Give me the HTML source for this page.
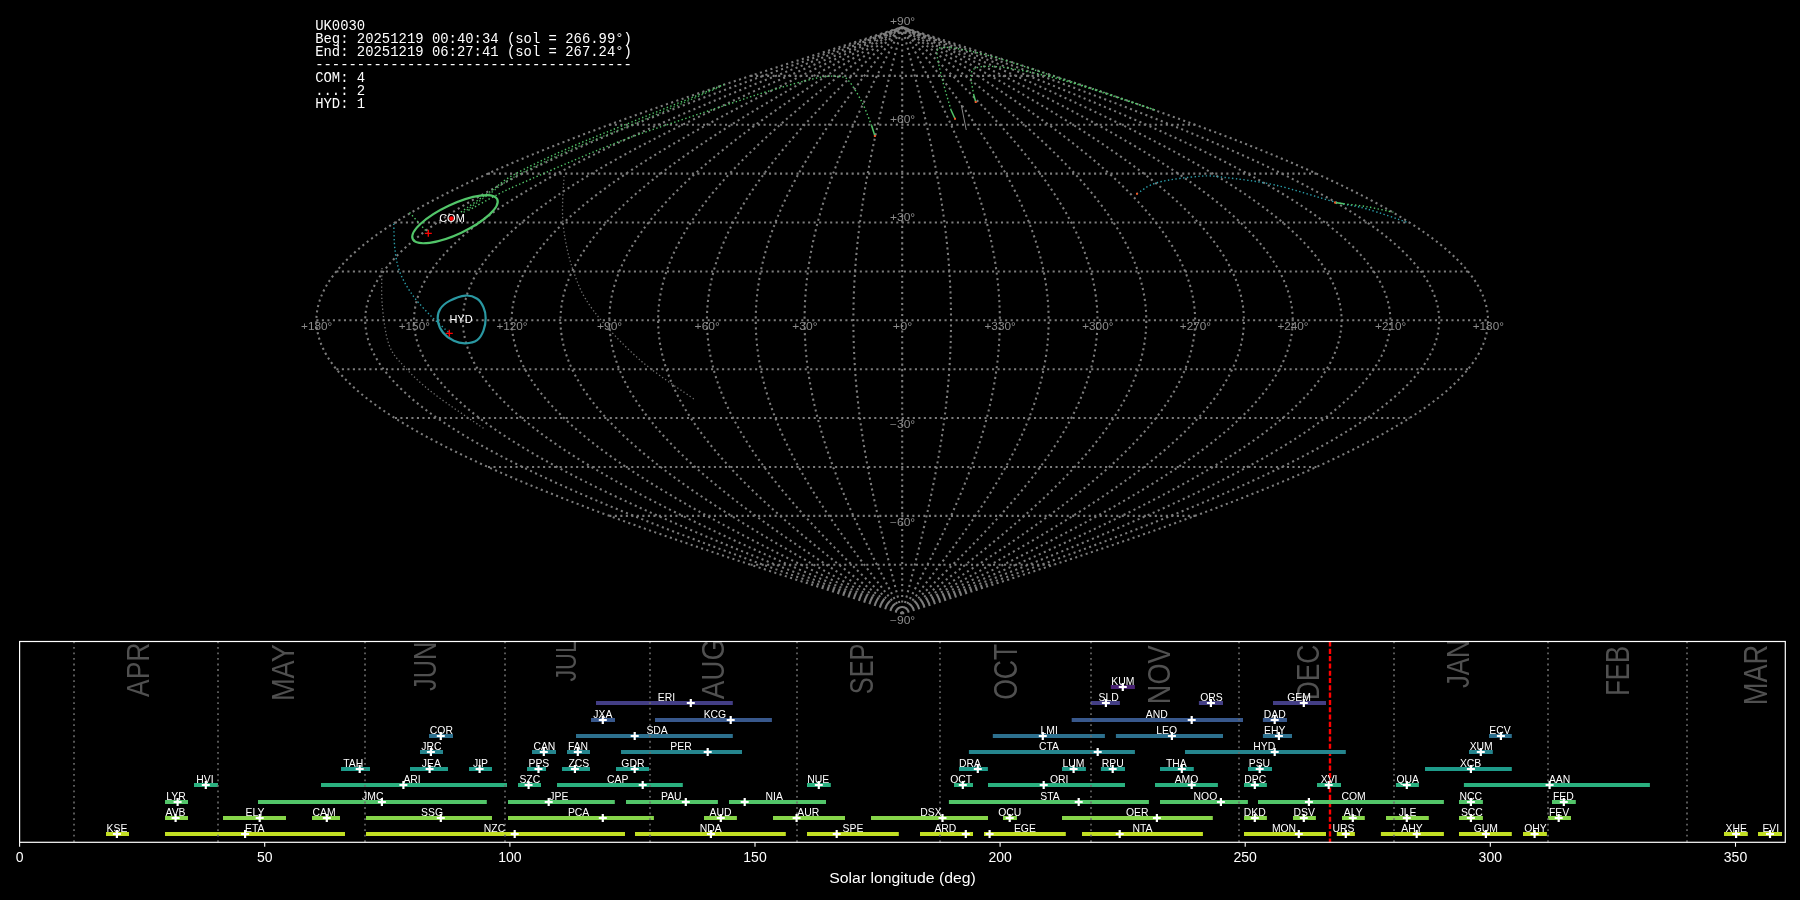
<!DOCTYPE html><html><head><meta charset="utf-8"><style>html,body{margin:0;padding:0;background:#000;width:1800px;height:900px;overflow:hidden}</style></head><body><svg width="1800" height="900" viewBox="0 0 1800 900" style="position:absolute;left:0;top:0;will-change:transform">
<rect width="1800" height="900" fill="#000"/>
<path d="M902.20,613.61 L899.64,612.80 L897.09,611.98 L894.53,611.17 L891.98,610.35 L889.42,609.54 L886.87,608.72 L884.31,607.91 L881.76,607.09 L879.20,606.28 L876.65,605.46 L874.09,604.65 L871.54,603.83 L868.99,603.02 L866.44,602.20 L863.89,601.39 L861.34,600.57 L858.79,599.76 L856.24,598.94 L853.69,598.13 L851.14,597.32 L848.60,596.50 L846.05,595.69 L843.51,594.87 L840.97,594.06 L838.42,593.24 L835.88,592.43 L833.35,591.61 L830.81,590.80 L828.27,589.98 L825.74,589.17 L823.20,588.35 L820.67,587.54 L818.14,586.72 L815.61,585.91 L813.08,585.09 L810.56,584.28 L808.04,583.46 L805.51,582.65 L802.99,581.83 L800.48,581.02 L797.96,580.21 L795.44,579.39 L792.93,578.58 L790.42,577.76 L787.91,576.95 L785.41,576.13 L782.90,575.32 L780.40,574.50 L777.90,573.69 L775.41,572.87 L772.91,572.06 L770.42,571.24 L767.93,570.43 L765.45,569.61 L762.96,568.80 L760.48,567.98 L758.00,567.17 L755.52,566.35 L753.05,565.54 L750.58,564.73 L748.11,563.91 L745.65,563.10 L743.19,562.28 L740.73,561.47 L738.27,560.65 L735.82,559.84 L733.37,559.02 L730.93,558.21 L728.48,557.39 L726.04,556.58 L723.61,555.76 L721.17,554.95 L718.75,554.13 L716.32,553.32 L713.90,552.50 L711.48,551.69 L709.06,550.87 L706.65,550.06 L704.25,549.24 L701.84,548.43 L699.44,547.62 L697.05,546.80 L694.65,545.99 L692.26,545.17 L689.88,544.36 L687.50,543.54 L685.12,542.73 L682.75,541.91 L680.38,541.10 L678.02,540.28 L675.66,539.47 L673.31,538.65 L670.96,537.84 L668.61,537.02 L666.27,536.21 L663.93,535.39 L661.60,534.58 L659.27,533.76 L656.94,532.95 L654.63,532.13 L652.31,531.32 L650.00,530.51 L647.70,529.69 L645.40,528.88 L643.10,528.06 L640.81,527.25 L638.53,526.43 L636.25,525.62 L633.97,524.80 L631.70,523.99 L629.44,523.17 L627.18,522.36 L624.92,521.54 L622.68,520.73 L620.43,519.91 L618.19,519.10 L615.96,518.28 L613.73,517.47 L611.51,516.65 L609.29,515.84 L607.08,515.03 L604.88,514.21 L602.68,513.40 L600.49,512.58 L598.30,511.77 L596.12,510.95 L593.94,510.14 L591.77,509.32 L589.60,508.51 L587.44,507.69 L585.29,506.88 L583.15,506.06 L581.00,505.25 L578.87,504.43 L576.74,503.62 L574.62,502.80 L572.50,501.99 L570.39,501.17 L568.29,500.36 L566.19,499.55 L564.10,498.73 L562.02,497.92 L559.94,497.10 L557.87,496.29 L555.80,495.47 L553.75,494.66 L551.70,493.84 L549.65,493.03 L547.61,492.21 L545.58,491.40 L543.56,490.58 L541.54,489.77 L539.53,488.95 L537.52,488.14 L535.53,487.32 L533.54,486.51 L531.55,485.69 L529.58,484.88 L527.61,484.06 L525.65,483.25 L523.69,482.44 L521.75,481.62 L519.81,480.81 L517.87,479.99 L515.95,479.18 L514.03,478.36 L512.12,477.55 L510.22,476.73 L508.32,475.92 L506.43,475.10 L504.55,474.29 L502.68,473.47 L500.81,472.66 L498.96,471.84 L497.10,471.03 L495.26,470.21 L493.43,469.40 L491.60,468.58 L489.78,467.77 L487.97,466.96 L486.17,466.14 L484.37,465.33 L482.58,464.51 L480.80,463.70 L479.03,462.88 L477.27,462.07 L475.51,461.25 L473.77,460.44 L472.03,459.62 L470.30,458.81 L468.57,457.99 L466.86,457.18 L465.15,456.36 L463.45,455.55 L461.76,454.73 L460.08,453.92 L458.41,453.10 L456.75,452.29 L455.09,451.47 L453.44,450.66 L451.80,449.85 L450.17,449.03 L448.55,448.22 L446.94,447.40 L445.34,446.59 L443.74,445.77 L442.15,444.96 L440.58,444.14 L439.01,443.33 L437.45,442.51 L435.89,441.70 L434.35,440.88 L432.82,440.07 L431.29,439.25 L429.78,438.44 L428.27,437.62 L426.77,436.81 L425.28,435.99 L423.80,435.18 L422.33,434.37 L420.87,433.55 L419.42,432.74 L417.98,431.92 L416.54,431.11 L415.12,430.29 L413.70,429.48 L412.30,428.66 L410.90,427.85 L409.51,427.03 L408.13,426.22 L406.76,425.40 L405.40,424.59 L404.06,423.77 L402.71,422.96 L401.38,422.14 L400.06,421.33 L398.75,420.51 L397.45,419.70 L396.16,418.88 L394.87,418.07 L393.60,417.26 L392.34,416.44 L391.08,415.63 L389.84,414.81 L388.60,414.00 L387.38,413.18 L386.17,412.37 L384.96,411.55 L383.77,410.74 L382.58,409.92 L381.40,409.11 L380.24,408.29 L379.08,407.48 L377.94,406.66 L376.80,405.85 L375.68,405.03 L374.56,404.22 L373.46,403.40 L372.36,402.59 L371.28,401.77 L370.20,400.96 L369.14,400.15 L368.08,399.33 L367.04,398.52 L366.00,397.70 L364.98,396.89 L363.96,396.07 L362.96,395.26 L361.97,394.44 L360.98,393.63 L360.01,392.81 L359.05,392.00 L358.09,391.18 L357.15,390.37 L356.22,389.55 L355.30,388.74 L354.39,387.92 L353.49,387.11 L352.60,386.29 L351.72,385.48 L350.85,384.67 L349.99,383.85 L349.14,383.04 L348.31,382.22 L347.48,381.41 L346.66,380.59 L345.86,379.78 L345.06,378.96 L344.28,378.15 L343.50,377.33 L342.74,376.52 L341.99,375.70 L341.25,374.89 L340.51,374.07 L339.79,373.26 L339.08,372.44 L338.38,371.63 L337.70,370.81 L337.02,370.00 L336.35,369.19 L335.69,368.37 L335.05,367.56 L334.41,366.74 L333.79,365.93 L333.18,365.11 L332.58,364.30 L331.98,363.48 L331.40,362.67 L330.83,361.85 L330.28,361.04 L329.73,360.22 L329.19,359.41 L328.67,358.59 L328.15,357.78 L327.65,356.96 L327.15,356.15 L326.67,355.33 L326.20,354.52 L325.74,353.70 L325.29,352.89 L324.85,352.08 L324.42,351.26 L324.01,350.45 L323.60,349.63 L323.21,348.82 L322.82,348.00 L322.45,347.19 L322.09,346.37 L321.74,345.56 L321.40,344.74 L321.07,343.93 L320.76,343.11 L320.45,342.30 L320.16,341.48 L319.87,340.67 L319.60,339.85 L319.34,339.04 L319.09,338.22 L318.85,337.41 L318.62,336.60 L318.40,335.78 L318.20,334.97 L318.00,334.15 L317.82,333.34 L317.64,332.52 L317.48,331.71 L317.33,330.89 L317.19,330.08 L317.06,329.26 L316.95,328.45 L316.84,327.63 L316.75,326.82 L316.66,326.00 L316.59,325.19 L316.53,324.37 L316.48,323.56 L316.44,322.74 L316.41,321.93 L316.40,321.11 L316.39,320.30 L316.40,319.49 L316.41,318.67 L316.44,317.86 L316.48,317.04 L316.53,316.23 L316.59,315.41 L316.66,314.60 L316.75,313.78 L316.84,312.97 L316.95,312.15 L317.06,311.34 L317.19,310.52 L317.33,309.71 L317.48,308.89 L317.64,308.08 L317.82,307.26 L318.00,306.45 L318.20,305.63 L318.40,304.82 L318.62,304.00 L318.85,303.19 L319.09,302.38 L319.34,301.56 L319.60,300.75 L319.87,299.93 L320.16,299.12 L320.45,298.30 L320.76,297.49 L321.07,296.67 L321.40,295.86 L321.74,295.04 L322.09,294.23 L322.45,293.41 L322.82,292.60 L323.21,291.78 L323.60,290.97 L324.01,290.15 L324.42,289.34 L324.85,288.52 L325.29,287.71 L325.74,286.90 L326.20,286.08 L326.67,285.27 L327.15,284.45 L327.65,283.64 L328.15,282.82 L328.67,282.01 L329.19,281.19 L329.73,280.38 L330.28,279.56 L330.83,278.75 L331.40,277.93 L331.98,277.12 L332.58,276.30 L333.18,275.49 L333.79,274.67 L334.41,273.86 L335.05,273.04 L335.69,272.23 L336.35,271.42 L337.02,270.60 L337.70,269.79 L338.38,268.97 L339.08,268.16 L339.79,267.34 L340.51,266.53 L341.25,265.71 L341.99,264.90 L342.74,264.08 L343.50,263.27 L344.28,262.45 L345.06,261.64 L345.86,260.82 L346.66,260.01 L347.48,259.19 L348.31,258.38 L349.14,257.56 L349.99,256.75 L350.85,255.93 L351.72,255.12 L352.60,254.31 L353.49,253.49 L354.39,252.68 L355.30,251.86 L356.22,251.05 L357.15,250.23 L358.09,249.42 L359.05,248.60 L360.01,247.79 L360.98,246.97 L361.97,246.16 L362.96,245.34 L363.96,244.53 L364.98,243.71 L366.00,242.90 L367.04,242.08 L368.08,241.27 L369.14,240.45 L370.20,239.64 L371.28,238.83 L372.36,238.01 L373.46,237.20 L374.56,236.38 L375.68,235.57 L376.80,234.75 L377.94,233.94 L379.08,233.12 L380.24,232.31 L381.40,231.49 L382.58,230.68 L383.77,229.86 L384.96,229.05 L386.17,228.23 L387.38,227.42 L388.60,226.60 L389.84,225.79 L391.08,224.97 L392.34,224.16 L393.60,223.34 L394.87,222.53 L396.16,221.72 L397.45,220.90 L398.75,220.09 L400.06,219.27 L401.38,218.46 L402.71,217.64 L404.06,216.83 L405.40,216.01 L406.76,215.20 L408.13,214.38 L409.51,213.57 L410.90,212.75 L412.30,211.94 L413.70,211.12 L415.12,210.31 L416.54,209.49 L417.98,208.68 L419.42,207.86 L420.87,207.05 L422.33,206.24 L423.80,205.42 L425.28,204.61 L426.77,203.79 L428.27,202.98 L429.78,202.16 L431.29,201.35 L432.82,200.53 L434.35,199.72 L435.89,198.90 L437.45,198.09 L439.01,197.27 L440.58,196.46 L442.15,195.64 L443.74,194.83 L445.34,194.01 L446.94,193.20 L448.55,192.38 L450.17,191.57 L451.80,190.75 L453.44,189.94 L455.09,189.13 L456.75,188.31 L458.41,187.50 L460.08,186.68 L461.76,185.87 L463.45,185.05 L465.15,184.24 L466.86,183.42 L468.57,182.61 L470.30,181.79 L472.03,180.98 L473.77,180.16 L475.51,179.35 L477.27,178.53 L479.03,177.72 L480.80,176.90 L482.58,176.09 L484.37,175.27 L486.17,174.46 L487.97,173.65 L489.78,172.83 L491.60,172.02 L493.43,171.20 L495.26,170.39 L497.10,169.57 L498.96,168.76 L500.81,167.94 L502.68,167.13 L504.55,166.31 L506.43,165.50 L508.32,164.68 L510.22,163.87 L512.12,163.05 L514.03,162.24 L515.95,161.42 L517.87,160.61 L519.81,159.79 L521.75,158.98 L523.69,158.16 L525.65,157.35 L527.61,156.54 L529.58,155.72 L531.55,154.91 L533.54,154.09 L535.53,153.28 L537.52,152.46 L539.53,151.65 L541.54,150.83 L543.56,150.02 L545.58,149.20 L547.61,148.39 L549.65,147.57 L551.70,146.76 L553.75,145.94 L555.80,145.13 L557.87,144.31 L559.94,143.50 L562.02,142.68 L564.10,141.87 L566.19,141.06 L568.29,140.24 L570.39,139.43 L572.50,138.61 L574.62,137.80 L576.74,136.98 L578.87,136.17 L581.00,135.35 L583.15,134.54 L585.29,133.72 L587.44,132.91 L589.60,132.09 L591.77,131.28 L593.94,130.46 L596.12,129.65 L598.30,128.83 L600.49,128.02 L602.68,127.20 L604.88,126.39 L607.08,125.57 L609.29,124.76 L611.51,123.95 L613.73,123.13 L615.96,122.32 L618.19,121.50 L620.43,120.69 L622.68,119.87 L624.92,119.06 L627.18,118.24 L629.44,117.43 L631.70,116.61 L633.97,115.80 L636.25,114.98 L638.53,114.17 L640.81,113.35 L643.10,112.54 L645.40,111.72 L647.70,110.91 L650.00,110.09 L652.31,109.28 L654.63,108.47 L656.94,107.65 L659.27,106.84 L661.60,106.02 L663.93,105.21 L666.27,104.39 L668.61,103.58 L670.96,102.76 L673.31,101.95 L675.66,101.13 L678.02,100.32 L680.38,99.50 L682.75,98.69 L685.12,97.87 L687.50,97.06 L689.88,96.24 L692.26,95.43 L694.65,94.61 L697.05,93.80 L699.44,92.98 L701.84,92.17 L704.25,91.36 L706.65,90.54 L709.06,89.73 L711.48,88.91 L713.90,88.10 L716.32,87.28 L718.75,86.47 L721.17,85.65 L723.61,84.84 L726.04,84.02 L728.48,83.21 L730.93,82.39 L733.37,81.58 L735.82,80.76 L738.27,79.95 L740.73,79.13 L743.19,78.32 L745.65,77.50 L748.11,76.69 L750.58,75.88 L753.05,75.06 L755.52,74.25 L758.00,73.43 L760.48,72.62 L762.96,71.80 L765.45,70.99 L767.93,70.17 L770.42,69.36 L772.91,68.54 L775.41,67.73 L777.90,66.91 L780.40,66.10 L782.90,65.28 L785.41,64.47 L787.91,63.65 L790.42,62.84 L792.93,62.02 L795.44,61.21 L797.96,60.39 L800.48,59.58 L802.99,58.77 L805.51,57.95 L808.04,57.14 L810.56,56.32 L813.08,55.51 L815.61,54.69 L818.14,53.88 L820.67,53.06 L823.20,52.25 L825.74,51.43 L828.27,50.62 L830.81,49.80 L833.35,48.99 L835.88,48.17 L838.42,47.36 L840.97,46.54 L843.51,45.73 L846.05,44.91 L848.60,44.10 L851.14,43.29 L853.69,42.47 L856.24,41.66 L858.79,40.84 L861.34,40.03 L863.89,39.21 L866.44,38.40 L868.99,37.58 L871.54,36.77 L874.09,35.95 L876.65,35.14 L879.20,34.32 L881.76,33.51 L884.31,32.69 L886.87,31.88 L889.42,31.06 L891.98,30.25 L894.53,29.43 L897.09,28.62 L899.64,27.80 L902.20,26.99 M902.20,613.61 L899.86,612.80 L897.51,611.98 L895.17,611.17 L892.83,610.35 L890.49,609.54 L888.14,608.72 L885.80,607.91 L883.46,607.09 L881.12,606.28 L878.78,605.46 L876.44,604.65 L874.10,603.83 L871.76,603.02 L869.42,602.20 L867.08,601.39 L864.74,600.57 L862.40,599.76 L860.07,598.94 L857.73,598.13 L855.40,597.32 L853.06,596.50 L850.73,595.69 L848.40,594.87 L846.07,594.06 L843.74,593.24 L841.41,592.43 L839.08,591.61 L836.76,590.80 L834.43,589.98 L832.11,589.17 L829.79,588.35 L827.47,587.54 L825.15,586.72 L822.83,585.91 L820.51,585.09 L818.20,584.28 L815.88,583.46 L813.57,582.65 L811.26,581.83 L808.95,581.02 L806.65,580.21 L804.34,579.39 L802.04,578.58 L799.74,577.76 L797.44,576.95 L795.14,576.13 L792.85,575.32 L790.55,574.50 L788.26,573.69 L785.97,572.87 L783.69,572.06 L781.40,571.24 L779.12,570.43 L776.84,569.61 L774.56,568.80 L772.29,567.98 L770.02,567.17 L767.75,566.35 L765.48,565.54 L763.22,564.73 L760.95,563.91 L758.69,563.10 L756.44,562.28 L754.18,561.47 L751.93,560.65 L749.69,559.84 L747.44,559.02 L745.20,558.21 L742.96,557.39 L740.72,556.58 L738.49,555.76 L736.26,554.95 L734.03,554.13 L731.81,553.32 L729.59,552.50 L727.37,551.69 L725.16,550.87 L722.95,550.06 L720.74,549.24 L718.54,548.43 L716.34,547.62 L714.14,546.80 L711.95,545.99 L709.76,545.17 L707.57,544.36 L705.39,543.54 L703.21,542.73 L701.04,541.91 L698.87,541.10 L696.70,540.28 L694.54,539.47 L692.38,538.65 L690.23,537.84 L688.07,537.02 L685.93,536.21 L683.79,535.39 L681.65,534.58 L679.51,533.76 L677.38,532.95 L675.26,532.13 L673.14,531.32 L671.02,530.51 L668.91,529.69 L666.80,528.88 L664.69,528.06 L662.60,527.25 L660.50,526.43 L658.41,525.62 L656.33,524.80 L654.24,523.99 L652.17,523.17 L650.10,522.36 L648.03,521.54 L645.97,520.73 L643.91,519.91 L641.86,519.10 L639.81,518.28 L637.77,517.47 L635.74,516.65 L633.70,515.84 L631.68,515.03 L629.66,514.21 L627.64,513.40 L625.63,512.58 L623.62,511.77 L621.62,510.95 L619.63,510.14 L617.64,509.32 L615.65,508.51 L613.67,507.69 L611.70,506.88 L609.73,506.06 L607.77,505.25 L605.81,504.43 L603.86,503.62 L601.92,502.80 L599.98,501.99 L598.04,501.17 L596.12,500.36 L594.19,499.55 L592.28,498.73 L590.37,497.92 L588.46,497.10 L586.56,496.29 L584.67,495.47 L582.78,494.66 L580.90,493.84 L579.03,493.03 L577.16,492.21 L575.30,491.40 L573.44,490.58 L571.59,489.77 L569.75,488.95 L567.91,488.14 L566.08,487.32 L564.26,486.51 L562.44,485.69 L560.63,484.88 L558.83,484.06 L557.03,483.25 L555.24,482.44 L553.45,481.62 L551.67,480.81 L549.90,479.99 L548.14,479.18 L546.38,478.36 L544.63,477.55 L542.88,476.73 L541.14,475.92 L539.41,475.10 L537.69,474.29 L535.97,473.47 L534.26,472.66 L532.56,471.84 L530.86,471.03 L529.17,470.21 L527.49,469.40 L525.82,468.58 L524.15,467.77 L522.49,466.96 L520.84,466.14 L519.19,465.33 L517.55,464.51 L515.92,463.70 L514.30,462.88 L512.68,462.07 L511.07,461.25 L509.47,460.44 L507.87,459.62 L506.29,458.81 L504.71,457.99 L503.14,457.18 L501.57,456.36 L500.02,455.55 L498.47,454.73 L496.93,453.92 L495.39,453.10 L493.87,452.29 L492.35,451.47 L490.84,450.66 L489.34,449.85 L487.84,449.03 L486.36,448.22 L484.88,447.40 L483.41,446.59 L481.95,445.77 L480.49,444.96 L479.04,444.14 L477.61,443.33 L476.18,442.51 L474.75,441.70 L473.34,440.88 L471.93,440.07 L470.53,439.25 L469.15,438.44 L467.76,437.62 L466.39,436.81 L465.03,435.99 L463.67,435.18 L462.32,434.37 L460.98,433.55 L459.65,432.74 L458.33,431.92 L457.01,431.11 L455.71,430.29 L454.41,429.48 L453.12,428.66 L451.84,427.85 L450.57,427.03 L449.31,426.22 L448.05,425.40 L446.80,424.59 L445.57,423.77 L444.34,422.96 L443.12,422.14 L441.91,421.33 L440.71,420.51 L439.51,419.70 L438.33,418.88 L437.15,418.07 L435.98,417.26 L434.83,416.44 L433.68,415.63 L432.54,414.81 L431.40,414.00 L430.28,413.18 L429.17,412.37 L428.06,411.55 L426.97,410.74 L425.88,409.92 L424.80,409.11 L423.74,408.29 L422.68,407.48 L421.63,406.66 L420.59,405.85 L419.55,405.03 L418.53,404.22 L417.52,403.40 L416.51,402.59 L415.52,401.77 L414.53,400.96 L413.56,400.15 L412.59,399.33 L411.63,398.52 L410.68,397.70 L409.75,396.89 L408.82,396.07 L407.90,395.26 L406.98,394.44 L406.08,393.63 L405.19,392.81 L404.31,392.00 L403.44,391.18 L402.57,390.37 L401.72,389.55 L400.87,388.74 L400.04,387.92 L399.21,387.11 L398.40,386.29 L397.59,385.48 L396.80,384.67 L396.01,383.85 L395.23,383.04 L394.46,382.22 L393.71,381.41 L392.96,380.59 L392.22,379.78 L391.49,378.96 L390.77,378.15 L390.06,377.33 L389.36,376.52 L388.67,375.70 L387.99,374.89 L387.32,374.07 L386.66,373.26 L386.01,372.44 L385.37,371.63 L384.74,370.81 L384.12,370.00 L383.51,369.19 L382.90,368.37 L382.31,367.56 L381.73,366.74 L381.16,365.93 L380.60,365.11 L380.04,364.30 L379.50,363.48 L378.97,362.67 L378.45,361.85 L377.94,361.04 L377.43,360.22 L376.94,359.41 L376.46,358.59 L375.99,357.78 L375.53,356.96 L375.07,356.15 L374.63,355.33 L374.20,354.52 L373.78,353.70 L373.37,352.89 L372.96,352.08 L372.57,351.26 L372.19,350.45 L371.82,349.63 L371.46,348.82 L371.11,348.00 L370.76,347.19 L370.43,346.37 L370.11,345.56 L369.80,344.74 L369.50,343.93 L369.21,343.11 L368.93,342.30 L368.66,341.48 L368.40,340.67 L368.15,339.85 L367.91,339.04 L367.68,338.22 L367.46,337.41 L367.25,336.60 L367.05,335.78 L366.86,334.97 L366.68,334.15 L366.52,333.34 L366.36,332.52 L366.21,331.71 L366.07,330.89 L365.94,330.08 L365.83,329.26 L365.72,328.45 L365.62,327.63 L365.53,326.82 L365.46,326.00 L365.39,325.19 L365.34,324.37 L365.29,323.56 L365.25,322.74 L365.23,321.93 L365.21,321.11 L365.21,320.30 L365.21,319.49 L365.23,318.67 L365.25,317.86 L365.29,317.04 L365.34,316.23 L365.39,315.41 L365.46,314.60 L365.53,313.78 L365.62,312.97 L365.72,312.15 L365.83,311.34 L365.94,310.52 L366.07,309.71 L366.21,308.89 L366.36,308.08 L366.52,307.26 L366.68,306.45 L366.86,305.63 L367.05,304.82 L367.25,304.00 L367.46,303.19 L367.68,302.38 L367.91,301.56 L368.15,300.75 L368.40,299.93 L368.66,299.12 L368.93,298.30 L369.21,297.49 L369.50,296.67 L369.80,295.86 L370.11,295.04 L370.43,294.23 L370.76,293.41 L371.11,292.60 L371.46,291.78 L371.82,290.97 L372.19,290.15 L372.57,289.34 L372.96,288.52 L373.37,287.71 L373.78,286.90 L374.20,286.08 L374.63,285.27 L375.07,284.45 L375.53,283.64 L375.99,282.82 L376.46,282.01 L376.94,281.19 L377.43,280.38 L377.94,279.56 L378.45,278.75 L378.97,277.93 L379.50,277.12 L380.04,276.30 L380.60,275.49 L381.16,274.67 L381.73,273.86 L382.31,273.04 L382.90,272.23 L383.51,271.42 L384.12,270.60 L384.74,269.79 L385.37,268.97 L386.01,268.16 L386.66,267.34 L387.32,266.53 L387.99,265.71 L388.67,264.90 L389.36,264.08 L390.06,263.27 L390.77,262.45 L391.49,261.64 L392.22,260.82 L392.96,260.01 L393.71,259.19 L394.46,258.38 L395.23,257.56 L396.01,256.75 L396.80,255.93 L397.59,255.12 L398.40,254.31 L399.21,253.49 L400.04,252.68 L400.87,251.86 L401.72,251.05 L402.57,250.23 L403.44,249.42 L404.31,248.60 L405.19,247.79 L406.08,246.97 L406.98,246.16 L407.90,245.34 L408.82,244.53 L409.75,243.71 L410.68,242.90 L411.63,242.08 L412.59,241.27 L413.56,240.45 L414.53,239.64 L415.52,238.83 L416.51,238.01 L417.52,237.20 L418.53,236.38 L419.55,235.57 L420.59,234.75 L421.63,233.94 L422.68,233.12 L423.74,232.31 L424.80,231.49 L425.88,230.68 L426.97,229.86 L428.06,229.05 L429.17,228.23 L430.28,227.42 L431.40,226.60 L432.54,225.79 L433.68,224.97 L434.83,224.16 L435.98,223.34 L437.15,222.53 L438.33,221.72 L439.51,220.90 L440.71,220.09 L441.91,219.27 L443.12,218.46 L444.34,217.64 L445.57,216.83 L446.80,216.01 L448.05,215.20 L449.31,214.38 L450.57,213.57 L451.84,212.75 L453.12,211.94 L454.41,211.12 L455.71,210.31 L457.01,209.49 L458.33,208.68 L459.65,207.86 L460.98,207.05 L462.32,206.24 L463.67,205.42 L465.03,204.61 L466.39,203.79 L467.76,202.98 L469.15,202.16 L470.53,201.35 L471.93,200.53 L473.34,199.72 L474.75,198.90 L476.18,198.09 L477.61,197.27 L479.04,196.46 L480.49,195.64 L481.95,194.83 L483.41,194.01 L484.88,193.20 L486.36,192.38 L487.84,191.57 L489.34,190.75 L490.84,189.94 L492.35,189.13 L493.87,188.31 L495.39,187.50 L496.93,186.68 L498.47,185.87 L500.02,185.05 L501.57,184.24 L503.14,183.42 L504.71,182.61 L506.29,181.79 L507.87,180.98 L509.47,180.16 L511.07,179.35 L512.68,178.53 L514.30,177.72 L515.92,176.90 L517.55,176.09 L519.19,175.27 L520.84,174.46 L522.49,173.65 L524.15,172.83 L525.82,172.02 L527.49,171.20 L529.17,170.39 L530.86,169.57 L532.56,168.76 L534.26,167.94 L535.97,167.13 L537.69,166.31 L539.41,165.50 L541.14,164.68 L542.88,163.87 L544.63,163.05 L546.38,162.24 L548.14,161.42 L549.90,160.61 L551.67,159.79 L553.45,158.98 L555.24,158.16 L557.03,157.35 L558.83,156.54 L560.63,155.72 L562.44,154.91 L564.26,154.09 L566.08,153.28 L567.91,152.46 L569.75,151.65 L571.59,150.83 L573.44,150.02 L575.30,149.20 L577.16,148.39 L579.03,147.57 L580.90,146.76 L582.78,145.94 L584.67,145.13 L586.56,144.31 L588.46,143.50 L590.37,142.68 L592.28,141.87 L594.19,141.06 L596.12,140.24 L598.04,139.43 L599.98,138.61 L601.92,137.80 L603.86,136.98 L605.81,136.17 L607.77,135.35 L609.73,134.54 L611.70,133.72 L613.67,132.91 L615.65,132.09 L617.64,131.28 L619.63,130.46 L621.62,129.65 L623.62,128.83 L625.63,128.02 L627.64,127.20 L629.66,126.39 L631.68,125.57 L633.70,124.76 L635.74,123.95 L637.77,123.13 L639.81,122.32 L641.86,121.50 L643.91,120.69 L645.97,119.87 L648.03,119.06 L650.10,118.24 L652.17,117.43 L654.24,116.61 L656.33,115.80 L658.41,114.98 L660.50,114.17 L662.60,113.35 L664.69,112.54 L666.80,111.72 L668.91,110.91 L671.02,110.09 L673.14,109.28 L675.26,108.47 L677.38,107.65 L679.51,106.84 L681.65,106.02 L683.79,105.21 L685.93,104.39 L688.07,103.58 L690.23,102.76 L692.38,101.95 L694.54,101.13 L696.70,100.32 L698.87,99.50 L701.04,98.69 L703.21,97.87 L705.39,97.06 L707.57,96.24 L709.76,95.43 L711.95,94.61 L714.14,93.80 L716.34,92.98 L718.54,92.17 L720.74,91.36 L722.95,90.54 L725.16,89.73 L727.37,88.91 L729.59,88.10 L731.81,87.28 L734.03,86.47 L736.26,85.65 L738.49,84.84 L740.72,84.02 L742.96,83.21 L745.20,82.39 L747.44,81.58 L749.69,80.76 L751.93,79.95 L754.18,79.13 L756.44,78.32 L758.69,77.50 L760.95,76.69 L763.22,75.88 L765.48,75.06 L767.75,74.25 L770.02,73.43 L772.29,72.62 L774.56,71.80 L776.84,70.99 L779.12,70.17 L781.40,69.36 L783.69,68.54 L785.97,67.73 L788.26,66.91 L790.55,66.10 L792.85,65.28 L795.14,64.47 L797.44,63.65 L799.74,62.84 L802.04,62.02 L804.34,61.21 L806.65,60.39 L808.95,59.58 L811.26,58.77 L813.57,57.95 L815.88,57.14 L818.20,56.32 L820.51,55.51 L822.83,54.69 L825.15,53.88 L827.47,53.06 L829.79,52.25 L832.11,51.43 L834.43,50.62 L836.76,49.80 L839.08,48.99 L841.41,48.17 L843.74,47.36 L846.07,46.54 L848.40,45.73 L850.73,44.91 L853.06,44.10 L855.40,43.29 L857.73,42.47 L860.07,41.66 L862.40,40.84 L864.74,40.03 L867.08,39.21 L869.42,38.40 L871.76,37.58 L874.10,36.77 L876.44,35.95 L878.78,35.14 L881.12,34.32 L883.46,33.51 L885.80,32.69 L888.14,31.88 L890.49,31.06 L892.83,30.25 L895.17,29.43 L897.51,28.62 L899.86,27.80 L902.20,26.99 M902.20,613.61 L900.07,612.80 L897.94,611.98 L895.81,611.17 L893.68,610.35 L891.55,609.54 L889.42,608.72 L887.29,607.91 L885.16,607.09 L883.03,606.28 L880.91,605.46 L878.78,604.65 L876.65,603.83 L874.52,603.02 L872.40,602.20 L870.27,601.39 L868.15,600.57 L866.02,599.76 L863.90,598.94 L861.78,598.13 L859.65,597.32 L857.53,596.50 L855.41,595.69 L853.29,594.87 L851.17,594.06 L849.05,593.24 L846.94,592.43 L844.82,591.61 L842.71,590.80 L840.59,589.98 L838.48,589.17 L836.37,588.35 L834.26,587.54 L832.15,586.72 L830.04,585.91 L827.94,585.09 L825.83,584.28 L823.73,583.46 L821.63,582.65 L819.53,581.83 L817.43,581.02 L815.33,580.21 L813.24,579.39 L811.14,578.58 L809.05,577.76 L806.96,576.95 L804.87,576.13 L802.79,575.32 L800.70,574.50 L798.62,573.69 L796.54,572.87 L794.46,572.06 L792.38,571.24 L790.31,570.43 L788.24,569.61 L786.17,568.80 L784.10,567.98 L782.03,567.17 L779.97,566.35 L777.91,565.54 L775.85,564.73 L773.79,563.91 L771.74,563.10 L769.69,562.28 L767.64,561.47 L765.59,560.65 L763.55,559.84 L761.51,559.02 L759.47,558.21 L757.44,557.39 L755.40,556.58 L753.37,555.76 L751.35,554.95 L749.32,554.13 L747.30,553.32 L745.28,552.50 L743.27,551.69 L741.25,550.87 L739.24,550.06 L737.24,549.24 L735.23,548.43 L733.23,547.62 L731.24,546.80 L729.24,545.99 L727.25,545.17 L725.27,544.36 L723.28,543.54 L721.30,542.73 L719.33,541.91 L717.35,541.10 L715.38,540.28 L713.42,539.47 L711.45,538.65 L709.50,537.84 L707.54,537.02 L705.59,536.21 L703.64,535.39 L701.70,534.58 L699.76,533.76 L697.82,532.95 L695.89,532.13 L693.96,531.32 L692.04,530.51 L690.11,529.69 L688.20,528.88 L686.29,528.06 L684.38,527.25 L682.47,526.43 L680.57,525.62 L678.68,524.80 L676.79,523.99 L674.90,523.17 L673.02,522.36 L671.14,521.54 L669.26,520.73 L667.39,519.91 L665.53,519.10 L663.67,518.28 L661.81,517.47 L659.96,516.65 L658.11,515.84 L656.27,515.03 L654.43,514.21 L652.60,513.40 L650.77,512.58 L648.95,511.77 L647.13,510.95 L645.32,510.14 L643.51,509.32 L641.70,508.51 L639.90,507.69 L638.11,506.88 L636.32,506.06 L634.54,505.25 L632.76,504.43 L630.98,503.62 L629.22,502.80 L627.45,501.99 L625.69,501.17 L623.94,500.36 L622.19,499.55 L620.45,498.73 L618.72,497.92 L616.98,497.10 L615.26,496.29 L613.54,495.47 L611.82,494.66 L610.11,493.84 L608.41,493.03 L606.71,492.21 L605.02,491.40 L603.33,490.58 L601.65,489.77 L599.97,488.95 L598.30,488.14 L596.64,487.32 L594.98,486.51 L593.33,485.69 L591.68,484.88 L590.04,484.06 L588.41,483.25 L586.78,482.44 L585.16,481.62 L583.54,480.81 L581.93,479.99 L580.32,479.18 L578.73,478.36 L577.13,477.55 L575.55,476.73 L573.97,475.92 L572.39,475.10 L570.83,474.29 L569.27,473.47 L567.71,472.66 L566.16,471.84 L564.62,471.03 L563.09,470.21 L561.56,469.40 L560.03,468.58 L558.52,467.77 L557.01,466.96 L555.51,466.14 L554.01,465.33 L552.52,464.51 L551.04,463.70 L549.56,462.88 L548.09,462.07 L546.63,461.25 L545.17,460.44 L543.72,459.62 L542.28,458.81 L540.84,457.99 L539.42,457.18 L537.99,456.36 L536.58,455.55 L535.17,454.73 L533.77,453.92 L532.38,453.10 L530.99,452.29 L529.61,451.47 L528.24,450.66 L526.87,449.85 L525.51,449.03 L524.16,448.22 L522.82,447.40 L521.48,446.59 L520.15,445.77 L518.83,444.96 L517.51,444.14 L516.21,443.33 L514.90,442.51 L513.61,441.70 L512.33,440.88 L511.05,440.07 L509.78,439.25 L508.51,438.44 L507.26,437.62 L506.01,436.81 L504.77,435.99 L503.54,435.18 L502.31,434.37 L501.09,433.55 L499.88,432.74 L498.68,431.92 L497.48,431.11 L496.30,430.29 L495.12,429.48 L493.95,428.66 L492.78,427.85 L491.63,427.03 L490.48,426.22 L489.34,425.40 L488.20,424.59 L487.08,423.77 L485.96,422.96 L484.85,422.14 L483.75,421.33 L482.66,420.51 L481.57,419.70 L480.50,418.88 L479.43,418.07 L478.37,417.26 L477.31,416.44 L476.27,415.63 L475.23,414.81 L474.20,414.00 L473.18,413.18 L472.17,412.37 L471.17,411.55 L470.17,410.74 L469.18,409.92 L468.20,409.11 L467.23,408.29 L466.27,407.48 L465.32,406.66 L464.37,405.85 L463.43,405.03 L462.50,404.22 L461.58,403.40 L460.67,402.59 L459.76,401.77 L458.87,400.96 L457.98,400.15 L457.10,399.33 L456.23,398.52 L455.37,397.70 L454.51,396.89 L453.67,396.07 L452.83,395.26 L452.00,394.44 L451.19,393.63 L450.37,392.81 L449.57,392.00 L448.78,391.18 L447.99,390.37 L447.22,389.55 L446.45,388.74 L445.69,387.92 L444.94,387.11 L444.20,386.29 L443.47,385.48 L442.74,384.67 L442.03,383.85 L441.32,383.04 L440.62,382.22 L439.93,381.41 L439.25,380.59 L438.58,379.78 L437.92,378.96 L437.26,378.15 L436.62,377.33 L435.98,376.52 L435.36,375.70 L434.74,374.89 L434.13,374.07 L433.53,373.26 L432.94,372.44 L432.35,371.63 L431.78,370.81 L431.21,370.00 L430.66,369.19 L430.11,368.37 L429.57,367.56 L429.05,366.74 L428.53,365.93 L428.02,365.11 L427.51,364.30 L427.02,363.48 L426.54,362.67 L426.06,361.85 L425.60,361.04 L425.14,360.22 L424.69,359.41 L424.25,358.59 L423.83,357.78 L423.41,356.96 L422.99,356.15 L422.59,355.33 L422.20,354.52 L421.82,353.70 L421.44,352.89 L421.08,352.08 L420.72,351.26 L420.37,350.45 L420.04,349.63 L419.71,348.82 L419.39,348.00 L419.08,347.19 L418.78,346.37 L418.48,345.56 L418.20,344.74 L417.93,343.93 L417.66,343.11 L417.41,342.30 L417.16,341.48 L416.93,340.67 L416.70,339.85 L416.48,339.04 L416.27,338.22 L416.07,337.41 L415.88,336.60 L415.70,335.78 L415.53,334.97 L415.37,334.15 L415.21,333.34 L415.07,332.52 L414.94,331.71 L414.81,330.89 L414.69,330.08 L414.59,329.26 L414.49,328.45 L414.40,327.63 L414.32,326.82 L414.25,326.00 L414.19,325.19 L414.14,324.37 L414.10,323.56 L414.07,322.74 L414.04,321.93 L414.03,321.11 L414.03,320.30 L414.03,319.49 L414.04,318.67 L414.07,317.86 L414.10,317.04 L414.14,316.23 L414.19,315.41 L414.25,314.60 L414.32,313.78 L414.40,312.97 L414.49,312.15 L414.59,311.34 L414.69,310.52 L414.81,309.71 L414.94,308.89 L415.07,308.08 L415.21,307.26 L415.37,306.45 L415.53,305.63 L415.70,304.82 L415.88,304.00 L416.07,303.19 L416.27,302.38 L416.48,301.56 L416.70,300.75 L416.93,299.93 L417.16,299.12 L417.41,298.30 L417.66,297.49 L417.93,296.67 L418.20,295.86 L418.48,295.04 L418.78,294.23 L419.08,293.41 L419.39,292.60 L419.71,291.78 L420.04,290.97 L420.37,290.15 L420.72,289.34 L421.08,288.52 L421.44,287.71 L421.82,286.90 L422.20,286.08 L422.59,285.27 L422.99,284.45 L423.41,283.64 L423.83,282.82 L424.25,282.01 L424.69,281.19 L425.14,280.38 L425.60,279.56 L426.06,278.75 L426.54,277.93 L427.02,277.12 L427.51,276.30 L428.02,275.49 L428.53,274.67 L429.05,273.86 L429.57,273.04 L430.11,272.23 L430.66,271.42 L431.21,270.60 L431.78,269.79 L432.35,268.97 L432.94,268.16 L433.53,267.34 L434.13,266.53 L434.74,265.71 L435.36,264.90 L435.98,264.08 L436.62,263.27 L437.26,262.45 L437.92,261.64 L438.58,260.82 L439.25,260.01 L439.93,259.19 L440.62,258.38 L441.32,257.56 L442.03,256.75 L442.74,255.93 L443.47,255.12 L444.20,254.31 L444.94,253.49 L445.69,252.68 L446.45,251.86 L447.22,251.05 L447.99,250.23 L448.78,249.42 L449.57,248.60 L450.37,247.79 L451.19,246.97 L452.00,246.16 L452.83,245.34 L453.67,244.53 L454.51,243.71 L455.37,242.90 L456.23,242.08 L457.10,241.27 L457.98,240.45 L458.87,239.64 L459.76,238.83 L460.67,238.01 L461.58,237.20 L462.50,236.38 L463.43,235.57 L464.37,234.75 L465.32,233.94 L466.27,233.12 L467.23,232.31 L468.20,231.49 L469.18,230.68 L470.17,229.86 L471.17,229.05 L472.17,228.23 L473.18,227.42 L474.20,226.60 L475.23,225.79 L476.27,224.97 L477.31,224.16 L478.37,223.34 L479.43,222.53 L480.50,221.72 L481.57,220.90 L482.66,220.09 L483.75,219.27 L484.85,218.46 L485.96,217.64 L487.08,216.83 L488.20,216.01 L489.34,215.20 L490.48,214.38 L491.63,213.57 L492.78,212.75 L493.95,211.94 L495.12,211.12 L496.30,210.31 L497.48,209.49 L498.68,208.68 L499.88,207.86 L501.09,207.05 L502.31,206.24 L503.54,205.42 L504.77,204.61 L506.01,203.79 L507.26,202.98 L508.51,202.16 L509.78,201.35 L511.05,200.53 L512.33,199.72 L513.61,198.90 L514.90,198.09 L516.21,197.27 L517.51,196.46 L518.83,195.64 L520.15,194.83 L521.48,194.01 L522.82,193.20 L524.16,192.38 L525.51,191.57 L526.87,190.75 L528.24,189.94 L529.61,189.13 L530.99,188.31 L532.38,187.50 L533.77,186.68 L535.17,185.87 L536.58,185.05 L537.99,184.24 L539.42,183.42 L540.84,182.61 L542.28,181.79 L543.72,180.98 L545.17,180.16 L546.63,179.35 L548.09,178.53 L549.56,177.72 L551.04,176.90 L552.52,176.09 L554.01,175.27 L555.51,174.46 L557.01,173.65 L558.52,172.83 L560.03,172.02 L561.56,171.20 L563.09,170.39 L564.62,169.57 L566.16,168.76 L567.71,167.94 L569.27,167.13 L570.83,166.31 L572.39,165.50 L573.97,164.68 L575.55,163.87 L577.13,163.05 L578.73,162.24 L580.32,161.42 L581.93,160.61 L583.54,159.79 L585.16,158.98 L586.78,158.16 L588.41,157.35 L590.04,156.54 L591.68,155.72 L593.33,154.91 L594.98,154.09 L596.64,153.28 L598.30,152.46 L599.97,151.65 L601.65,150.83 L603.33,150.02 L605.02,149.20 L606.71,148.39 L608.41,147.57 L610.11,146.76 L611.82,145.94 L613.54,145.13 L615.26,144.31 L616.98,143.50 L618.72,142.68 L620.45,141.87 L622.19,141.06 L623.94,140.24 L625.69,139.43 L627.45,138.61 L629.22,137.80 L630.98,136.98 L632.76,136.17 L634.54,135.35 L636.32,134.54 L638.11,133.72 L639.90,132.91 L641.70,132.09 L643.51,131.28 L645.32,130.46 L647.13,129.65 L648.95,128.83 L650.77,128.02 L652.60,127.20 L654.43,126.39 L656.27,125.57 L658.11,124.76 L659.96,123.95 L661.81,123.13 L663.67,122.32 L665.53,121.50 L667.39,120.69 L669.26,119.87 L671.14,119.06 L673.02,118.24 L674.90,117.43 L676.79,116.61 L678.68,115.80 L680.57,114.98 L682.47,114.17 L684.38,113.35 L686.29,112.54 L688.20,111.72 L690.11,110.91 L692.04,110.09 L693.96,109.28 L695.89,108.47 L697.82,107.65 L699.76,106.84 L701.70,106.02 L703.64,105.21 L705.59,104.39 L707.54,103.58 L709.50,102.76 L711.45,101.95 L713.42,101.13 L715.38,100.32 L717.35,99.50 L719.33,98.69 L721.30,97.87 L723.28,97.06 L725.27,96.24 L727.25,95.43 L729.24,94.61 L731.24,93.80 L733.23,92.98 L735.23,92.17 L737.24,91.36 L739.24,90.54 L741.25,89.73 L743.27,88.91 L745.28,88.10 L747.30,87.28 L749.32,86.47 L751.35,85.65 L753.37,84.84 L755.40,84.02 L757.44,83.21 L759.47,82.39 L761.51,81.58 L763.55,80.76 L765.59,79.95 L767.64,79.13 L769.69,78.32 L771.74,77.50 L773.79,76.69 L775.85,75.88 L777.91,75.06 L779.97,74.25 L782.03,73.43 L784.10,72.62 L786.17,71.80 L788.24,70.99 L790.31,70.17 L792.38,69.36 L794.46,68.54 L796.54,67.73 L798.62,66.91 L800.70,66.10 L802.79,65.28 L804.87,64.47 L806.96,63.65 L809.05,62.84 L811.14,62.02 L813.24,61.21 L815.33,60.39 L817.43,59.58 L819.53,58.77 L821.63,57.95 L823.73,57.14 L825.83,56.32 L827.94,55.51 L830.04,54.69 L832.15,53.88 L834.26,53.06 L836.37,52.25 L838.48,51.43 L840.59,50.62 L842.71,49.80 L844.82,48.99 L846.94,48.17 L849.05,47.36 L851.17,46.54 L853.29,45.73 L855.41,44.91 L857.53,44.10 L859.65,43.29 L861.78,42.47 L863.90,41.66 L866.02,40.84 L868.15,40.03 L870.27,39.21 L872.40,38.40 L874.52,37.58 L876.65,36.77 L878.78,35.95 L880.91,35.14 L883.03,34.32 L885.16,33.51 L887.29,32.69 L889.42,31.88 L891.55,31.06 L893.68,30.25 L895.81,29.43 L897.94,28.62 L900.07,27.80 L902.20,26.99 M902.20,613.61 L900.28,612.80 L898.37,611.98 L896.45,611.17 L894.53,610.35 L892.62,609.54 L890.70,608.72 L888.78,607.91 L886.87,607.09 L884.95,606.28 L883.04,605.46 L881.12,604.65 L879.21,603.83 L877.29,603.02 L875.38,602.20 L873.46,601.39 L871.55,600.57 L869.64,599.76 L867.73,598.94 L865.82,598.13 L863.91,597.32 L862.00,596.50 L860.09,595.69 L858.18,594.87 L856.27,594.06 L854.37,593.24 L852.46,592.43 L850.56,591.61 L848.66,590.80 L846.75,589.98 L844.85,589.17 L842.95,588.35 L841.05,587.54 L839.16,586.72 L837.26,585.91 L835.36,585.09 L833.47,584.28 L831.58,583.46 L829.69,582.65 L827.80,581.83 L825.91,581.02 L824.02,580.21 L822.13,579.39 L820.25,578.58 L818.37,577.76 L816.49,576.95 L814.61,576.13 L812.73,575.32 L810.85,574.50 L808.98,573.69 L807.11,572.87 L805.23,572.06 L803.37,571.24 L801.50,570.43 L799.63,569.61 L797.77,568.80 L795.91,567.98 L794.05,567.17 L792.19,566.35 L790.34,565.54 L788.49,564.73 L786.64,563.91 L784.79,563.10 L782.94,562.28 L781.10,561.47 L779.26,560.65 L777.42,559.84 L775.58,559.02 L773.74,558.21 L771.91,557.39 L770.08,556.58 L768.26,555.76 L766.43,554.95 L764.61,554.13 L762.79,553.32 L760.97,552.50 L759.16,551.69 L757.35,550.87 L755.54,550.06 L753.73,549.24 L751.93,548.43 L750.13,547.62 L748.33,546.80 L746.54,545.99 L744.75,545.17 L742.96,544.36 L741.17,543.54 L739.39,542.73 L737.61,541.91 L735.84,541.10 L734.07,540.28 L732.30,539.47 L730.53,538.65 L728.77,537.84 L727.01,537.02 L725.25,536.21 L723.50,535.39 L721.75,534.58 L720.00,533.76 L718.26,532.95 L716.52,532.13 L714.78,531.32 L713.05,530.51 L711.32,529.69 L709.60,528.88 L707.88,528.06 L706.16,527.25 L704.45,526.43 L702.74,525.62 L701.03,524.80 L699.33,523.99 L697.63,523.17 L695.93,522.36 L694.24,521.54 L692.56,520.73 L690.87,519.91 L689.20,519.10 L687.52,518.28 L685.85,517.47 L684.18,516.65 L682.52,515.84 L680.86,515.03 L679.21,514.21 L677.56,513.40 L675.91,512.58 L674.27,511.77 L672.64,510.95 L671.00,510.14 L669.38,509.32 L667.75,508.51 L666.13,507.69 L664.52,506.88 L662.91,506.06 L661.30,505.25 L659.70,504.43 L658.11,503.62 L656.51,502.80 L654.93,501.99 L653.35,501.17 L651.77,500.36 L650.19,499.55 L648.63,498.73 L647.06,497.92 L645.51,497.10 L643.95,496.29 L642.40,495.47 L640.86,494.66 L639.32,493.84 L637.79,493.03 L636.26,492.21 L634.74,491.40 L633.22,490.58 L631.70,489.77 L630.20,488.95 L628.69,488.14 L627.20,487.32 L625.70,486.51 L624.22,485.69 L622.73,484.88 L621.26,484.06 L619.79,483.25 L618.32,482.44 L616.86,481.62 L615.41,480.81 L613.96,479.99 L612.51,479.18 L611.07,478.36 L609.64,477.55 L608.21,476.73 L606.79,475.92 L605.37,475.10 L603.96,474.29 L602.56,473.47 L601.16,472.66 L599.77,471.84 L598.38,471.03 L597.00,470.21 L595.62,469.40 L594.25,468.58 L592.89,467.77 L591.53,466.96 L590.17,466.14 L588.83,465.33 L587.49,464.51 L586.15,463.70 L584.82,462.88 L583.50,462.07 L582.18,461.25 L580.87,460.44 L579.57,459.62 L578.27,458.81 L576.98,457.99 L575.69,457.18 L574.41,456.36 L573.14,455.55 L571.87,454.73 L570.61,453.92 L569.36,453.10 L568.11,452.29 L566.87,451.47 L565.63,450.66 L564.40,449.85 L563.18,449.03 L561.96,448.22 L560.76,447.40 L559.55,446.59 L558.36,445.77 L557.17,444.96 L555.98,444.14 L554.80,443.33 L553.63,442.51 L552.47,441.70 L551.31,440.88 L550.16,440.07 L549.02,439.25 L547.88,438.44 L546.75,437.62 L545.63,436.81 L544.51,435.99 L543.40,435.18 L542.30,434.37 L541.20,433.55 L540.11,432.74 L539.03,431.92 L537.96,431.11 L536.89,430.29 L535.83,429.48 L534.77,428.66 L533.72,427.85 L532.68,427.03 L531.65,426.22 L530.62,425.40 L529.60,424.59 L528.59,423.77 L527.59,422.96 L526.59,422.14 L525.60,421.33 L524.61,420.51 L523.64,419.70 L522.67,418.88 L521.71,418.07 L520.75,417.26 L519.80,416.44 L518.86,415.63 L517.93,414.81 L517.00,414.00 L516.09,413.18 L515.17,412.37 L514.27,411.55 L513.37,410.74 L512.49,409.92 L511.60,409.11 L510.73,408.29 L509.86,407.48 L509.00,406.66 L508.15,405.85 L507.31,405.03 L506.47,404.22 L505.64,403.40 L504.82,402.59 L504.01,401.77 L503.20,400.96 L502.40,400.15 L501.61,399.33 L500.83,398.52 L500.05,397.70 L499.28,396.89 L498.52,396.07 L497.77,395.26 L497.02,394.44 L496.29,393.63 L495.56,392.81 L494.83,392.00 L494.12,391.18 L493.41,390.37 L492.72,389.55 L492.02,388.74 L491.34,387.92 L490.67,387.11 L490.00,386.29 L489.34,385.48 L488.69,384.67 L488.04,383.85 L487.41,383.04 L486.78,382.22 L486.16,381.41 L485.55,380.59 L484.94,379.78 L484.35,378.96 L483.76,378.15 L483.18,377.33 L482.60,376.52 L482.04,375.70 L481.48,374.89 L480.94,374.07 L480.39,373.26 L479.86,372.44 L479.34,371.63 L478.82,370.81 L478.31,370.00 L477.81,369.19 L477.32,368.37 L476.84,367.56 L476.36,366.74 L475.89,365.93 L475.43,365.11 L474.98,364.30 L474.54,363.48 L474.10,362.67 L473.68,361.85 L473.26,361.04 L472.85,360.22 L472.44,359.41 L472.05,358.59 L471.66,357.78 L471.28,356.96 L470.91,356.15 L470.55,355.33 L470.20,354.52 L469.85,353.70 L469.52,352.89 L469.19,352.08 L468.87,351.26 L468.56,350.45 L468.25,349.63 L467.96,348.82 L467.67,348.00 L467.39,347.19 L467.12,346.37 L466.86,345.56 L466.60,344.74 L466.36,343.93 L466.12,343.11 L465.89,342.30 L465.67,341.48 L465.45,340.67 L465.25,339.85 L465.05,339.04 L464.87,338.22 L464.69,337.41 L464.51,336.60 L464.35,335.78 L464.20,334.97 L464.05,334.15 L463.91,333.34 L463.78,332.52 L463.66,331.71 L463.55,330.89 L463.44,330.08 L463.35,329.26 L463.26,328.45 L463.18,327.63 L463.11,326.82 L463.05,326.00 L462.99,325.19 L462.95,324.37 L462.91,323.56 L462.88,322.74 L462.86,321.93 L462.85,321.11 L462.84,320.30 L462.85,319.49 L462.86,318.67 L462.88,317.86 L462.91,317.04 L462.95,316.23 L462.99,315.41 L463.05,314.60 L463.11,313.78 L463.18,312.97 L463.26,312.15 L463.35,311.34 L463.44,310.52 L463.55,309.71 L463.66,308.89 L463.78,308.08 L463.91,307.26 L464.05,306.45 L464.20,305.63 L464.35,304.82 L464.51,304.00 L464.69,303.19 L464.87,302.38 L465.05,301.56 L465.25,300.75 L465.45,299.93 L465.67,299.12 L465.89,298.30 L466.12,297.49 L466.36,296.67 L466.60,295.86 L466.86,295.04 L467.12,294.23 L467.39,293.41 L467.67,292.60 L467.96,291.78 L468.25,290.97 L468.56,290.15 L468.87,289.34 L469.19,288.52 L469.52,287.71 L469.85,286.90 L470.20,286.08 L470.55,285.27 L470.91,284.45 L471.28,283.64 L471.66,282.82 L472.05,282.01 L472.44,281.19 L472.85,280.38 L473.26,279.56 L473.68,278.75 L474.10,277.93 L474.54,277.12 L474.98,276.30 L475.43,275.49 L475.89,274.67 L476.36,273.86 L476.84,273.04 L477.32,272.23 L477.81,271.42 L478.31,270.60 L478.82,269.79 L479.34,268.97 L479.86,268.16 L480.39,267.34 L480.94,266.53 L481.48,265.71 L482.04,264.90 L482.60,264.08 L483.18,263.27 L483.76,262.45 L484.35,261.64 L484.94,260.82 L485.55,260.01 L486.16,259.19 L486.78,258.38 L487.41,257.56 L488.04,256.75 L488.69,255.93 L489.34,255.12 L490.00,254.31 L490.67,253.49 L491.34,252.68 L492.02,251.86 L492.72,251.05 L493.41,250.23 L494.12,249.42 L494.83,248.60 L495.56,247.79 L496.29,246.97 L497.02,246.16 L497.77,245.34 L498.52,244.53 L499.28,243.71 L500.05,242.90 L500.83,242.08 L501.61,241.27 L502.40,240.45 L503.20,239.64 L504.01,238.83 L504.82,238.01 L505.64,237.20 L506.47,236.38 L507.31,235.57 L508.15,234.75 L509.00,233.94 L509.86,233.12 L510.73,232.31 L511.60,231.49 L512.49,230.68 L513.37,229.86 L514.27,229.05 L515.17,228.23 L516.09,227.42 L517.00,226.60 L517.93,225.79 L518.86,224.97 L519.80,224.16 L520.75,223.34 L521.71,222.53 L522.67,221.72 L523.64,220.90 L524.61,220.09 L525.60,219.27 L526.59,218.46 L527.59,217.64 L528.59,216.83 L529.60,216.01 L530.62,215.20 L531.65,214.38 L532.68,213.57 L533.72,212.75 L534.77,211.94 L535.83,211.12 L536.89,210.31 L537.96,209.49 L539.03,208.68 L540.11,207.86 L541.20,207.05 L542.30,206.24 L543.40,205.42 L544.51,204.61 L545.63,203.79 L546.75,202.98 L547.88,202.16 L549.02,201.35 L550.16,200.53 L551.31,199.72 L552.47,198.90 L553.63,198.09 L554.80,197.27 L555.98,196.46 L557.17,195.64 L558.36,194.83 L559.55,194.01 L560.76,193.20 L561.96,192.38 L563.18,191.57 L564.40,190.75 L565.63,189.94 L566.87,189.13 L568.11,188.31 L569.36,187.50 L570.61,186.68 L571.87,185.87 L573.14,185.05 L574.41,184.24 L575.69,183.42 L576.98,182.61 L578.27,181.79 L579.57,180.98 L580.87,180.16 L582.18,179.35 L583.50,178.53 L584.82,177.72 L586.15,176.90 L587.49,176.09 L588.83,175.27 L590.17,174.46 L591.53,173.65 L592.89,172.83 L594.25,172.02 L595.62,171.20 L597.00,170.39 L598.38,169.57 L599.77,168.76 L601.16,167.94 L602.56,167.13 L603.96,166.31 L605.37,165.50 L606.79,164.68 L608.21,163.87 L609.64,163.05 L611.07,162.24 L612.51,161.42 L613.96,160.61 L615.41,159.79 L616.86,158.98 L618.32,158.16 L619.79,157.35 L621.26,156.54 L622.73,155.72 L624.22,154.91 L625.70,154.09 L627.20,153.28 L628.69,152.46 L630.20,151.65 L631.70,150.83 L633.22,150.02 L634.74,149.20 L636.26,148.39 L637.79,147.57 L639.32,146.76 L640.86,145.94 L642.40,145.13 L643.95,144.31 L645.51,143.50 L647.06,142.68 L648.63,141.87 L650.19,141.06 L651.77,140.24 L653.35,139.43 L654.93,138.61 L656.51,137.80 L658.11,136.98 L659.70,136.17 L661.30,135.35 L662.91,134.54 L664.52,133.72 L666.13,132.91 L667.75,132.09 L669.38,131.28 L671.00,130.46 L672.64,129.65 L674.27,128.83 L675.91,128.02 L677.56,127.20 L679.21,126.39 L680.86,125.57 L682.52,124.76 L684.18,123.95 L685.85,123.13 L687.52,122.32 L689.20,121.50 L690.87,120.69 L692.56,119.87 L694.24,119.06 L695.93,118.24 L697.63,117.43 L699.33,116.61 L701.03,115.80 L702.74,114.98 L704.45,114.17 L706.16,113.35 L707.88,112.54 L709.60,111.72 L711.32,110.91 L713.05,110.09 L714.78,109.28 L716.52,108.47 L718.26,107.65 L720.00,106.84 L721.75,106.02 L723.50,105.21 L725.25,104.39 L727.01,103.58 L728.77,102.76 L730.53,101.95 L732.30,101.13 L734.07,100.32 L735.84,99.50 L737.61,98.69 L739.39,97.87 L741.17,97.06 L742.96,96.24 L744.75,95.43 L746.54,94.61 L748.33,93.80 L750.13,92.98 L751.93,92.17 L753.73,91.36 L755.54,90.54 L757.35,89.73 L759.16,88.91 L760.97,88.10 L762.79,87.28 L764.61,86.47 L766.43,85.65 L768.26,84.84 L770.08,84.02 L771.91,83.21 L773.74,82.39 L775.58,81.58 L777.42,80.76 L779.26,79.95 L781.10,79.13 L782.94,78.32 L784.79,77.50 L786.64,76.69 L788.49,75.88 L790.34,75.06 L792.19,74.25 L794.05,73.43 L795.91,72.62 L797.77,71.80 L799.63,70.99 L801.50,70.17 L803.37,69.36 L805.23,68.54 L807.11,67.73 L808.98,66.91 L810.85,66.10 L812.73,65.28 L814.61,64.47 L816.49,63.65 L818.37,62.84 L820.25,62.02 L822.13,61.21 L824.02,60.39 L825.91,59.58 L827.80,58.77 L829.69,57.95 L831.58,57.14 L833.47,56.32 L835.36,55.51 L837.26,54.69 L839.16,53.88 L841.05,53.06 L842.95,52.25 L844.85,51.43 L846.75,50.62 L848.66,49.80 L850.56,48.99 L852.46,48.17 L854.37,47.36 L856.27,46.54 L858.18,45.73 L860.09,44.91 L862.00,44.10 L863.91,43.29 L865.82,42.47 L867.73,41.66 L869.64,40.84 L871.55,40.03 L873.46,39.21 L875.38,38.40 L877.29,37.58 L879.21,36.77 L881.12,35.95 L883.04,35.14 L884.95,34.32 L886.87,33.51 L888.78,32.69 L890.70,31.88 L892.62,31.06 L894.53,30.25 L896.45,29.43 L898.37,28.62 L900.28,27.80 L902.20,26.99 M902.20,613.61 L900.50,612.80 L898.79,611.98 L897.09,611.17 L895.38,610.35 L893.68,609.54 L891.98,608.72 L890.27,607.91 L888.57,607.09 L886.87,606.28 L885.16,605.46 L883.46,604.65 L881.76,603.83 L880.06,603.02 L878.36,602.20 L876.66,601.39 L874.96,600.57 L873.26,599.76 L871.56,598.94 L869.86,598.13 L868.16,597.32 L866.46,596.50 L864.77,595.69 L863.07,594.87 L861.38,594.06 L859.68,593.24 L857.99,592.43 L856.30,591.61 L854.61,590.80 L852.91,589.98 L851.22,589.17 L849.54,588.35 L847.85,587.54 L846.16,586.72 L844.47,585.91 L842.79,585.09 L841.11,584.28 L839.42,583.46 L837.74,582.65 L836.06,581.83 L834.38,581.02 L832.71,580.21 L831.03,579.39 L829.35,578.58 L827.68,577.76 L826.01,576.95 L824.34,576.13 L822.67,575.32 L821.00,574.50 L819.34,573.69 L817.67,572.87 L816.01,572.06 L814.35,571.24 L812.69,570.43 L811.03,569.61 L809.37,568.80 L807.72,567.98 L806.07,567.17 L804.42,566.35 L802.77,565.54 L801.12,564.73 L799.48,563.91 L797.83,563.10 L796.19,562.28 L794.55,561.47 L792.92,560.65 L791.28,559.84 L789.65,559.02 L788.02,558.21 L786.39,557.39 L784.76,556.58 L783.14,555.76 L781.52,554.95 L779.90,554.13 L778.28,553.32 L776.67,552.50 L775.05,551.69 L773.44,550.87 L771.84,550.06 L770.23,549.24 L768.63,548.43 L767.03,547.62 L765.43,546.80 L763.84,545.99 L762.24,545.17 L760.65,544.36 L759.07,543.54 L757.48,542.73 L755.90,541.91 L754.32,541.10 L752.75,540.28 L751.17,539.47 L749.60,538.65 L748.04,537.84 L746.47,537.02 L744.91,536.21 L743.35,535.39 L741.80,534.58 L740.25,533.76 L738.70,532.95 L737.15,532.13 L735.61,531.32 L734.07,530.51 L732.53,529.69 L731.00,528.88 L729.47,528.06 L727.94,527.25 L726.42,526.43 L724.90,525.62 L723.38,524.80 L721.87,523.99 L720.36,523.17 L718.85,522.36 L717.35,521.54 L715.85,520.73 L714.35,519.91 L712.86,519.10 L711.37,518.28 L709.89,517.47 L708.41,516.65 L706.93,515.84 L705.46,515.03 L703.99,514.21 L702.52,513.40 L701.06,512.58 L699.60,511.77 L698.14,510.95 L696.69,510.14 L695.25,509.32 L693.80,508.51 L692.36,507.69 L690.93,506.88 L689.50,506.06 L688.07,505.25 L686.65,504.43 L685.23,503.62 L683.81,502.80 L682.40,501.99 L681.00,501.17 L679.59,500.36 L678.20,499.55 L676.80,498.73 L675.41,497.92 L674.03,497.10 L672.65,496.29 L671.27,495.47 L669.90,494.66 L668.53,493.84 L667.17,493.03 L665.81,492.21 L664.45,491.40 L663.10,490.58 L661.76,489.77 L660.42,488.95 L659.08,488.14 L657.75,487.32 L656.43,486.51 L655.10,485.69 L653.79,484.88 L652.47,484.06 L651.17,483.25 L649.86,482.44 L648.56,481.62 L647.27,480.81 L645.98,479.99 L644.70,479.18 L643.42,478.36 L642.15,477.55 L640.88,476.73 L639.61,475.92 L638.36,475.10 L637.10,474.29 L635.85,473.47 L634.61,472.66 L633.37,471.84 L632.14,471.03 L630.91,470.21 L629.68,469.40 L628.47,468.58 L627.25,467.77 L626.05,466.96 L624.84,466.14 L623.65,465.33 L622.46,464.51 L621.27,463.70 L620.09,462.88 L618.91,462.07 L617.74,461.25 L616.58,460.44 L615.42,459.62 L614.26,458.81 L613.12,457.99 L611.97,457.18 L610.83,456.36 L609.70,455.55 L608.58,454.73 L607.46,453.92 L606.34,453.10 L605.23,452.29 L604.13,451.47 L603.03,450.66 L601.94,449.85 L600.85,449.03 L599.77,448.22 L598.69,447.40 L597.62,446.59 L596.56,445.77 L595.50,444.96 L594.45,444.14 L593.40,443.33 L592.36,442.51 L591.33,441.70 L590.30,440.88 L589.28,440.07 L588.26,439.25 L587.25,438.44 L586.25,437.62 L585.25,436.81 L584.26,435.99 L583.27,435.18 L582.29,434.37 L581.31,433.55 L580.35,432.74 L579.38,431.92 L578.43,431.11 L577.48,430.29 L576.53,429.48 L575.60,428.66 L574.67,427.85 L573.74,427.03 L572.82,426.22 L571.91,425.40 L571.00,424.59 L570.10,423.77 L569.21,422.96 L568.32,422.14 L567.44,421.33 L566.57,420.51 L565.70,419.70 L564.84,418.88 L563.98,418.07 L563.13,417.26 L562.29,416.44 L561.46,415.63 L560.63,414.81 L559.80,414.00 L558.99,413.18 L558.18,412.37 L557.37,411.55 L556.58,410.74 L555.79,409.92 L555.00,409.11 L554.23,408.29 L553.46,407.48 L552.69,406.66 L551.94,405.85 L551.18,405.03 L550.44,404.22 L549.70,403.40 L548.97,402.59 L548.25,401.77 L547.53,400.96 L546.82,400.15 L546.12,399.33 L545.42,398.52 L544.73,397.70 L544.05,396.89 L543.38,396.07 L542.71,395.26 L542.04,394.44 L541.39,393.63 L540.74,392.81 L540.10,392.00 L539.46,391.18 L538.83,390.37 L538.21,389.55 L537.60,388.74 L536.99,387.92 L536.39,387.11 L535.80,386.29 L535.21,385.48 L534.63,384.67 L534.06,383.85 L533.50,383.04 L532.94,382.22 L532.39,381.41 L531.84,380.59 L531.30,379.78 L530.77,378.96 L530.25,378.15 L529.74,377.33 L529.23,376.52 L528.72,375.70 L528.23,374.89 L527.74,374.07 L527.26,373.26 L526.79,372.44 L526.32,371.63 L525.86,370.81 L525.41,370.00 L524.97,369.19 L524.53,368.37 L524.10,367.56 L523.68,366.74 L523.26,365.93 L522.85,365.11 L522.45,364.30 L522.06,363.48 L521.67,362.67 L521.29,361.85 L520.92,361.04 L520.55,360.22 L520.19,359.41 L519.84,358.59 L519.50,357.78 L519.16,356.96 L518.84,356.15 L518.51,355.33 L518.20,354.52 L517.89,353.70 L517.59,352.89 L517.30,352.08 L517.02,351.26 L516.74,350.45 L516.47,349.63 L516.21,348.82 L515.95,348.00 L515.70,347.19 L515.46,346.37 L515.23,345.56 L515.00,344.74 L514.78,343.93 L514.57,343.11 L514.37,342.30 L514.17,341.48 L513.98,340.67 L513.80,339.85 L513.62,339.04 L513.46,338.22 L513.30,337.41 L513.15,336.60 L513.00,335.78 L512.86,334.97 L512.73,334.15 L512.61,333.34 L512.50,332.52 L512.39,331.71 L512.29,330.89 L512.20,330.08 L512.11,329.26 L512.03,328.45 L511.96,327.63 L511.90,326.82 L511.84,326.00 L511.79,325.19 L511.75,324.37 L511.72,323.56 L511.69,322.74 L511.67,321.93 L511.66,321.11 L511.66,320.30 L511.66,319.49 L511.67,318.67 L511.69,317.86 L511.72,317.04 L511.75,316.23 L511.79,315.41 L511.84,314.60 L511.90,313.78 L511.96,312.97 L512.03,312.15 L512.11,311.34 L512.20,310.52 L512.29,309.71 L512.39,308.89 L512.50,308.08 L512.61,307.26 L512.73,306.45 L512.86,305.63 L513.00,304.82 L513.15,304.00 L513.30,303.19 L513.46,302.38 L513.62,301.56 L513.80,300.75 L513.98,299.93 L514.17,299.12 L514.37,298.30 L514.57,297.49 L514.78,296.67 L515.00,295.86 L515.23,295.04 L515.46,294.23 L515.70,293.41 L515.95,292.60 L516.21,291.78 L516.47,290.97 L516.74,290.15 L517.02,289.34 L517.30,288.52 L517.59,287.71 L517.89,286.90 L518.20,286.08 L518.51,285.27 L518.84,284.45 L519.16,283.64 L519.50,282.82 L519.84,282.01 L520.19,281.19 L520.55,280.38 L520.92,279.56 L521.29,278.75 L521.67,277.93 L522.06,277.12 L522.45,276.30 L522.85,275.49 L523.26,274.67 L523.68,273.86 L524.10,273.04 L524.53,272.23 L524.97,271.42 L525.41,270.60 L525.86,269.79 L526.32,268.97 L526.79,268.16 L527.26,267.34 L527.74,266.53 L528.23,265.71 L528.72,264.90 L529.23,264.08 L529.74,263.27 L530.25,262.45 L530.77,261.64 L531.30,260.82 L531.84,260.01 L532.39,259.19 L532.94,258.38 L533.50,257.56 L534.06,256.75 L534.63,255.93 L535.21,255.12 L535.80,254.31 L536.39,253.49 L536.99,252.68 L537.60,251.86 L538.21,251.05 L538.83,250.23 L539.46,249.42 L540.10,248.60 L540.74,247.79 L541.39,246.97 L542.04,246.16 L542.71,245.34 L543.38,244.53 L544.05,243.71 L544.73,242.90 L545.42,242.08 L546.12,241.27 L546.82,240.45 L547.53,239.64 L548.25,238.83 L548.97,238.01 L549.70,237.20 L550.44,236.38 L551.18,235.57 L551.94,234.75 L552.69,233.94 L553.46,233.12 L554.23,232.31 L555.00,231.49 L555.79,230.68 L556.58,229.86 L557.37,229.05 L558.18,228.23 L558.99,227.42 L559.80,226.60 L560.63,225.79 L561.46,224.97 L562.29,224.16 L563.13,223.34 L563.98,222.53 L564.84,221.72 L565.70,220.90 L566.57,220.09 L567.44,219.27 L568.32,218.46 L569.21,217.64 L570.10,216.83 L571.00,216.01 L571.91,215.20 L572.82,214.38 L573.74,213.57 L574.67,212.75 L575.60,211.94 L576.53,211.12 L577.48,210.31 L578.43,209.49 L579.38,208.68 L580.35,207.86 L581.31,207.05 L582.29,206.24 L583.27,205.42 L584.26,204.61 L585.25,203.79 L586.25,202.98 L587.25,202.16 L588.26,201.35 L589.28,200.53 L590.30,199.72 L591.33,198.90 L592.36,198.09 L593.40,197.27 L594.45,196.46 L595.50,195.64 L596.56,194.83 L597.62,194.01 L598.69,193.20 L599.77,192.38 L600.85,191.57 L601.94,190.75 L603.03,189.94 L604.13,189.13 L605.23,188.31 L606.34,187.50 L607.46,186.68 L608.58,185.87 L609.70,185.05 L610.83,184.24 L611.97,183.42 L613.12,182.61 L614.26,181.79 L615.42,180.98 L616.58,180.16 L617.74,179.35 L618.91,178.53 L620.09,177.72 L621.27,176.90 L622.46,176.09 L623.65,175.27 L624.84,174.46 L626.05,173.65 L627.25,172.83 L628.47,172.02 L629.68,171.20 L630.91,170.39 L632.14,169.57 L633.37,168.76 L634.61,167.94 L635.85,167.13 L637.10,166.31 L638.36,165.50 L639.61,164.68 L640.88,163.87 L642.15,163.05 L643.42,162.24 L644.70,161.42 L645.98,160.61 L647.27,159.79 L648.56,158.98 L649.86,158.16 L651.17,157.35 L652.47,156.54 L653.79,155.72 L655.10,154.91 L656.43,154.09 L657.75,153.28 L659.08,152.46 L660.42,151.65 L661.76,150.83 L663.10,150.02 L664.45,149.20 L665.81,148.39 L667.17,147.57 L668.53,146.76 L669.90,145.94 L671.27,145.13 L672.65,144.31 L674.03,143.50 L675.41,142.68 L676.80,141.87 L678.20,141.06 L679.59,140.24 L681.00,139.43 L682.40,138.61 L683.81,137.80 L685.23,136.98 L686.65,136.17 L688.07,135.35 L689.50,134.54 L690.93,133.72 L692.36,132.91 L693.80,132.09 L695.25,131.28 L696.69,130.46 L698.14,129.65 L699.60,128.83 L701.06,128.02 L702.52,127.20 L703.99,126.39 L705.46,125.57 L706.93,124.76 L708.41,123.95 L709.89,123.13 L711.37,122.32 L712.86,121.50 L714.35,120.69 L715.85,119.87 L717.35,119.06 L718.85,118.24 L720.36,117.43 L721.87,116.61 L723.38,115.80 L724.90,114.98 L726.42,114.17 L727.94,113.35 L729.47,112.54 L731.00,111.72 L732.53,110.91 L734.07,110.09 L735.61,109.28 L737.15,108.47 L738.70,107.65 L740.25,106.84 L741.80,106.02 L743.35,105.21 L744.91,104.39 L746.47,103.58 L748.04,102.76 L749.60,101.95 L751.17,101.13 L752.75,100.32 L754.32,99.50 L755.90,98.69 L757.48,97.87 L759.07,97.06 L760.65,96.24 L762.24,95.43 L763.84,94.61 L765.43,93.80 L767.03,92.98 L768.63,92.17 L770.23,91.36 L771.84,90.54 L773.44,89.73 L775.05,88.91 L776.67,88.10 L778.28,87.28 L779.90,86.47 L781.52,85.65 L783.14,84.84 L784.76,84.02 L786.39,83.21 L788.02,82.39 L789.65,81.58 L791.28,80.76 L792.92,79.95 L794.55,79.13 L796.19,78.32 L797.83,77.50 L799.48,76.69 L801.12,75.88 L802.77,75.06 L804.42,74.25 L806.07,73.43 L807.72,72.62 L809.37,71.80 L811.03,70.99 L812.69,70.17 L814.35,69.36 L816.01,68.54 L817.67,67.73 L819.34,66.91 L821.00,66.10 L822.67,65.28 L824.34,64.47 L826.01,63.65 L827.68,62.84 L829.35,62.02 L831.03,61.21 L832.71,60.39 L834.38,59.58 L836.06,58.77 L837.74,57.95 L839.42,57.14 L841.11,56.32 L842.79,55.51 L844.47,54.69 L846.16,53.88 L847.85,53.06 L849.54,52.25 L851.22,51.43 L852.91,50.62 L854.61,49.80 L856.30,48.99 L857.99,48.17 L859.68,47.36 L861.38,46.54 L863.07,45.73 L864.77,44.91 L866.46,44.10 L868.16,43.29 L869.86,42.47 L871.56,41.66 L873.26,40.84 L874.96,40.03 L876.66,39.21 L878.36,38.40 L880.06,37.58 L881.76,36.77 L883.46,35.95 L885.16,35.14 L886.87,34.32 L888.57,33.51 L890.27,32.69 L891.98,31.88 L893.68,31.06 L895.38,30.25 L897.09,29.43 L898.79,28.62 L900.50,27.80 L902.20,26.99 M902.20,613.61 L900.71,612.80 L899.22,611.98 L897.73,611.17 L896.24,610.35 L894.75,609.54 L893.25,608.72 L891.76,607.91 L890.27,607.09 L888.78,606.28 L887.29,605.46 L885.80,604.65 L884.32,603.83 L882.83,603.02 L881.34,602.20 L879.85,601.39 L878.36,600.57 L876.88,599.76 L875.39,598.94 L873.90,598.13 L872.42,597.32 L870.93,596.50 L869.45,595.69 L867.96,594.87 L866.48,594.06 L865.00,593.24 L863.52,592.43 L862.03,591.61 L860.55,590.80 L859.07,589.98 L857.60,589.17 L856.12,588.35 L854.64,587.54 L853.17,586.72 L851.69,585.91 L850.22,585.09 L848.74,584.28 L847.27,583.46 L845.80,582.65 L844.33,581.83 L842.86,581.02 L841.39,580.21 L839.93,579.39 L838.46,578.58 L837.00,577.76 L835.53,576.95 L834.07,576.13 L832.61,575.32 L831.15,574.50 L829.69,573.69 L828.24,572.87 L826.78,572.06 L825.33,571.24 L823.88,570.43 L822.43,569.61 L820.98,568.80 L819.53,567.98 L818.08,567.17 L816.64,566.35 L815.20,565.54 L813.76,564.73 L812.32,563.91 L810.88,563.10 L809.44,562.28 L808.01,561.47 L806.58,560.65 L805.15,559.84 L803.72,559.02 L802.29,558.21 L800.87,557.39 L799.44,556.58 L798.02,555.76 L796.60,554.95 L795.18,554.13 L793.77,553.32 L792.36,552.50 L790.95,551.69 L789.54,550.87 L788.13,550.06 L786.73,549.24 L785.32,548.43 L783.92,547.62 L782.53,546.80 L781.13,545.99 L779.74,545.17 L778.35,544.36 L776.96,543.54 L775.57,542.73 L774.19,541.91 L772.81,541.10 L771.43,540.28 L770.05,539.47 L768.68,538.65 L767.31,537.84 L765.94,537.02 L764.57,536.21 L763.21,535.39 L761.85,534.58 L760.49,533.76 L759.13,532.95 L757.78,532.13 L756.43,531.32 L755.08,530.51 L753.74,529.69 L752.40,528.88 L751.06,528.06 L749.72,527.25 L748.39,526.43 L747.06,525.62 L745.73,524.80 L744.41,523.99 L743.09,523.17 L741.77,522.36 L740.46,521.54 L739.14,520.73 L737.84,519.91 L736.53,519.10 L735.23,518.28 L733.93,517.47 L732.63,516.65 L731.34,515.84 L730.05,515.03 L728.76,514.21 L727.48,513.40 L726.20,512.58 L724.92,511.77 L723.65,510.95 L722.38,510.14 L721.11,509.32 L719.85,508.51 L718.59,507.69 L717.34,506.88 L716.08,506.06 L714.84,505.25 L713.59,504.43 L712.35,503.62 L711.11,502.80 L709.88,501.99 L708.65,501.17 L707.42,500.36 L706.20,499.55 L704.98,498.73 L703.76,497.92 L702.55,497.10 L701.34,496.29 L700.14,495.47 L698.94,494.66 L697.74,493.84 L696.55,493.03 L695.36,492.21 L694.17,491.40 L692.99,490.58 L691.81,489.77 L690.64,488.95 L689.47,488.14 L688.31,487.32 L687.15,486.51 L685.99,485.69 L684.84,484.88 L683.69,484.06 L682.55,483.25 L681.40,482.44 L680.27,481.62 L679.14,480.81 L678.01,479.99 L676.89,479.18 L675.77,478.36 L674.65,477.55 L673.54,476.73 L672.44,475.92 L671.34,475.10 L670.24,474.29 L669.15,473.47 L668.06,472.66 L666.97,471.84 L665.89,471.03 L664.82,470.21 L663.75,469.40 L662.68,468.58 L661.62,467.77 L660.57,466.96 L659.51,466.14 L658.47,465.33 L657.42,464.51 L656.39,463.70 L655.35,462.88 L654.32,462.07 L653.30,461.25 L652.28,460.44 L651.27,459.62 L650.26,458.81 L649.25,457.99 L648.25,457.18 L647.26,456.36 L646.26,455.55 L645.28,454.73 L644.30,453.92 L643.32,453.10 L642.35,452.29 L641.39,451.47 L640.43,450.66 L639.47,449.85 L638.52,449.03 L637.57,448.22 L636.63,447.40 L635.70,446.59 L634.77,445.77 L633.84,444.96 L632.92,444.14 L632.00,443.33 L631.09,442.51 L630.19,441.70 L629.29,440.88 L628.39,440.07 L627.50,439.25 L626.62,438.44 L625.74,437.62 L624.87,436.81 L624.00,435.99 L623.14,435.18 L622.28,434.37 L621.42,433.55 L620.58,432.74 L619.74,431.92 L618.90,431.11 L618.07,430.29 L617.24,429.48 L616.42,428.66 L615.61,427.85 L614.80,427.03 L613.99,426.22 L613.20,425.40 L612.40,424.59 L611.62,423.77 L610.83,422.96 L610.06,422.14 L609.29,421.33 L608.52,420.51 L607.76,419.70 L607.01,418.88 L606.26,418.07 L605.52,417.26 L604.78,416.44 L604.05,415.63 L603.32,414.81 L602.60,414.00 L601.89,413.18 L601.18,412.37 L600.48,411.55 L599.78,410.74 L599.09,409.92 L598.40,409.11 L597.72,408.29 L597.05,407.48 L596.38,406.66 L595.72,405.85 L595.06,405.03 L594.41,404.22 L593.77,403.40 L593.13,402.59 L592.49,401.77 L591.87,400.96 L591.25,400.15 L590.63,399.33 L590.02,398.52 L589.42,397.70 L588.82,396.89 L588.23,396.07 L587.64,395.26 L587.06,394.44 L586.49,393.63 L585.92,392.81 L585.36,392.00 L584.80,391.18 L584.26,390.37 L583.71,389.55 L583.17,388.74 L582.64,387.92 L582.12,387.11 L581.60,386.29 L581.09,385.48 L580.58,384.67 L580.08,383.85 L579.58,383.04 L579.10,382.22 L578.61,381.41 L578.14,380.59 L577.67,379.78 L577.20,378.96 L576.74,378.15 L576.29,377.33 L575.85,376.52 L575.41,375.70 L574.98,374.89 L574.55,374.07 L574.13,373.26 L573.72,372.44 L573.31,371.63 L572.91,370.81 L572.51,370.00 L572.12,369.19 L571.74,368.37 L571.36,367.56 L570.99,366.74 L570.63,365.93 L570.27,365.11 L569.92,364.30 L569.57,363.48 L569.24,362.67 L568.90,361.85 L568.58,361.04 L568.26,360.22 L567.94,359.41 L567.64,358.59 L567.34,357.78 L567.04,356.96 L566.76,356.15 L566.47,355.33 L566.20,354.52 L565.93,353.70 L565.67,352.89 L565.41,352.08 L565.16,351.26 L564.92,350.45 L564.68,349.63 L564.45,348.82 L564.23,348.00 L564.01,347.19 L563.80,346.37 L563.60,345.56 L563.40,344.74 L563.21,343.93 L563.02,343.11 L562.85,342.30 L562.67,341.48 L562.51,340.67 L562.35,339.85 L562.20,339.04 L562.05,338.22 L561.91,337.41 L561.78,336.60 L561.65,335.78 L561.53,334.97 L561.42,334.15 L561.31,333.34 L561.21,332.52 L561.11,331.71 L561.03,330.89 L560.95,330.08 L560.87,329.26 L560.80,328.45 L560.74,327.63 L560.69,326.82 L560.64,326.00 L560.59,325.19 L560.56,324.37 L560.53,323.56 L560.51,322.74 L560.49,321.93 L560.48,321.11 L560.48,320.30 L560.48,319.49 L560.49,318.67 L560.51,317.86 L560.53,317.04 L560.56,316.23 L560.59,315.41 L560.64,314.60 L560.69,313.78 L560.74,312.97 L560.80,312.15 L560.87,311.34 L560.95,310.52 L561.03,309.71 L561.11,308.89 L561.21,308.08 L561.31,307.26 L561.42,306.45 L561.53,305.63 L561.65,304.82 L561.78,304.00 L561.91,303.19 L562.05,302.38 L562.20,301.56 L562.35,300.75 L562.51,299.93 L562.67,299.12 L562.85,298.30 L563.02,297.49 L563.21,296.67 L563.40,295.86 L563.60,295.04 L563.80,294.23 L564.01,293.41 L564.23,292.60 L564.45,291.78 L564.68,290.97 L564.92,290.15 L565.16,289.34 L565.41,288.52 L565.67,287.71 L565.93,286.90 L566.20,286.08 L566.47,285.27 L566.76,284.45 L567.04,283.64 L567.34,282.82 L567.64,282.01 L567.94,281.19 L568.26,280.38 L568.58,279.56 L568.90,278.75 L569.24,277.93 L569.57,277.12 L569.92,276.30 L570.27,275.49 L570.63,274.67 L570.99,273.86 L571.36,273.04 L571.74,272.23 L572.12,271.42 L572.51,270.60 L572.91,269.79 L573.31,268.97 L573.72,268.16 L574.13,267.34 L574.55,266.53 L574.98,265.71 L575.41,264.90 L575.85,264.08 L576.29,263.27 L576.74,262.45 L577.20,261.64 L577.67,260.82 L578.14,260.01 L578.61,259.19 L579.10,258.38 L579.58,257.56 L580.08,256.75 L580.58,255.93 L581.09,255.12 L581.60,254.31 L582.12,253.49 L582.64,252.68 L583.17,251.86 L583.71,251.05 L584.26,250.23 L584.80,249.42 L585.36,248.60 L585.92,247.79 L586.49,246.97 L587.06,246.16 L587.64,245.34 L588.23,244.53 L588.82,243.71 L589.42,242.90 L590.02,242.08 L590.63,241.27 L591.25,240.45 L591.87,239.64 L592.49,238.83 L593.13,238.01 L593.77,237.20 L594.41,236.38 L595.06,235.57 L595.72,234.75 L596.38,233.94 L597.05,233.12 L597.72,232.31 L598.40,231.49 L599.09,230.68 L599.78,229.86 L600.48,229.05 L601.18,228.23 L601.89,227.42 L602.60,226.60 L603.32,225.79 L604.05,224.97 L604.78,224.16 L605.52,223.34 L606.26,222.53 L607.01,221.72 L607.76,220.90 L608.52,220.09 L609.29,219.27 L610.06,218.46 L610.83,217.64 L611.62,216.83 L612.40,216.01 L613.20,215.20 L613.99,214.38 L614.80,213.57 L615.61,212.75 L616.42,211.94 L617.24,211.12 L618.07,210.31 L618.90,209.49 L619.74,208.68 L620.58,207.86 L621.42,207.05 L622.28,206.24 L623.14,205.42 L624.00,204.61 L624.87,203.79 L625.74,202.98 L626.62,202.16 L627.50,201.35 L628.39,200.53 L629.29,199.72 L630.19,198.90 L631.09,198.09 L632.00,197.27 L632.92,196.46 L633.84,195.64 L634.77,194.83 L635.70,194.01 L636.63,193.20 L637.57,192.38 L638.52,191.57 L639.47,190.75 L640.43,189.94 L641.39,189.13 L642.35,188.31 L643.32,187.50 L644.30,186.68 L645.28,185.87 L646.26,185.05 L647.26,184.24 L648.25,183.42 L649.25,182.61 L650.26,181.79 L651.27,180.98 L652.28,180.16 L653.30,179.35 L654.32,178.53 L655.35,177.72 L656.39,176.90 L657.42,176.09 L658.47,175.27 L659.51,174.46 L660.57,173.65 L661.62,172.83 L662.68,172.02 L663.75,171.20 L664.82,170.39 L665.89,169.57 L666.97,168.76 L668.06,167.94 L669.15,167.13 L670.24,166.31 L671.34,165.50 L672.44,164.68 L673.54,163.87 L674.65,163.05 L675.77,162.24 L676.89,161.42 L678.01,160.61 L679.14,159.79 L680.27,158.98 L681.40,158.16 L682.55,157.35 L683.69,156.54 L684.84,155.72 L685.99,154.91 L687.15,154.09 L688.31,153.28 L689.47,152.46 L690.64,151.65 L691.81,150.83 L692.99,150.02 L694.17,149.20 L695.36,148.39 L696.55,147.57 L697.74,146.76 L698.94,145.94 L700.14,145.13 L701.34,144.31 L702.55,143.50 L703.76,142.68 L704.98,141.87 L706.20,141.06 L707.42,140.24 L708.65,139.43 L709.88,138.61 L711.11,137.80 L712.35,136.98 L713.59,136.17 L714.84,135.35 L716.08,134.54 L717.34,133.72 L718.59,132.91 L719.85,132.09 L721.11,131.28 L722.38,130.46 L723.65,129.65 L724.92,128.83 L726.20,128.02 L727.48,127.20 L728.76,126.39 L730.05,125.57 L731.34,124.76 L732.63,123.95 L733.93,123.13 L735.23,122.32 L736.53,121.50 L737.84,120.69 L739.14,119.87 L740.46,119.06 L741.77,118.24 L743.09,117.43 L744.41,116.61 L745.73,115.80 L747.06,114.98 L748.39,114.17 L749.72,113.35 L751.06,112.54 L752.40,111.72 L753.74,110.91 L755.08,110.09 L756.43,109.28 L757.78,108.47 L759.13,107.65 L760.49,106.84 L761.85,106.02 L763.21,105.21 L764.57,104.39 L765.94,103.58 L767.31,102.76 L768.68,101.95 L770.05,101.13 L771.43,100.32 L772.81,99.50 L774.19,98.69 L775.57,97.87 L776.96,97.06 L778.35,96.24 L779.74,95.43 L781.13,94.61 L782.53,93.80 L783.92,92.98 L785.32,92.17 L786.73,91.36 L788.13,90.54 L789.54,89.73 L790.95,88.91 L792.36,88.10 L793.77,87.28 L795.18,86.47 L796.60,85.65 L798.02,84.84 L799.44,84.02 L800.87,83.21 L802.29,82.39 L803.72,81.58 L805.15,80.76 L806.58,79.95 L808.01,79.13 L809.44,78.32 L810.88,77.50 L812.32,76.69 L813.76,75.88 L815.20,75.06 L816.64,74.25 L818.08,73.43 L819.53,72.62 L820.98,71.80 L822.43,70.99 L823.88,70.17 L825.33,69.36 L826.78,68.54 L828.24,67.73 L829.69,66.91 L831.15,66.10 L832.61,65.28 L834.07,64.47 L835.53,63.65 L837.00,62.84 L838.46,62.02 L839.93,61.21 L841.39,60.39 L842.86,59.58 L844.33,58.77 L845.80,57.95 L847.27,57.14 L848.74,56.32 L850.22,55.51 L851.69,54.69 L853.17,53.88 L854.64,53.06 L856.12,52.25 L857.60,51.43 L859.07,50.62 L860.55,49.80 L862.03,48.99 L863.52,48.17 L865.00,47.36 L866.48,46.54 L867.96,45.73 L869.45,44.91 L870.93,44.10 L872.42,43.29 L873.90,42.47 L875.39,41.66 L876.88,40.84 L878.36,40.03 L879.85,39.21 L881.34,38.40 L882.83,37.58 L884.32,36.77 L885.80,35.95 L887.29,35.14 L888.78,34.32 L890.27,33.51 L891.76,32.69 L893.25,31.88 L894.75,31.06 L896.24,30.25 L897.73,29.43 L899.22,28.62 L900.71,27.80 L902.20,26.99 M902.20,613.61 L900.92,612.80 L899.64,611.98 L898.37,611.17 L897.09,610.35 L895.81,609.54 L894.53,608.72 L893.26,607.91 L891.98,607.09 L890.70,606.28 L889.42,605.46 L888.15,604.65 L886.87,603.83 L885.59,603.02 L884.32,602.20 L883.04,601.39 L881.77,600.57 L880.49,599.76 L879.22,598.94 L877.95,598.13 L876.67,597.32 L875.40,596.50 L874.13,595.69 L872.85,594.87 L871.58,594.06 L870.31,593.24 L869.04,592.43 L867.77,591.61 L866.50,590.80 L865.24,589.98 L863.97,589.17 L862.70,588.35 L861.44,587.54 L860.17,586.72 L858.91,585.91 L857.64,585.09 L856.38,584.28 L855.12,583.46 L853.86,582.65 L852.60,581.83 L851.34,581.02 L850.08,580.21 L848.82,579.39 L847.57,578.58 L846.31,577.76 L845.06,576.95 L843.80,576.13 L842.55,575.32 L841.30,574.50 L840.05,573.69 L838.80,572.87 L837.56,572.06 L836.31,571.24 L835.07,570.43 L833.82,569.61 L832.58,568.80 L831.34,567.98 L830.10,567.17 L828.86,566.35 L827.63,565.54 L826.39,564.73 L825.16,563.91 L823.92,563.10 L822.69,562.28 L821.46,561.47 L820.24,560.65 L819.01,559.84 L817.79,559.02 L816.56,558.21 L815.34,557.39 L814.12,556.58 L812.90,555.76 L811.69,554.95 L810.47,554.13 L809.26,553.32 L808.05,552.50 L806.84,551.69 L805.63,550.87 L804.43,550.06 L803.22,549.24 L802.02,548.43 L800.82,547.62 L799.62,546.80 L798.43,545.99 L797.23,545.17 L796.04,544.36 L794.85,543.54 L793.66,542.73 L792.48,541.91 L791.29,541.10 L790.11,540.28 L788.93,539.47 L787.75,538.65 L786.58,537.84 L785.40,537.02 L784.23,536.21 L783.06,535.39 L781.90,534.58 L780.73,533.76 L779.57,532.95 L778.41,532.13 L777.26,531.32 L776.10,530.51 L774.95,529.69 L773.80,528.88 L772.65,528.06 L771.51,527.25 L770.36,526.43 L769.22,525.62 L768.09,524.80 L766.95,523.99 L765.82,523.17 L764.69,522.36 L763.56,521.54 L762.44,520.73 L761.32,519.91 L760.20,519.10 L759.08,518.28 L757.97,517.47 L756.86,516.65 L755.75,515.84 L754.64,515.03 L753.54,514.21 L752.44,513.40 L751.34,512.58 L750.25,511.77 L749.16,510.95 L748.07,510.14 L746.98,509.32 L745.90,508.51 L744.82,507.69 L743.75,506.88 L742.67,506.06 L741.60,505.25 L740.53,504.43 L739.47,503.62 L738.41,502.80 L737.35,501.99 L736.30,501.17 L735.25,500.36 L734.20,499.55 L733.15,498.73 L732.11,497.92 L731.07,497.10 L730.03,496.29 L729.00,495.47 L727.97,494.66 L726.95,493.84 L725.93,493.03 L724.91,492.21 L723.89,491.40 L722.88,490.58 L721.87,489.77 L720.86,488.95 L719.86,488.14 L718.86,487.32 L717.87,486.51 L716.88,485.69 L715.89,484.88 L714.91,484.06 L713.92,483.25 L712.95,482.44 L711.97,481.62 L711.00,480.81 L710.04,479.99 L709.07,479.18 L708.12,478.36 L707.16,477.55 L706.21,476.73 L705.26,475.92 L704.32,475.10 L703.38,474.29 L702.44,473.47 L701.51,472.66 L700.58,471.84 L699.65,471.03 L698.73,470.21 L697.81,469.40 L696.90,468.58 L695.99,467.77 L695.08,466.96 L694.18,466.14 L693.29,465.33 L692.39,464.51 L691.50,463.70 L690.62,462.88 L689.73,462.07 L688.86,461.25 L687.98,460.44 L687.11,459.62 L686.25,458.81 L685.39,457.99 L684.53,457.18 L683.68,456.36 L682.83,455.55 L681.98,454.73 L681.14,453.92 L680.31,453.10 L679.47,452.29 L678.65,451.47 L677.82,450.66 L677.00,449.85 L676.19,449.03 L675.38,448.22 L674.57,447.40 L673.77,446.59 L672.97,445.77 L672.18,444.96 L671.39,444.14 L670.60,443.33 L669.82,442.51 L669.05,441.70 L668.28,440.88 L667.51,440.07 L666.75,439.25 L665.99,438.44 L665.23,437.62 L664.49,436.81 L663.74,435.99 L663.00,435.18 L662.27,434.37 L661.54,433.55 L660.81,432.74 L660.09,431.92 L659.37,431.11 L658.66,430.29 L657.95,429.48 L657.25,428.66 L656.55,427.85 L655.86,427.03 L655.17,426.22 L654.48,425.40 L653.80,424.59 L653.13,423.77 L652.46,422.96 L651.79,422.14 L651.13,421.33 L650.48,420.51 L649.82,419.70 L649.18,418.88 L648.54,418.07 L647.90,417.26 L647.27,416.44 L646.64,415.63 L646.02,414.81 L645.40,414.00 L644.79,413.18 L644.18,412.37 L643.58,411.55 L642.98,410.74 L642.39,409.92 L641.80,409.11 L641.22,408.29 L640.64,407.48 L640.07,406.66 L639.50,405.85 L638.94,405.03 L638.38,404.22 L637.83,403.40 L637.28,402.59 L636.74,401.77 L636.20,400.96 L635.67,400.15 L635.14,399.33 L634.62,398.52 L634.10,397.70 L633.59,396.89 L633.08,396.07 L632.58,395.26 L632.08,394.44 L631.59,393.63 L631.10,392.81 L630.62,392.00 L630.15,391.18 L629.68,390.37 L629.21,389.55 L628.75,388.74 L628.29,387.92 L627.84,387.11 L627.40,386.29 L626.96,385.48 L626.52,384.67 L626.10,383.85 L625.67,383.04 L625.25,382.22 L624.84,381.41 L624.43,380.59 L624.03,379.78 L623.63,378.96 L623.24,378.15 L622.85,377.33 L622.47,376.52 L622.09,375.70 L621.72,374.89 L621.36,374.07 L621.00,373.26 L620.64,372.44 L620.29,371.63 L619.95,370.81 L619.61,370.00 L619.28,369.19 L618.95,368.37 L618.62,367.56 L618.31,366.74 L618.00,365.93 L617.69,365.11 L617.39,364.30 L617.09,363.48 L616.80,362.67 L616.52,361.85 L616.24,361.04 L615.96,360.22 L615.70,359.41 L615.43,358.59 L615.18,357.78 L614.92,356.96 L614.68,356.15 L614.44,355.33 L614.20,354.52 L613.97,353.70 L613.74,352.89 L613.53,352.08 L613.31,351.26 L613.10,350.45 L612.90,349.63 L612.70,348.82 L612.51,348.00 L612.33,347.19 L612.15,346.37 L611.97,345.56 L611.80,344.74 L611.64,343.93 L611.48,343.11 L611.33,342.30 L611.18,341.48 L611.04,340.67 L610.90,339.85 L610.77,339.04 L610.64,338.22 L610.52,337.41 L610.41,336.60 L610.30,335.78 L610.20,334.97 L610.10,334.15 L610.01,333.34 L609.92,332.52 L609.84,331.71 L609.77,330.89 L609.70,330.08 L609.63,329.26 L609.57,328.45 L609.52,327.63 L609.47,326.82 L609.43,326.00 L609.40,325.19 L609.36,324.37 L609.34,323.56 L609.32,322.74 L609.31,321.93 L609.30,321.11 L609.30,320.30 L609.30,319.49 L609.31,318.67 L609.32,317.86 L609.34,317.04 L609.36,316.23 L609.40,315.41 L609.43,314.60 L609.47,313.78 L609.52,312.97 L609.57,312.15 L609.63,311.34 L609.70,310.52 L609.77,309.71 L609.84,308.89 L609.92,308.08 L610.01,307.26 L610.10,306.45 L610.20,305.63 L610.30,304.82 L610.41,304.00 L610.52,303.19 L610.64,302.38 L610.77,301.56 L610.90,300.75 L611.04,299.93 L611.18,299.12 L611.33,298.30 L611.48,297.49 L611.64,296.67 L611.80,295.86 L611.97,295.04 L612.15,294.23 L612.33,293.41 L612.51,292.60 L612.70,291.78 L612.90,290.97 L613.10,290.15 L613.31,289.34 L613.53,288.52 L613.74,287.71 L613.97,286.90 L614.20,286.08 L614.44,285.27 L614.68,284.45 L614.92,283.64 L615.18,282.82 L615.43,282.01 L615.70,281.19 L615.96,280.38 L616.24,279.56 L616.52,278.75 L616.80,277.93 L617.09,277.12 L617.39,276.30 L617.69,275.49 L618.00,274.67 L618.31,273.86 L618.62,273.04 L618.95,272.23 L619.28,271.42 L619.61,270.60 L619.95,269.79 L620.29,268.97 L620.64,268.16 L621.00,267.34 L621.36,266.53 L621.72,265.71 L622.09,264.90 L622.47,264.08 L622.85,263.27 L623.24,262.45 L623.63,261.64 L624.03,260.82 L624.43,260.01 L624.84,259.19 L625.25,258.38 L625.67,257.56 L626.10,256.75 L626.52,255.93 L626.96,255.12 L627.40,254.31 L627.84,253.49 L628.29,252.68 L628.75,251.86 L629.21,251.05 L629.68,250.23 L630.15,249.42 L630.62,248.60 L631.10,247.79 L631.59,246.97 L632.08,246.16 L632.58,245.34 L633.08,244.53 L633.59,243.71 L634.10,242.90 L634.62,242.08 L635.14,241.27 L635.67,240.45 L636.20,239.64 L636.74,238.83 L637.28,238.01 L637.83,237.20 L638.38,236.38 L638.94,235.57 L639.50,234.75 L640.07,233.94 L640.64,233.12 L641.22,232.31 L641.80,231.49 L642.39,230.68 L642.98,229.86 L643.58,229.05 L644.18,228.23 L644.79,227.42 L645.40,226.60 L646.02,225.79 L646.64,224.97 L647.27,224.16 L647.90,223.34 L648.54,222.53 L649.18,221.72 L649.82,220.90 L650.48,220.09 L651.13,219.27 L651.79,218.46 L652.46,217.64 L653.13,216.83 L653.80,216.01 L654.48,215.20 L655.17,214.38 L655.86,213.57 L656.55,212.75 L657.25,211.94 L657.95,211.12 L658.66,210.31 L659.37,209.49 L660.09,208.68 L660.81,207.86 L661.54,207.05 L662.27,206.24 L663.00,205.42 L663.74,204.61 L664.49,203.79 L665.23,202.98 L665.99,202.16 L666.75,201.35 L667.51,200.53 L668.28,199.72 L669.05,198.90 L669.82,198.09 L670.60,197.27 L671.39,196.46 L672.18,195.64 L672.97,194.83 L673.77,194.01 L674.57,193.20 L675.38,192.38 L676.19,191.57 L677.00,190.75 L677.82,189.94 L678.65,189.13 L679.47,188.31 L680.31,187.50 L681.14,186.68 L681.98,185.87 L682.83,185.05 L683.68,184.24 L684.53,183.42 L685.39,182.61 L686.25,181.79 L687.11,180.98 L687.98,180.16 L688.86,179.35 L689.73,178.53 L690.62,177.72 L691.50,176.90 L692.39,176.09 L693.29,175.27 L694.18,174.46 L695.08,173.65 L695.99,172.83 L696.90,172.02 L697.81,171.20 L698.73,170.39 L699.65,169.57 L700.58,168.76 L701.51,167.94 L702.44,167.13 L703.38,166.31 L704.32,165.50 L705.26,164.68 L706.21,163.87 L707.16,163.05 L708.12,162.24 L709.07,161.42 L710.04,160.61 L711.00,159.79 L711.97,158.98 L712.95,158.16 L713.92,157.35 L714.91,156.54 L715.89,155.72 L716.88,154.91 L717.87,154.09 L718.86,153.28 L719.86,152.46 L720.86,151.65 L721.87,150.83 L722.88,150.02 L723.89,149.20 L724.91,148.39 L725.93,147.57 L726.95,146.76 L727.97,145.94 L729.00,145.13 L730.03,144.31 L731.07,143.50 L732.11,142.68 L733.15,141.87 L734.20,141.06 L735.25,140.24 L736.30,139.43 L737.35,138.61 L738.41,137.80 L739.47,136.98 L740.53,136.17 L741.60,135.35 L742.67,134.54 L743.75,133.72 L744.82,132.91 L745.90,132.09 L746.98,131.28 L748.07,130.46 L749.16,129.65 L750.25,128.83 L751.34,128.02 L752.44,127.20 L753.54,126.39 L754.64,125.57 L755.75,124.76 L756.86,123.95 L757.97,123.13 L759.08,122.32 L760.20,121.50 L761.32,120.69 L762.44,119.87 L763.56,119.06 L764.69,118.24 L765.82,117.43 L766.95,116.61 L768.09,115.80 L769.22,114.98 L770.36,114.17 L771.51,113.35 L772.65,112.54 L773.80,111.72 L774.95,110.91 L776.10,110.09 L777.26,109.28 L778.41,108.47 L779.57,107.65 L780.73,106.84 L781.90,106.02 L783.06,105.21 L784.23,104.39 L785.40,103.58 L786.58,102.76 L787.75,101.95 L788.93,101.13 L790.11,100.32 L791.29,99.50 L792.48,98.69 L793.66,97.87 L794.85,97.06 L796.04,96.24 L797.23,95.43 L798.43,94.61 L799.62,93.80 L800.82,92.98 L802.02,92.17 L803.22,91.36 L804.43,90.54 L805.63,89.73 L806.84,88.91 L808.05,88.10 L809.26,87.28 L810.47,86.47 L811.69,85.65 L812.90,84.84 L814.12,84.02 L815.34,83.21 L816.56,82.39 L817.79,81.58 L819.01,80.76 L820.24,79.95 L821.46,79.13 L822.69,78.32 L823.92,77.50 L825.16,76.69 L826.39,75.88 L827.63,75.06 L828.86,74.25 L830.10,73.43 L831.34,72.62 L832.58,71.80 L833.82,70.99 L835.07,70.17 L836.31,69.36 L837.56,68.54 L838.80,67.73 L840.05,66.91 L841.30,66.10 L842.55,65.28 L843.80,64.47 L845.06,63.65 L846.31,62.84 L847.57,62.02 L848.82,61.21 L850.08,60.39 L851.34,59.58 L852.60,58.77 L853.86,57.95 L855.12,57.14 L856.38,56.32 L857.64,55.51 L858.91,54.69 L860.17,53.88 L861.44,53.06 L862.70,52.25 L863.97,51.43 L865.24,50.62 L866.50,49.80 L867.77,48.99 L869.04,48.17 L870.31,47.36 L871.58,46.54 L872.85,45.73 L874.13,44.91 L875.40,44.10 L876.67,43.29 L877.95,42.47 L879.22,41.66 L880.49,40.84 L881.77,40.03 L883.04,39.21 L884.32,38.40 L885.59,37.58 L886.87,36.77 L888.15,35.95 L889.42,35.14 L890.70,34.32 L891.98,33.51 L893.26,32.69 L894.53,31.88 L895.81,31.06 L897.09,30.25 L898.37,29.43 L899.64,28.62 L900.92,27.80 L902.20,26.99 M902.20,613.61 L901.13,612.80 L900.07,611.98 L899.00,611.17 L897.94,610.35 L896.88,609.54 L895.81,608.72 L894.75,607.91 L893.68,607.09 L892.62,606.28 L891.55,605.46 L890.49,604.65 L889.43,603.83 L888.36,603.02 L887.30,602.20 L886.24,601.39 L885.17,600.57 L884.11,599.76 L883.05,598.94 L881.99,598.13 L880.93,597.32 L879.87,596.50 L878.81,595.69 L877.75,594.87 L876.69,594.06 L875.63,593.24 L874.57,592.43 L873.51,591.61 L872.45,590.80 L871.40,589.98 L870.34,589.17 L869.28,588.35 L868.23,587.54 L867.18,586.72 L866.12,585.91 L865.07,585.09 L864.02,584.28 L862.96,583.46 L861.91,582.65 L860.86,581.83 L859.81,581.02 L858.77,580.21 L857.72,579.39 L856.67,578.58 L855.63,577.76 L854.58,576.95 L853.54,576.13 L852.49,575.32 L851.45,574.50 L850.41,573.69 L849.37,572.87 L848.33,572.06 L847.29,571.24 L846.26,570.43 L845.22,569.61 L844.18,568.80 L843.15,567.98 L842.12,567.17 L841.09,566.35 L840.05,565.54 L839.03,564.73 L838.00,563.91 L836.97,563.10 L835.94,562.28 L834.92,561.47 L833.90,560.65 L832.88,559.84 L831.85,559.02 L830.84,558.21 L829.82,557.39 L828.80,556.58 L827.79,555.76 L826.77,554.95 L825.76,554.13 L824.75,553.32 L823.74,552.50 L822.73,551.69 L821.73,550.87 L820.72,550.06 L819.72,549.24 L818.72,548.43 L817.72,547.62 L816.72,546.80 L815.72,545.99 L814.73,545.17 L813.73,544.36 L812.74,543.54 L811.75,542.73 L810.76,541.91 L809.78,541.10 L808.79,540.28 L807.81,539.47 L806.83,538.65 L805.85,537.84 L804.87,537.02 L803.89,536.21 L802.92,535.39 L801.95,534.58 L800.98,533.76 L800.01,532.95 L799.04,532.13 L798.08,531.32 L797.12,530.51 L796.16,529.69 L795.20,528.88 L794.24,528.06 L793.29,527.25 L792.34,526.43 L791.39,525.62 L790.44,524.80 L789.49,523.99 L788.55,523.17 L787.61,522.36 L786.67,521.54 L785.73,520.73 L784.80,519.91 L783.86,519.10 L782.93,518.28 L782.01,517.47 L781.08,516.65 L780.16,515.84 L779.24,515.03 L778.32,514.21 L777.40,513.40 L776.49,512.58 L775.57,511.77 L774.66,510.95 L773.76,510.14 L772.85,509.32 L771.95,508.51 L771.05,507.69 L770.15,506.88 L769.26,506.06 L768.37,505.25 L767.48,504.43 L766.59,503.62 L765.71,502.80 L764.83,501.99 L763.95,501.17 L763.07,500.36 L762.20,499.55 L761.33,498.73 L760.46,497.92 L759.59,497.10 L758.73,496.29 L757.87,495.47 L757.01,494.66 L756.16,493.84 L755.30,493.03 L754.46,492.21 L753.61,491.40 L752.77,490.58 L751.92,489.77 L751.09,488.95 L750.25,488.14 L749.42,487.32 L748.59,486.51 L747.76,485.69 L746.94,484.88 L746.12,484.06 L745.30,483.25 L744.49,482.44 L743.68,481.62 L742.87,480.81 L742.06,479.99 L741.26,479.18 L740.46,478.36 L739.67,477.55 L738.87,476.73 L738.08,475.92 L737.30,475.10 L736.51,474.29 L735.73,473.47 L734.96,472.66 L734.18,471.84 L733.41,471.03 L732.64,470.21 L731.88,469.40 L731.12,468.58 L730.36,467.77 L729.60,466.96 L728.85,466.14 L728.10,465.33 L727.36,464.51 L726.62,463.70 L725.88,462.88 L725.15,462.07 L724.41,461.25 L723.69,460.44 L722.96,459.62 L722.24,458.81 L721.52,457.99 L720.81,457.18 L720.10,456.36 L719.39,455.55 L718.69,454.73 L717.98,453.92 L717.29,453.10 L716.59,452.29 L715.90,451.47 L715.22,450.66 L714.54,449.85 L713.86,449.03 L713.18,448.22 L712.51,447.40 L711.84,446.59 L711.18,445.77 L710.51,444.96 L709.86,444.14 L709.20,443.33 L708.55,442.51 L707.91,441.70 L707.26,440.88 L706.62,440.07 L705.99,439.25 L705.36,438.44 L704.73,437.62 L704.10,436.81 L703.48,435.99 L702.87,435.18 L702.26,434.37 L701.65,433.55 L701.04,432.74 L700.44,431.92 L699.84,431.11 L699.25,430.29 L698.66,429.48 L698.07,428.66 L697.49,427.85 L696.91,427.03 L696.34,426.22 L695.77,425.40 L695.20,424.59 L694.64,423.77 L694.08,422.96 L693.53,422.14 L692.98,421.33 L692.43,420.51 L691.89,419.70 L691.35,418.88 L690.81,418.07 L690.28,417.26 L689.76,416.44 L689.23,415.63 L688.72,414.81 L688.20,414.00 L687.69,413.18 L687.19,412.37 L686.68,411.55 L686.19,410.74 L685.69,409.92 L685.20,409.11 L684.72,408.29 L684.24,407.48 L683.76,406.66 L683.28,405.85 L682.82,405.03 L682.35,404.22 L681.89,403.40 L681.43,402.59 L680.98,401.77 L680.53,400.96 L680.09,400.15 L679.65,399.33 L679.21,398.52 L678.78,397.70 L678.36,396.89 L677.93,396.07 L677.52,395.26 L677.10,394.44 L676.69,393.63 L676.29,392.81 L675.89,392.00 L675.49,391.18 L675.10,390.37 L674.71,389.55 L674.32,388.74 L673.95,387.92 L673.57,387.11 L673.20,386.29 L672.83,385.48 L672.47,384.67 L672.11,383.85 L671.76,383.04 L671.41,382.22 L671.07,381.41 L670.73,380.59 L670.39,379.78 L670.06,378.96 L669.73,378.15 L669.41,377.33 L669.09,376.52 L668.78,375.70 L668.47,374.89 L668.16,374.07 L667.86,373.26 L667.57,372.44 L667.28,371.63 L666.99,370.81 L666.71,370.00 L666.43,369.19 L666.16,368.37 L665.89,367.56 L665.62,366.74 L665.36,365.93 L665.11,365.11 L664.86,364.30 L664.61,363.48 L664.37,362.67 L664.13,361.85 L663.90,361.04 L663.67,360.22 L663.45,359.41 L663.23,358.59 L663.01,357.78 L662.80,356.96 L662.60,356.15 L662.40,355.33 L662.20,354.52 L662.01,353.70 L661.82,352.89 L661.64,352.08 L661.46,351.26 L661.29,350.45 L661.12,349.63 L660.95,348.82 L660.79,348.00 L660.64,347.19 L660.49,346.37 L660.34,345.56 L660.20,344.74 L660.06,343.93 L659.93,343.11 L659.80,342.30 L659.68,341.48 L659.56,340.67 L659.45,339.85 L659.34,339.04 L659.24,338.22 L659.14,337.41 L659.04,336.60 L658.95,335.78 L658.86,334.97 L658.78,334.15 L658.71,333.34 L658.64,332.52 L658.57,331.71 L658.51,330.89 L658.45,330.08 L658.39,329.26 L658.34,328.45 L658.30,327.63 L658.26,326.82 L658.23,326.00 L658.20,325.19 L658.17,324.37 L658.15,323.56 L658.13,322.74 L658.12,321.93 L658.11,321.11 L658.11,320.30 L658.11,319.49 L658.12,318.67 L658.13,317.86 L658.15,317.04 L658.17,316.23 L658.20,315.41 L658.23,314.60 L658.26,313.78 L658.30,312.97 L658.34,312.15 L658.39,311.34 L658.45,310.52 L658.51,309.71 L658.57,308.89 L658.64,308.08 L658.71,307.26 L658.78,306.45 L658.86,305.63 L658.95,304.82 L659.04,304.00 L659.14,303.19 L659.24,302.38 L659.34,301.56 L659.45,300.75 L659.56,299.93 L659.68,299.12 L659.80,298.30 L659.93,297.49 L660.06,296.67 L660.20,295.86 L660.34,295.04 L660.49,294.23 L660.64,293.41 L660.79,292.60 L660.95,291.78 L661.12,290.97 L661.29,290.15 L661.46,289.34 L661.64,288.52 L661.82,287.71 L662.01,286.90 L662.20,286.08 L662.40,285.27 L662.60,284.45 L662.80,283.64 L663.01,282.82 L663.23,282.01 L663.45,281.19 L663.67,280.38 L663.90,279.56 L664.13,278.75 L664.37,277.93 L664.61,277.12 L664.86,276.30 L665.11,275.49 L665.36,274.67 L665.62,273.86 L665.89,273.04 L666.16,272.23 L666.43,271.42 L666.71,270.60 L666.99,269.79 L667.28,268.97 L667.57,268.16 L667.86,267.34 L668.16,266.53 L668.47,265.71 L668.78,264.90 L669.09,264.08 L669.41,263.27 L669.73,262.45 L670.06,261.64 L670.39,260.82 L670.73,260.01 L671.07,259.19 L671.41,258.38 L671.76,257.56 L672.11,256.75 L672.47,255.93 L672.83,255.12 L673.20,254.31 L673.57,253.49 L673.95,252.68 L674.32,251.86 L674.71,251.05 L675.10,250.23 L675.49,249.42 L675.89,248.60 L676.29,247.79 L676.69,246.97 L677.10,246.16 L677.52,245.34 L677.93,244.53 L678.36,243.71 L678.78,242.90 L679.21,242.08 L679.65,241.27 L680.09,240.45 L680.53,239.64 L680.98,238.83 L681.43,238.01 L681.89,237.20 L682.35,236.38 L682.82,235.57 L683.28,234.75 L683.76,233.94 L684.24,233.12 L684.72,232.31 L685.20,231.49 L685.69,230.68 L686.19,229.86 L686.68,229.05 L687.19,228.23 L687.69,227.42 L688.20,226.60 L688.72,225.79 L689.23,224.97 L689.76,224.16 L690.28,223.34 L690.81,222.53 L691.35,221.72 L691.89,220.90 L692.43,220.09 L692.98,219.27 L693.53,218.46 L694.08,217.64 L694.64,216.83 L695.20,216.01 L695.77,215.20 L696.34,214.38 L696.91,213.57 L697.49,212.75 L698.07,211.94 L698.66,211.12 L699.25,210.31 L699.84,209.49 L700.44,208.68 L701.04,207.86 L701.65,207.05 L702.26,206.24 L702.87,205.42 L703.48,204.61 L704.10,203.79 L704.73,202.98 L705.36,202.16 L705.99,201.35 L706.62,200.53 L707.26,199.72 L707.91,198.90 L708.55,198.09 L709.20,197.27 L709.86,196.46 L710.51,195.64 L711.18,194.83 L711.84,194.01 L712.51,193.20 L713.18,192.38 L713.86,191.57 L714.54,190.75 L715.22,189.94 L715.90,189.13 L716.59,188.31 L717.29,187.50 L717.98,186.68 L718.69,185.87 L719.39,185.05 L720.10,184.24 L720.81,183.42 L721.52,182.61 L722.24,181.79 L722.96,180.98 L723.69,180.16 L724.41,179.35 L725.15,178.53 L725.88,177.72 L726.62,176.90 L727.36,176.09 L728.10,175.27 L728.85,174.46 L729.60,173.65 L730.36,172.83 L731.12,172.02 L731.88,171.20 L732.64,170.39 L733.41,169.57 L734.18,168.76 L734.96,167.94 L735.73,167.13 L736.51,166.31 L737.30,165.50 L738.08,164.68 L738.87,163.87 L739.67,163.05 L740.46,162.24 L741.26,161.42 L742.06,160.61 L742.87,159.79 L743.68,158.98 L744.49,158.16 L745.30,157.35 L746.12,156.54 L746.94,155.72 L747.76,154.91 L748.59,154.09 L749.42,153.28 L750.25,152.46 L751.09,151.65 L751.92,150.83 L752.77,150.02 L753.61,149.20 L754.46,148.39 L755.30,147.57 L756.16,146.76 L757.01,145.94 L757.87,145.13 L758.73,144.31 L759.59,143.50 L760.46,142.68 L761.33,141.87 L762.20,141.06 L763.07,140.24 L763.95,139.43 L764.83,138.61 L765.71,137.80 L766.59,136.98 L767.48,136.17 L768.37,135.35 L769.26,134.54 L770.15,133.72 L771.05,132.91 L771.95,132.09 L772.85,131.28 L773.76,130.46 L774.66,129.65 L775.57,128.83 L776.49,128.02 L777.40,127.20 L778.32,126.39 L779.24,125.57 L780.16,124.76 L781.08,123.95 L782.01,123.13 L782.93,122.32 L783.86,121.50 L784.80,120.69 L785.73,119.87 L786.67,119.06 L787.61,118.24 L788.55,117.43 L789.49,116.61 L790.44,115.80 L791.39,114.98 L792.34,114.17 L793.29,113.35 L794.24,112.54 L795.20,111.72 L796.16,110.91 L797.12,110.09 L798.08,109.28 L799.04,108.47 L800.01,107.65 L800.98,106.84 L801.95,106.02 L802.92,105.21 L803.89,104.39 L804.87,103.58 L805.85,102.76 L806.83,101.95 L807.81,101.13 L808.79,100.32 L809.78,99.50 L810.76,98.69 L811.75,97.87 L812.74,97.06 L813.73,96.24 L814.73,95.43 L815.72,94.61 L816.72,93.80 L817.72,92.98 L818.72,92.17 L819.72,91.36 L820.72,90.54 L821.73,89.73 L822.73,88.91 L823.74,88.10 L824.75,87.28 L825.76,86.47 L826.77,85.65 L827.79,84.84 L828.80,84.02 L829.82,83.21 L830.84,82.39 L831.85,81.58 L832.88,80.76 L833.90,79.95 L834.92,79.13 L835.94,78.32 L836.97,77.50 L838.00,76.69 L839.03,75.88 L840.05,75.06 L841.09,74.25 L842.12,73.43 L843.15,72.62 L844.18,71.80 L845.22,70.99 L846.26,70.17 L847.29,69.36 L848.33,68.54 L849.37,67.73 L850.41,66.91 L851.45,66.10 L852.49,65.28 L853.54,64.47 L854.58,63.65 L855.63,62.84 L856.67,62.02 L857.72,61.21 L858.77,60.39 L859.81,59.58 L860.86,58.77 L861.91,57.95 L862.96,57.14 L864.02,56.32 L865.07,55.51 L866.12,54.69 L867.18,53.88 L868.23,53.06 L869.28,52.25 L870.34,51.43 L871.40,50.62 L872.45,49.80 L873.51,48.99 L874.57,48.17 L875.63,47.36 L876.69,46.54 L877.75,45.73 L878.81,44.91 L879.87,44.10 L880.93,43.29 L881.99,42.47 L883.05,41.66 L884.11,40.84 L885.17,40.03 L886.24,39.21 L887.30,38.40 L888.36,37.58 L889.43,36.77 L890.49,35.95 L891.55,35.14 L892.62,34.32 L893.68,33.51 L894.75,32.69 L895.81,31.88 L896.88,31.06 L897.94,30.25 L899.00,29.43 L900.07,28.62 L901.13,27.80 L902.20,26.99 M902.20,613.61 L901.35,612.80 L900.50,611.98 L899.64,611.17 L898.79,610.35 L897.94,609.54 L897.09,608.72 L896.24,607.91 L895.39,607.09 L894.53,606.28 L893.68,605.46 L892.83,604.65 L891.98,603.83 L891.13,603.02 L890.28,602.20 L889.43,601.39 L888.58,600.57 L887.73,599.76 L886.88,598.94 L886.03,598.13 L885.18,597.32 L884.33,596.50 L883.48,595.69 L882.64,594.87 L881.79,594.06 L880.94,593.24 L880.09,592.43 L879.25,591.61 L878.40,590.80 L877.56,589.98 L876.71,589.17 L875.87,588.35 L875.02,587.54 L874.18,586.72 L873.34,585.91 L872.49,585.09 L871.65,584.28 L870.81,583.46 L869.97,582.65 L869.13,581.83 L868.29,581.02 L867.45,580.21 L866.61,579.39 L865.78,578.58 L864.94,577.76 L864.10,576.95 L863.27,576.13 L862.43,575.32 L861.60,574.50 L860.77,573.69 L859.94,572.87 L859.10,572.06 L858.27,571.24 L857.44,570.43 L856.62,569.61 L855.79,568.80 L854.96,567.98 L854.13,567.17 L853.31,566.35 L852.48,565.54 L851.66,564.73 L850.84,563.91 L850.02,563.10 L849.20,562.28 L848.38,561.47 L847.56,560.65 L846.74,559.84 L845.92,559.02 L845.11,558.21 L844.29,557.39 L843.48,556.58 L842.67,555.76 L841.86,554.95 L841.05,554.13 L840.24,553.32 L839.43,552.50 L838.63,551.69 L837.82,550.87 L837.02,550.06 L836.22,549.24 L835.41,548.43 L834.61,547.62 L833.82,546.80 L833.02,545.99 L832.22,545.17 L831.43,544.36 L830.63,543.54 L829.84,542.73 L829.05,541.91 L828.26,541.10 L827.47,540.28 L826.69,539.47 L825.90,538.65 L825.12,537.84 L824.34,537.02 L823.56,536.21 L822.78,535.39 L822.00,534.58 L821.22,533.76 L820.45,532.95 L819.68,532.13 L818.90,531.32 L818.13,530.51 L817.37,529.69 L816.60,528.88 L815.83,528.06 L815.07,527.25 L814.31,526.43 L813.55,525.62 L812.79,524.80 L812.03,523.99 L811.28,523.17 L810.53,522.36 L809.77,521.54 L809.03,520.73 L808.28,519.91 L807.53,519.10 L806.79,518.28 L806.04,517.47 L805.30,516.65 L804.57,515.84 L803.83,515.03 L803.09,514.21 L802.36,513.40 L801.63,512.58 L800.90,511.77 L800.17,510.95 L799.45,510.14 L798.72,509.32 L798.00,508.51 L797.28,507.69 L796.56,506.88 L795.85,506.06 L795.13,505.25 L794.42,504.43 L793.71,503.62 L793.01,502.80 L792.30,501.99 L791.60,501.17 L790.90,500.36 L790.20,499.55 L789.50,498.73 L788.81,497.92 L788.11,497.10 L787.42,496.29 L786.73,495.47 L786.05,494.66 L785.37,493.84 L784.68,493.03 L784.00,492.21 L783.33,491.40 L782.65,490.58 L781.98,489.77 L781.31,488.95 L780.64,488.14 L779.98,487.32 L779.31,486.51 L778.65,485.69 L777.99,484.88 L777.34,484.06 L776.68,483.25 L776.03,482.44 L775.38,481.62 L774.74,480.81 L774.09,479.99 L773.45,479.18 L772.81,478.36 L772.17,477.55 L771.54,476.73 L770.91,475.92 L770.28,475.10 L769.65,474.29 L769.03,473.47 L768.40,472.66 L767.79,471.84 L767.17,471.03 L766.55,470.21 L765.94,469.40 L765.33,468.58 L764.73,467.77 L764.12,466.96 L763.52,466.14 L762.92,465.33 L762.33,464.51 L761.73,463.70 L761.14,462.88 L760.56,462.07 L759.97,461.25 L759.39,460.44 L758.81,459.62 L758.23,458.81 L757.66,457.99 L757.09,457.18 L756.52,456.36 L755.95,455.55 L755.39,454.73 L754.83,453.92 L754.27,453.10 L753.72,452.29 L753.16,451.47 L752.61,450.66 L752.07,449.85 L751.52,449.03 L750.98,448.22 L750.45,447.40 L749.91,446.59 L749.38,445.77 L748.85,444.96 L748.33,444.14 L747.80,443.33 L747.28,442.51 L746.76,441.70 L746.25,440.88 L745.74,440.07 L745.23,439.25 L744.73,438.44 L744.22,437.62 L743.72,436.81 L743.23,435.99 L742.73,435.18 L742.24,434.37 L741.76,433.55 L741.27,432.74 L740.79,431.92 L740.31,431.11 L739.84,430.29 L739.37,429.48 L738.90,428.66 L738.43,427.85 L737.97,427.03 L737.51,426.22 L737.05,425.40 L736.60,424.59 L736.15,423.77 L735.70,422.96 L735.26,422.14 L734.82,421.33 L734.38,420.51 L733.95,419.70 L733.52,418.88 L733.09,418.07 L732.67,417.26 L732.25,416.44 L731.83,415.63 L731.41,414.81 L731.00,414.00 L730.59,413.18 L730.19,412.37 L729.79,411.55 L729.39,410.74 L728.99,409.92 L728.60,409.11 L728.21,408.29 L727.83,407.48 L727.45,406.66 L727.07,405.85 L726.69,405.03 L726.32,404.22 L725.95,403.40 L725.59,402.59 L725.23,401.77 L724.87,400.96 L724.51,400.15 L724.16,399.33 L723.81,398.52 L723.47,397.70 L723.13,396.89 L722.79,396.07 L722.45,395.26 L722.12,394.44 L721.79,393.63 L721.47,392.81 L721.15,392.00 L720.83,391.18 L720.52,390.37 L720.21,389.55 L719.90,388.74 L719.60,387.92 L719.30,387.11 L719.00,386.29 L718.71,385.48 L718.42,384.67 L718.13,383.85 L717.85,383.04 L717.57,382.22 L717.29,381.41 L717.02,380.59 L716.75,379.78 L716.49,378.96 L716.23,378.15 L715.97,377.33 L715.71,376.52 L715.46,375.70 L715.22,374.89 L714.97,374.07 L714.73,373.26 L714.49,372.44 L714.26,371.63 L714.03,370.81 L713.81,370.00 L713.58,369.19 L713.36,368.37 L713.15,367.56 L712.94,366.74 L712.73,365.93 L712.53,365.11 L712.33,364.30 L712.13,363.48 L711.93,362.67 L711.74,361.85 L711.56,361.04 L711.38,360.22 L711.20,359.41 L711.02,358.59 L710.85,357.78 L710.68,356.96 L710.52,356.15 L710.36,355.33 L710.20,354.52 L710.05,353.70 L709.90,352.89 L709.75,352.08 L709.61,351.26 L709.47,350.45 L709.33,349.63 L709.20,348.82 L709.07,348.00 L708.95,347.19 L708.83,346.37 L708.71,345.56 L708.60,344.74 L708.49,343.93 L708.39,343.11 L708.28,342.30 L708.19,341.48 L708.09,340.67 L708.00,339.85 L707.91,339.04 L707.83,338.22 L707.75,337.41 L707.67,336.60 L707.60,335.78 L707.53,334.97 L707.47,334.15 L707.41,333.34 L707.35,332.52 L707.29,331.71 L707.24,330.89 L707.20,330.08 L707.15,329.26 L707.12,328.45 L707.08,327.63 L707.05,326.82 L707.02,326.00 L707.00,325.19 L706.98,324.37 L706.96,323.56 L706.95,322.74 L706.94,321.93 L706.93,321.11 L706.93,320.30 L706.93,319.49 L706.94,318.67 L706.95,317.86 L706.96,317.04 L706.98,316.23 L707.00,315.41 L707.02,314.60 L707.05,313.78 L707.08,312.97 L707.12,312.15 L707.15,311.34 L707.20,310.52 L707.24,309.71 L707.29,308.89 L707.35,308.08 L707.41,307.26 L707.47,306.45 L707.53,305.63 L707.60,304.82 L707.67,304.00 L707.75,303.19 L707.83,302.38 L707.91,301.56 L708.00,300.75 L708.09,299.93 L708.19,299.12 L708.28,298.30 L708.39,297.49 L708.49,296.67 L708.60,295.86 L708.71,295.04 L708.83,294.23 L708.95,293.41 L709.07,292.60 L709.20,291.78 L709.33,290.97 L709.47,290.15 L709.61,289.34 L709.75,288.52 L709.90,287.71 L710.05,286.90 L710.20,286.08 L710.36,285.27 L710.52,284.45 L710.68,283.64 L710.85,282.82 L711.02,282.01 L711.20,281.19 L711.38,280.38 L711.56,279.56 L711.74,278.75 L711.93,277.93 L712.13,277.12 L712.33,276.30 L712.53,275.49 L712.73,274.67 L712.94,273.86 L713.15,273.04 L713.36,272.23 L713.58,271.42 L713.81,270.60 L714.03,269.79 L714.26,268.97 L714.49,268.16 L714.73,267.34 L714.97,266.53 L715.22,265.71 L715.46,264.90 L715.71,264.08 L715.97,263.27 L716.23,262.45 L716.49,261.64 L716.75,260.82 L717.02,260.01 L717.29,259.19 L717.57,258.38 L717.85,257.56 L718.13,256.75 L718.42,255.93 L718.71,255.12 L719.00,254.31 L719.30,253.49 L719.60,252.68 L719.90,251.86 L720.21,251.05 L720.52,250.23 L720.83,249.42 L721.15,248.60 L721.47,247.79 L721.79,246.97 L722.12,246.16 L722.45,245.34 L722.79,244.53 L723.13,243.71 L723.47,242.90 L723.81,242.08 L724.16,241.27 L724.51,240.45 L724.87,239.64 L725.23,238.83 L725.59,238.01 L725.95,237.20 L726.32,236.38 L726.69,235.57 L727.07,234.75 L727.45,233.94 L727.83,233.12 L728.21,232.31 L728.60,231.49 L728.99,230.68 L729.39,229.86 L729.79,229.05 L730.19,228.23 L730.59,227.42 L731.00,226.60 L731.41,225.79 L731.83,224.97 L732.25,224.16 L732.67,223.34 L733.09,222.53 L733.52,221.72 L733.95,220.90 L734.38,220.09 L734.82,219.27 L735.26,218.46 L735.70,217.64 L736.15,216.83 L736.60,216.01 L737.05,215.20 L737.51,214.38 L737.97,213.57 L738.43,212.75 L738.90,211.94 L739.37,211.12 L739.84,210.31 L740.31,209.49 L740.79,208.68 L741.27,207.86 L741.76,207.05 L742.24,206.24 L742.73,205.42 L743.23,204.61 L743.72,203.79 L744.22,202.98 L744.73,202.16 L745.23,201.35 L745.74,200.53 L746.25,199.72 L746.76,198.90 L747.28,198.09 L747.80,197.27 L748.33,196.46 L748.85,195.64 L749.38,194.83 L749.91,194.01 L750.45,193.20 L750.98,192.38 L751.52,191.57 L752.07,190.75 L752.61,189.94 L753.16,189.13 L753.72,188.31 L754.27,187.50 L754.83,186.68 L755.39,185.87 L755.95,185.05 L756.52,184.24 L757.09,183.42 L757.66,182.61 L758.23,181.79 L758.81,180.98 L759.39,180.16 L759.97,179.35 L760.56,178.53 L761.14,177.72 L761.73,176.90 L762.33,176.09 L762.92,175.27 L763.52,174.46 L764.12,173.65 L764.73,172.83 L765.33,172.02 L765.94,171.20 L766.55,170.39 L767.17,169.57 L767.79,168.76 L768.40,167.94 L769.03,167.13 L769.65,166.31 L770.28,165.50 L770.91,164.68 L771.54,163.87 L772.17,163.05 L772.81,162.24 L773.45,161.42 L774.09,160.61 L774.74,159.79 L775.38,158.98 L776.03,158.16 L776.68,157.35 L777.34,156.54 L777.99,155.72 L778.65,154.91 L779.31,154.09 L779.98,153.28 L780.64,152.46 L781.31,151.65 L781.98,150.83 L782.65,150.02 L783.33,149.20 L784.00,148.39 L784.68,147.57 L785.37,146.76 L786.05,145.94 L786.73,145.13 L787.42,144.31 L788.11,143.50 L788.81,142.68 L789.50,141.87 L790.20,141.06 L790.90,140.24 L791.60,139.43 L792.30,138.61 L793.01,137.80 L793.71,136.98 L794.42,136.17 L795.13,135.35 L795.85,134.54 L796.56,133.72 L797.28,132.91 L798.00,132.09 L798.72,131.28 L799.45,130.46 L800.17,129.65 L800.90,128.83 L801.63,128.02 L802.36,127.20 L803.09,126.39 L803.83,125.57 L804.57,124.76 L805.30,123.95 L806.04,123.13 L806.79,122.32 L807.53,121.50 L808.28,120.69 L809.03,119.87 L809.77,119.06 L810.53,118.24 L811.28,117.43 L812.03,116.61 L812.79,115.80 L813.55,114.98 L814.31,114.17 L815.07,113.35 L815.83,112.54 L816.60,111.72 L817.37,110.91 L818.13,110.09 L818.90,109.28 L819.68,108.47 L820.45,107.65 L821.22,106.84 L822.00,106.02 L822.78,105.21 L823.56,104.39 L824.34,103.58 L825.12,102.76 L825.90,101.95 L826.69,101.13 L827.47,100.32 L828.26,99.50 L829.05,98.69 L829.84,97.87 L830.63,97.06 L831.43,96.24 L832.22,95.43 L833.02,94.61 L833.82,93.80 L834.61,92.98 L835.41,92.17 L836.22,91.36 L837.02,90.54 L837.82,89.73 L838.63,88.91 L839.43,88.10 L840.24,87.28 L841.05,86.47 L841.86,85.65 L842.67,84.84 L843.48,84.02 L844.29,83.21 L845.11,82.39 L845.92,81.58 L846.74,80.76 L847.56,79.95 L848.38,79.13 L849.20,78.32 L850.02,77.50 L850.84,76.69 L851.66,75.88 L852.48,75.06 L853.31,74.25 L854.13,73.43 L854.96,72.62 L855.79,71.80 L856.62,70.99 L857.44,70.17 L858.27,69.36 L859.10,68.54 L859.94,67.73 L860.77,66.91 L861.60,66.10 L862.43,65.28 L863.27,64.47 L864.10,63.65 L864.94,62.84 L865.78,62.02 L866.61,61.21 L867.45,60.39 L868.29,59.58 L869.13,58.77 L869.97,57.95 L870.81,57.14 L871.65,56.32 L872.49,55.51 L873.34,54.69 L874.18,53.88 L875.02,53.06 L875.87,52.25 L876.71,51.43 L877.56,50.62 L878.40,49.80 L879.25,48.99 L880.09,48.17 L880.94,47.36 L881.79,46.54 L882.64,45.73 L883.48,44.91 L884.33,44.10 L885.18,43.29 L886.03,42.47 L886.88,41.66 L887.73,40.84 L888.58,40.03 L889.43,39.21 L890.28,38.40 L891.13,37.58 L891.98,36.77 L892.83,35.95 L893.68,35.14 L894.53,34.32 L895.39,33.51 L896.24,32.69 L897.09,31.88 L897.94,31.06 L898.79,30.25 L899.64,29.43 L900.50,28.62 L901.35,27.80 L902.20,26.99 M902.20,613.61 L901.56,612.80 L900.92,611.98 L900.28,611.17 L899.64,610.35 L899.01,609.54 L898.37,608.72 L897.73,607.91 L897.09,607.09 L896.45,606.28 L895.81,605.46 L895.17,604.65 L894.54,603.83 L893.90,603.02 L893.26,602.20 L892.62,601.39 L891.98,600.57 L891.35,599.76 L890.71,598.94 L890.07,598.13 L889.44,597.32 L888.80,596.50 L888.16,595.69 L887.53,594.87 L886.89,594.06 L886.26,593.24 L885.62,592.43 L884.99,591.61 L884.35,590.80 L883.72,589.98 L883.08,589.17 L882.45,588.35 L881.82,587.54 L881.19,586.72 L880.55,585.91 L879.92,585.09 L879.29,584.28 L878.66,583.46 L878.03,582.65 L877.40,581.83 L876.77,581.02 L876.14,580.21 L875.51,579.39 L874.88,578.58 L874.26,577.76 L873.63,576.95 L873.00,576.13 L872.38,575.32 L871.75,574.50 L871.13,573.69 L870.50,572.87 L869.88,572.06 L869.26,571.24 L868.63,570.43 L868.01,569.61 L867.39,568.80 L866.77,567.98 L866.15,567.17 L865.53,566.35 L864.91,565.54 L864.30,564.73 L863.68,563.91 L863.06,563.10 L862.45,562.28 L861.83,561.47 L861.22,560.65 L860.61,559.84 L859.99,559.02 L859.38,558.21 L858.77,557.39 L858.16,556.58 L857.55,555.76 L856.94,554.95 L856.34,554.13 L855.73,553.32 L855.12,552.50 L854.52,551.69 L853.92,550.87 L853.31,550.06 L852.71,549.24 L852.11,548.43 L851.51,547.62 L850.91,546.80 L850.31,545.99 L849.72,545.17 L849.12,544.36 L848.52,543.54 L847.93,542.73 L847.34,541.91 L846.75,541.10 L846.16,540.28 L845.57,539.47 L844.98,538.65 L844.39,537.84 L843.80,537.02 L843.22,536.21 L842.63,535.39 L842.05,534.58 L841.47,533.76 L840.89,532.95 L840.31,532.13 L839.73,531.32 L839.15,530.51 L838.57,529.69 L838.00,528.88 L837.43,528.06 L836.85,527.25 L836.28,526.43 L835.71,525.62 L835.14,524.80 L834.58,523.99 L834.01,523.17 L833.44,522.36 L832.88,521.54 L832.32,520.73 L831.76,519.91 L831.20,519.10 L830.64,518.28 L830.08,517.47 L829.53,516.65 L828.97,515.84 L828.42,515.03 L827.87,514.21 L827.32,513.40 L826.77,512.58 L826.22,511.77 L825.68,510.95 L825.13,510.14 L824.59,509.32 L824.05,508.51 L823.51,507.69 L822.97,506.88 L822.44,506.06 L821.90,505.25 L821.37,504.43 L820.84,503.62 L820.30,502.80 L819.78,501.99 L819.25,501.17 L818.72,500.36 L818.20,499.55 L817.68,498.73 L817.15,497.92 L816.64,497.10 L816.12,496.29 L815.60,495.47 L815.09,494.66 L814.57,493.84 L814.06,493.03 L813.55,492.21 L813.05,491.40 L812.54,490.58 L812.03,489.77 L811.53,488.95 L811.03,488.14 L810.53,487.32 L810.03,486.51 L809.54,485.69 L809.04,484.88 L808.55,484.06 L808.06,483.25 L807.57,482.44 L807.09,481.62 L806.60,480.81 L806.12,479.99 L805.64,479.18 L805.16,478.36 L804.68,477.55 L804.20,476.73 L803.73,475.92 L803.26,475.10 L802.79,474.29 L802.32,473.47 L801.85,472.66 L801.39,471.84 L800.93,471.03 L800.47,470.21 L800.01,469.40 L799.55,468.58 L799.10,467.77 L798.64,466.96 L798.19,466.14 L797.74,465.33 L797.30,464.51 L796.85,463.70 L796.41,462.88 L795.97,462.07 L795.53,461.25 L795.09,460.44 L794.66,459.62 L794.22,458.81 L793.79,457.99 L793.36,457.18 L792.94,456.36 L792.51,455.55 L792.09,454.73 L791.67,453.92 L791.25,453.10 L790.84,452.29 L790.42,451.47 L790.01,450.66 L789.60,449.85 L789.19,449.03 L788.79,448.22 L788.39,447.40 L787.98,446.59 L787.59,445.77 L787.19,444.96 L786.79,444.14 L786.40,443.33 L786.01,442.51 L785.62,441.70 L785.24,440.88 L784.85,440.07 L784.47,439.25 L784.09,438.44 L783.72,437.62 L783.34,436.81 L782.97,435.99 L782.60,435.18 L782.23,434.37 L781.87,433.55 L781.50,432.74 L781.14,431.92 L780.79,431.11 L780.43,430.29 L780.08,429.48 L779.72,428.66 L779.37,427.85 L779.03,427.03 L778.68,426.22 L778.34,425.40 L778.00,424.59 L777.66,423.77 L777.33,422.96 L777.00,422.14 L776.67,421.33 L776.34,420.51 L776.01,419.70 L775.69,418.88 L775.37,418.07 L775.05,417.26 L774.73,416.44 L774.42,415.63 L774.11,414.81 L773.80,414.00 L773.50,413.18 L773.19,412.37 L772.89,411.55 L772.59,410.74 L772.30,409.92 L772.00,409.11 L771.71,408.29 L771.42,407.48 L771.13,406.66 L770.85,405.85 L770.57,405.03 L770.29,404.22 L770.01,403.40 L769.74,402.59 L769.47,401.77 L769.20,400.96 L768.93,400.15 L768.67,399.33 L768.41,398.52 L768.15,397.70 L767.89,396.89 L767.64,396.07 L767.39,395.26 L767.14,394.44 L766.90,393.63 L766.65,392.81 L766.41,392.00 L766.17,391.18 L765.94,390.37 L765.71,389.55 L765.47,388.74 L765.25,387.92 L765.02,387.11 L764.80,386.29 L764.58,385.48 L764.36,384.67 L764.15,383.85 L763.94,383.04 L763.73,382.22 L763.52,381.41 L763.32,380.59 L763.11,379.78 L762.92,378.96 L762.72,378.15 L762.53,377.33 L762.33,376.52 L762.15,375.70 L761.96,374.89 L761.78,374.07 L761.60,373.26 L761.42,372.44 L761.25,371.63 L761.07,370.81 L760.90,370.00 L760.74,369.19 L760.57,368.37 L760.41,367.56 L760.25,366.74 L760.10,365.93 L759.94,365.11 L759.79,364.30 L759.65,363.48 L759.50,362.67 L759.36,361.85 L759.22,361.04 L759.08,360.22 L758.95,359.41 L758.82,358.59 L758.69,357.78 L758.56,356.96 L758.44,356.15 L758.32,355.33 L758.20,354.52 L758.08,353.70 L757.97,352.89 L757.86,352.08 L757.76,351.26 L757.65,350.45 L757.55,349.63 L757.45,348.82 L757.36,348.00 L757.26,347.19 L757.17,346.37 L757.09,345.56 L757.00,344.74 L756.92,343.93 L756.84,343.11 L756.76,342.30 L756.69,341.48 L756.62,340.67 L756.55,339.85 L756.48,339.04 L756.42,338.22 L756.36,337.41 L756.30,336.60 L756.25,335.78 L756.20,334.97 L756.15,334.15 L756.10,333.34 L756.06,332.52 L756.02,331.71 L755.98,330.89 L755.95,330.08 L755.92,329.26 L755.89,328.45 L755.86,327.63 L755.84,326.82 L755.82,326.00 L755.80,325.19 L755.78,324.37 L755.77,323.56 L755.76,322.74 L755.75,321.93 L755.75,321.11 L755.75,320.30 L755.75,319.49 L755.75,318.67 L755.76,317.86 L755.77,317.04 L755.78,316.23 L755.80,315.41 L755.82,314.60 L755.84,313.78 L755.86,312.97 L755.89,312.15 L755.92,311.34 L755.95,310.52 L755.98,309.71 L756.02,308.89 L756.06,308.08 L756.10,307.26 L756.15,306.45 L756.20,305.63 L756.25,304.82 L756.30,304.00 L756.36,303.19 L756.42,302.38 L756.48,301.56 L756.55,300.75 L756.62,299.93 L756.69,299.12 L756.76,298.30 L756.84,297.49 L756.92,296.67 L757.00,295.86 L757.09,295.04 L757.17,294.23 L757.26,293.41 L757.36,292.60 L757.45,291.78 L757.55,290.97 L757.65,290.15 L757.76,289.34 L757.86,288.52 L757.97,287.71 L758.08,286.90 L758.20,286.08 L758.32,285.27 L758.44,284.45 L758.56,283.64 L758.69,282.82 L758.82,282.01 L758.95,281.19 L759.08,280.38 L759.22,279.56 L759.36,278.75 L759.50,277.93 L759.65,277.12 L759.79,276.30 L759.94,275.49 L760.10,274.67 L760.25,273.86 L760.41,273.04 L760.57,272.23 L760.74,271.42 L760.90,270.60 L761.07,269.79 L761.25,268.97 L761.42,268.16 L761.60,267.34 L761.78,266.53 L761.96,265.71 L762.15,264.90 L762.33,264.08 L762.53,263.27 L762.72,262.45 L762.92,261.64 L763.11,260.82 L763.32,260.01 L763.52,259.19 L763.73,258.38 L763.94,257.56 L764.15,256.75 L764.36,255.93 L764.58,255.12 L764.80,254.31 L765.02,253.49 L765.25,252.68 L765.47,251.86 L765.71,251.05 L765.94,250.23 L766.17,249.42 L766.41,248.60 L766.65,247.79 L766.90,246.97 L767.14,246.16 L767.39,245.34 L767.64,244.53 L767.89,243.71 L768.15,242.90 L768.41,242.08 L768.67,241.27 L768.93,240.45 L769.20,239.64 L769.47,238.83 L769.74,238.01 L770.01,237.20 L770.29,236.38 L770.57,235.57 L770.85,234.75 L771.13,233.94 L771.42,233.12 L771.71,232.31 L772.00,231.49 L772.30,230.68 L772.59,229.86 L772.89,229.05 L773.19,228.23 L773.50,227.42 L773.80,226.60 L774.11,225.79 L774.42,224.97 L774.73,224.16 L775.05,223.34 L775.37,222.53 L775.69,221.72 L776.01,220.90 L776.34,220.09 L776.67,219.27 L777.00,218.46 L777.33,217.64 L777.66,216.83 L778.00,216.01 L778.34,215.20 L778.68,214.38 L779.03,213.57 L779.37,212.75 L779.72,211.94 L780.08,211.12 L780.43,210.31 L780.79,209.49 L781.14,208.68 L781.50,207.86 L781.87,207.05 L782.23,206.24 L782.60,205.42 L782.97,204.61 L783.34,203.79 L783.72,202.98 L784.09,202.16 L784.47,201.35 L784.85,200.53 L785.24,199.72 L785.62,198.90 L786.01,198.09 L786.40,197.27 L786.79,196.46 L787.19,195.64 L787.59,194.83 L787.98,194.01 L788.39,193.20 L788.79,192.38 L789.19,191.57 L789.60,190.75 L790.01,189.94 L790.42,189.13 L790.84,188.31 L791.25,187.50 L791.67,186.68 L792.09,185.87 L792.51,185.05 L792.94,184.24 L793.36,183.42 L793.79,182.61 L794.22,181.79 L794.66,180.98 L795.09,180.16 L795.53,179.35 L795.97,178.53 L796.41,177.72 L796.85,176.90 L797.30,176.09 L797.74,175.27 L798.19,174.46 L798.64,173.65 L799.10,172.83 L799.55,172.02 L800.01,171.20 L800.47,170.39 L800.93,169.57 L801.39,168.76 L801.85,167.94 L802.32,167.13 L802.79,166.31 L803.26,165.50 L803.73,164.68 L804.20,163.87 L804.68,163.05 L805.16,162.24 L805.64,161.42 L806.12,160.61 L806.60,159.79 L807.09,158.98 L807.57,158.16 L808.06,157.35 L808.55,156.54 L809.04,155.72 L809.54,154.91 L810.03,154.09 L810.53,153.28 L811.03,152.46 L811.53,151.65 L812.03,150.83 L812.54,150.02 L813.05,149.20 L813.55,148.39 L814.06,147.57 L814.57,146.76 L815.09,145.94 L815.60,145.13 L816.12,144.31 L816.64,143.50 L817.15,142.68 L817.68,141.87 L818.20,141.06 L818.72,140.24 L819.25,139.43 L819.78,138.61 L820.30,137.80 L820.84,136.98 L821.37,136.17 L821.90,135.35 L822.44,134.54 L822.97,133.72 L823.51,132.91 L824.05,132.09 L824.59,131.28 L825.13,130.46 L825.68,129.65 L826.22,128.83 L826.77,128.02 L827.32,127.20 L827.87,126.39 L828.42,125.57 L828.97,124.76 L829.53,123.95 L830.08,123.13 L830.64,122.32 L831.20,121.50 L831.76,120.69 L832.32,119.87 L832.88,119.06 L833.44,118.24 L834.01,117.43 L834.58,116.61 L835.14,115.80 L835.71,114.98 L836.28,114.17 L836.85,113.35 L837.43,112.54 L838.00,111.72 L838.57,110.91 L839.15,110.09 L839.73,109.28 L840.31,108.47 L840.89,107.65 L841.47,106.84 L842.05,106.02 L842.63,105.21 L843.22,104.39 L843.80,103.58 L844.39,102.76 L844.98,101.95 L845.57,101.13 L846.16,100.32 L846.75,99.50 L847.34,98.69 L847.93,97.87 L848.52,97.06 L849.12,96.24 L849.72,95.43 L850.31,94.61 L850.91,93.80 L851.51,92.98 L852.11,92.17 L852.71,91.36 L853.31,90.54 L853.92,89.73 L854.52,88.91 L855.12,88.10 L855.73,87.28 L856.34,86.47 L856.94,85.65 L857.55,84.84 L858.16,84.02 L858.77,83.21 L859.38,82.39 L859.99,81.58 L860.61,80.76 L861.22,79.95 L861.83,79.13 L862.45,78.32 L863.06,77.50 L863.68,76.69 L864.30,75.88 L864.91,75.06 L865.53,74.25 L866.15,73.43 L866.77,72.62 L867.39,71.80 L868.01,70.99 L868.63,70.17 L869.26,69.36 L869.88,68.54 L870.50,67.73 L871.13,66.91 L871.75,66.10 L872.38,65.28 L873.00,64.47 L873.63,63.65 L874.26,62.84 L874.88,62.02 L875.51,61.21 L876.14,60.39 L876.77,59.58 L877.40,58.77 L878.03,57.95 L878.66,57.14 L879.29,56.32 L879.92,55.51 L880.55,54.69 L881.19,53.88 L881.82,53.06 L882.45,52.25 L883.08,51.43 L883.72,50.62 L884.35,49.80 L884.99,48.99 L885.62,48.17 L886.26,47.36 L886.89,46.54 L887.53,45.73 L888.16,44.91 L888.80,44.10 L889.44,43.29 L890.07,42.47 L890.71,41.66 L891.35,40.84 L891.98,40.03 L892.62,39.21 L893.26,38.40 L893.90,37.58 L894.54,36.77 L895.17,35.95 L895.81,35.14 L896.45,34.32 L897.09,33.51 L897.73,32.69 L898.37,31.88 L899.01,31.06 L899.64,30.25 L900.28,29.43 L900.92,28.62 L901.56,27.80 L902.20,26.99 M902.20,613.61 L901.77,612.80 L901.35,611.98 L900.92,611.17 L900.50,610.35 L900.07,609.54 L899.64,608.72 L899.22,607.91 L898.79,607.09 L898.37,606.28 L897.94,605.46 L897.52,604.65 L897.09,603.83 L896.66,603.02 L896.24,602.20 L895.81,601.39 L895.39,600.57 L894.96,599.76 L894.54,598.94 L894.12,598.13 L893.69,597.32 L893.27,596.50 L892.84,595.69 L892.42,594.87 L891.99,594.06 L891.57,593.24 L891.15,592.43 L890.72,591.61 L890.30,590.80 L889.88,589.98 L889.46,589.17 L889.03,588.35 L888.61,587.54 L888.19,586.72 L887.77,585.91 L887.35,585.09 L886.93,584.28 L886.51,583.46 L886.09,582.65 L885.67,581.83 L885.25,581.02 L884.83,580.21 L884.41,579.39 L883.99,578.58 L883.57,577.76 L883.15,576.95 L882.73,576.13 L882.32,575.32 L881.90,574.50 L881.48,573.69 L881.07,572.87 L880.65,572.06 L880.24,571.24 L879.82,570.43 L879.41,569.61 L878.99,568.80 L878.58,567.98 L878.17,567.17 L877.75,566.35 L877.34,565.54 L876.93,564.73 L876.52,563.91 L876.11,563.10 L875.70,562.28 L875.29,561.47 L874.88,560.65 L874.47,559.84 L874.06,559.02 L873.65,558.21 L873.25,557.39 L872.84,556.58 L872.43,555.76 L872.03,554.95 L871.62,554.13 L871.22,553.32 L870.82,552.50 L870.41,551.69 L870.01,550.87 L869.61,550.06 L869.21,549.24 L868.81,548.43 L868.41,547.62 L868.01,546.80 L867.61,545.99 L867.21,545.17 L866.81,544.36 L866.42,543.54 L866.02,542.73 L865.63,541.91 L865.23,541.10 L864.84,540.28 L864.44,539.47 L864.05,538.65 L863.66,537.84 L863.27,537.02 L862.88,536.21 L862.49,535.39 L862.10,534.58 L861.71,533.76 L861.32,532.95 L860.94,532.13 L860.55,531.32 L860.17,530.51 L859.78,529.69 L859.40,528.88 L859.02,528.06 L858.64,527.25 L858.25,526.43 L857.87,525.62 L857.50,524.80 L857.12,523.99 L856.74,523.17 L856.36,522.36 L855.99,521.54 L855.61,520.73 L855.24,519.91 L854.87,519.10 L854.49,518.28 L854.12,517.47 L853.75,516.65 L853.38,515.84 L853.01,515.03 L852.65,514.21 L852.28,513.40 L851.91,512.58 L851.55,511.77 L851.19,510.95 L850.82,510.14 L850.46,509.32 L850.10,508.51 L849.74,507.69 L849.38,506.88 L849.02,506.06 L848.67,505.25 L848.31,504.43 L847.96,503.62 L847.60,502.80 L847.25,501.99 L846.90,501.17 L846.55,500.36 L846.20,499.55 L845.85,498.73 L845.50,497.92 L845.16,497.10 L844.81,496.29 L844.47,495.47 L844.12,494.66 L843.78,493.84 L843.44,493.03 L843.10,492.21 L842.76,491.40 L842.43,490.58 L842.09,489.77 L841.75,488.95 L841.42,488.14 L841.09,487.32 L840.76,486.51 L840.43,485.69 L840.10,484.88 L839.77,484.06 L839.44,483.25 L839.12,482.44 L838.79,481.62 L838.47,480.81 L838.15,479.99 L837.82,479.18 L837.51,478.36 L837.19,477.55 L836.87,476.73 L836.55,475.92 L836.24,475.10 L835.93,474.29 L835.61,473.47 L835.30,472.66 L834.99,471.84 L834.68,471.03 L834.38,470.21 L834.07,469.40 L833.77,468.58 L833.46,467.77 L833.16,466.96 L832.86,466.14 L832.56,465.33 L832.26,464.51 L831.97,463.70 L831.67,462.88 L831.38,462.07 L831.09,461.25 L830.79,460.44 L830.50,459.62 L830.22,458.81 L829.93,457.99 L829.64,457.18 L829.36,456.36 L829.08,455.55 L828.79,454.73 L828.51,453.92 L828.24,453.10 L827.96,452.29 L827.68,451.47 L827.41,450.66 L827.13,449.85 L826.86,449.03 L826.59,448.22 L826.32,447.40 L826.06,446.59 L825.79,445.77 L825.53,444.96 L825.26,444.14 L825.00,443.33 L824.74,442.51 L824.48,441.70 L824.23,440.88 L823.97,440.07 L823.72,439.25 L823.46,438.44 L823.21,437.62 L822.96,436.81 L822.71,435.99 L822.47,435.18 L822.22,434.37 L821.98,433.55 L821.74,432.74 L821.50,431.92 L821.26,431.11 L821.02,430.29 L820.78,429.48 L820.55,428.66 L820.32,427.85 L820.09,427.03 L819.86,426.22 L819.63,425.40 L819.40,424.59 L819.18,423.77 L818.95,422.96 L818.73,422.14 L818.51,421.33 L818.29,420.51 L818.07,419.70 L817.86,418.88 L817.65,418.07 L817.43,417.26 L817.22,416.44 L817.01,415.63 L816.81,414.81 L816.60,414.00 L816.40,413.18 L816.19,412.37 L815.99,411.55 L815.79,410.74 L815.60,409.92 L815.40,409.11 L815.21,408.29 L815.01,407.48 L814.82,406.66 L814.63,405.85 L814.45,405.03 L814.26,404.22 L814.08,403.40 L813.89,402.59 L813.71,401.77 L813.53,400.96 L813.36,400.15 L813.18,399.33 L813.01,398.52 L812.83,397.70 L812.66,396.89 L812.49,396.07 L812.33,395.26 L812.16,394.44 L812.00,393.63 L811.83,392.81 L811.67,392.00 L811.52,391.18 L811.36,390.37 L811.20,389.55 L811.05,388.74 L810.90,387.92 L810.75,387.11 L810.60,386.29 L810.45,385.48 L810.31,384.67 L810.17,383.85 L810.02,383.04 L809.88,382.22 L809.75,381.41 L809.61,380.59 L809.48,379.78 L809.34,378.96 L809.21,378.15 L809.08,377.33 L808.96,376.52 L808.83,375.70 L808.71,374.89 L808.59,374.07 L808.47,373.26 L808.35,372.44 L808.23,371.63 L808.12,370.81 L808.00,370.00 L807.89,369.19 L807.78,368.37 L807.67,367.56 L807.57,366.74 L807.47,365.93 L807.36,365.11 L807.26,364.30 L807.16,363.48 L807.07,362.67 L806.97,361.85 L806.88,361.04 L806.79,360.22 L806.70,359.41 L806.61,358.59 L806.53,357.78 L806.44,356.96 L806.36,356.15 L806.28,355.33 L806.20,354.52 L806.12,353.70 L806.05,352.89 L805.98,352.08 L805.90,351.26 L805.83,350.45 L805.77,349.63 L805.70,348.82 L805.64,348.00 L805.58,347.19 L805.52,346.37 L805.46,345.56 L805.40,344.74 L805.35,343.93 L805.29,343.11 L805.24,342.30 L805.19,341.48 L805.15,340.67 L805.10,339.85 L805.06,339.04 L805.01,338.22 L804.97,337.41 L804.94,336.60 L804.90,335.78 L804.87,334.97 L804.83,334.15 L804.80,333.34 L804.77,332.52 L804.75,331.71 L804.72,330.89 L804.70,330.08 L804.68,329.26 L804.66,328.45 L804.64,327.63 L804.62,326.82 L804.61,326.00 L804.60,325.19 L804.59,324.37 L804.58,323.56 L804.57,322.74 L804.57,321.93 L804.57,321.11 L804.57,320.30 L804.57,319.49 L804.57,318.67 L804.57,317.86 L804.58,317.04 L804.59,316.23 L804.60,315.41 L804.61,314.60 L804.62,313.78 L804.64,312.97 L804.66,312.15 L804.68,311.34 L804.70,310.52 L804.72,309.71 L804.75,308.89 L804.77,308.08 L804.80,307.26 L804.83,306.45 L804.87,305.63 L804.90,304.82 L804.94,304.00 L804.97,303.19 L805.01,302.38 L805.06,301.56 L805.10,300.75 L805.15,299.93 L805.19,299.12 L805.24,298.30 L805.29,297.49 L805.35,296.67 L805.40,295.86 L805.46,295.04 L805.52,294.23 L805.58,293.41 L805.64,292.60 L805.70,291.78 L805.77,290.97 L805.83,290.15 L805.90,289.34 L805.98,288.52 L806.05,287.71 L806.12,286.90 L806.20,286.08 L806.28,285.27 L806.36,284.45 L806.44,283.64 L806.53,282.82 L806.61,282.01 L806.70,281.19 L806.79,280.38 L806.88,279.56 L806.97,278.75 L807.07,277.93 L807.16,277.12 L807.26,276.30 L807.36,275.49 L807.47,274.67 L807.57,273.86 L807.67,273.04 L807.78,272.23 L807.89,271.42 L808.00,270.60 L808.12,269.79 L808.23,268.97 L808.35,268.16 L808.47,267.34 L808.59,266.53 L808.71,265.71 L808.83,264.90 L808.96,264.08 L809.08,263.27 L809.21,262.45 L809.34,261.64 L809.48,260.82 L809.61,260.01 L809.75,259.19 L809.88,258.38 L810.02,257.56 L810.17,256.75 L810.31,255.93 L810.45,255.12 L810.60,254.31 L810.75,253.49 L810.90,252.68 L811.05,251.86 L811.20,251.05 L811.36,250.23 L811.52,249.42 L811.67,248.60 L811.83,247.79 L812.00,246.97 L812.16,246.16 L812.33,245.34 L812.49,244.53 L812.66,243.71 L812.83,242.90 L813.01,242.08 L813.18,241.27 L813.36,240.45 L813.53,239.64 L813.71,238.83 L813.89,238.01 L814.08,237.20 L814.26,236.38 L814.45,235.57 L814.63,234.75 L814.82,233.94 L815.01,233.12 L815.21,232.31 L815.40,231.49 L815.60,230.68 L815.79,229.86 L815.99,229.05 L816.19,228.23 L816.40,227.42 L816.60,226.60 L816.81,225.79 L817.01,224.97 L817.22,224.16 L817.43,223.34 L817.65,222.53 L817.86,221.72 L818.07,220.90 L818.29,220.09 L818.51,219.27 L818.73,218.46 L818.95,217.64 L819.18,216.83 L819.40,216.01 L819.63,215.20 L819.86,214.38 L820.09,213.57 L820.32,212.75 L820.55,211.94 L820.78,211.12 L821.02,210.31 L821.26,209.49 L821.50,208.68 L821.74,207.86 L821.98,207.05 L822.22,206.24 L822.47,205.42 L822.71,204.61 L822.96,203.79 L823.21,202.98 L823.46,202.16 L823.72,201.35 L823.97,200.53 L824.23,199.72 L824.48,198.90 L824.74,198.09 L825.00,197.27 L825.26,196.46 L825.53,195.64 L825.79,194.83 L826.06,194.01 L826.32,193.20 L826.59,192.38 L826.86,191.57 L827.13,190.75 L827.41,189.94 L827.68,189.13 L827.96,188.31 L828.24,187.50 L828.51,186.68 L828.79,185.87 L829.08,185.05 L829.36,184.24 L829.64,183.42 L829.93,182.61 L830.22,181.79 L830.50,180.98 L830.79,180.16 L831.09,179.35 L831.38,178.53 L831.67,177.72 L831.97,176.90 L832.26,176.09 L832.56,175.27 L832.86,174.46 L833.16,173.65 L833.46,172.83 L833.77,172.02 L834.07,171.20 L834.38,170.39 L834.68,169.57 L834.99,168.76 L835.30,167.94 L835.61,167.13 L835.93,166.31 L836.24,165.50 L836.55,164.68 L836.87,163.87 L837.19,163.05 L837.51,162.24 L837.82,161.42 L838.15,160.61 L838.47,159.79 L838.79,158.98 L839.12,158.16 L839.44,157.35 L839.77,156.54 L840.10,155.72 L840.43,154.91 L840.76,154.09 L841.09,153.28 L841.42,152.46 L841.75,151.65 L842.09,150.83 L842.43,150.02 L842.76,149.20 L843.10,148.39 L843.44,147.57 L843.78,146.76 L844.12,145.94 L844.47,145.13 L844.81,144.31 L845.16,143.50 L845.50,142.68 L845.85,141.87 L846.20,141.06 L846.55,140.24 L846.90,139.43 L847.25,138.61 L847.60,137.80 L847.96,136.98 L848.31,136.17 L848.67,135.35 L849.02,134.54 L849.38,133.72 L849.74,132.91 L850.10,132.09 L850.46,131.28 L850.82,130.46 L851.19,129.65 L851.55,128.83 L851.91,128.02 L852.28,127.20 L852.65,126.39 L853.01,125.57 L853.38,124.76 L853.75,123.95 L854.12,123.13 L854.49,122.32 L854.87,121.50 L855.24,120.69 L855.61,119.87 L855.99,119.06 L856.36,118.24 L856.74,117.43 L857.12,116.61 L857.50,115.80 L857.87,114.98 L858.25,114.17 L858.64,113.35 L859.02,112.54 L859.40,111.72 L859.78,110.91 L860.17,110.09 L860.55,109.28 L860.94,108.47 L861.32,107.65 L861.71,106.84 L862.10,106.02 L862.49,105.21 L862.88,104.39 L863.27,103.58 L863.66,102.76 L864.05,101.95 L864.44,101.13 L864.84,100.32 L865.23,99.50 L865.63,98.69 L866.02,97.87 L866.42,97.06 L866.81,96.24 L867.21,95.43 L867.61,94.61 L868.01,93.80 L868.41,92.98 L868.81,92.17 L869.21,91.36 L869.61,90.54 L870.01,89.73 L870.41,88.91 L870.82,88.10 L871.22,87.28 L871.62,86.47 L872.03,85.65 L872.43,84.84 L872.84,84.02 L873.25,83.21 L873.65,82.39 L874.06,81.58 L874.47,80.76 L874.88,79.95 L875.29,79.13 L875.70,78.32 L876.11,77.50 L876.52,76.69 L876.93,75.88 L877.34,75.06 L877.75,74.25 L878.17,73.43 L878.58,72.62 L878.99,71.80 L879.41,70.99 L879.82,70.17 L880.24,69.36 L880.65,68.54 L881.07,67.73 L881.48,66.91 L881.90,66.10 L882.32,65.28 L882.73,64.47 L883.15,63.65 L883.57,62.84 L883.99,62.02 L884.41,61.21 L884.83,60.39 L885.25,59.58 L885.67,58.77 L886.09,57.95 L886.51,57.14 L886.93,56.32 L887.35,55.51 L887.77,54.69 L888.19,53.88 L888.61,53.06 L889.03,52.25 L889.46,51.43 L889.88,50.62 L890.30,49.80 L890.72,48.99 L891.15,48.17 L891.57,47.36 L891.99,46.54 L892.42,45.73 L892.84,44.91 L893.27,44.10 L893.69,43.29 L894.12,42.47 L894.54,41.66 L894.96,40.84 L895.39,40.03 L895.81,39.21 L896.24,38.40 L896.66,37.58 L897.09,36.77 L897.52,35.95 L897.94,35.14 L898.37,34.32 L898.79,33.51 L899.22,32.69 L899.64,31.88 L900.07,31.06 L900.50,30.25 L900.92,29.43 L901.35,28.62 L901.77,27.80 L902.20,26.99 M902.20,613.61 L901.99,612.80 L901.77,611.98 L901.56,611.17 L901.35,610.35 L901.14,609.54 L900.92,608.72 L900.71,607.91 L900.50,607.09 L900.28,606.28 L900.07,605.46 L899.86,604.65 L899.65,603.83 L899.43,603.02 L899.22,602.20 L899.01,601.39 L898.79,600.57 L898.58,599.76 L898.37,598.94 L898.16,598.13 L897.95,597.32 L897.73,596.50 L897.52,595.69 L897.31,594.87 L897.10,594.06 L896.89,593.24 L896.67,592.43 L896.46,591.61 L896.25,590.80 L896.04,589.98 L895.83,589.17 L895.62,588.35 L895.41,587.54 L895.20,586.72 L894.98,585.91 L894.77,585.09 L894.56,584.28 L894.35,583.46 L894.14,582.65 L893.93,581.83 L893.72,581.02 L893.51,580.21 L893.30,579.39 L893.09,578.58 L892.89,577.76 L892.68,576.95 L892.47,576.13 L892.26,575.32 L892.05,574.50 L891.84,573.69 L891.63,572.87 L891.43,572.06 L891.22,571.24 L891.01,570.43 L890.80,569.61 L890.60,568.80 L890.39,567.98 L890.18,567.17 L889.98,566.35 L889.77,565.54 L889.57,564.73 L889.36,563.91 L889.15,563.10 L888.95,562.28 L888.74,561.47 L888.54,560.65 L888.34,559.84 L888.13,559.02 L887.93,558.21 L887.72,557.39 L887.52,556.58 L887.32,555.76 L887.11,554.95 L886.91,554.13 L886.71,553.32 L886.51,552.50 L886.31,551.69 L886.11,550.87 L885.90,550.06 L885.70,549.24 L885.50,548.43 L885.30,547.62 L885.10,546.80 L884.90,545.99 L884.71,545.17 L884.51,544.36 L884.31,543.54 L884.11,542.73 L883.91,541.91 L883.72,541.10 L883.52,540.28 L883.32,539.47 L883.13,538.65 L882.93,537.84 L882.73,537.02 L882.54,536.21 L882.34,535.39 L882.15,534.58 L881.96,533.76 L881.76,532.95 L881.57,532.13 L881.38,531.32 L881.18,530.51 L880.99,529.69 L880.80,528.88 L880.61,528.06 L880.42,527.25 L880.23,526.43 L880.04,525.62 L879.85,524.80 L879.66,523.99 L879.47,523.17 L879.28,522.36 L879.09,521.54 L878.91,520.73 L878.72,519.91 L878.53,519.10 L878.35,518.28 L878.16,517.47 L877.98,516.65 L877.79,515.84 L877.61,515.03 L877.42,514.21 L877.24,513.40 L877.06,512.58 L876.87,511.77 L876.69,510.95 L876.51,510.14 L876.33,509.32 L876.15,508.51 L875.97,507.69 L875.79,506.88 L875.61,506.06 L875.43,505.25 L875.26,504.43 L875.08,503.62 L874.90,502.80 L874.73,501.99 L874.55,501.17 L874.37,500.36 L874.20,499.55 L874.03,498.73 L873.85,497.92 L873.68,497.10 L873.51,496.29 L873.33,495.47 L873.16,494.66 L872.99,493.84 L872.82,493.03 L872.65,492.21 L872.48,491.40 L872.31,490.58 L872.14,489.77 L871.98,488.95 L871.81,488.14 L871.64,487.32 L871.48,486.51 L871.31,485.69 L871.15,484.88 L870.98,484.06 L870.82,483.25 L870.66,482.44 L870.50,481.62 L870.33,480.81 L870.17,479.99 L870.01,479.18 L869.85,478.36 L869.69,477.55 L869.53,476.73 L869.38,475.92 L869.22,475.10 L869.06,474.29 L868.91,473.47 L868.75,472.66 L868.60,471.84 L868.44,471.03 L868.29,470.21 L868.14,469.40 L867.98,468.58 L867.83,467.77 L867.68,466.96 L867.53,466.14 L867.38,465.33 L867.23,464.51 L867.08,463.70 L866.94,462.88 L866.79,462.07 L866.64,461.25 L866.50,460.44 L866.35,459.62 L866.21,458.81 L866.06,457.99 L865.92,457.18 L865.78,456.36 L865.64,455.55 L865.50,454.73 L865.36,453.92 L865.22,453.10 L865.08,452.29 L864.94,451.47 L864.80,450.66 L864.67,449.85 L864.53,449.03 L864.40,448.22 L864.26,447.40 L864.13,446.59 L864.00,445.77 L863.86,444.96 L863.73,444.14 L863.60,443.33 L863.47,442.51 L863.34,441.70 L863.21,440.88 L863.08,440.07 L862.96,439.25 L862.83,438.44 L862.71,437.62 L862.58,436.81 L862.46,435.99 L862.33,435.18 L862.21,434.37 L862.09,433.55 L861.97,432.74 L861.85,431.92 L861.73,431.11 L861.61,430.29 L861.49,429.48 L861.37,428.66 L861.26,427.85 L861.14,427.03 L861.03,426.22 L860.91,425.40 L860.80,424.59 L860.69,423.77 L860.58,422.96 L860.47,422.14 L860.36,421.33 L860.25,420.51 L860.14,419.70 L860.03,418.88 L859.92,418.07 L859.82,417.26 L859.71,416.44 L859.61,415.63 L859.50,414.81 L859.40,414.00 L859.30,413.18 L859.20,412.37 L859.10,411.55 L859.00,410.74 L858.90,409.92 L858.80,409.11 L858.70,408.29 L858.61,407.48 L858.51,406.66 L858.42,405.85 L858.32,405.03 L858.23,404.22 L858.14,403.40 L858.05,402.59 L857.96,401.77 L857.87,400.96 L857.78,400.15 L857.69,399.33 L857.60,398.52 L857.52,397.70 L857.43,396.89 L857.35,396.07 L857.26,395.26 L857.18,394.44 L857.10,393.63 L857.02,392.81 L856.94,392.00 L856.86,391.18 L856.78,390.37 L856.70,389.55 L856.62,388.74 L856.55,387.92 L856.47,387.11 L856.40,386.29 L856.33,385.48 L856.25,384.67 L856.18,383.85 L856.11,383.04 L856.04,382.22 L855.97,381.41 L855.91,380.59 L855.84,379.78 L855.77,378.96 L855.71,378.15 L855.64,377.33 L855.58,376.52 L855.52,375.70 L855.45,374.89 L855.39,374.07 L855.33,373.26 L855.27,372.44 L855.22,371.63 L855.16,370.81 L855.10,370.00 L855.05,369.19 L854.99,368.37 L854.94,367.56 L854.88,366.74 L854.83,365.93 L854.78,365.11 L854.73,364.30 L854.68,363.48 L854.63,362.67 L854.59,361.85 L854.54,361.04 L854.49,360.22 L854.45,359.41 L854.41,358.59 L854.36,357.78 L854.32,356.96 L854.28,356.15 L854.24,355.33 L854.20,354.52 L854.16,353.70 L854.12,352.89 L854.09,352.08 L854.05,351.26 L854.02,350.45 L853.98,349.63 L853.95,348.82 L853.92,348.00 L853.89,347.19 L853.86,346.37 L853.83,345.56 L853.80,344.74 L853.77,343.93 L853.75,343.11 L853.72,342.30 L853.70,341.48 L853.67,340.67 L853.65,339.85 L853.63,339.04 L853.61,338.22 L853.59,337.41 L853.57,336.60 L853.55,335.78 L853.53,334.97 L853.52,334.15 L853.50,333.34 L853.49,332.52 L853.47,331.71 L853.46,330.89 L853.45,330.08 L853.44,329.26 L853.43,328.45 L853.42,327.63 L853.41,326.82 L853.41,326.00 L853.40,325.19 L853.39,324.37 L853.39,323.56 L853.39,322.74 L853.38,321.93 L853.38,321.11 L853.38,320.30 L853.38,319.49 L853.38,318.67 L853.39,317.86 L853.39,317.04 L853.39,316.23 L853.40,315.41 L853.41,314.60 L853.41,313.78 L853.42,312.97 L853.43,312.15 L853.44,311.34 L853.45,310.52 L853.46,309.71 L853.47,308.89 L853.49,308.08 L853.50,307.26 L853.52,306.45 L853.53,305.63 L853.55,304.82 L853.57,304.00 L853.59,303.19 L853.61,302.38 L853.63,301.56 L853.65,300.75 L853.67,299.93 L853.70,299.12 L853.72,298.30 L853.75,297.49 L853.77,296.67 L853.80,295.86 L853.83,295.04 L853.86,294.23 L853.89,293.41 L853.92,292.60 L853.95,291.78 L853.98,290.97 L854.02,290.15 L854.05,289.34 L854.09,288.52 L854.12,287.71 L854.16,286.90 L854.20,286.08 L854.24,285.27 L854.28,284.45 L854.32,283.64 L854.36,282.82 L854.41,282.01 L854.45,281.19 L854.49,280.38 L854.54,279.56 L854.59,278.75 L854.63,277.93 L854.68,277.12 L854.73,276.30 L854.78,275.49 L854.83,274.67 L854.88,273.86 L854.94,273.04 L854.99,272.23 L855.05,271.42 L855.10,270.60 L855.16,269.79 L855.22,268.97 L855.27,268.16 L855.33,267.34 L855.39,266.53 L855.45,265.71 L855.52,264.90 L855.58,264.08 L855.64,263.27 L855.71,262.45 L855.77,261.64 L855.84,260.82 L855.91,260.01 L855.97,259.19 L856.04,258.38 L856.11,257.56 L856.18,256.75 L856.25,255.93 L856.33,255.12 L856.40,254.31 L856.47,253.49 L856.55,252.68 L856.62,251.86 L856.70,251.05 L856.78,250.23 L856.86,249.42 L856.94,248.60 L857.02,247.79 L857.10,246.97 L857.18,246.16 L857.26,245.34 L857.35,244.53 L857.43,243.71 L857.52,242.90 L857.60,242.08 L857.69,241.27 L857.78,240.45 L857.87,239.64 L857.96,238.83 L858.05,238.01 L858.14,237.20 L858.23,236.38 L858.32,235.57 L858.42,234.75 L858.51,233.94 L858.61,233.12 L858.70,232.31 L858.80,231.49 L858.90,230.68 L859.00,229.86 L859.10,229.05 L859.20,228.23 L859.30,227.42 L859.40,226.60 L859.50,225.79 L859.61,224.97 L859.71,224.16 L859.82,223.34 L859.92,222.53 L860.03,221.72 L860.14,220.90 L860.25,220.09 L860.36,219.27 L860.47,218.46 L860.58,217.64 L860.69,216.83 L860.80,216.01 L860.91,215.20 L861.03,214.38 L861.14,213.57 L861.26,212.75 L861.37,211.94 L861.49,211.12 L861.61,210.31 L861.73,209.49 L861.85,208.68 L861.97,207.86 L862.09,207.05 L862.21,206.24 L862.33,205.42 L862.46,204.61 L862.58,203.79 L862.71,202.98 L862.83,202.16 L862.96,201.35 L863.08,200.53 L863.21,199.72 L863.34,198.90 L863.47,198.09 L863.60,197.27 L863.73,196.46 L863.86,195.64 L864.00,194.83 L864.13,194.01 L864.26,193.20 L864.40,192.38 L864.53,191.57 L864.67,190.75 L864.80,189.94 L864.94,189.13 L865.08,188.31 L865.22,187.50 L865.36,186.68 L865.50,185.87 L865.64,185.05 L865.78,184.24 L865.92,183.42 L866.06,182.61 L866.21,181.79 L866.35,180.98 L866.50,180.16 L866.64,179.35 L866.79,178.53 L866.94,177.72 L867.08,176.90 L867.23,176.09 L867.38,175.27 L867.53,174.46 L867.68,173.65 L867.83,172.83 L867.98,172.02 L868.14,171.20 L868.29,170.39 L868.44,169.57 L868.60,168.76 L868.75,167.94 L868.91,167.13 L869.06,166.31 L869.22,165.50 L869.38,164.68 L869.53,163.87 L869.69,163.05 L869.85,162.24 L870.01,161.42 L870.17,160.61 L870.33,159.79 L870.50,158.98 L870.66,158.16 L870.82,157.35 L870.98,156.54 L871.15,155.72 L871.31,154.91 L871.48,154.09 L871.64,153.28 L871.81,152.46 L871.98,151.65 L872.14,150.83 L872.31,150.02 L872.48,149.20 L872.65,148.39 L872.82,147.57 L872.99,146.76 L873.16,145.94 L873.33,145.13 L873.51,144.31 L873.68,143.50 L873.85,142.68 L874.03,141.87 L874.20,141.06 L874.37,140.24 L874.55,139.43 L874.73,138.61 L874.90,137.80 L875.08,136.98 L875.26,136.17 L875.43,135.35 L875.61,134.54 L875.79,133.72 L875.97,132.91 L876.15,132.09 L876.33,131.28 L876.51,130.46 L876.69,129.65 L876.87,128.83 L877.06,128.02 L877.24,127.20 L877.42,126.39 L877.61,125.57 L877.79,124.76 L877.98,123.95 L878.16,123.13 L878.35,122.32 L878.53,121.50 L878.72,120.69 L878.91,119.87 L879.09,119.06 L879.28,118.24 L879.47,117.43 L879.66,116.61 L879.85,115.80 L880.04,114.98 L880.23,114.17 L880.42,113.35 L880.61,112.54 L880.80,111.72 L880.99,110.91 L881.18,110.09 L881.38,109.28 L881.57,108.47 L881.76,107.65 L881.96,106.84 L882.15,106.02 L882.34,105.21 L882.54,104.39 L882.73,103.58 L882.93,102.76 L883.13,101.95 L883.32,101.13 L883.52,100.32 L883.72,99.50 L883.91,98.69 L884.11,97.87 L884.31,97.06 L884.51,96.24 L884.71,95.43 L884.90,94.61 L885.10,93.80 L885.30,92.98 L885.50,92.17 L885.70,91.36 L885.90,90.54 L886.11,89.73 L886.31,88.91 L886.51,88.10 L886.71,87.28 L886.91,86.47 L887.11,85.65 L887.32,84.84 L887.52,84.02 L887.72,83.21 L887.93,82.39 L888.13,81.58 L888.34,80.76 L888.54,79.95 L888.74,79.13 L888.95,78.32 L889.15,77.50 L889.36,76.69 L889.57,75.88 L889.77,75.06 L889.98,74.25 L890.18,73.43 L890.39,72.62 L890.60,71.80 L890.80,70.99 L891.01,70.17 L891.22,69.36 L891.43,68.54 L891.63,67.73 L891.84,66.91 L892.05,66.10 L892.26,65.28 L892.47,64.47 L892.68,63.65 L892.89,62.84 L893.09,62.02 L893.30,61.21 L893.51,60.39 L893.72,59.58 L893.93,58.77 L894.14,57.95 L894.35,57.14 L894.56,56.32 L894.77,55.51 L894.98,54.69 L895.20,53.88 L895.41,53.06 L895.62,52.25 L895.83,51.43 L896.04,50.62 L896.25,49.80 L896.46,48.99 L896.67,48.17 L896.89,47.36 L897.10,46.54 L897.31,45.73 L897.52,44.91 L897.73,44.10 L897.95,43.29 L898.16,42.47 L898.37,41.66 L898.58,40.84 L898.79,40.03 L899.01,39.21 L899.22,38.40 L899.43,37.58 L899.65,36.77 L899.86,35.95 L900.07,35.14 L900.28,34.32 L900.50,33.51 L900.71,32.69 L900.92,31.88 L901.14,31.06 L901.35,30.25 L901.56,29.43 L901.77,28.62 L901.99,27.80 L902.20,26.99 M902.20,613.61 L902.20,612.80 L902.20,611.98 L902.20,611.17 L902.20,610.35 L902.20,609.54 L902.20,608.72 L902.20,607.91 L902.20,607.09 L902.20,606.28 L902.20,605.46 L902.20,604.65 L902.20,603.83 L902.20,603.02 L902.20,602.20 L902.20,601.39 L902.20,600.57 L902.20,599.76 L902.20,598.94 L902.20,598.13 L902.20,597.32 L902.20,596.50 L902.20,595.69 L902.20,594.87 L902.20,594.06 L902.20,593.24 L902.20,592.43 L902.20,591.61 L902.20,590.80 L902.20,589.98 L902.20,589.17 L902.20,588.35 L902.20,587.54 L902.20,586.72 L902.20,585.91 L902.20,585.09 L902.20,584.28 L902.20,583.46 L902.20,582.65 L902.20,581.83 L902.20,581.02 L902.20,580.21 L902.20,579.39 L902.20,578.58 L902.20,577.76 L902.20,576.95 L902.20,576.13 L902.20,575.32 L902.20,574.50 L902.20,573.69 L902.20,572.87 L902.20,572.06 L902.20,571.24 L902.20,570.43 L902.20,569.61 L902.20,568.80 L902.20,567.98 L902.20,567.17 L902.20,566.35 L902.20,565.54 L902.20,564.73 L902.20,563.91 L902.20,563.10 L902.20,562.28 L902.20,561.47 L902.20,560.65 L902.20,559.84 L902.20,559.02 L902.20,558.21 L902.20,557.39 L902.20,556.58 L902.20,555.76 L902.20,554.95 L902.20,554.13 L902.20,553.32 L902.20,552.50 L902.20,551.69 L902.20,550.87 L902.20,550.06 L902.20,549.24 L902.20,548.43 L902.20,547.62 L902.20,546.80 L902.20,545.99 L902.20,545.17 L902.20,544.36 L902.20,543.54 L902.20,542.73 L902.20,541.91 L902.20,541.10 L902.20,540.28 L902.20,539.47 L902.20,538.65 L902.20,537.84 L902.20,537.02 L902.20,536.21 L902.20,535.39 L902.20,534.58 L902.20,533.76 L902.20,532.95 L902.20,532.13 L902.20,531.32 L902.20,530.51 L902.20,529.69 L902.20,528.88 L902.20,528.06 L902.20,527.25 L902.20,526.43 L902.20,525.62 L902.20,524.80 L902.20,523.99 L902.20,523.17 L902.20,522.36 L902.20,521.54 L902.20,520.73 L902.20,519.91 L902.20,519.10 L902.20,518.28 L902.20,517.47 L902.20,516.65 L902.20,515.84 L902.20,515.03 L902.20,514.21 L902.20,513.40 L902.20,512.58 L902.20,511.77 L902.20,510.95 L902.20,510.14 L902.20,509.32 L902.20,508.51 L902.20,507.69 L902.20,506.88 L902.20,506.06 L902.20,505.25 L902.20,504.43 L902.20,503.62 L902.20,502.80 L902.20,501.99 L902.20,501.17 L902.20,500.36 L902.20,499.55 L902.20,498.73 L902.20,497.92 L902.20,497.10 L902.20,496.29 L902.20,495.47 L902.20,494.66 L902.20,493.84 L902.20,493.03 L902.20,492.21 L902.20,491.40 L902.20,490.58 L902.20,489.77 L902.20,488.95 L902.20,488.14 L902.20,487.32 L902.20,486.51 L902.20,485.69 L902.20,484.88 L902.20,484.06 L902.20,483.25 L902.20,482.44 L902.20,481.62 L902.20,480.81 L902.20,479.99 L902.20,479.18 L902.20,478.36 L902.20,477.55 L902.20,476.73 L902.20,475.92 L902.20,475.10 L902.20,474.29 L902.20,473.47 L902.20,472.66 L902.20,471.84 L902.20,471.03 L902.20,470.21 L902.20,469.40 L902.20,468.58 L902.20,467.77 L902.20,466.96 L902.20,466.14 L902.20,465.33 L902.20,464.51 L902.20,463.70 L902.20,462.88 L902.20,462.07 L902.20,461.25 L902.20,460.44 L902.20,459.62 L902.20,458.81 L902.20,457.99 L902.20,457.18 L902.20,456.36 L902.20,455.55 L902.20,454.73 L902.20,453.92 L902.20,453.10 L902.20,452.29 L902.20,451.47 L902.20,450.66 L902.20,449.85 L902.20,449.03 L902.20,448.22 L902.20,447.40 L902.20,446.59 L902.20,445.77 L902.20,444.96 L902.20,444.14 L902.20,443.33 L902.20,442.51 L902.20,441.70 L902.20,440.88 L902.20,440.07 L902.20,439.25 L902.20,438.44 L902.20,437.62 L902.20,436.81 L902.20,435.99 L902.20,435.18 L902.20,434.37 L902.20,433.55 L902.20,432.74 L902.20,431.92 L902.20,431.11 L902.20,430.29 L902.20,429.48 L902.20,428.66 L902.20,427.85 L902.20,427.03 L902.20,426.22 L902.20,425.40 L902.20,424.59 L902.20,423.77 L902.20,422.96 L902.20,422.14 L902.20,421.33 L902.20,420.51 L902.20,419.70 L902.20,418.88 L902.20,418.07 L902.20,417.26 L902.20,416.44 L902.20,415.63 L902.20,414.81 L902.20,414.00 L902.20,413.18 L902.20,412.37 L902.20,411.55 L902.20,410.74 L902.20,409.92 L902.20,409.11 L902.20,408.29 L902.20,407.48 L902.20,406.66 L902.20,405.85 L902.20,405.03 L902.20,404.22 L902.20,403.40 L902.20,402.59 L902.20,401.77 L902.20,400.96 L902.20,400.15 L902.20,399.33 L902.20,398.52 L902.20,397.70 L902.20,396.89 L902.20,396.07 L902.20,395.26 L902.20,394.44 L902.20,393.63 L902.20,392.81 L902.20,392.00 L902.20,391.18 L902.20,390.37 L902.20,389.55 L902.20,388.74 L902.20,387.92 L902.20,387.11 L902.20,386.29 L902.20,385.48 L902.20,384.67 L902.20,383.85 L902.20,383.04 L902.20,382.22 L902.20,381.41 L902.20,380.59 L902.20,379.78 L902.20,378.96 L902.20,378.15 L902.20,377.33 L902.20,376.52 L902.20,375.70 L902.20,374.89 L902.20,374.07 L902.20,373.26 L902.20,372.44 L902.20,371.63 L902.20,370.81 L902.20,370.00 L902.20,369.19 L902.20,368.37 L902.20,367.56 L902.20,366.74 L902.20,365.93 L902.20,365.11 L902.20,364.30 L902.20,363.48 L902.20,362.67 L902.20,361.85 L902.20,361.04 L902.20,360.22 L902.20,359.41 L902.20,358.59 L902.20,357.78 L902.20,356.96 L902.20,356.15 L902.20,355.33 L902.20,354.52 L902.20,353.70 L902.20,352.89 L902.20,352.08 L902.20,351.26 L902.20,350.45 L902.20,349.63 L902.20,348.82 L902.20,348.00 L902.20,347.19 L902.20,346.37 L902.20,345.56 L902.20,344.74 L902.20,343.93 L902.20,343.11 L902.20,342.30 L902.20,341.48 L902.20,340.67 L902.20,339.85 L902.20,339.04 L902.20,338.22 L902.20,337.41 L902.20,336.60 L902.20,335.78 L902.20,334.97 L902.20,334.15 L902.20,333.34 L902.20,332.52 L902.20,331.71 L902.20,330.89 L902.20,330.08 L902.20,329.26 L902.20,328.45 L902.20,327.63 L902.20,326.82 L902.20,326.00 L902.20,325.19 L902.20,324.37 L902.20,323.56 L902.20,322.74 L902.20,321.93 L902.20,321.11 L902.20,320.30 L902.20,319.49 L902.20,318.67 L902.20,317.86 L902.20,317.04 L902.20,316.23 L902.20,315.41 L902.20,314.60 L902.20,313.78 L902.20,312.97 L902.20,312.15 L902.20,311.34 L902.20,310.52 L902.20,309.71 L902.20,308.89 L902.20,308.08 L902.20,307.26 L902.20,306.45 L902.20,305.63 L902.20,304.82 L902.20,304.00 L902.20,303.19 L902.20,302.38 L902.20,301.56 L902.20,300.75 L902.20,299.93 L902.20,299.12 L902.20,298.30 L902.20,297.49 L902.20,296.67 L902.20,295.86 L902.20,295.04 L902.20,294.23 L902.20,293.41 L902.20,292.60 L902.20,291.78 L902.20,290.97 L902.20,290.15 L902.20,289.34 L902.20,288.52 L902.20,287.71 L902.20,286.90 L902.20,286.08 L902.20,285.27 L902.20,284.45 L902.20,283.64 L902.20,282.82 L902.20,282.01 L902.20,281.19 L902.20,280.38 L902.20,279.56 L902.20,278.75 L902.20,277.93 L902.20,277.12 L902.20,276.30 L902.20,275.49 L902.20,274.67 L902.20,273.86 L902.20,273.04 L902.20,272.23 L902.20,271.42 L902.20,270.60 L902.20,269.79 L902.20,268.97 L902.20,268.16 L902.20,267.34 L902.20,266.53 L902.20,265.71 L902.20,264.90 L902.20,264.08 L902.20,263.27 L902.20,262.45 L902.20,261.64 L902.20,260.82 L902.20,260.01 L902.20,259.19 L902.20,258.38 L902.20,257.56 L902.20,256.75 L902.20,255.93 L902.20,255.12 L902.20,254.31 L902.20,253.49 L902.20,252.68 L902.20,251.86 L902.20,251.05 L902.20,250.23 L902.20,249.42 L902.20,248.60 L902.20,247.79 L902.20,246.97 L902.20,246.16 L902.20,245.34 L902.20,244.53 L902.20,243.71 L902.20,242.90 L902.20,242.08 L902.20,241.27 L902.20,240.45 L902.20,239.64 L902.20,238.83 L902.20,238.01 L902.20,237.20 L902.20,236.38 L902.20,235.57 L902.20,234.75 L902.20,233.94 L902.20,233.12 L902.20,232.31 L902.20,231.49 L902.20,230.68 L902.20,229.86 L902.20,229.05 L902.20,228.23 L902.20,227.42 L902.20,226.60 L902.20,225.79 L902.20,224.97 L902.20,224.16 L902.20,223.34 L902.20,222.53 L902.20,221.72 L902.20,220.90 L902.20,220.09 L902.20,219.27 L902.20,218.46 L902.20,217.64 L902.20,216.83 L902.20,216.01 L902.20,215.20 L902.20,214.38 L902.20,213.57 L902.20,212.75 L902.20,211.94 L902.20,211.12 L902.20,210.31 L902.20,209.49 L902.20,208.68 L902.20,207.86 L902.20,207.05 L902.20,206.24 L902.20,205.42 L902.20,204.61 L902.20,203.79 L902.20,202.98 L902.20,202.16 L902.20,201.35 L902.20,200.53 L902.20,199.72 L902.20,198.90 L902.20,198.09 L902.20,197.27 L902.20,196.46 L902.20,195.64 L902.20,194.83 L902.20,194.01 L902.20,193.20 L902.20,192.38 L902.20,191.57 L902.20,190.75 L902.20,189.94 L902.20,189.13 L902.20,188.31 L902.20,187.50 L902.20,186.68 L902.20,185.87 L902.20,185.05 L902.20,184.24 L902.20,183.42 L902.20,182.61 L902.20,181.79 L902.20,180.98 L902.20,180.16 L902.20,179.35 L902.20,178.53 L902.20,177.72 L902.20,176.90 L902.20,176.09 L902.20,175.27 L902.20,174.46 L902.20,173.65 L902.20,172.83 L902.20,172.02 L902.20,171.20 L902.20,170.39 L902.20,169.57 L902.20,168.76 L902.20,167.94 L902.20,167.13 L902.20,166.31 L902.20,165.50 L902.20,164.68 L902.20,163.87 L902.20,163.05 L902.20,162.24 L902.20,161.42 L902.20,160.61 L902.20,159.79 L902.20,158.98 L902.20,158.16 L902.20,157.35 L902.20,156.54 L902.20,155.72 L902.20,154.91 L902.20,154.09 L902.20,153.28 L902.20,152.46 L902.20,151.65 L902.20,150.83 L902.20,150.02 L902.20,149.20 L902.20,148.39 L902.20,147.57 L902.20,146.76 L902.20,145.94 L902.20,145.13 L902.20,144.31 L902.20,143.50 L902.20,142.68 L902.20,141.87 L902.20,141.06 L902.20,140.24 L902.20,139.43 L902.20,138.61 L902.20,137.80 L902.20,136.98 L902.20,136.17 L902.20,135.35 L902.20,134.54 L902.20,133.72 L902.20,132.91 L902.20,132.09 L902.20,131.28 L902.20,130.46 L902.20,129.65 L902.20,128.83 L902.20,128.02 L902.20,127.20 L902.20,126.39 L902.20,125.57 L902.20,124.76 L902.20,123.95 L902.20,123.13 L902.20,122.32 L902.20,121.50 L902.20,120.69 L902.20,119.87 L902.20,119.06 L902.20,118.24 L902.20,117.43 L902.20,116.61 L902.20,115.80 L902.20,114.98 L902.20,114.17 L902.20,113.35 L902.20,112.54 L902.20,111.72 L902.20,110.91 L902.20,110.09 L902.20,109.28 L902.20,108.47 L902.20,107.65 L902.20,106.84 L902.20,106.02 L902.20,105.21 L902.20,104.39 L902.20,103.58 L902.20,102.76 L902.20,101.95 L902.20,101.13 L902.20,100.32 L902.20,99.50 L902.20,98.69 L902.20,97.87 L902.20,97.06 L902.20,96.24 L902.20,95.43 L902.20,94.61 L902.20,93.80 L902.20,92.98 L902.20,92.17 L902.20,91.36 L902.20,90.54 L902.20,89.73 L902.20,88.91 L902.20,88.10 L902.20,87.28 L902.20,86.47 L902.20,85.65 L902.20,84.84 L902.20,84.02 L902.20,83.21 L902.20,82.39 L902.20,81.58 L902.20,80.76 L902.20,79.95 L902.20,79.13 L902.20,78.32 L902.20,77.50 L902.20,76.69 L902.20,75.88 L902.20,75.06 L902.20,74.25 L902.20,73.43 L902.20,72.62 L902.20,71.80 L902.20,70.99 L902.20,70.17 L902.20,69.36 L902.20,68.54 L902.20,67.73 L902.20,66.91 L902.20,66.10 L902.20,65.28 L902.20,64.47 L902.20,63.65 L902.20,62.84 L902.20,62.02 L902.20,61.21 L902.20,60.39 L902.20,59.58 L902.20,58.77 L902.20,57.95 L902.20,57.14 L902.20,56.32 L902.20,55.51 L902.20,54.69 L902.20,53.88 L902.20,53.06 L902.20,52.25 L902.20,51.43 L902.20,50.62 L902.20,49.80 L902.20,48.99 L902.20,48.17 L902.20,47.36 L902.20,46.54 L902.20,45.73 L902.20,44.91 L902.20,44.10 L902.20,43.29 L902.20,42.47 L902.20,41.66 L902.20,40.84 L902.20,40.03 L902.20,39.21 L902.20,38.40 L902.20,37.58 L902.20,36.77 L902.20,35.95 L902.20,35.14 L902.20,34.32 L902.20,33.51 L902.20,32.69 L902.20,31.88 L902.20,31.06 L902.20,30.25 L902.20,29.43 L902.20,28.62 L902.20,27.80 L902.20,26.99 M902.20,613.61 L902.41,612.80 L902.63,611.98 L902.84,611.17 L903.05,610.35 L903.26,609.54 L903.48,608.72 L903.69,607.91 L903.90,607.09 L904.12,606.28 L904.33,605.46 L904.54,604.65 L904.75,603.83 L904.97,603.02 L905.18,602.20 L905.39,601.39 L905.61,600.57 L905.82,599.76 L906.03,598.94 L906.24,598.13 L906.45,597.32 L906.67,596.50 L906.88,595.69 L907.09,594.87 L907.30,594.06 L907.51,593.24 L907.73,592.43 L907.94,591.61 L908.15,590.80 L908.36,589.98 L908.57,589.17 L908.78,588.35 L908.99,587.54 L909.20,586.72 L909.42,585.91 L909.63,585.09 L909.84,584.28 L910.05,583.46 L910.26,582.65 L910.47,581.83 L910.68,581.02 L910.89,580.21 L911.10,579.39 L911.31,578.58 L911.51,577.76 L911.72,576.95 L911.93,576.13 L912.14,575.32 L912.35,574.50 L912.56,573.69 L912.77,572.87 L912.97,572.06 L913.18,571.24 L913.39,570.43 L913.60,569.61 L913.80,568.80 L914.01,567.98 L914.22,567.17 L914.42,566.35 L914.63,565.54 L914.83,564.73 L915.04,563.91 L915.25,563.10 L915.45,562.28 L915.66,561.47 L915.86,560.65 L916.06,559.84 L916.27,559.02 L916.47,558.21 L916.68,557.39 L916.88,556.58 L917.08,555.76 L917.29,554.95 L917.49,554.13 L917.69,553.32 L917.89,552.50 L918.09,551.69 L918.29,550.87 L918.50,550.06 L918.70,549.24 L918.90,548.43 L919.10,547.62 L919.30,546.80 L919.50,545.99 L919.69,545.17 L919.89,544.36 L920.09,543.54 L920.29,542.73 L920.49,541.91 L920.68,541.10 L920.88,540.28 L921.08,539.47 L921.27,538.65 L921.47,537.84 L921.67,537.02 L921.86,536.21 L922.06,535.39 L922.25,534.58 L922.44,533.76 L922.64,532.95 L922.83,532.13 L923.02,531.32 L923.22,530.51 L923.41,529.69 L923.60,528.88 L923.79,528.06 L923.98,527.25 L924.17,526.43 L924.36,525.62 L924.55,524.80 L924.74,523.99 L924.93,523.17 L925.12,522.36 L925.31,521.54 L925.49,520.73 L925.68,519.91 L925.87,519.10 L926.05,518.28 L926.24,517.47 L926.42,516.65 L926.61,515.84 L926.79,515.03 L926.98,514.21 L927.16,513.40 L927.34,512.58 L927.53,511.77 L927.71,510.95 L927.89,510.14 L928.07,509.32 L928.25,508.51 L928.43,507.69 L928.61,506.88 L928.79,506.06 L928.97,505.25 L929.14,504.43 L929.32,503.62 L929.50,502.80 L929.67,501.99 L929.85,501.17 L930.03,500.36 L930.20,499.55 L930.37,498.73 L930.55,497.92 L930.72,497.10 L930.89,496.29 L931.07,495.47 L931.24,494.66 L931.41,493.84 L931.58,493.03 L931.75,492.21 L931.92,491.40 L932.09,490.58 L932.26,489.77 L932.42,488.95 L932.59,488.14 L932.76,487.32 L932.92,486.51 L933.09,485.69 L933.25,484.88 L933.42,484.06 L933.58,483.25 L933.74,482.44 L933.90,481.62 L934.07,480.81 L934.23,479.99 L934.39,479.18 L934.55,478.36 L934.71,477.55 L934.87,476.73 L935.02,475.92 L935.18,475.10 L935.34,474.29 L935.49,473.47 L935.65,472.66 L935.80,471.84 L935.96,471.03 L936.11,470.21 L936.26,469.40 L936.42,468.58 L936.57,467.77 L936.72,466.96 L936.87,466.14 L937.02,465.33 L937.17,464.51 L937.32,463.70 L937.46,462.88 L937.61,462.07 L937.76,461.25 L937.90,460.44 L938.05,459.62 L938.19,458.81 L938.34,457.99 L938.48,457.18 L938.62,456.36 L938.76,455.55 L938.90,454.73 L939.04,453.92 L939.18,453.10 L939.32,452.29 L939.46,451.47 L939.60,450.66 L939.73,449.85 L939.87,449.03 L940.00,448.22 L940.14,447.40 L940.27,446.59 L940.40,445.77 L940.54,444.96 L940.67,444.14 L940.80,443.33 L940.93,442.51 L941.06,441.70 L941.19,440.88 L941.32,440.07 L941.44,439.25 L941.57,438.44 L941.69,437.62 L941.82,436.81 L941.94,435.99 L942.07,435.18 L942.19,434.37 L942.31,433.55 L942.43,432.74 L942.55,431.92 L942.67,431.11 L942.79,430.29 L942.91,429.48 L943.03,428.66 L943.14,427.85 L943.26,427.03 L943.37,426.22 L943.49,425.40 L943.60,424.59 L943.71,423.77 L943.82,422.96 L943.93,422.14 L944.04,421.33 L944.15,420.51 L944.26,419.70 L944.37,418.88 L944.48,418.07 L944.58,417.26 L944.69,416.44 L944.79,415.63 L944.90,414.81 L945.00,414.00 L945.10,413.18 L945.20,412.37 L945.30,411.55 L945.40,410.74 L945.50,409.92 L945.60,409.11 L945.70,408.29 L945.79,407.48 L945.89,406.66 L945.98,405.85 L946.08,405.03 L946.17,404.22 L946.26,403.40 L946.35,402.59 L946.44,401.77 L946.53,400.96 L946.62,400.15 L946.71,399.33 L946.80,398.52 L946.88,397.70 L946.97,396.89 L947.05,396.07 L947.14,395.26 L947.22,394.44 L947.30,393.63 L947.38,392.81 L947.46,392.00 L947.54,391.18 L947.62,390.37 L947.70,389.55 L947.78,388.74 L947.85,387.92 L947.93,387.11 L948.00,386.29 L948.07,385.48 L948.15,384.67 L948.22,383.85 L948.29,383.04 L948.36,382.22 L948.43,381.41 L948.49,380.59 L948.56,379.78 L948.63,378.96 L948.69,378.15 L948.76,377.33 L948.82,376.52 L948.88,375.70 L948.95,374.89 L949.01,374.07 L949.07,373.26 L949.13,372.44 L949.18,371.63 L949.24,370.81 L949.30,370.00 L949.35,369.19 L949.41,368.37 L949.46,367.56 L949.52,366.74 L949.57,365.93 L949.62,365.11 L949.67,364.30 L949.72,363.48 L949.77,362.67 L949.81,361.85 L949.86,361.04 L949.91,360.22 L949.95,359.41 L949.99,358.59 L950.04,357.78 L950.08,356.96 L950.12,356.15 L950.16,355.33 L950.20,354.52 L950.24,353.70 L950.28,352.89 L950.31,352.08 L950.35,351.26 L950.38,350.45 L950.42,349.63 L950.45,348.82 L950.48,348.00 L950.51,347.19 L950.54,346.37 L950.57,345.56 L950.60,344.74 L950.63,343.93 L950.65,343.11 L950.68,342.30 L950.70,341.48 L950.73,340.67 L950.75,339.85 L950.77,339.04 L950.79,338.22 L950.81,337.41 L950.83,336.60 L950.85,335.78 L950.87,334.97 L950.88,334.15 L950.90,333.34 L950.91,332.52 L950.93,331.71 L950.94,330.89 L950.95,330.08 L950.96,329.26 L950.97,328.45 L950.98,327.63 L950.99,326.82 L950.99,326.00 L951.00,325.19 L951.01,324.37 L951.01,323.56 L951.01,322.74 L951.02,321.93 L951.02,321.11 L951.02,320.30 L951.02,319.49 L951.02,318.67 L951.01,317.86 L951.01,317.04 L951.01,316.23 L951.00,315.41 L950.99,314.60 L950.99,313.78 L950.98,312.97 L950.97,312.15 L950.96,311.34 L950.95,310.52 L950.94,309.71 L950.93,308.89 L950.91,308.08 L950.90,307.26 L950.88,306.45 L950.87,305.63 L950.85,304.82 L950.83,304.00 L950.81,303.19 L950.79,302.38 L950.77,301.56 L950.75,300.75 L950.73,299.93 L950.70,299.12 L950.68,298.30 L950.65,297.49 L950.63,296.67 L950.60,295.86 L950.57,295.04 L950.54,294.23 L950.51,293.41 L950.48,292.60 L950.45,291.78 L950.42,290.97 L950.38,290.15 L950.35,289.34 L950.31,288.52 L950.28,287.71 L950.24,286.90 L950.20,286.08 L950.16,285.27 L950.12,284.45 L950.08,283.64 L950.04,282.82 L949.99,282.01 L949.95,281.19 L949.91,280.38 L949.86,279.56 L949.81,278.75 L949.77,277.93 L949.72,277.12 L949.67,276.30 L949.62,275.49 L949.57,274.67 L949.52,273.86 L949.46,273.04 L949.41,272.23 L949.35,271.42 L949.30,270.60 L949.24,269.79 L949.18,268.97 L949.13,268.16 L949.07,267.34 L949.01,266.53 L948.95,265.71 L948.88,264.90 L948.82,264.08 L948.76,263.27 L948.69,262.45 L948.63,261.64 L948.56,260.82 L948.49,260.01 L948.43,259.19 L948.36,258.38 L948.29,257.56 L948.22,256.75 L948.15,255.93 L948.07,255.12 L948.00,254.31 L947.93,253.49 L947.85,252.68 L947.78,251.86 L947.70,251.05 L947.62,250.23 L947.54,249.42 L947.46,248.60 L947.38,247.79 L947.30,246.97 L947.22,246.16 L947.14,245.34 L947.05,244.53 L946.97,243.71 L946.88,242.90 L946.80,242.08 L946.71,241.27 L946.62,240.45 L946.53,239.64 L946.44,238.83 L946.35,238.01 L946.26,237.20 L946.17,236.38 L946.08,235.57 L945.98,234.75 L945.89,233.94 L945.79,233.12 L945.70,232.31 L945.60,231.49 L945.50,230.68 L945.40,229.86 L945.30,229.05 L945.20,228.23 L945.10,227.42 L945.00,226.60 L944.90,225.79 L944.79,224.97 L944.69,224.16 L944.58,223.34 L944.48,222.53 L944.37,221.72 L944.26,220.90 L944.15,220.09 L944.04,219.27 L943.93,218.46 L943.82,217.64 L943.71,216.83 L943.60,216.01 L943.49,215.20 L943.37,214.38 L943.26,213.57 L943.14,212.75 L943.03,211.94 L942.91,211.12 L942.79,210.31 L942.67,209.49 L942.55,208.68 L942.43,207.86 L942.31,207.05 L942.19,206.24 L942.07,205.42 L941.94,204.61 L941.82,203.79 L941.69,202.98 L941.57,202.16 L941.44,201.35 L941.32,200.53 L941.19,199.72 L941.06,198.90 L940.93,198.09 L940.80,197.27 L940.67,196.46 L940.54,195.64 L940.40,194.83 L940.27,194.01 L940.14,193.20 L940.00,192.38 L939.87,191.57 L939.73,190.75 L939.60,189.94 L939.46,189.13 L939.32,188.31 L939.18,187.50 L939.04,186.68 L938.90,185.87 L938.76,185.05 L938.62,184.24 L938.48,183.42 L938.34,182.61 L938.19,181.79 L938.05,180.98 L937.90,180.16 L937.76,179.35 L937.61,178.53 L937.46,177.72 L937.32,176.90 L937.17,176.09 L937.02,175.27 L936.87,174.46 L936.72,173.65 L936.57,172.83 L936.42,172.02 L936.26,171.20 L936.11,170.39 L935.96,169.57 L935.80,168.76 L935.65,167.94 L935.49,167.13 L935.34,166.31 L935.18,165.50 L935.02,164.68 L934.87,163.87 L934.71,163.05 L934.55,162.24 L934.39,161.42 L934.23,160.61 L934.07,159.79 L933.90,158.98 L933.74,158.16 L933.58,157.35 L933.42,156.54 L933.25,155.72 L933.09,154.91 L932.92,154.09 L932.76,153.28 L932.59,152.46 L932.42,151.65 L932.26,150.83 L932.09,150.02 L931.92,149.20 L931.75,148.39 L931.58,147.57 L931.41,146.76 L931.24,145.94 L931.07,145.13 L930.89,144.31 L930.72,143.50 L930.55,142.68 L930.37,141.87 L930.20,141.06 L930.03,140.24 L929.85,139.43 L929.67,138.61 L929.50,137.80 L929.32,136.98 L929.14,136.17 L928.97,135.35 L928.79,134.54 L928.61,133.72 L928.43,132.91 L928.25,132.09 L928.07,131.28 L927.89,130.46 L927.71,129.65 L927.53,128.83 L927.34,128.02 L927.16,127.20 L926.98,126.39 L926.79,125.57 L926.61,124.76 L926.42,123.95 L926.24,123.13 L926.05,122.32 L925.87,121.50 L925.68,120.69 L925.49,119.87 L925.31,119.06 L925.12,118.24 L924.93,117.43 L924.74,116.61 L924.55,115.80 L924.36,114.98 L924.17,114.17 L923.98,113.35 L923.79,112.54 L923.60,111.72 L923.41,110.91 L923.22,110.09 L923.02,109.28 L922.83,108.47 L922.64,107.65 L922.44,106.84 L922.25,106.02 L922.06,105.21 L921.86,104.39 L921.67,103.58 L921.47,102.76 L921.27,101.95 L921.08,101.13 L920.88,100.32 L920.68,99.50 L920.49,98.69 L920.29,97.87 L920.09,97.06 L919.89,96.24 L919.69,95.43 L919.50,94.61 L919.30,93.80 L919.10,92.98 L918.90,92.17 L918.70,91.36 L918.50,90.54 L918.29,89.73 L918.09,88.91 L917.89,88.10 L917.69,87.28 L917.49,86.47 L917.29,85.65 L917.08,84.84 L916.88,84.02 L916.68,83.21 L916.47,82.39 L916.27,81.58 L916.06,80.76 L915.86,79.95 L915.66,79.13 L915.45,78.32 L915.25,77.50 L915.04,76.69 L914.83,75.88 L914.63,75.06 L914.42,74.25 L914.22,73.43 L914.01,72.62 L913.80,71.80 L913.60,70.99 L913.39,70.17 L913.18,69.36 L912.97,68.54 L912.77,67.73 L912.56,66.91 L912.35,66.10 L912.14,65.28 L911.93,64.47 L911.72,63.65 L911.51,62.84 L911.31,62.02 L911.10,61.21 L910.89,60.39 L910.68,59.58 L910.47,58.77 L910.26,57.95 L910.05,57.14 L909.84,56.32 L909.63,55.51 L909.42,54.69 L909.20,53.88 L908.99,53.06 L908.78,52.25 L908.57,51.43 L908.36,50.62 L908.15,49.80 L907.94,48.99 L907.73,48.17 L907.51,47.36 L907.30,46.54 L907.09,45.73 L906.88,44.91 L906.67,44.10 L906.45,43.29 L906.24,42.47 L906.03,41.66 L905.82,40.84 L905.61,40.03 L905.39,39.21 L905.18,38.40 L904.97,37.58 L904.75,36.77 L904.54,35.95 L904.33,35.14 L904.12,34.32 L903.90,33.51 L903.69,32.69 L903.48,31.88 L903.26,31.06 L903.05,30.25 L902.84,29.43 L902.63,28.62 L902.41,27.80 L902.20,26.99 M902.20,613.61 L902.63,612.80 L903.05,611.98 L903.48,611.17 L903.90,610.35 L904.33,609.54 L904.76,608.72 L905.18,607.91 L905.61,607.09 L906.03,606.28 L906.46,605.46 L906.88,604.65 L907.31,603.83 L907.74,603.02 L908.16,602.20 L908.59,601.39 L909.01,600.57 L909.44,599.76 L909.86,598.94 L910.28,598.13 L910.71,597.32 L911.13,596.50 L911.56,595.69 L911.98,594.87 L912.41,594.06 L912.83,593.24 L913.25,592.43 L913.68,591.61 L914.10,590.80 L914.52,589.98 L914.94,589.17 L915.37,588.35 L915.79,587.54 L916.21,586.72 L916.63,585.91 L917.05,585.09 L917.47,584.28 L917.89,583.46 L918.31,582.65 L918.73,581.83 L919.15,581.02 L919.57,580.21 L919.99,579.39 L920.41,578.58 L920.83,577.76 L921.25,576.95 L921.67,576.13 L922.08,575.32 L922.50,574.50 L922.92,573.69 L923.33,572.87 L923.75,572.06 L924.16,571.24 L924.58,570.43 L924.99,569.61 L925.41,568.80 L925.82,567.98 L926.23,567.17 L926.65,566.35 L927.06,565.54 L927.47,564.73 L927.88,563.91 L928.29,563.10 L928.70,562.28 L929.11,561.47 L929.52,560.65 L929.93,559.84 L930.34,559.02 L930.75,558.21 L931.15,557.39 L931.56,556.58 L931.97,555.76 L932.37,554.95 L932.78,554.13 L933.18,553.32 L933.58,552.50 L933.99,551.69 L934.39,550.87 L934.79,550.06 L935.19,549.24 L935.59,548.43 L935.99,547.62 L936.39,546.80 L936.79,545.99 L937.19,545.17 L937.59,544.36 L937.98,543.54 L938.38,542.73 L938.77,541.91 L939.17,541.10 L939.56,540.28 L939.96,539.47 L940.35,538.65 L940.74,537.84 L941.13,537.02 L941.52,536.21 L941.91,535.39 L942.30,534.58 L942.69,533.76 L943.08,532.95 L943.46,532.13 L943.85,531.32 L944.23,530.51 L944.62,529.69 L945.00,528.88 L945.38,528.06 L945.76,527.25 L946.15,526.43 L946.53,525.62 L946.90,524.80 L947.28,523.99 L947.66,523.17 L948.04,522.36 L948.41,521.54 L948.79,520.73 L949.16,519.91 L949.53,519.10 L949.91,518.28 L950.28,517.47 L950.65,516.65 L951.02,515.84 L951.39,515.03 L951.75,514.21 L952.12,513.40 L952.49,512.58 L952.85,511.77 L953.21,510.95 L953.58,510.14 L953.94,509.32 L954.30,508.51 L954.66,507.69 L955.02,506.88 L955.38,506.06 L955.73,505.25 L956.09,504.43 L956.44,503.62 L956.80,502.80 L957.15,501.99 L957.50,501.17 L957.85,500.36 L958.20,499.55 L958.55,498.73 L958.90,497.92 L959.24,497.10 L959.59,496.29 L959.93,495.47 L960.28,494.66 L960.62,493.84 L960.96,493.03 L961.30,492.21 L961.64,491.40 L961.97,490.58 L962.31,489.77 L962.65,488.95 L962.98,488.14 L963.31,487.32 L963.64,486.51 L963.97,485.69 L964.30,484.88 L964.63,484.06 L964.96,483.25 L965.28,482.44 L965.61,481.62 L965.93,480.81 L966.25,479.99 L966.58,479.18 L966.89,478.36 L967.21,477.55 L967.53,476.73 L967.85,475.92 L968.16,475.10 L968.47,474.29 L968.79,473.47 L969.10,472.66 L969.41,471.84 L969.72,471.03 L970.02,470.21 L970.33,469.40 L970.63,468.58 L970.94,467.77 L971.24,466.96 L971.54,466.14 L971.84,465.33 L972.14,464.51 L972.43,463.70 L972.73,462.88 L973.02,462.07 L973.31,461.25 L973.61,460.44 L973.90,459.62 L974.18,458.81 L974.47,457.99 L974.76,457.18 L975.04,456.36 L975.32,455.55 L975.61,454.73 L975.89,453.92 L976.16,453.10 L976.44,452.29 L976.72,451.47 L976.99,450.66 L977.27,449.85 L977.54,449.03 L977.81,448.22 L978.08,447.40 L978.34,446.59 L978.61,445.77 L978.87,444.96 L979.14,444.14 L979.40,443.33 L979.66,442.51 L979.92,441.70 L980.17,440.88 L980.43,440.07 L980.68,439.25 L980.94,438.44 L981.19,437.62 L981.44,436.81 L981.69,435.99 L981.93,435.18 L982.18,434.37 L982.42,433.55 L982.66,432.74 L982.90,431.92 L983.14,431.11 L983.38,430.29 L983.62,429.48 L983.85,428.66 L984.08,427.85 L984.31,427.03 L984.54,426.22 L984.77,425.40 L985.00,424.59 L985.22,423.77 L985.45,422.96 L985.67,422.14 L985.89,421.33 L986.11,420.51 L986.33,419.70 L986.54,418.88 L986.75,418.07 L986.97,417.26 L987.18,416.44 L987.39,415.63 L987.59,414.81 L987.80,414.00 L988.00,413.18 L988.21,412.37 L988.41,411.55 L988.61,410.74 L988.80,409.92 L989.00,409.11 L989.19,408.29 L989.39,407.48 L989.58,406.66 L989.77,405.85 L989.95,405.03 L990.14,404.22 L990.32,403.40 L990.51,402.59 L990.69,401.77 L990.87,400.96 L991.04,400.15 L991.22,399.33 L991.39,398.52 L991.57,397.70 L991.74,396.89 L991.91,396.07 L992.07,395.26 L992.24,394.44 L992.40,393.63 L992.57,392.81 L992.73,392.00 L992.88,391.18 L993.04,390.37 L993.20,389.55 L993.35,388.74 L993.50,387.92 L993.65,387.11 L993.80,386.29 L993.95,385.48 L994.09,384.67 L994.23,383.85 L994.38,383.04 L994.52,382.22 L994.65,381.41 L994.79,380.59 L994.92,379.78 L995.06,378.96 L995.19,378.15 L995.32,377.33 L995.44,376.52 L995.57,375.70 L995.69,374.89 L995.81,374.07 L995.93,373.26 L996.05,372.44 L996.17,371.63 L996.28,370.81 L996.40,370.00 L996.51,369.19 L996.62,368.37 L996.73,367.56 L996.83,366.74 L996.93,365.93 L997.04,365.11 L997.14,364.30 L997.24,363.48 L997.33,362.67 L997.43,361.85 L997.52,361.04 L997.61,360.22 L997.70,359.41 L997.79,358.59 L997.87,357.78 L997.96,356.96 L998.04,356.15 L998.12,355.33 L998.20,354.52 L998.28,353.70 L998.35,352.89 L998.42,352.08 L998.50,351.26 L998.57,350.45 L998.63,349.63 L998.70,348.82 L998.76,348.00 L998.82,347.19 L998.88,346.37 L998.94,345.56 L999.00,344.74 L999.05,343.93 L999.11,343.11 L999.16,342.30 L999.21,341.48 L999.25,340.67 L999.30,339.85 L999.34,339.04 L999.39,338.22 L999.43,337.41 L999.46,336.60 L999.50,335.78 L999.53,334.97 L999.57,334.15 L999.60,333.34 L999.63,332.52 L999.65,331.71 L999.68,330.89 L999.70,330.08 L999.72,329.26 L999.74,328.45 L999.76,327.63 L999.78,326.82 L999.79,326.00 L999.80,325.19 L999.81,324.37 L999.82,323.56 L999.83,322.74 L999.83,321.93 L999.83,321.11 L999.84,320.30 L999.83,319.49 L999.83,318.67 L999.83,317.86 L999.82,317.04 L999.81,316.23 L999.80,315.41 L999.79,314.60 L999.78,313.78 L999.76,312.97 L999.74,312.15 L999.72,311.34 L999.70,310.52 L999.68,309.71 L999.65,308.89 L999.63,308.08 L999.60,307.26 L999.57,306.45 L999.53,305.63 L999.50,304.82 L999.46,304.00 L999.43,303.19 L999.39,302.38 L999.34,301.56 L999.30,300.75 L999.25,299.93 L999.21,299.12 L999.16,298.30 L999.11,297.49 L999.05,296.67 L999.00,295.86 L998.94,295.04 L998.88,294.23 L998.82,293.41 L998.76,292.60 L998.70,291.78 L998.63,290.97 L998.57,290.15 L998.50,289.34 L998.42,288.52 L998.35,287.71 L998.28,286.90 L998.20,286.08 L998.12,285.27 L998.04,284.45 L997.96,283.64 L997.87,282.82 L997.79,282.01 L997.70,281.19 L997.61,280.38 L997.52,279.56 L997.43,278.75 L997.33,277.93 L997.24,277.12 L997.14,276.30 L997.04,275.49 L996.93,274.67 L996.83,273.86 L996.73,273.04 L996.62,272.23 L996.51,271.42 L996.40,270.60 L996.28,269.79 L996.17,268.97 L996.05,268.16 L995.93,267.34 L995.81,266.53 L995.69,265.71 L995.57,264.90 L995.44,264.08 L995.32,263.27 L995.19,262.45 L995.06,261.64 L994.92,260.82 L994.79,260.01 L994.65,259.19 L994.52,258.38 L994.38,257.56 L994.23,256.75 L994.09,255.93 L993.95,255.12 L993.80,254.31 L993.65,253.49 L993.50,252.68 L993.35,251.86 L993.20,251.05 L993.04,250.23 L992.88,249.42 L992.73,248.60 L992.57,247.79 L992.40,246.97 L992.24,246.16 L992.07,245.34 L991.91,244.53 L991.74,243.71 L991.57,242.90 L991.39,242.08 L991.22,241.27 L991.04,240.45 L990.87,239.64 L990.69,238.83 L990.51,238.01 L990.32,237.20 L990.14,236.38 L989.95,235.57 L989.77,234.75 L989.58,233.94 L989.39,233.12 L989.19,232.31 L989.00,231.49 L988.80,230.68 L988.61,229.86 L988.41,229.05 L988.21,228.23 L988.00,227.42 L987.80,226.60 L987.59,225.79 L987.39,224.97 L987.18,224.16 L986.97,223.34 L986.75,222.53 L986.54,221.72 L986.33,220.90 L986.11,220.09 L985.89,219.27 L985.67,218.46 L985.45,217.64 L985.22,216.83 L985.00,216.01 L984.77,215.20 L984.54,214.38 L984.31,213.57 L984.08,212.75 L983.85,211.94 L983.62,211.12 L983.38,210.31 L983.14,209.49 L982.90,208.68 L982.66,207.86 L982.42,207.05 L982.18,206.24 L981.93,205.42 L981.69,204.61 L981.44,203.79 L981.19,202.98 L980.94,202.16 L980.68,201.35 L980.43,200.53 L980.17,199.72 L979.92,198.90 L979.66,198.09 L979.40,197.27 L979.14,196.46 L978.87,195.64 L978.61,194.83 L978.34,194.01 L978.08,193.20 L977.81,192.38 L977.54,191.57 L977.27,190.75 L976.99,189.94 L976.72,189.13 L976.44,188.31 L976.16,187.50 L975.89,186.68 L975.61,185.87 L975.32,185.05 L975.04,184.24 L974.76,183.42 L974.47,182.61 L974.18,181.79 L973.90,180.98 L973.61,180.16 L973.31,179.35 L973.02,178.53 L972.73,177.72 L972.43,176.90 L972.14,176.09 L971.84,175.27 L971.54,174.46 L971.24,173.65 L970.94,172.83 L970.63,172.02 L970.33,171.20 L970.02,170.39 L969.72,169.57 L969.41,168.76 L969.10,167.94 L968.79,167.13 L968.47,166.31 L968.16,165.50 L967.85,164.68 L967.53,163.87 L967.21,163.05 L966.89,162.24 L966.58,161.42 L966.25,160.61 L965.93,159.79 L965.61,158.98 L965.28,158.16 L964.96,157.35 L964.63,156.54 L964.30,155.72 L963.97,154.91 L963.64,154.09 L963.31,153.28 L962.98,152.46 L962.65,151.65 L962.31,150.83 L961.97,150.02 L961.64,149.20 L961.30,148.39 L960.96,147.57 L960.62,146.76 L960.28,145.94 L959.93,145.13 L959.59,144.31 L959.24,143.50 L958.90,142.68 L958.55,141.87 L958.20,141.06 L957.85,140.24 L957.50,139.43 L957.15,138.61 L956.80,137.80 L956.44,136.98 L956.09,136.17 L955.73,135.35 L955.38,134.54 L955.02,133.72 L954.66,132.91 L954.30,132.09 L953.94,131.28 L953.58,130.46 L953.21,129.65 L952.85,128.83 L952.49,128.02 L952.12,127.20 L951.75,126.39 L951.39,125.57 L951.02,124.76 L950.65,123.95 L950.28,123.13 L949.91,122.32 L949.53,121.50 L949.16,120.69 L948.79,119.87 L948.41,119.06 L948.04,118.24 L947.66,117.43 L947.28,116.61 L946.90,115.80 L946.53,114.98 L946.15,114.17 L945.76,113.35 L945.38,112.54 L945.00,111.72 L944.62,110.91 L944.23,110.09 L943.85,109.28 L943.46,108.47 L943.08,107.65 L942.69,106.84 L942.30,106.02 L941.91,105.21 L941.52,104.39 L941.13,103.58 L940.74,102.76 L940.35,101.95 L939.96,101.13 L939.56,100.32 L939.17,99.50 L938.77,98.69 L938.38,97.87 L937.98,97.06 L937.59,96.24 L937.19,95.43 L936.79,94.61 L936.39,93.80 L935.99,92.98 L935.59,92.17 L935.19,91.36 L934.79,90.54 L934.39,89.73 L933.99,88.91 L933.58,88.10 L933.18,87.28 L932.78,86.47 L932.37,85.65 L931.97,84.84 L931.56,84.02 L931.15,83.21 L930.75,82.39 L930.34,81.58 L929.93,80.76 L929.52,79.95 L929.11,79.13 L928.70,78.32 L928.29,77.50 L927.88,76.69 L927.47,75.88 L927.06,75.06 L926.65,74.25 L926.23,73.43 L925.82,72.62 L925.41,71.80 L924.99,70.99 L924.58,70.17 L924.16,69.36 L923.75,68.54 L923.33,67.73 L922.92,66.91 L922.50,66.10 L922.08,65.28 L921.67,64.47 L921.25,63.65 L920.83,62.84 L920.41,62.02 L919.99,61.21 L919.57,60.39 L919.15,59.58 L918.73,58.77 L918.31,57.95 L917.89,57.14 L917.47,56.32 L917.05,55.51 L916.63,54.69 L916.21,53.88 L915.79,53.06 L915.37,52.25 L914.94,51.43 L914.52,50.62 L914.10,49.80 L913.68,48.99 L913.25,48.17 L912.83,47.36 L912.41,46.54 L911.98,45.73 L911.56,44.91 L911.13,44.10 L910.71,43.29 L910.28,42.47 L909.86,41.66 L909.44,40.84 L909.01,40.03 L908.59,39.21 L908.16,38.40 L907.74,37.58 L907.31,36.77 L906.88,35.95 L906.46,35.14 L906.03,34.32 L905.61,33.51 L905.18,32.69 L904.76,31.88 L904.33,31.06 L903.90,30.25 L903.48,29.43 L903.05,28.62 L902.63,27.80 L902.20,26.99 M902.20,613.61 L902.84,612.80 L903.48,611.98 L904.12,611.17 L904.76,610.35 L905.39,609.54 L906.03,608.72 L906.67,607.91 L907.31,607.09 L907.95,606.28 L908.59,605.46 L909.23,604.65 L909.86,603.83 L910.50,603.02 L911.14,602.20 L911.78,601.39 L912.42,600.57 L913.05,599.76 L913.69,598.94 L914.33,598.13 L914.96,597.32 L915.60,596.50 L916.24,595.69 L916.87,594.87 L917.51,594.06 L918.14,593.24 L918.78,592.43 L919.41,591.61 L920.05,590.80 L920.68,589.98 L921.32,589.17 L921.95,588.35 L922.58,587.54 L923.21,586.72 L923.85,585.91 L924.48,585.09 L925.11,584.28 L925.74,583.46 L926.37,582.65 L927.00,581.83 L927.63,581.02 L928.26,580.21 L928.89,579.39 L929.52,578.58 L930.14,577.76 L930.77,576.95 L931.40,576.13 L932.02,575.32 L932.65,574.50 L933.27,573.69 L933.90,572.87 L934.52,572.06 L935.14,571.24 L935.77,570.43 L936.39,569.61 L937.01,568.80 L937.63,567.98 L938.25,567.17 L938.87,566.35 L939.49,565.54 L940.10,564.73 L940.72,563.91 L941.34,563.10 L941.95,562.28 L942.57,561.47 L943.18,560.65 L943.79,559.84 L944.41,559.02 L945.02,558.21 L945.63,557.39 L946.24,556.58 L946.85,555.76 L947.46,554.95 L948.06,554.13 L948.67,553.32 L949.28,552.50 L949.88,551.69 L950.48,550.87 L951.09,550.06 L951.69,549.24 L952.29,548.43 L952.89,547.62 L953.49,546.80 L954.09,545.99 L954.68,545.17 L955.28,544.36 L955.88,543.54 L956.47,542.73 L957.06,541.91 L957.65,541.10 L958.24,540.28 L958.83,539.47 L959.42,538.65 L960.01,537.84 L960.60,537.02 L961.18,536.21 L961.77,535.39 L962.35,534.58 L962.93,533.76 L963.51,532.95 L964.09,532.13 L964.67,531.32 L965.25,530.51 L965.83,529.69 L966.40,528.88 L966.97,528.06 L967.55,527.25 L968.12,526.43 L968.69,525.62 L969.26,524.80 L969.82,523.99 L970.39,523.17 L970.96,522.36 L971.52,521.54 L972.08,520.73 L972.64,519.91 L973.20,519.10 L973.76,518.28 L974.32,517.47 L974.87,516.65 L975.43,515.84 L975.98,515.03 L976.53,514.21 L977.08,513.40 L977.63,512.58 L978.18,511.77 L978.72,510.95 L979.27,510.14 L979.81,509.32 L980.35,508.51 L980.89,507.69 L981.43,506.88 L981.96,506.06 L982.50,505.25 L983.03,504.43 L983.56,503.62 L984.10,502.80 L984.62,501.99 L985.15,501.17 L985.68,500.36 L986.20,499.55 L986.72,498.73 L987.25,497.92 L987.76,497.10 L988.28,496.29 L988.80,495.47 L989.31,494.66 L989.83,493.84 L990.34,493.03 L990.85,492.21 L991.35,491.40 L991.86,490.58 L992.37,489.77 L992.87,488.95 L993.37,488.14 L993.87,487.32 L994.37,486.51 L994.86,485.69 L995.36,484.88 L995.85,484.06 L996.34,483.25 L996.83,482.44 L997.31,481.62 L997.80,480.81 L998.28,479.99 L998.76,479.18 L999.24,478.36 L999.72,477.55 L1000.20,476.73 L1000.67,475.92 L1001.14,475.10 L1001.61,474.29 L1002.08,473.47 L1002.55,472.66 L1003.01,471.84 L1003.47,471.03 L1003.93,470.21 L1004.39,469.40 L1004.85,468.58 L1005.30,467.77 L1005.76,466.96 L1006.21,466.14 L1006.66,465.33 L1007.10,464.51 L1007.55,463.70 L1007.99,462.88 L1008.43,462.07 L1008.87,461.25 L1009.31,460.44 L1009.74,459.62 L1010.18,458.81 L1010.61,457.99 L1011.04,457.18 L1011.46,456.36 L1011.89,455.55 L1012.31,454.73 L1012.73,453.92 L1013.15,453.10 L1013.56,452.29 L1013.98,451.47 L1014.39,450.66 L1014.80,449.85 L1015.21,449.03 L1015.61,448.22 L1016.01,447.40 L1016.42,446.59 L1016.81,445.77 L1017.21,444.96 L1017.61,444.14 L1018.00,443.33 L1018.39,442.51 L1018.78,441.70 L1019.16,440.88 L1019.55,440.07 L1019.93,439.25 L1020.31,438.44 L1020.68,437.62 L1021.06,436.81 L1021.43,435.99 L1021.80,435.18 L1022.17,434.37 L1022.53,433.55 L1022.90,432.74 L1023.26,431.92 L1023.61,431.11 L1023.97,430.29 L1024.32,429.48 L1024.68,428.66 L1025.03,427.85 L1025.37,427.03 L1025.72,426.22 L1026.06,425.40 L1026.40,424.59 L1026.74,423.77 L1027.07,422.96 L1027.40,422.14 L1027.73,421.33 L1028.06,420.51 L1028.39,419.70 L1028.71,418.88 L1029.03,418.07 L1029.35,417.26 L1029.67,416.44 L1029.98,415.63 L1030.29,414.81 L1030.60,414.00 L1030.90,413.18 L1031.21,412.37 L1031.51,411.55 L1031.81,410.74 L1032.10,409.92 L1032.40,409.11 L1032.69,408.29 L1032.98,407.48 L1033.27,406.66 L1033.55,405.85 L1033.83,405.03 L1034.11,404.22 L1034.39,403.40 L1034.66,402.59 L1034.93,401.77 L1035.20,400.96 L1035.47,400.15 L1035.73,399.33 L1035.99,398.52 L1036.25,397.70 L1036.51,396.89 L1036.76,396.07 L1037.01,395.26 L1037.26,394.44 L1037.50,393.63 L1037.75,392.81 L1037.99,392.00 L1038.23,391.18 L1038.46,390.37 L1038.69,389.55 L1038.93,388.74 L1039.15,387.92 L1039.38,387.11 L1039.60,386.29 L1039.82,385.48 L1040.04,384.67 L1040.25,383.85 L1040.46,383.04 L1040.67,382.22 L1040.88,381.41 L1041.08,380.59 L1041.29,379.78 L1041.48,378.96 L1041.68,378.15 L1041.87,377.33 L1042.07,376.52 L1042.25,375.70 L1042.44,374.89 L1042.62,374.07 L1042.80,373.26 L1042.98,372.44 L1043.15,371.63 L1043.33,370.81 L1043.50,370.00 L1043.66,369.19 L1043.83,368.37 L1043.99,367.56 L1044.15,366.74 L1044.30,365.93 L1044.46,365.11 L1044.61,364.30 L1044.75,363.48 L1044.90,362.67 L1045.04,361.85 L1045.18,361.04 L1045.32,360.22 L1045.45,359.41 L1045.58,358.59 L1045.71,357.78 L1045.84,356.96 L1045.96,356.15 L1046.08,355.33 L1046.20,354.52 L1046.32,353.70 L1046.43,352.89 L1046.54,352.08 L1046.64,351.26 L1046.75,350.45 L1046.85,349.63 L1046.95,348.82 L1047.04,348.00 L1047.14,347.19 L1047.23,346.37 L1047.31,345.56 L1047.40,344.74 L1047.48,343.93 L1047.56,343.11 L1047.64,342.30 L1047.71,341.48 L1047.78,340.67 L1047.85,339.85 L1047.92,339.04 L1047.98,338.22 L1048.04,337.41 L1048.10,336.60 L1048.15,335.78 L1048.20,334.97 L1048.25,334.15 L1048.30,333.34 L1048.34,332.52 L1048.38,331.71 L1048.42,330.89 L1048.45,330.08 L1048.48,329.26 L1048.51,328.45 L1048.54,327.63 L1048.56,326.82 L1048.58,326.00 L1048.60,325.19 L1048.62,324.37 L1048.63,323.56 L1048.64,322.74 L1048.65,321.93 L1048.65,321.11 L1048.65,320.30 L1048.65,319.49 L1048.65,318.67 L1048.64,317.86 L1048.63,317.04 L1048.62,316.23 L1048.60,315.41 L1048.58,314.60 L1048.56,313.78 L1048.54,312.97 L1048.51,312.15 L1048.48,311.34 L1048.45,310.52 L1048.42,309.71 L1048.38,308.89 L1048.34,308.08 L1048.30,307.26 L1048.25,306.45 L1048.20,305.63 L1048.15,304.82 L1048.10,304.00 L1048.04,303.19 L1047.98,302.38 L1047.92,301.56 L1047.85,300.75 L1047.78,299.93 L1047.71,299.12 L1047.64,298.30 L1047.56,297.49 L1047.48,296.67 L1047.40,295.86 L1047.31,295.04 L1047.23,294.23 L1047.14,293.41 L1047.04,292.60 L1046.95,291.78 L1046.85,290.97 L1046.75,290.15 L1046.64,289.34 L1046.54,288.52 L1046.43,287.71 L1046.32,286.90 L1046.20,286.08 L1046.08,285.27 L1045.96,284.45 L1045.84,283.64 L1045.71,282.82 L1045.58,282.01 L1045.45,281.19 L1045.32,280.38 L1045.18,279.56 L1045.04,278.75 L1044.90,277.93 L1044.75,277.12 L1044.61,276.30 L1044.46,275.49 L1044.30,274.67 L1044.15,273.86 L1043.99,273.04 L1043.83,272.23 L1043.66,271.42 L1043.50,270.60 L1043.33,269.79 L1043.15,268.97 L1042.98,268.16 L1042.80,267.34 L1042.62,266.53 L1042.44,265.71 L1042.25,264.90 L1042.07,264.08 L1041.87,263.27 L1041.68,262.45 L1041.48,261.64 L1041.29,260.82 L1041.08,260.01 L1040.88,259.19 L1040.67,258.38 L1040.46,257.56 L1040.25,256.75 L1040.04,255.93 L1039.82,255.12 L1039.60,254.31 L1039.38,253.49 L1039.15,252.68 L1038.93,251.86 L1038.69,251.05 L1038.46,250.23 L1038.23,249.42 L1037.99,248.60 L1037.75,247.79 L1037.50,246.97 L1037.26,246.16 L1037.01,245.34 L1036.76,244.53 L1036.51,243.71 L1036.25,242.90 L1035.99,242.08 L1035.73,241.27 L1035.47,240.45 L1035.20,239.64 L1034.93,238.83 L1034.66,238.01 L1034.39,237.20 L1034.11,236.38 L1033.83,235.57 L1033.55,234.75 L1033.27,233.94 L1032.98,233.12 L1032.69,232.31 L1032.40,231.49 L1032.10,230.68 L1031.81,229.86 L1031.51,229.05 L1031.21,228.23 L1030.90,227.42 L1030.60,226.60 L1030.29,225.79 L1029.98,224.97 L1029.67,224.16 L1029.35,223.34 L1029.03,222.53 L1028.71,221.72 L1028.39,220.90 L1028.06,220.09 L1027.73,219.27 L1027.40,218.46 L1027.07,217.64 L1026.74,216.83 L1026.40,216.01 L1026.06,215.20 L1025.72,214.38 L1025.37,213.57 L1025.03,212.75 L1024.68,211.94 L1024.32,211.12 L1023.97,210.31 L1023.61,209.49 L1023.26,208.68 L1022.90,207.86 L1022.53,207.05 L1022.17,206.24 L1021.80,205.42 L1021.43,204.61 L1021.06,203.79 L1020.68,202.98 L1020.31,202.16 L1019.93,201.35 L1019.55,200.53 L1019.16,199.72 L1018.78,198.90 L1018.39,198.09 L1018.00,197.27 L1017.61,196.46 L1017.21,195.64 L1016.81,194.83 L1016.42,194.01 L1016.01,193.20 L1015.61,192.38 L1015.21,191.57 L1014.80,190.75 L1014.39,189.94 L1013.98,189.13 L1013.56,188.31 L1013.15,187.50 L1012.73,186.68 L1012.31,185.87 L1011.89,185.05 L1011.46,184.24 L1011.04,183.42 L1010.61,182.61 L1010.18,181.79 L1009.74,180.98 L1009.31,180.16 L1008.87,179.35 L1008.43,178.53 L1007.99,177.72 L1007.55,176.90 L1007.10,176.09 L1006.66,175.27 L1006.21,174.46 L1005.76,173.65 L1005.30,172.83 L1004.85,172.02 L1004.39,171.20 L1003.93,170.39 L1003.47,169.57 L1003.01,168.76 L1002.55,167.94 L1002.08,167.13 L1001.61,166.31 L1001.14,165.50 L1000.67,164.68 L1000.20,163.87 L999.72,163.05 L999.24,162.24 L998.76,161.42 L998.28,160.61 L997.80,159.79 L997.31,158.98 L996.83,158.16 L996.34,157.35 L995.85,156.54 L995.36,155.72 L994.86,154.91 L994.37,154.09 L993.87,153.28 L993.37,152.46 L992.87,151.65 L992.37,150.83 L991.86,150.02 L991.35,149.20 L990.85,148.39 L990.34,147.57 L989.83,146.76 L989.31,145.94 L988.80,145.13 L988.28,144.31 L987.76,143.50 L987.25,142.68 L986.72,141.87 L986.20,141.06 L985.68,140.24 L985.15,139.43 L984.62,138.61 L984.10,137.80 L983.56,136.98 L983.03,136.17 L982.50,135.35 L981.96,134.54 L981.43,133.72 L980.89,132.91 L980.35,132.09 L979.81,131.28 L979.27,130.46 L978.72,129.65 L978.18,128.83 L977.63,128.02 L977.08,127.20 L976.53,126.39 L975.98,125.57 L975.43,124.76 L974.87,123.95 L974.32,123.13 L973.76,122.32 L973.20,121.50 L972.64,120.69 L972.08,119.87 L971.52,119.06 L970.96,118.24 L970.39,117.43 L969.82,116.61 L969.26,115.80 L968.69,114.98 L968.12,114.17 L967.55,113.35 L966.97,112.54 L966.40,111.72 L965.83,110.91 L965.25,110.09 L964.67,109.28 L964.09,108.47 L963.51,107.65 L962.93,106.84 L962.35,106.02 L961.77,105.21 L961.18,104.39 L960.60,103.58 L960.01,102.76 L959.42,101.95 L958.83,101.13 L958.24,100.32 L957.65,99.50 L957.06,98.69 L956.47,97.87 L955.88,97.06 L955.28,96.24 L954.68,95.43 L954.09,94.61 L953.49,93.80 L952.89,92.98 L952.29,92.17 L951.69,91.36 L951.09,90.54 L950.48,89.73 L949.88,88.91 L949.28,88.10 L948.67,87.28 L948.06,86.47 L947.46,85.65 L946.85,84.84 L946.24,84.02 L945.63,83.21 L945.02,82.39 L944.41,81.58 L943.79,80.76 L943.18,79.95 L942.57,79.13 L941.95,78.32 L941.34,77.50 L940.72,76.69 L940.10,75.88 L939.49,75.06 L938.87,74.25 L938.25,73.43 L937.63,72.62 L937.01,71.80 L936.39,70.99 L935.77,70.17 L935.14,69.36 L934.52,68.54 L933.90,67.73 L933.27,66.91 L932.65,66.10 L932.02,65.28 L931.40,64.47 L930.77,63.65 L930.14,62.84 L929.52,62.02 L928.89,61.21 L928.26,60.39 L927.63,59.58 L927.00,58.77 L926.37,57.95 L925.74,57.14 L925.11,56.32 L924.48,55.51 L923.85,54.69 L923.21,53.88 L922.58,53.06 L921.95,52.25 L921.32,51.43 L920.68,50.62 L920.05,49.80 L919.41,48.99 L918.78,48.17 L918.14,47.36 L917.51,46.54 L916.87,45.73 L916.24,44.91 L915.60,44.10 L914.96,43.29 L914.33,42.47 L913.69,41.66 L913.05,40.84 L912.42,40.03 L911.78,39.21 L911.14,38.40 L910.50,37.58 L909.86,36.77 L909.23,35.95 L908.59,35.14 L907.95,34.32 L907.31,33.51 L906.67,32.69 L906.03,31.88 L905.39,31.06 L904.76,30.25 L904.12,29.43 L903.48,28.62 L902.84,27.80 L902.20,26.99 M902.20,613.61 L903.05,612.80 L903.90,611.98 L904.76,611.17 L905.61,610.35 L906.46,609.54 L907.31,608.72 L908.16,607.91 L909.01,607.09 L909.87,606.28 L910.72,605.46 L911.57,604.65 L912.42,603.83 L913.27,603.02 L914.12,602.20 L914.97,601.39 L915.82,600.57 L916.67,599.76 L917.52,598.94 L918.37,598.13 L919.22,597.32 L920.07,596.50 L920.92,595.69 L921.76,594.87 L922.61,594.06 L923.46,593.24 L924.31,592.43 L925.15,591.61 L926.00,590.80 L926.84,589.98 L927.69,589.17 L928.53,588.35 L929.38,587.54 L930.22,586.72 L931.06,585.91 L931.91,585.09 L932.75,584.28 L933.59,583.46 L934.43,582.65 L935.27,581.83 L936.11,581.02 L936.95,580.21 L937.79,579.39 L938.62,578.58 L939.46,577.76 L940.30,576.95 L941.13,576.13 L941.97,575.32 L942.80,574.50 L943.63,573.69 L944.46,572.87 L945.30,572.06 L946.13,571.24 L946.96,570.43 L947.78,569.61 L948.61,568.80 L949.44,567.98 L950.27,567.17 L951.09,566.35 L951.92,565.54 L952.74,564.73 L953.56,563.91 L954.38,563.10 L955.20,562.28 L956.02,561.47 L956.84,560.65 L957.66,559.84 L958.48,559.02 L959.29,558.21 L960.11,557.39 L960.92,556.58 L961.73,555.76 L962.54,554.95 L963.35,554.13 L964.16,553.32 L964.97,552.50 L965.77,551.69 L966.58,550.87 L967.38,550.06 L968.18,549.24 L968.99,548.43 L969.79,547.62 L970.58,546.80 L971.38,545.99 L972.18,545.17 L972.97,544.36 L973.77,543.54 L974.56,542.73 L975.35,541.91 L976.14,541.10 L976.93,540.28 L977.71,539.47 L978.50,538.65 L979.28,537.84 L980.06,537.02 L980.84,536.21 L981.62,535.39 L982.40,534.58 L983.18,533.76 L983.95,532.95 L984.72,532.13 L985.50,531.32 L986.27,530.51 L987.03,529.69 L987.80,528.88 L988.57,528.06 L989.33,527.25 L990.09,526.43 L990.85,525.62 L991.61,524.80 L992.37,523.99 L993.12,523.17 L993.87,522.36 L994.63,521.54 L995.37,520.73 L996.12,519.91 L996.87,519.10 L997.61,518.28 L998.36,517.47 L999.10,516.65 L999.84,515.84 L1000.57,515.03 L1001.31,514.21 L1002.04,513.40 L1002.77,512.58 L1003.50,511.77 L1004.23,510.95 L1004.95,510.14 L1005.68,509.32 L1006.40,508.51 L1007.12,507.69 L1007.84,506.88 L1008.55,506.06 L1009.27,505.25 L1009.98,504.43 L1010.69,503.62 L1011.39,502.80 L1012.10,501.99 L1012.80,501.17 L1013.50,500.36 L1014.20,499.55 L1014.90,498.73 L1015.59,497.92 L1016.29,497.10 L1016.98,496.29 L1017.67,495.47 L1018.35,494.66 L1019.03,493.84 L1019.72,493.03 L1020.40,492.21 L1021.07,491.40 L1021.75,490.58 L1022.42,489.77 L1023.09,488.95 L1023.76,488.14 L1024.42,487.32 L1025.09,486.51 L1025.75,485.69 L1026.41,484.88 L1027.06,484.06 L1027.72,483.25 L1028.37,482.44 L1029.02,481.62 L1029.66,480.81 L1030.31,479.99 L1030.95,479.18 L1031.59,478.36 L1032.23,477.55 L1032.86,476.73 L1033.49,475.92 L1034.12,475.10 L1034.75,474.29 L1035.37,473.47 L1036.00,472.66 L1036.61,471.84 L1037.23,471.03 L1037.85,470.21 L1038.46,469.40 L1039.07,468.58 L1039.67,467.77 L1040.28,466.96 L1040.88,466.14 L1041.48,465.33 L1042.07,464.51 L1042.67,463.70 L1043.26,462.88 L1043.84,462.07 L1044.43,461.25 L1045.01,460.44 L1045.59,459.62 L1046.17,458.81 L1046.74,457.99 L1047.31,457.18 L1047.88,456.36 L1048.45,455.55 L1049.01,454.73 L1049.57,453.92 L1050.13,453.10 L1050.68,452.29 L1051.24,451.47 L1051.79,450.66 L1052.33,449.85 L1052.88,449.03 L1053.42,448.22 L1053.95,447.40 L1054.49,446.59 L1055.02,445.77 L1055.55,444.96 L1056.07,444.14 L1056.60,443.33 L1057.12,442.51 L1057.64,441.70 L1058.15,440.88 L1058.66,440.07 L1059.17,439.25 L1059.67,438.44 L1060.18,437.62 L1060.68,436.81 L1061.17,435.99 L1061.67,435.18 L1062.16,434.37 L1062.64,433.55 L1063.13,432.74 L1063.61,431.92 L1064.09,431.11 L1064.56,430.29 L1065.03,429.48 L1065.50,428.66 L1065.97,427.85 L1066.43,427.03 L1066.89,426.22 L1067.35,425.40 L1067.80,424.59 L1068.25,423.77 L1068.70,422.96 L1069.14,422.14 L1069.58,421.33 L1070.02,420.51 L1070.45,419.70 L1070.88,418.88 L1071.31,418.07 L1071.73,417.26 L1072.15,416.44 L1072.57,415.63 L1072.99,414.81 L1073.40,414.00 L1073.81,413.18 L1074.21,412.37 L1074.61,411.55 L1075.01,410.74 L1075.41,409.92 L1075.80,409.11 L1076.19,408.29 L1076.57,407.48 L1076.95,406.66 L1077.33,405.85 L1077.71,405.03 L1078.08,404.22 L1078.45,403.40 L1078.81,402.59 L1079.17,401.77 L1079.53,400.96 L1079.89,400.15 L1080.24,399.33 L1080.59,398.52 L1080.93,397.70 L1081.27,396.89 L1081.61,396.07 L1081.95,395.26 L1082.28,394.44 L1082.61,393.63 L1082.93,392.81 L1083.25,392.00 L1083.57,391.18 L1083.88,390.37 L1084.19,389.55 L1084.50,388.74 L1084.80,387.92 L1085.10,387.11 L1085.40,386.29 L1085.69,385.48 L1085.98,384.67 L1086.27,383.85 L1086.55,383.04 L1086.83,382.22 L1087.11,381.41 L1087.38,380.59 L1087.65,379.78 L1087.91,378.96 L1088.17,378.15 L1088.43,377.33 L1088.69,376.52 L1088.94,375.70 L1089.18,374.89 L1089.43,374.07 L1089.67,373.26 L1089.91,372.44 L1090.14,371.63 L1090.37,370.81 L1090.59,370.00 L1090.82,369.19 L1091.04,368.37 L1091.25,367.56 L1091.46,366.74 L1091.67,365.93 L1091.87,365.11 L1092.07,364.30 L1092.27,363.48 L1092.47,362.67 L1092.66,361.85 L1092.84,361.04 L1093.02,360.22 L1093.20,359.41 L1093.38,358.59 L1093.55,357.78 L1093.72,356.96 L1093.88,356.15 L1094.04,355.33 L1094.20,354.52 L1094.35,353.70 L1094.50,352.89 L1094.65,352.08 L1094.79,351.26 L1094.93,350.45 L1095.07,349.63 L1095.20,348.82 L1095.33,348.00 L1095.45,347.19 L1095.57,346.37 L1095.69,345.56 L1095.80,344.74 L1095.91,343.93 L1096.01,343.11 L1096.12,342.30 L1096.21,341.48 L1096.31,340.67 L1096.40,339.85 L1096.49,339.04 L1096.57,338.22 L1096.65,337.41 L1096.73,336.60 L1096.80,335.78 L1096.87,334.97 L1096.93,334.15 L1096.99,333.34 L1097.05,332.52 L1097.11,331.71 L1097.16,330.89 L1097.20,330.08 L1097.25,329.26 L1097.28,328.45 L1097.32,327.63 L1097.35,326.82 L1097.38,326.00 L1097.40,325.19 L1097.42,324.37 L1097.44,323.56 L1097.45,322.74 L1097.46,321.93 L1097.47,321.11 L1097.47,320.30 L1097.47,319.49 L1097.46,318.67 L1097.45,317.86 L1097.44,317.04 L1097.42,316.23 L1097.40,315.41 L1097.38,314.60 L1097.35,313.78 L1097.32,312.97 L1097.28,312.15 L1097.25,311.34 L1097.20,310.52 L1097.16,309.71 L1097.11,308.89 L1097.05,308.08 L1096.99,307.26 L1096.93,306.45 L1096.87,305.63 L1096.80,304.82 L1096.73,304.00 L1096.65,303.19 L1096.57,302.38 L1096.49,301.56 L1096.40,300.75 L1096.31,299.93 L1096.21,299.12 L1096.12,298.30 L1096.01,297.49 L1095.91,296.67 L1095.80,295.86 L1095.69,295.04 L1095.57,294.23 L1095.45,293.41 L1095.33,292.60 L1095.20,291.78 L1095.07,290.97 L1094.93,290.15 L1094.79,289.34 L1094.65,288.52 L1094.50,287.71 L1094.35,286.90 L1094.20,286.08 L1094.04,285.27 L1093.88,284.45 L1093.72,283.64 L1093.55,282.82 L1093.38,282.01 L1093.20,281.19 L1093.02,280.38 L1092.84,279.56 L1092.66,278.75 L1092.47,277.93 L1092.27,277.12 L1092.07,276.30 L1091.87,275.49 L1091.67,274.67 L1091.46,273.86 L1091.25,273.04 L1091.04,272.23 L1090.82,271.42 L1090.59,270.60 L1090.37,269.79 L1090.14,268.97 L1089.91,268.16 L1089.67,267.34 L1089.43,266.53 L1089.18,265.71 L1088.94,264.90 L1088.69,264.08 L1088.43,263.27 L1088.17,262.45 L1087.91,261.64 L1087.65,260.82 L1087.38,260.01 L1087.11,259.19 L1086.83,258.38 L1086.55,257.56 L1086.27,256.75 L1085.98,255.93 L1085.69,255.12 L1085.40,254.31 L1085.10,253.49 L1084.80,252.68 L1084.50,251.86 L1084.19,251.05 L1083.88,250.23 L1083.57,249.42 L1083.25,248.60 L1082.93,247.79 L1082.61,246.97 L1082.28,246.16 L1081.95,245.34 L1081.61,244.53 L1081.27,243.71 L1080.93,242.90 L1080.59,242.08 L1080.24,241.27 L1079.89,240.45 L1079.53,239.64 L1079.17,238.83 L1078.81,238.01 L1078.45,237.20 L1078.08,236.38 L1077.71,235.57 L1077.33,234.75 L1076.95,233.94 L1076.57,233.12 L1076.19,232.31 L1075.80,231.49 L1075.41,230.68 L1075.01,229.86 L1074.61,229.05 L1074.21,228.23 L1073.81,227.42 L1073.40,226.60 L1072.99,225.79 L1072.57,224.97 L1072.15,224.16 L1071.73,223.34 L1071.31,222.53 L1070.88,221.72 L1070.45,220.90 L1070.02,220.09 L1069.58,219.27 L1069.14,218.46 L1068.70,217.64 L1068.25,216.83 L1067.80,216.01 L1067.35,215.20 L1066.89,214.38 L1066.43,213.57 L1065.97,212.75 L1065.50,211.94 L1065.03,211.12 L1064.56,210.31 L1064.09,209.49 L1063.61,208.68 L1063.13,207.86 L1062.64,207.05 L1062.16,206.24 L1061.67,205.42 L1061.17,204.61 L1060.68,203.79 L1060.18,202.98 L1059.67,202.16 L1059.17,201.35 L1058.66,200.53 L1058.15,199.72 L1057.64,198.90 L1057.12,198.09 L1056.60,197.27 L1056.07,196.46 L1055.55,195.64 L1055.02,194.83 L1054.49,194.01 L1053.95,193.20 L1053.42,192.38 L1052.88,191.57 L1052.33,190.75 L1051.79,189.94 L1051.24,189.13 L1050.68,188.31 L1050.13,187.50 L1049.57,186.68 L1049.01,185.87 L1048.45,185.05 L1047.88,184.24 L1047.31,183.42 L1046.74,182.61 L1046.17,181.79 L1045.59,180.98 L1045.01,180.16 L1044.43,179.35 L1043.84,178.53 L1043.26,177.72 L1042.67,176.90 L1042.07,176.09 L1041.48,175.27 L1040.88,174.46 L1040.28,173.65 L1039.67,172.83 L1039.07,172.02 L1038.46,171.20 L1037.85,170.39 L1037.23,169.57 L1036.61,168.76 L1036.00,167.94 L1035.37,167.13 L1034.75,166.31 L1034.12,165.50 L1033.49,164.68 L1032.86,163.87 L1032.23,163.05 L1031.59,162.24 L1030.95,161.42 L1030.31,160.61 L1029.66,159.79 L1029.02,158.98 L1028.37,158.16 L1027.72,157.35 L1027.06,156.54 L1026.41,155.72 L1025.75,154.91 L1025.09,154.09 L1024.42,153.28 L1023.76,152.46 L1023.09,151.65 L1022.42,150.83 L1021.75,150.02 L1021.07,149.20 L1020.40,148.39 L1019.72,147.57 L1019.03,146.76 L1018.35,145.94 L1017.67,145.13 L1016.98,144.31 L1016.29,143.50 L1015.59,142.68 L1014.90,141.87 L1014.20,141.06 L1013.50,140.24 L1012.80,139.43 L1012.10,138.61 L1011.39,137.80 L1010.69,136.98 L1009.98,136.17 L1009.27,135.35 L1008.55,134.54 L1007.84,133.72 L1007.12,132.91 L1006.40,132.09 L1005.68,131.28 L1004.95,130.46 L1004.23,129.65 L1003.50,128.83 L1002.77,128.02 L1002.04,127.20 L1001.31,126.39 L1000.57,125.57 L999.84,124.76 L999.10,123.95 L998.36,123.13 L997.61,122.32 L996.87,121.50 L996.12,120.69 L995.37,119.87 L994.63,119.06 L993.87,118.24 L993.12,117.43 L992.37,116.61 L991.61,115.80 L990.85,114.98 L990.09,114.17 L989.33,113.35 L988.57,112.54 L987.80,111.72 L987.03,110.91 L986.27,110.09 L985.50,109.28 L984.72,108.47 L983.95,107.65 L983.18,106.84 L982.40,106.02 L981.62,105.21 L980.84,104.39 L980.06,103.58 L979.28,102.76 L978.50,101.95 L977.71,101.13 L976.93,100.32 L976.14,99.50 L975.35,98.69 L974.56,97.87 L973.77,97.06 L972.97,96.24 L972.18,95.43 L971.38,94.61 L970.58,93.80 L969.79,92.98 L968.99,92.17 L968.18,91.36 L967.38,90.54 L966.58,89.73 L965.77,88.91 L964.97,88.10 L964.16,87.28 L963.35,86.47 L962.54,85.65 L961.73,84.84 L960.92,84.02 L960.11,83.21 L959.29,82.39 L958.48,81.58 L957.66,80.76 L956.84,79.95 L956.02,79.13 L955.20,78.32 L954.38,77.50 L953.56,76.69 L952.74,75.88 L951.92,75.06 L951.09,74.25 L950.27,73.43 L949.44,72.62 L948.61,71.80 L947.78,70.99 L946.96,70.17 L946.13,69.36 L945.30,68.54 L944.46,67.73 L943.63,66.91 L942.80,66.10 L941.97,65.28 L941.13,64.47 L940.30,63.65 L939.46,62.84 L938.62,62.02 L937.79,61.21 L936.95,60.39 L936.11,59.58 L935.27,58.77 L934.43,57.95 L933.59,57.14 L932.75,56.32 L931.91,55.51 L931.06,54.69 L930.22,53.88 L929.38,53.06 L928.53,52.25 L927.69,51.43 L926.84,50.62 L926.00,49.80 L925.15,48.99 L924.31,48.17 L923.46,47.36 L922.61,46.54 L921.76,45.73 L920.92,44.91 L920.07,44.10 L919.22,43.29 L918.37,42.47 L917.52,41.66 L916.67,40.84 L915.82,40.03 L914.97,39.21 L914.12,38.40 L913.27,37.58 L912.42,36.77 L911.57,35.95 L910.72,35.14 L909.87,34.32 L909.01,33.51 L908.16,32.69 L907.31,31.88 L906.46,31.06 L905.61,30.25 L904.76,29.43 L903.90,28.62 L903.05,27.80 L902.20,26.99 M902.20,613.61 L903.27,612.80 L904.33,611.98 L905.40,611.17 L906.46,610.35 L907.52,609.54 L908.59,608.72 L909.65,607.91 L910.72,607.09 L911.78,606.28 L912.85,605.46 L913.91,604.65 L914.97,603.83 L916.04,603.02 L917.10,602.20 L918.16,601.39 L919.23,600.57 L920.29,599.76 L921.35,598.94 L922.41,598.13 L923.47,597.32 L924.53,596.50 L925.59,595.69 L926.65,594.87 L927.71,594.06 L928.77,593.24 L929.83,592.43 L930.89,591.61 L931.95,590.80 L933.00,589.98 L934.06,589.17 L935.12,588.35 L936.17,587.54 L937.22,586.72 L938.28,585.91 L939.33,585.09 L940.38,584.28 L941.44,583.46 L942.49,582.65 L943.54,581.83 L944.59,581.02 L945.63,580.21 L946.68,579.39 L947.73,578.58 L948.77,577.76 L949.82,576.95 L950.86,576.13 L951.91,575.32 L952.95,574.50 L953.99,573.69 L955.03,572.87 L956.07,572.06 L957.11,571.24 L958.14,570.43 L959.18,569.61 L960.22,568.80 L961.25,567.98 L962.28,567.17 L963.31,566.35 L964.35,565.54 L965.37,564.73 L966.40,563.91 L967.43,563.10 L968.46,562.28 L969.48,561.47 L970.50,560.65 L971.52,559.84 L972.55,559.02 L973.56,558.21 L974.58,557.39 L975.60,556.58 L976.61,555.76 L977.63,554.95 L978.64,554.13 L979.65,553.32 L980.66,552.50 L981.67,551.69 L982.67,550.87 L983.68,550.06 L984.68,549.24 L985.68,548.43 L986.68,547.62 L987.68,546.80 L988.68,545.99 L989.67,545.17 L990.67,544.36 L991.66,543.54 L992.65,542.73 L993.64,541.91 L994.62,541.10 L995.61,540.28 L996.59,539.47 L997.57,538.65 L998.55,537.84 L999.53,537.02 L1000.51,536.21 L1001.48,535.39 L1002.45,534.58 L1003.42,533.76 L1004.39,532.95 L1005.36,532.13 L1006.32,531.32 L1007.28,530.51 L1008.24,529.69 L1009.20,528.88 L1010.16,528.06 L1011.11,527.25 L1012.06,526.43 L1013.01,525.62 L1013.96,524.80 L1014.91,523.99 L1015.85,523.17 L1016.79,522.36 L1017.73,521.54 L1018.67,520.73 L1019.60,519.91 L1020.54,519.10 L1021.47,518.28 L1022.39,517.47 L1023.32,516.65 L1024.24,515.84 L1025.16,515.03 L1026.08,514.21 L1027.00,513.40 L1027.91,512.58 L1028.83,511.77 L1029.74,510.95 L1030.64,510.14 L1031.55,509.32 L1032.45,508.51 L1033.35,507.69 L1034.25,506.88 L1035.14,506.06 L1036.03,505.25 L1036.92,504.43 L1037.81,503.62 L1038.69,502.80 L1039.57,501.99 L1040.45,501.17 L1041.33,500.36 L1042.20,499.55 L1043.07,498.73 L1043.94,497.92 L1044.81,497.10 L1045.67,496.29 L1046.53,495.47 L1047.39,494.66 L1048.24,493.84 L1049.10,493.03 L1049.94,492.21 L1050.79,491.40 L1051.63,490.58 L1052.48,489.77 L1053.31,488.95 L1054.15,488.14 L1054.98,487.32 L1055.81,486.51 L1056.64,485.69 L1057.46,484.88 L1058.28,484.06 L1059.10,483.25 L1059.91,482.44 L1060.72,481.62 L1061.53,480.81 L1062.34,479.99 L1063.14,479.18 L1063.94,478.36 L1064.73,477.55 L1065.53,476.73 L1066.32,475.92 L1067.10,475.10 L1067.89,474.29 L1068.67,473.47 L1069.44,472.66 L1070.22,471.84 L1070.99,471.03 L1071.76,470.21 L1072.52,469.40 L1073.28,468.58 L1074.04,467.77 L1074.80,466.96 L1075.55,466.14 L1076.30,465.33 L1077.04,464.51 L1077.78,463.70 L1078.52,462.88 L1079.25,462.07 L1079.99,461.25 L1080.71,460.44 L1081.44,459.62 L1082.16,458.81 L1082.88,457.99 L1083.59,457.18 L1084.30,456.36 L1085.01,455.55 L1085.71,454.73 L1086.42,453.92 L1087.11,453.10 L1087.81,452.29 L1088.50,451.47 L1089.18,450.66 L1089.86,449.85 L1090.54,449.03 L1091.22,448.22 L1091.89,447.40 L1092.56,446.59 L1093.22,445.77 L1093.89,444.96 L1094.54,444.14 L1095.20,443.33 L1095.85,442.51 L1096.49,441.70 L1097.14,440.88 L1097.78,440.07 L1098.41,439.25 L1099.04,438.44 L1099.67,437.62 L1100.30,436.81 L1100.92,435.99 L1101.53,435.18 L1102.14,434.37 L1102.75,433.55 L1103.36,432.74 L1103.96,431.92 L1104.56,431.11 L1105.15,430.29 L1105.74,429.48 L1106.33,428.66 L1106.91,427.85 L1107.49,427.03 L1108.06,426.22 L1108.63,425.40 L1109.20,424.59 L1109.76,423.77 L1110.32,422.96 L1110.87,422.14 L1111.42,421.33 L1111.97,420.51 L1112.51,419.70 L1113.05,418.88 L1113.59,418.07 L1114.12,417.26 L1114.64,416.44 L1115.17,415.63 L1115.68,414.81 L1116.20,414.00 L1116.71,413.18 L1117.21,412.37 L1117.72,411.55 L1118.21,410.74 L1118.71,409.92 L1119.20,409.11 L1119.68,408.29 L1120.16,407.48 L1120.64,406.66 L1121.12,405.85 L1121.58,405.03 L1122.05,404.22 L1122.51,403.40 L1122.97,402.59 L1123.42,401.77 L1123.87,400.96 L1124.31,400.15 L1124.75,399.33 L1125.19,398.52 L1125.62,397.70 L1126.04,396.89 L1126.47,396.07 L1126.88,395.26 L1127.30,394.44 L1127.71,393.63 L1128.11,392.81 L1128.51,392.00 L1128.91,391.18 L1129.30,390.37 L1129.69,389.55 L1130.08,388.74 L1130.45,387.92 L1130.83,387.11 L1131.20,386.29 L1131.57,385.48 L1131.93,384.67 L1132.29,383.85 L1132.64,383.04 L1132.99,382.22 L1133.33,381.41 L1133.67,380.59 L1134.01,379.78 L1134.34,378.96 L1134.67,378.15 L1134.99,377.33 L1135.31,376.52 L1135.62,375.70 L1135.93,374.89 L1136.24,374.07 L1136.54,373.26 L1136.83,372.44 L1137.12,371.63 L1137.41,370.81 L1137.69,370.00 L1137.97,369.19 L1138.24,368.37 L1138.51,367.56 L1138.78,366.74 L1139.04,365.93 L1139.29,365.11 L1139.54,364.30 L1139.79,363.48 L1140.03,362.67 L1140.27,361.85 L1140.50,361.04 L1140.73,360.22 L1140.95,359.41 L1141.17,358.59 L1141.39,357.78 L1141.60,356.96 L1141.80,356.15 L1142.00,355.33 L1142.20,354.52 L1142.39,353.70 L1142.58,352.89 L1142.76,352.08 L1142.94,351.26 L1143.11,350.45 L1143.28,349.63 L1143.45,348.82 L1143.61,348.00 L1143.76,347.19 L1143.91,346.37 L1144.06,345.56 L1144.20,344.74 L1144.34,343.93 L1144.47,343.11 L1144.60,342.30 L1144.72,341.48 L1144.84,340.67 L1144.95,339.85 L1145.06,339.04 L1145.16,338.22 L1145.26,337.41 L1145.36,336.60 L1145.45,335.78 L1145.54,334.97 L1145.62,334.15 L1145.69,333.34 L1145.76,332.52 L1145.83,331.71 L1145.89,330.89 L1145.95,330.08 L1146.01,329.26 L1146.06,328.45 L1146.10,327.63 L1146.14,326.82 L1146.17,326.00 L1146.20,325.19 L1146.23,324.37 L1146.25,323.56 L1146.27,322.74 L1146.28,321.93 L1146.29,321.11 L1146.29,320.30 L1146.29,319.49 L1146.28,318.67 L1146.27,317.86 L1146.25,317.04 L1146.23,316.23 L1146.20,315.41 L1146.17,314.60 L1146.14,313.78 L1146.10,312.97 L1146.06,312.15 L1146.01,311.34 L1145.95,310.52 L1145.89,309.71 L1145.83,308.89 L1145.76,308.08 L1145.69,307.26 L1145.62,306.45 L1145.54,305.63 L1145.45,304.82 L1145.36,304.00 L1145.26,303.19 L1145.16,302.38 L1145.06,301.56 L1144.95,300.75 L1144.84,299.93 L1144.72,299.12 L1144.60,298.30 L1144.47,297.49 L1144.34,296.67 L1144.20,295.86 L1144.06,295.04 L1143.91,294.23 L1143.76,293.41 L1143.61,292.60 L1143.45,291.78 L1143.28,290.97 L1143.11,290.15 L1142.94,289.34 L1142.76,288.52 L1142.58,287.71 L1142.39,286.90 L1142.20,286.08 L1142.00,285.27 L1141.80,284.45 L1141.60,283.64 L1141.39,282.82 L1141.17,282.01 L1140.95,281.19 L1140.73,280.38 L1140.50,279.56 L1140.27,278.75 L1140.03,277.93 L1139.79,277.12 L1139.54,276.30 L1139.29,275.49 L1139.04,274.67 L1138.78,273.86 L1138.51,273.04 L1138.24,272.23 L1137.97,271.42 L1137.69,270.60 L1137.41,269.79 L1137.12,268.97 L1136.83,268.16 L1136.54,267.34 L1136.24,266.53 L1135.93,265.71 L1135.62,264.90 L1135.31,264.08 L1134.99,263.27 L1134.67,262.45 L1134.34,261.64 L1134.01,260.82 L1133.67,260.01 L1133.33,259.19 L1132.99,258.38 L1132.64,257.56 L1132.29,256.75 L1131.93,255.93 L1131.57,255.12 L1131.20,254.31 L1130.83,253.49 L1130.45,252.68 L1130.08,251.86 L1129.69,251.05 L1129.30,250.23 L1128.91,249.42 L1128.51,248.60 L1128.11,247.79 L1127.71,246.97 L1127.30,246.16 L1126.88,245.34 L1126.47,244.53 L1126.04,243.71 L1125.62,242.90 L1125.19,242.08 L1124.75,241.27 L1124.31,240.45 L1123.87,239.64 L1123.42,238.83 L1122.97,238.01 L1122.51,237.20 L1122.05,236.38 L1121.58,235.57 L1121.12,234.75 L1120.64,233.94 L1120.16,233.12 L1119.68,232.31 L1119.20,231.49 L1118.71,230.68 L1118.21,229.86 L1117.72,229.05 L1117.21,228.23 L1116.71,227.42 L1116.20,226.60 L1115.68,225.79 L1115.17,224.97 L1114.64,224.16 L1114.12,223.34 L1113.59,222.53 L1113.05,221.72 L1112.51,220.90 L1111.97,220.09 L1111.42,219.27 L1110.87,218.46 L1110.32,217.64 L1109.76,216.83 L1109.20,216.01 L1108.63,215.20 L1108.06,214.38 L1107.49,213.57 L1106.91,212.75 L1106.33,211.94 L1105.74,211.12 L1105.15,210.31 L1104.56,209.49 L1103.96,208.68 L1103.36,207.86 L1102.75,207.05 L1102.14,206.24 L1101.53,205.42 L1100.92,204.61 L1100.30,203.79 L1099.67,202.98 L1099.04,202.16 L1098.41,201.35 L1097.78,200.53 L1097.14,199.72 L1096.49,198.90 L1095.85,198.09 L1095.20,197.27 L1094.54,196.46 L1093.89,195.64 L1093.22,194.83 L1092.56,194.01 L1091.89,193.20 L1091.22,192.38 L1090.54,191.57 L1089.86,190.75 L1089.18,189.94 L1088.50,189.13 L1087.81,188.31 L1087.11,187.50 L1086.42,186.68 L1085.71,185.87 L1085.01,185.05 L1084.30,184.24 L1083.59,183.42 L1082.88,182.61 L1082.16,181.79 L1081.44,180.98 L1080.71,180.16 L1079.99,179.35 L1079.25,178.53 L1078.52,177.72 L1077.78,176.90 L1077.04,176.09 L1076.30,175.27 L1075.55,174.46 L1074.80,173.65 L1074.04,172.83 L1073.28,172.02 L1072.52,171.20 L1071.76,170.39 L1070.99,169.57 L1070.22,168.76 L1069.44,167.94 L1068.67,167.13 L1067.89,166.31 L1067.10,165.50 L1066.32,164.68 L1065.53,163.87 L1064.73,163.05 L1063.94,162.24 L1063.14,161.42 L1062.34,160.61 L1061.53,159.79 L1060.72,158.98 L1059.91,158.16 L1059.10,157.35 L1058.28,156.54 L1057.46,155.72 L1056.64,154.91 L1055.81,154.09 L1054.98,153.28 L1054.15,152.46 L1053.31,151.65 L1052.48,150.83 L1051.63,150.02 L1050.79,149.20 L1049.94,148.39 L1049.10,147.57 L1048.24,146.76 L1047.39,145.94 L1046.53,145.13 L1045.67,144.31 L1044.81,143.50 L1043.94,142.68 L1043.07,141.87 L1042.20,141.06 L1041.33,140.24 L1040.45,139.43 L1039.57,138.61 L1038.69,137.80 L1037.81,136.98 L1036.92,136.17 L1036.03,135.35 L1035.14,134.54 L1034.25,133.72 L1033.35,132.91 L1032.45,132.09 L1031.55,131.28 L1030.64,130.46 L1029.74,129.65 L1028.83,128.83 L1027.91,128.02 L1027.00,127.20 L1026.08,126.39 L1025.16,125.57 L1024.24,124.76 L1023.32,123.95 L1022.39,123.13 L1021.47,122.32 L1020.54,121.50 L1019.60,120.69 L1018.67,119.87 L1017.73,119.06 L1016.79,118.24 L1015.85,117.43 L1014.91,116.61 L1013.96,115.80 L1013.01,114.98 L1012.06,114.17 L1011.11,113.35 L1010.16,112.54 L1009.20,111.72 L1008.24,110.91 L1007.28,110.09 L1006.32,109.28 L1005.36,108.47 L1004.39,107.65 L1003.42,106.84 L1002.45,106.02 L1001.48,105.21 L1000.51,104.39 L999.53,103.58 L998.55,102.76 L997.57,101.95 L996.59,101.13 L995.61,100.32 L994.62,99.50 L993.64,98.69 L992.65,97.87 L991.66,97.06 L990.67,96.24 L989.67,95.43 L988.68,94.61 L987.68,93.80 L986.68,92.98 L985.68,92.17 L984.68,91.36 L983.68,90.54 L982.67,89.73 L981.67,88.91 L980.66,88.10 L979.65,87.28 L978.64,86.47 L977.63,85.65 L976.61,84.84 L975.60,84.02 L974.58,83.21 L973.56,82.39 L972.55,81.58 L971.52,80.76 L970.50,79.95 L969.48,79.13 L968.46,78.32 L967.43,77.50 L966.40,76.69 L965.37,75.88 L964.35,75.06 L963.31,74.25 L962.28,73.43 L961.25,72.62 L960.22,71.80 L959.18,70.99 L958.14,70.17 L957.11,69.36 L956.07,68.54 L955.03,67.73 L953.99,66.91 L952.95,66.10 L951.91,65.28 L950.86,64.47 L949.82,63.65 L948.77,62.84 L947.73,62.02 L946.68,61.21 L945.63,60.39 L944.59,59.58 L943.54,58.77 L942.49,57.95 L941.44,57.14 L940.38,56.32 L939.33,55.51 L938.28,54.69 L937.22,53.88 L936.17,53.06 L935.12,52.25 L934.06,51.43 L933.00,50.62 L931.95,49.80 L930.89,48.99 L929.83,48.17 L928.77,47.36 L927.71,46.54 L926.65,45.73 L925.59,44.91 L924.53,44.10 L923.47,43.29 L922.41,42.47 L921.35,41.66 L920.29,40.84 L919.23,40.03 L918.16,39.21 L917.10,38.40 L916.04,37.58 L914.97,36.77 L913.91,35.95 L912.85,35.14 L911.78,34.32 L910.72,33.51 L909.65,32.69 L908.59,31.88 L907.52,31.06 L906.46,30.25 L905.40,29.43 L904.33,28.62 L903.27,27.80 L902.20,26.99 M902.20,613.61 L903.48,612.80 L904.76,611.98 L906.03,611.17 L907.31,610.35 L908.59,609.54 L909.87,608.72 L911.14,607.91 L912.42,607.09 L913.70,606.28 L914.98,605.46 L916.25,604.65 L917.53,603.83 L918.81,603.02 L920.08,602.20 L921.36,601.39 L922.63,600.57 L923.91,599.76 L925.18,598.94 L926.45,598.13 L927.73,597.32 L929.00,596.50 L930.27,595.69 L931.55,594.87 L932.82,594.06 L934.09,593.24 L935.36,592.43 L936.63,591.61 L937.90,590.80 L939.16,589.98 L940.43,589.17 L941.70,588.35 L942.96,587.54 L944.23,586.72 L945.49,585.91 L946.76,585.09 L948.02,584.28 L949.28,583.46 L950.54,582.65 L951.80,581.83 L953.06,581.02 L954.32,580.21 L955.58,579.39 L956.83,578.58 L958.09,577.76 L959.34,576.95 L960.60,576.13 L961.85,575.32 L963.10,574.50 L964.35,573.69 L965.60,572.87 L966.84,572.06 L968.09,571.24 L969.33,570.43 L970.58,569.61 L971.82,568.80 L973.06,567.98 L974.30,567.17 L975.54,566.35 L976.77,565.54 L978.01,564.73 L979.24,563.91 L980.48,563.10 L981.71,562.28 L982.94,561.47 L984.16,560.65 L985.39,559.84 L986.61,559.02 L987.84,558.21 L989.06,557.39 L990.28,556.58 L991.50,555.76 L992.71,554.95 L993.93,554.13 L995.14,553.32 L996.35,552.50 L997.56,551.69 L998.77,550.87 L999.97,550.06 L1001.18,549.24 L1002.38,548.43 L1003.58,547.62 L1004.78,546.80 L1005.97,545.99 L1007.17,545.17 L1008.36,544.36 L1009.55,543.54 L1010.74,542.73 L1011.92,541.91 L1013.11,541.10 L1014.29,540.28 L1015.47,539.47 L1016.65,538.65 L1017.82,537.84 L1019.00,537.02 L1020.17,536.21 L1021.34,535.39 L1022.50,534.58 L1023.67,533.76 L1024.83,532.95 L1025.99,532.13 L1027.14,531.32 L1028.30,530.51 L1029.45,529.69 L1030.60,528.88 L1031.75,528.06 L1032.89,527.25 L1034.04,526.43 L1035.18,525.62 L1036.31,524.80 L1037.45,523.99 L1038.58,523.17 L1039.71,522.36 L1040.84,521.54 L1041.96,520.73 L1043.08,519.91 L1044.20,519.10 L1045.32,518.28 L1046.43,517.47 L1047.54,516.65 L1048.65,515.84 L1049.76,515.03 L1050.86,514.21 L1051.96,513.40 L1053.06,512.58 L1054.15,511.77 L1055.24,510.95 L1056.33,510.14 L1057.42,509.32 L1058.50,508.51 L1059.58,507.69 L1060.65,506.88 L1061.73,506.06 L1062.80,505.25 L1063.87,504.43 L1064.93,503.62 L1065.99,502.80 L1067.05,501.99 L1068.10,501.17 L1069.15,500.36 L1070.20,499.55 L1071.25,498.73 L1072.29,497.92 L1073.33,497.10 L1074.37,496.29 L1075.40,495.47 L1076.43,494.66 L1077.45,493.84 L1078.47,493.03 L1079.49,492.21 L1080.51,491.40 L1081.52,490.58 L1082.53,489.77 L1083.54,488.95 L1084.54,488.14 L1085.54,487.32 L1086.53,486.51 L1087.52,485.69 L1088.51,484.88 L1089.49,484.06 L1090.48,483.25 L1091.45,482.44 L1092.43,481.62 L1093.40,480.81 L1094.36,479.99 L1095.33,479.18 L1096.28,478.36 L1097.24,477.55 L1098.19,476.73 L1099.14,475.92 L1100.08,475.10 L1101.02,474.29 L1101.96,473.47 L1102.89,472.66 L1103.82,471.84 L1104.75,471.03 L1105.67,470.21 L1106.59,469.40 L1107.50,468.58 L1108.41,467.77 L1109.32,466.96 L1110.22,466.14 L1111.11,465.33 L1112.01,464.51 L1112.90,463.70 L1113.78,462.88 L1114.67,462.07 L1115.54,461.25 L1116.42,460.44 L1117.29,459.62 L1118.15,458.81 L1119.01,457.99 L1119.87,457.18 L1120.72,456.36 L1121.57,455.55 L1122.42,454.73 L1123.26,453.92 L1124.09,453.10 L1124.93,452.29 L1125.75,451.47 L1126.58,450.66 L1127.40,449.85 L1128.21,449.03 L1129.02,448.22 L1129.83,447.40 L1130.63,446.59 L1131.43,445.77 L1132.22,444.96 L1133.01,444.14 L1133.80,443.33 L1134.58,442.51 L1135.35,441.70 L1136.12,440.88 L1136.89,440.07 L1137.65,439.25 L1138.41,438.44 L1139.17,437.62 L1139.91,436.81 L1140.66,435.99 L1141.40,435.18 L1142.13,434.37 L1142.86,433.55 L1143.59,432.74 L1144.31,431.92 L1145.03,431.11 L1145.74,430.29 L1146.45,429.48 L1147.15,428.66 L1147.85,427.85 L1148.54,427.03 L1149.23,426.22 L1149.92,425.40 L1150.60,424.59 L1151.27,423.77 L1151.94,422.96 L1152.61,422.14 L1153.27,421.33 L1153.92,420.51 L1154.58,419.70 L1155.22,418.88 L1155.86,418.07 L1156.50,417.26 L1157.13,416.44 L1157.76,415.63 L1158.38,414.81 L1159.00,414.00 L1159.61,413.18 L1160.22,412.37 L1160.82,411.55 L1161.42,410.74 L1162.01,409.92 L1162.60,409.11 L1163.18,408.29 L1163.76,407.48 L1164.33,406.66 L1164.90,405.85 L1165.46,405.03 L1166.02,404.22 L1166.57,403.40 L1167.12,402.59 L1167.66,401.77 L1168.20,400.96 L1168.73,400.15 L1169.26,399.33 L1169.78,398.52 L1170.30,397.70 L1170.81,396.89 L1171.32,396.07 L1171.82,395.26 L1172.32,394.44 L1172.81,393.63 L1173.30,392.81 L1173.78,392.00 L1174.25,391.18 L1174.72,390.37 L1175.19,389.55 L1175.65,388.74 L1176.11,387.92 L1176.56,387.11 L1177.00,386.29 L1177.44,385.48 L1177.88,384.67 L1178.30,383.85 L1178.73,383.04 L1179.15,382.22 L1179.56,381.41 L1179.97,380.59 L1180.37,379.78 L1180.77,378.96 L1181.16,378.15 L1181.55,377.33 L1181.93,376.52 L1182.31,375.70 L1182.68,374.89 L1183.04,374.07 L1183.40,373.26 L1183.76,372.44 L1184.11,371.63 L1184.45,370.81 L1184.79,370.00 L1185.12,369.19 L1185.45,368.37 L1185.78,367.56 L1186.09,366.74 L1186.40,365.93 L1186.71,365.11 L1187.01,364.30 L1187.31,363.48 L1187.60,362.67 L1187.88,361.85 L1188.16,361.04 L1188.44,360.22 L1188.70,359.41 L1188.97,358.59 L1189.22,357.78 L1189.48,356.96 L1189.72,356.15 L1189.96,355.33 L1190.20,354.52 L1190.43,353.70 L1190.66,352.89 L1190.87,352.08 L1191.09,351.26 L1191.30,350.45 L1191.50,349.63 L1191.70,348.82 L1191.89,348.00 L1192.07,347.19 L1192.25,346.37 L1192.43,345.56 L1192.60,344.74 L1192.76,343.93 L1192.92,343.11 L1193.07,342.30 L1193.22,341.48 L1193.36,340.67 L1193.50,339.85 L1193.63,339.04 L1193.76,338.22 L1193.88,337.41 L1193.99,336.60 L1194.10,335.78 L1194.20,334.97 L1194.30,334.15 L1194.39,333.34 L1194.48,332.52 L1194.56,331.71 L1194.63,330.89 L1194.70,330.08 L1194.77,329.26 L1194.83,328.45 L1194.88,327.63 L1194.93,326.82 L1194.97,326.00 L1195.00,325.19 L1195.04,324.37 L1195.06,323.56 L1195.08,322.74 L1195.09,321.93 L1195.10,321.11 L1195.11,320.30 L1195.10,319.49 L1195.09,318.67 L1195.08,317.86 L1195.06,317.04 L1195.04,316.23 L1195.00,315.41 L1194.97,314.60 L1194.93,313.78 L1194.88,312.97 L1194.83,312.15 L1194.77,311.34 L1194.70,310.52 L1194.63,309.71 L1194.56,308.89 L1194.48,308.08 L1194.39,307.26 L1194.30,306.45 L1194.20,305.63 L1194.10,304.82 L1193.99,304.00 L1193.88,303.19 L1193.76,302.38 L1193.63,301.56 L1193.50,300.75 L1193.36,299.93 L1193.22,299.12 L1193.07,298.30 L1192.92,297.49 L1192.76,296.67 L1192.60,295.86 L1192.43,295.04 L1192.25,294.23 L1192.07,293.41 L1191.89,292.60 L1191.70,291.78 L1191.50,290.97 L1191.30,290.15 L1191.09,289.34 L1190.87,288.52 L1190.66,287.71 L1190.43,286.90 L1190.20,286.08 L1189.96,285.27 L1189.72,284.45 L1189.48,283.64 L1189.22,282.82 L1188.97,282.01 L1188.70,281.19 L1188.44,280.38 L1188.16,279.56 L1187.88,278.75 L1187.60,277.93 L1187.31,277.12 L1187.01,276.30 L1186.71,275.49 L1186.40,274.67 L1186.09,273.86 L1185.78,273.04 L1185.45,272.23 L1185.12,271.42 L1184.79,270.60 L1184.45,269.79 L1184.11,268.97 L1183.76,268.16 L1183.40,267.34 L1183.04,266.53 L1182.68,265.71 L1182.31,264.90 L1181.93,264.08 L1181.55,263.27 L1181.16,262.45 L1180.77,261.64 L1180.37,260.82 L1179.97,260.01 L1179.56,259.19 L1179.15,258.38 L1178.73,257.56 L1178.30,256.75 L1177.88,255.93 L1177.44,255.12 L1177.00,254.31 L1176.56,253.49 L1176.11,252.68 L1175.65,251.86 L1175.19,251.05 L1174.72,250.23 L1174.25,249.42 L1173.78,248.60 L1173.30,247.79 L1172.81,246.97 L1172.32,246.16 L1171.82,245.34 L1171.32,244.53 L1170.81,243.71 L1170.30,242.90 L1169.78,242.08 L1169.26,241.27 L1168.73,240.45 L1168.20,239.64 L1167.66,238.83 L1167.12,238.01 L1166.57,237.20 L1166.02,236.38 L1165.46,235.57 L1164.90,234.75 L1164.33,233.94 L1163.76,233.12 L1163.18,232.31 L1162.60,231.49 L1162.01,230.68 L1161.42,229.86 L1160.82,229.05 L1160.22,228.23 L1159.61,227.42 L1159.00,226.60 L1158.38,225.79 L1157.76,224.97 L1157.13,224.16 L1156.50,223.34 L1155.86,222.53 L1155.22,221.72 L1154.58,220.90 L1153.92,220.09 L1153.27,219.27 L1152.61,218.46 L1151.94,217.64 L1151.27,216.83 L1150.60,216.01 L1149.92,215.20 L1149.23,214.38 L1148.54,213.57 L1147.85,212.75 L1147.15,211.94 L1146.45,211.12 L1145.74,210.31 L1145.03,209.49 L1144.31,208.68 L1143.59,207.86 L1142.86,207.05 L1142.13,206.24 L1141.40,205.42 L1140.66,204.61 L1139.91,203.79 L1139.17,202.98 L1138.41,202.16 L1137.65,201.35 L1136.89,200.53 L1136.12,199.72 L1135.35,198.90 L1134.58,198.09 L1133.80,197.27 L1133.01,196.46 L1132.22,195.64 L1131.43,194.83 L1130.63,194.01 L1129.83,193.20 L1129.02,192.38 L1128.21,191.57 L1127.40,190.75 L1126.58,189.94 L1125.75,189.13 L1124.93,188.31 L1124.09,187.50 L1123.26,186.68 L1122.42,185.87 L1121.57,185.05 L1120.72,184.24 L1119.87,183.42 L1119.01,182.61 L1118.15,181.79 L1117.29,180.98 L1116.42,180.16 L1115.54,179.35 L1114.67,178.53 L1113.78,177.72 L1112.90,176.90 L1112.01,176.09 L1111.11,175.27 L1110.22,174.46 L1109.32,173.65 L1108.41,172.83 L1107.50,172.02 L1106.59,171.20 L1105.67,170.39 L1104.75,169.57 L1103.82,168.76 L1102.89,167.94 L1101.96,167.13 L1101.02,166.31 L1100.08,165.50 L1099.14,164.68 L1098.19,163.87 L1097.24,163.05 L1096.28,162.24 L1095.33,161.42 L1094.36,160.61 L1093.40,159.79 L1092.43,158.98 L1091.45,158.16 L1090.48,157.35 L1089.49,156.54 L1088.51,155.72 L1087.52,154.91 L1086.53,154.09 L1085.54,153.28 L1084.54,152.46 L1083.54,151.65 L1082.53,150.83 L1081.52,150.02 L1080.51,149.20 L1079.49,148.39 L1078.47,147.57 L1077.45,146.76 L1076.43,145.94 L1075.40,145.13 L1074.37,144.31 L1073.33,143.50 L1072.29,142.68 L1071.25,141.87 L1070.20,141.06 L1069.15,140.24 L1068.10,139.43 L1067.05,138.61 L1065.99,137.80 L1064.93,136.98 L1063.87,136.17 L1062.80,135.35 L1061.73,134.54 L1060.65,133.72 L1059.58,132.91 L1058.50,132.09 L1057.42,131.28 L1056.33,130.46 L1055.24,129.65 L1054.15,128.83 L1053.06,128.02 L1051.96,127.20 L1050.86,126.39 L1049.76,125.57 L1048.65,124.76 L1047.54,123.95 L1046.43,123.13 L1045.32,122.32 L1044.20,121.50 L1043.08,120.69 L1041.96,119.87 L1040.84,119.06 L1039.71,118.24 L1038.58,117.43 L1037.45,116.61 L1036.31,115.80 L1035.18,114.98 L1034.04,114.17 L1032.89,113.35 L1031.75,112.54 L1030.60,111.72 L1029.45,110.91 L1028.30,110.09 L1027.14,109.28 L1025.99,108.47 L1024.83,107.65 L1023.67,106.84 L1022.50,106.02 L1021.34,105.21 L1020.17,104.39 L1019.00,103.58 L1017.82,102.76 L1016.65,101.95 L1015.47,101.13 L1014.29,100.32 L1013.11,99.50 L1011.92,98.69 L1010.74,97.87 L1009.55,97.06 L1008.36,96.24 L1007.17,95.43 L1005.97,94.61 L1004.78,93.80 L1003.58,92.98 L1002.38,92.17 L1001.18,91.36 L999.97,90.54 L998.77,89.73 L997.56,88.91 L996.35,88.10 L995.14,87.28 L993.93,86.47 L992.71,85.65 L991.50,84.84 L990.28,84.02 L989.06,83.21 L987.84,82.39 L986.61,81.58 L985.39,80.76 L984.16,79.95 L982.94,79.13 L981.71,78.32 L980.48,77.50 L979.24,76.69 L978.01,75.88 L976.77,75.06 L975.54,74.25 L974.30,73.43 L973.06,72.62 L971.82,71.80 L970.58,70.99 L969.33,70.17 L968.09,69.36 L966.84,68.54 L965.60,67.73 L964.35,66.91 L963.10,66.10 L961.85,65.28 L960.60,64.47 L959.34,63.65 L958.09,62.84 L956.83,62.02 L955.58,61.21 L954.32,60.39 L953.06,59.58 L951.80,58.77 L950.54,57.95 L949.28,57.14 L948.02,56.32 L946.76,55.51 L945.49,54.69 L944.23,53.88 L942.96,53.06 L941.70,52.25 L940.43,51.43 L939.16,50.62 L937.90,49.80 L936.63,48.99 L935.36,48.17 L934.09,47.36 L932.82,46.54 L931.55,45.73 L930.27,44.91 L929.00,44.10 L927.73,43.29 L926.45,42.47 L925.18,41.66 L923.91,40.84 L922.63,40.03 L921.36,39.21 L920.08,38.40 L918.81,37.58 L917.53,36.77 L916.25,35.95 L914.98,35.14 L913.70,34.32 L912.42,33.51 L911.14,32.69 L909.87,31.88 L908.59,31.06 L907.31,30.25 L906.03,29.43 L904.76,28.62 L903.48,27.80 L902.20,26.99 M902.20,613.61 L903.69,612.80 L905.18,611.98 L906.67,611.17 L908.16,610.35 L909.65,609.54 L911.15,608.72 L912.64,607.91 L914.13,607.09 L915.62,606.28 L917.11,605.46 L918.60,604.65 L920.08,603.83 L921.57,603.02 L923.06,602.20 L924.55,601.39 L926.04,600.57 L927.52,599.76 L929.01,598.94 L930.50,598.13 L931.98,597.32 L933.47,596.50 L934.95,595.69 L936.44,594.87 L937.92,594.06 L939.40,593.24 L940.88,592.43 L942.37,591.61 L943.85,590.80 L945.33,589.98 L946.80,589.17 L948.28,588.35 L949.76,587.54 L951.23,586.72 L952.71,585.91 L954.18,585.09 L955.66,584.28 L957.13,583.46 L958.60,582.65 L960.07,581.83 L961.54,581.02 L963.01,580.21 L964.47,579.39 L965.94,578.58 L967.40,577.76 L968.87,576.95 L970.33,576.13 L971.79,575.32 L973.25,574.50 L974.71,573.69 L976.16,572.87 L977.62,572.06 L979.07,571.24 L980.52,570.43 L981.97,569.61 L983.42,568.80 L984.87,567.98 L986.32,567.17 L987.76,566.35 L989.20,565.54 L990.64,564.73 L992.08,563.91 L993.52,563.10 L994.96,562.28 L996.39,561.47 L997.82,560.65 L999.25,559.84 L1000.68,559.02 L1002.11,558.21 L1003.53,557.39 L1004.96,556.58 L1006.38,555.76 L1007.80,554.95 L1009.22,554.13 L1010.63,553.32 L1012.04,552.50 L1013.45,551.69 L1014.86,550.87 L1016.27,550.06 L1017.67,549.24 L1019.08,548.43 L1020.48,547.62 L1021.87,546.80 L1023.27,545.99 L1024.66,545.17 L1026.05,544.36 L1027.44,543.54 L1028.83,542.73 L1030.21,541.91 L1031.59,541.10 L1032.97,540.28 L1034.35,539.47 L1035.72,538.65 L1037.09,537.84 L1038.46,537.02 L1039.83,536.21 L1041.19,535.39 L1042.55,534.58 L1043.91,533.76 L1045.27,532.95 L1046.62,532.13 L1047.97,531.32 L1049.32,530.51 L1050.66,529.69 L1052.00,528.88 L1053.34,528.06 L1054.68,527.25 L1056.01,526.43 L1057.34,525.62 L1058.67,524.80 L1059.99,523.99 L1061.31,523.17 L1062.63,522.36 L1063.94,521.54 L1065.26,520.73 L1066.56,519.91 L1067.87,519.10 L1069.17,518.28 L1070.47,517.47 L1071.77,516.65 L1073.06,515.84 L1074.35,515.03 L1075.64,514.21 L1076.92,513.40 L1078.20,512.58 L1079.48,511.77 L1080.75,510.95 L1082.02,510.14 L1083.29,509.32 L1084.55,508.51 L1085.81,507.69 L1087.06,506.88 L1088.32,506.06 L1089.56,505.25 L1090.81,504.43 L1092.05,503.62 L1093.29,502.80 L1094.52,501.99 L1095.75,501.17 L1096.98,500.36 L1098.20,499.55 L1099.42,498.73 L1100.64,497.92 L1101.85,497.10 L1103.06,496.29 L1104.26,495.47 L1105.46,494.66 L1106.66,493.84 L1107.85,493.03 L1109.04,492.21 L1110.23,491.40 L1111.41,490.58 L1112.59,489.77 L1113.76,488.95 L1114.93,488.14 L1116.09,487.32 L1117.25,486.51 L1118.41,485.69 L1119.56,484.88 L1120.71,484.06 L1121.85,483.25 L1123.00,482.44 L1124.13,481.62 L1125.26,480.81 L1126.39,479.99 L1127.51,479.18 L1128.63,478.36 L1129.75,477.55 L1130.86,476.73 L1131.96,475.92 L1133.06,475.10 L1134.16,474.29 L1135.25,473.47 L1136.34,472.66 L1137.43,471.84 L1138.51,471.03 L1139.58,470.21 L1140.65,469.40 L1141.72,468.58 L1142.78,467.77 L1143.83,466.96 L1144.89,466.14 L1145.93,465.33 L1146.98,464.51 L1148.01,463.70 L1149.05,462.88 L1150.08,462.07 L1151.10,461.25 L1152.12,460.44 L1153.13,459.62 L1154.14,458.81 L1155.15,457.99 L1156.15,457.18 L1157.14,456.36 L1158.14,455.55 L1159.12,454.73 L1160.10,453.92 L1161.08,453.10 L1162.05,452.29 L1163.01,451.47 L1163.97,450.66 L1164.93,449.85 L1165.88,449.03 L1166.83,448.22 L1167.77,447.40 L1168.70,446.59 L1169.63,445.77 L1170.56,444.96 L1171.48,444.14 L1172.40,443.33 L1173.31,442.51 L1174.21,441.70 L1175.11,440.88 L1176.01,440.07 L1176.90,439.25 L1177.78,438.44 L1178.66,437.62 L1179.53,436.81 L1180.40,435.99 L1181.26,435.18 L1182.12,434.37 L1182.98,433.55 L1183.82,432.74 L1184.66,431.92 L1185.50,431.11 L1186.33,430.29 L1187.16,429.48 L1187.98,428.66 L1188.79,427.85 L1189.60,427.03 L1190.41,426.22 L1191.20,425.40 L1192.00,424.59 L1192.78,423.77 L1193.57,422.96 L1194.34,422.14 L1195.11,421.33 L1195.88,420.51 L1196.64,419.70 L1197.39,418.88 L1198.14,418.07 L1198.88,417.26 L1199.62,416.44 L1200.35,415.63 L1201.08,414.81 L1201.80,414.00 L1202.51,413.18 L1203.22,412.37 L1203.92,411.55 L1204.62,410.74 L1205.31,409.92 L1206.00,409.11 L1206.68,408.29 L1207.35,407.48 L1208.02,406.66 L1208.68,405.85 L1209.34,405.03 L1209.99,404.22 L1210.63,403.40 L1211.27,402.59 L1211.91,401.77 L1212.53,400.96 L1213.15,400.15 L1213.77,399.33 L1214.38,398.52 L1214.98,397.70 L1215.58,396.89 L1216.17,396.07 L1216.76,395.26 L1217.34,394.44 L1217.91,393.63 L1218.48,392.81 L1219.04,392.00 L1219.60,391.18 L1220.14,390.37 L1220.69,389.55 L1221.23,388.74 L1221.76,387.92 L1222.28,387.11 L1222.80,386.29 L1223.31,385.48 L1223.82,384.67 L1224.32,383.85 L1224.82,383.04 L1225.30,382.22 L1225.79,381.41 L1226.26,380.59 L1226.73,379.78 L1227.20,378.96 L1227.66,378.15 L1228.11,377.33 L1228.55,376.52 L1228.99,375.70 L1229.42,374.89 L1229.85,374.07 L1230.27,373.26 L1230.68,372.44 L1231.09,371.63 L1231.49,370.81 L1231.89,370.00 L1232.28,369.19 L1232.66,368.37 L1233.04,367.56 L1233.41,366.74 L1233.77,365.93 L1234.13,365.11 L1234.48,364.30 L1234.83,363.48 L1235.16,362.67 L1235.50,361.85 L1235.82,361.04 L1236.14,360.22 L1236.46,359.41 L1236.76,358.59 L1237.06,357.78 L1237.36,356.96 L1237.64,356.15 L1237.93,355.33 L1238.20,354.52 L1238.47,353.70 L1238.73,352.89 L1238.99,352.08 L1239.24,351.26 L1239.48,350.45 L1239.72,349.63 L1239.95,348.82 L1240.17,348.00 L1240.39,347.19 L1240.60,346.37 L1240.80,345.56 L1241.00,344.74 L1241.19,343.93 L1241.38,343.11 L1241.55,342.30 L1241.73,341.48 L1241.89,340.67 L1242.05,339.85 L1242.20,339.04 L1242.35,338.22 L1242.49,337.41 L1242.62,336.60 L1242.75,335.78 L1242.87,334.97 L1242.98,334.15 L1243.09,333.34 L1243.19,332.52 L1243.29,331.71 L1243.37,330.89 L1243.45,330.08 L1243.53,329.26 L1243.60,328.45 L1243.66,327.63 L1243.71,326.82 L1243.76,326.00 L1243.81,325.19 L1243.84,324.37 L1243.87,323.56 L1243.89,322.74 L1243.91,321.93 L1243.92,321.11 L1243.92,320.30 L1243.92,319.49 L1243.91,318.67 L1243.89,317.86 L1243.87,317.04 L1243.84,316.23 L1243.81,315.41 L1243.76,314.60 L1243.71,313.78 L1243.66,312.97 L1243.60,312.15 L1243.53,311.34 L1243.45,310.52 L1243.37,309.71 L1243.29,308.89 L1243.19,308.08 L1243.09,307.26 L1242.98,306.45 L1242.87,305.63 L1242.75,304.82 L1242.62,304.00 L1242.49,303.19 L1242.35,302.38 L1242.20,301.56 L1242.05,300.75 L1241.89,299.93 L1241.73,299.12 L1241.55,298.30 L1241.38,297.49 L1241.19,296.67 L1241.00,295.86 L1240.80,295.04 L1240.60,294.23 L1240.39,293.41 L1240.17,292.60 L1239.95,291.78 L1239.72,290.97 L1239.48,290.15 L1239.24,289.34 L1238.99,288.52 L1238.73,287.71 L1238.47,286.90 L1238.20,286.08 L1237.93,285.27 L1237.64,284.45 L1237.36,283.64 L1237.06,282.82 L1236.76,282.01 L1236.46,281.19 L1236.14,280.38 L1235.82,279.56 L1235.50,278.75 L1235.16,277.93 L1234.83,277.12 L1234.48,276.30 L1234.13,275.49 L1233.77,274.67 L1233.41,273.86 L1233.04,273.04 L1232.66,272.23 L1232.28,271.42 L1231.89,270.60 L1231.49,269.79 L1231.09,268.97 L1230.68,268.16 L1230.27,267.34 L1229.85,266.53 L1229.42,265.71 L1228.99,264.90 L1228.55,264.08 L1228.11,263.27 L1227.66,262.45 L1227.20,261.64 L1226.73,260.82 L1226.26,260.01 L1225.79,259.19 L1225.30,258.38 L1224.82,257.56 L1224.32,256.75 L1223.82,255.93 L1223.31,255.12 L1222.80,254.31 L1222.28,253.49 L1221.76,252.68 L1221.23,251.86 L1220.69,251.05 L1220.14,250.23 L1219.60,249.42 L1219.04,248.60 L1218.48,247.79 L1217.91,246.97 L1217.34,246.16 L1216.76,245.34 L1216.17,244.53 L1215.58,243.71 L1214.98,242.90 L1214.38,242.08 L1213.77,241.27 L1213.15,240.45 L1212.53,239.64 L1211.91,238.83 L1211.27,238.01 L1210.63,237.20 L1209.99,236.38 L1209.34,235.57 L1208.68,234.75 L1208.02,233.94 L1207.35,233.12 L1206.68,232.31 L1206.00,231.49 L1205.31,230.68 L1204.62,229.86 L1203.92,229.05 L1203.22,228.23 L1202.51,227.42 L1201.80,226.60 L1201.08,225.79 L1200.35,224.97 L1199.62,224.16 L1198.88,223.34 L1198.14,222.53 L1197.39,221.72 L1196.64,220.90 L1195.88,220.09 L1195.11,219.27 L1194.34,218.46 L1193.57,217.64 L1192.78,216.83 L1192.00,216.01 L1191.20,215.20 L1190.41,214.38 L1189.60,213.57 L1188.79,212.75 L1187.98,211.94 L1187.16,211.12 L1186.33,210.31 L1185.50,209.49 L1184.66,208.68 L1183.82,207.86 L1182.98,207.05 L1182.12,206.24 L1181.26,205.42 L1180.40,204.61 L1179.53,203.79 L1178.66,202.98 L1177.78,202.16 L1176.90,201.35 L1176.01,200.53 L1175.11,199.72 L1174.21,198.90 L1173.31,198.09 L1172.40,197.27 L1171.48,196.46 L1170.56,195.64 L1169.63,194.83 L1168.70,194.01 L1167.77,193.20 L1166.83,192.38 L1165.88,191.57 L1164.93,190.75 L1163.97,189.94 L1163.01,189.13 L1162.05,188.31 L1161.08,187.50 L1160.10,186.68 L1159.12,185.87 L1158.14,185.05 L1157.14,184.24 L1156.15,183.42 L1155.15,182.61 L1154.14,181.79 L1153.13,180.98 L1152.12,180.16 L1151.10,179.35 L1150.08,178.53 L1149.05,177.72 L1148.01,176.90 L1146.98,176.09 L1145.93,175.27 L1144.89,174.46 L1143.83,173.65 L1142.78,172.83 L1141.72,172.02 L1140.65,171.20 L1139.58,170.39 L1138.51,169.57 L1137.43,168.76 L1136.34,167.94 L1135.25,167.13 L1134.16,166.31 L1133.06,165.50 L1131.96,164.68 L1130.86,163.87 L1129.75,163.05 L1128.63,162.24 L1127.51,161.42 L1126.39,160.61 L1125.26,159.79 L1124.13,158.98 L1123.00,158.16 L1121.85,157.35 L1120.71,156.54 L1119.56,155.72 L1118.41,154.91 L1117.25,154.09 L1116.09,153.28 L1114.93,152.46 L1113.76,151.65 L1112.59,150.83 L1111.41,150.02 L1110.23,149.20 L1109.04,148.39 L1107.85,147.57 L1106.66,146.76 L1105.46,145.94 L1104.26,145.13 L1103.06,144.31 L1101.85,143.50 L1100.64,142.68 L1099.42,141.87 L1098.20,141.06 L1096.98,140.24 L1095.75,139.43 L1094.52,138.61 L1093.29,137.80 L1092.05,136.98 L1090.81,136.17 L1089.56,135.35 L1088.32,134.54 L1087.06,133.72 L1085.81,132.91 L1084.55,132.09 L1083.29,131.28 L1082.02,130.46 L1080.75,129.65 L1079.48,128.83 L1078.20,128.02 L1076.92,127.20 L1075.64,126.39 L1074.35,125.57 L1073.06,124.76 L1071.77,123.95 L1070.47,123.13 L1069.17,122.32 L1067.87,121.50 L1066.56,120.69 L1065.26,119.87 L1063.94,119.06 L1062.63,118.24 L1061.31,117.43 L1059.99,116.61 L1058.67,115.80 L1057.34,114.98 L1056.01,114.17 L1054.68,113.35 L1053.34,112.54 L1052.00,111.72 L1050.66,110.91 L1049.32,110.09 L1047.97,109.28 L1046.62,108.47 L1045.27,107.65 L1043.91,106.84 L1042.55,106.02 L1041.19,105.21 L1039.83,104.39 L1038.46,103.58 L1037.09,102.76 L1035.72,101.95 L1034.35,101.13 L1032.97,100.32 L1031.59,99.50 L1030.21,98.69 L1028.83,97.87 L1027.44,97.06 L1026.05,96.24 L1024.66,95.43 L1023.27,94.61 L1021.87,93.80 L1020.48,92.98 L1019.08,92.17 L1017.67,91.36 L1016.27,90.54 L1014.86,89.73 L1013.45,88.91 L1012.04,88.10 L1010.63,87.28 L1009.22,86.47 L1007.80,85.65 L1006.38,84.84 L1004.96,84.02 L1003.53,83.21 L1002.11,82.39 L1000.68,81.58 L999.25,80.76 L997.82,79.95 L996.39,79.13 L994.96,78.32 L993.52,77.50 L992.08,76.69 L990.64,75.88 L989.20,75.06 L987.76,74.25 L986.32,73.43 L984.87,72.62 L983.42,71.80 L981.97,70.99 L980.52,70.17 L979.07,69.36 L977.62,68.54 L976.16,67.73 L974.71,66.91 L973.25,66.10 L971.79,65.28 L970.33,64.47 L968.87,63.65 L967.40,62.84 L965.94,62.02 L964.47,61.21 L963.01,60.39 L961.54,59.58 L960.07,58.77 L958.60,57.95 L957.13,57.14 L955.66,56.32 L954.18,55.51 L952.71,54.69 L951.23,53.88 L949.76,53.06 L948.28,52.25 L946.80,51.43 L945.33,50.62 L943.85,49.80 L942.37,48.99 L940.88,48.17 L939.40,47.36 L937.92,46.54 L936.44,45.73 L934.95,44.91 L933.47,44.10 L931.98,43.29 L930.50,42.47 L929.01,41.66 L927.52,40.84 L926.04,40.03 L924.55,39.21 L923.06,38.40 L921.57,37.58 L920.08,36.77 L918.60,35.95 L917.11,35.14 L915.62,34.32 L914.13,33.51 L912.64,32.69 L911.15,31.88 L909.65,31.06 L908.16,30.25 L906.67,29.43 L905.18,28.62 L903.69,27.80 L902.20,26.99 M902.20,613.61 L903.90,612.80 L905.61,611.98 L907.31,611.17 L909.02,610.35 L910.72,609.54 L912.42,608.72 L914.13,607.91 L915.83,607.09 L917.53,606.28 L919.24,605.46 L920.94,604.65 L922.64,603.83 L924.34,603.02 L926.04,602.20 L927.74,601.39 L929.44,600.57 L931.14,599.76 L932.84,598.94 L934.54,598.13 L936.24,597.32 L937.94,596.50 L939.63,595.69 L941.33,594.87 L943.02,594.06 L944.72,593.24 L946.41,592.43 L948.10,591.61 L949.79,590.80 L951.49,589.98 L953.18,589.17 L954.86,588.35 L956.55,587.54 L958.24,586.72 L959.93,585.91 L961.61,585.09 L963.29,584.28 L964.98,583.46 L966.66,582.65 L968.34,581.83 L970.02,581.02 L971.69,580.21 L973.37,579.39 L975.05,578.58 L976.72,577.76 L978.39,576.95 L980.06,576.13 L981.73,575.32 L983.40,574.50 L985.06,573.69 L986.73,572.87 L988.39,572.06 L990.05,571.24 L991.71,570.43 L993.37,569.61 L995.03,568.80 L996.68,567.98 L998.33,567.17 L999.98,566.35 L1001.63,565.54 L1003.28,564.73 L1004.92,563.91 L1006.57,563.10 L1008.21,562.28 L1009.85,561.47 L1011.48,560.65 L1013.12,559.84 L1014.75,559.02 L1016.38,558.21 L1018.01,557.39 L1019.64,556.58 L1021.26,555.76 L1022.88,554.95 L1024.50,554.13 L1026.12,553.32 L1027.73,552.50 L1029.35,551.69 L1030.96,550.87 L1032.56,550.06 L1034.17,549.24 L1035.77,548.43 L1037.37,547.62 L1038.97,546.80 L1040.56,545.99 L1042.16,545.17 L1043.75,544.36 L1045.33,543.54 L1046.92,542.73 L1048.50,541.91 L1050.08,541.10 L1051.65,540.28 L1053.23,539.47 L1054.80,538.65 L1056.36,537.84 L1057.93,537.02 L1059.49,536.21 L1061.05,535.39 L1062.60,534.58 L1064.15,533.76 L1065.70,532.95 L1067.25,532.13 L1068.79,531.32 L1070.33,530.51 L1071.87,529.69 L1073.40,528.88 L1074.93,528.06 L1076.46,527.25 L1077.98,526.43 L1079.50,525.62 L1081.02,524.80 L1082.53,523.99 L1084.04,523.17 L1085.55,522.36 L1087.05,521.54 L1088.55,520.73 L1090.05,519.91 L1091.54,519.10 L1093.03,518.28 L1094.51,517.47 L1095.99,516.65 L1097.47,515.84 L1098.94,515.03 L1100.41,514.21 L1101.88,513.40 L1103.34,512.58 L1104.80,511.77 L1106.26,510.95 L1107.71,510.14 L1109.15,509.32 L1110.60,508.51 L1112.04,507.69 L1113.47,506.88 L1114.90,506.06 L1116.33,505.25 L1117.75,504.43 L1119.17,503.62 L1120.59,502.80 L1122.00,501.99 L1123.40,501.17 L1124.81,500.36 L1126.20,499.55 L1127.60,498.73 L1128.99,497.92 L1130.37,497.10 L1131.75,496.29 L1133.13,495.47 L1134.50,494.66 L1135.87,493.84 L1137.23,493.03 L1138.59,492.21 L1139.95,491.40 L1141.30,490.58 L1142.64,489.77 L1143.98,488.95 L1145.32,488.14 L1146.65,487.32 L1147.97,486.51 L1149.30,485.69 L1150.61,484.88 L1151.93,484.06 L1153.23,483.25 L1154.54,482.44 L1155.84,481.62 L1157.13,480.81 L1158.42,479.99 L1159.70,479.18 L1160.98,478.36 L1162.25,477.55 L1163.52,476.73 L1164.79,475.92 L1166.04,475.10 L1167.30,474.29 L1168.55,473.47 L1169.79,472.66 L1171.03,471.84 L1172.26,471.03 L1173.49,470.21 L1174.72,469.40 L1175.93,468.58 L1177.15,467.77 L1178.35,466.96 L1179.56,466.14 L1180.75,465.33 L1181.94,464.51 L1183.13,463.70 L1184.31,462.88 L1185.49,462.07 L1186.66,461.25 L1187.82,460.44 L1188.98,459.62 L1190.14,458.81 L1191.28,457.99 L1192.43,457.18 L1193.57,456.36 L1194.70,455.55 L1195.82,454.73 L1196.94,453.92 L1198.06,453.10 L1199.17,452.29 L1200.27,451.47 L1201.37,450.66 L1202.46,449.85 L1203.55,449.03 L1204.63,448.22 L1205.71,447.40 L1206.78,446.59 L1207.84,445.77 L1208.90,444.96 L1209.95,444.14 L1211.00,443.33 L1212.04,442.51 L1213.07,441.70 L1214.10,440.88 L1215.12,440.07 L1216.14,439.25 L1217.15,438.44 L1218.15,437.62 L1219.15,436.81 L1220.14,435.99 L1221.13,435.18 L1222.11,434.37 L1223.09,433.55 L1224.05,432.74 L1225.02,431.92 L1225.97,431.11 L1226.92,430.29 L1227.87,429.48 L1228.80,428.66 L1229.73,427.85 L1230.66,427.03 L1231.58,426.22 L1232.49,425.40 L1233.40,424.59 L1234.30,423.77 L1235.19,422.96 L1236.08,422.14 L1236.96,421.33 L1237.83,420.51 L1238.70,419.70 L1239.56,418.88 L1240.42,418.07 L1241.27,417.26 L1242.11,416.44 L1242.94,415.63 L1243.77,414.81 L1244.60,414.00 L1245.41,413.18 L1246.22,412.37 L1247.03,411.55 L1247.82,410.74 L1248.61,409.92 L1249.40,409.11 L1250.17,408.29 L1250.94,407.48 L1251.71,406.66 L1252.46,405.85 L1253.22,405.03 L1253.96,404.22 L1254.70,403.40 L1255.43,402.59 L1256.15,401.77 L1256.87,400.96 L1257.58,400.15 L1258.28,399.33 L1258.98,398.52 L1259.67,397.70 L1260.35,396.89 L1261.02,396.07 L1261.69,395.26 L1262.36,394.44 L1263.01,393.63 L1263.66,392.81 L1264.30,392.00 L1264.94,391.18 L1265.57,390.37 L1266.19,389.55 L1266.80,388.74 L1267.41,387.92 L1268.01,387.11 L1268.60,386.29 L1269.19,385.48 L1269.77,384.67 L1270.34,383.85 L1270.90,383.04 L1271.46,382.22 L1272.01,381.41 L1272.56,380.59 L1273.10,379.78 L1273.63,378.96 L1274.15,378.15 L1274.66,377.33 L1275.17,376.52 L1275.68,375.70 L1276.17,374.89 L1276.66,374.07 L1277.14,373.26 L1277.61,372.44 L1278.08,371.63 L1278.54,370.81 L1278.99,370.00 L1279.43,369.19 L1279.87,368.37 L1280.30,367.56 L1280.72,366.74 L1281.14,365.93 L1281.55,365.11 L1281.95,364.30 L1282.34,363.48 L1282.73,362.67 L1283.11,361.85 L1283.48,361.04 L1283.85,360.22 L1284.21,359.41 L1284.56,358.59 L1284.90,357.78 L1285.24,356.96 L1285.56,356.15 L1285.89,355.33 L1286.20,354.52 L1286.51,353.70 L1286.81,352.89 L1287.10,352.08 L1287.38,351.26 L1287.66,350.45 L1287.93,349.63 L1288.19,348.82 L1288.45,348.00 L1288.70,347.19 L1288.94,346.37 L1289.17,345.56 L1289.40,344.74 L1289.62,343.93 L1289.83,343.11 L1290.03,342.30 L1290.23,341.48 L1290.42,340.67 L1290.60,339.85 L1290.78,339.04 L1290.94,338.22 L1291.10,337.41 L1291.25,336.60 L1291.40,335.78 L1291.54,334.97 L1291.67,334.15 L1291.79,333.34 L1291.90,332.52 L1292.01,331.71 L1292.11,330.89 L1292.20,330.08 L1292.29,329.26 L1292.37,328.45 L1292.44,327.63 L1292.50,326.82 L1292.56,326.00 L1292.61,325.19 L1292.65,324.37 L1292.68,323.56 L1292.71,322.74 L1292.73,321.93 L1292.74,321.11 L1292.74,320.30 L1292.74,319.49 L1292.73,318.67 L1292.71,317.86 L1292.68,317.04 L1292.65,316.23 L1292.61,315.41 L1292.56,314.60 L1292.50,313.78 L1292.44,312.97 L1292.37,312.15 L1292.29,311.34 L1292.20,310.52 L1292.11,309.71 L1292.01,308.89 L1291.90,308.08 L1291.79,307.26 L1291.67,306.45 L1291.54,305.63 L1291.40,304.82 L1291.25,304.00 L1291.10,303.19 L1290.94,302.38 L1290.78,301.56 L1290.60,300.75 L1290.42,299.93 L1290.23,299.12 L1290.03,298.30 L1289.83,297.49 L1289.62,296.67 L1289.40,295.86 L1289.17,295.04 L1288.94,294.23 L1288.70,293.41 L1288.45,292.60 L1288.19,291.78 L1287.93,290.97 L1287.66,290.15 L1287.38,289.34 L1287.10,288.52 L1286.81,287.71 L1286.51,286.90 L1286.20,286.08 L1285.89,285.27 L1285.56,284.45 L1285.24,283.64 L1284.90,282.82 L1284.56,282.01 L1284.21,281.19 L1283.85,280.38 L1283.48,279.56 L1283.11,278.75 L1282.73,277.93 L1282.34,277.12 L1281.95,276.30 L1281.55,275.49 L1281.14,274.67 L1280.72,273.86 L1280.30,273.04 L1279.87,272.23 L1279.43,271.42 L1278.99,270.60 L1278.54,269.79 L1278.08,268.97 L1277.61,268.16 L1277.14,267.34 L1276.66,266.53 L1276.17,265.71 L1275.68,264.90 L1275.17,264.08 L1274.66,263.27 L1274.15,262.45 L1273.63,261.64 L1273.10,260.82 L1272.56,260.01 L1272.01,259.19 L1271.46,258.38 L1270.90,257.56 L1270.34,256.75 L1269.77,255.93 L1269.19,255.12 L1268.60,254.31 L1268.01,253.49 L1267.41,252.68 L1266.80,251.86 L1266.19,251.05 L1265.57,250.23 L1264.94,249.42 L1264.30,248.60 L1263.66,247.79 L1263.01,246.97 L1262.36,246.16 L1261.69,245.34 L1261.02,244.53 L1260.35,243.71 L1259.67,242.90 L1258.98,242.08 L1258.28,241.27 L1257.58,240.45 L1256.87,239.64 L1256.15,238.83 L1255.43,238.01 L1254.70,237.20 L1253.96,236.38 L1253.22,235.57 L1252.46,234.75 L1251.71,233.94 L1250.94,233.12 L1250.17,232.31 L1249.40,231.49 L1248.61,230.68 L1247.82,229.86 L1247.03,229.05 L1246.22,228.23 L1245.41,227.42 L1244.60,226.60 L1243.77,225.79 L1242.94,224.97 L1242.11,224.16 L1241.27,223.34 L1240.42,222.53 L1239.56,221.72 L1238.70,220.90 L1237.83,220.09 L1236.96,219.27 L1236.08,218.46 L1235.19,217.64 L1234.30,216.83 L1233.40,216.01 L1232.49,215.20 L1231.58,214.38 L1230.66,213.57 L1229.73,212.75 L1228.80,211.94 L1227.87,211.12 L1226.92,210.31 L1225.97,209.49 L1225.02,208.68 L1224.05,207.86 L1223.09,207.05 L1222.11,206.24 L1221.13,205.42 L1220.14,204.61 L1219.15,203.79 L1218.15,202.98 L1217.15,202.16 L1216.14,201.35 L1215.12,200.53 L1214.10,199.72 L1213.07,198.90 L1212.04,198.09 L1211.00,197.27 L1209.95,196.46 L1208.90,195.64 L1207.84,194.83 L1206.78,194.01 L1205.71,193.20 L1204.63,192.38 L1203.55,191.57 L1202.46,190.75 L1201.37,189.94 L1200.27,189.13 L1199.17,188.31 L1198.06,187.50 L1196.94,186.68 L1195.82,185.87 L1194.70,185.05 L1193.57,184.24 L1192.43,183.42 L1191.28,182.61 L1190.14,181.79 L1188.98,180.98 L1187.82,180.16 L1186.66,179.35 L1185.49,178.53 L1184.31,177.72 L1183.13,176.90 L1181.94,176.09 L1180.75,175.27 L1179.56,174.46 L1178.35,173.65 L1177.15,172.83 L1175.93,172.02 L1174.72,171.20 L1173.49,170.39 L1172.26,169.57 L1171.03,168.76 L1169.79,167.94 L1168.55,167.13 L1167.30,166.31 L1166.04,165.50 L1164.79,164.68 L1163.52,163.87 L1162.25,163.05 L1160.98,162.24 L1159.70,161.42 L1158.42,160.61 L1157.13,159.79 L1155.84,158.98 L1154.54,158.16 L1153.23,157.35 L1151.93,156.54 L1150.61,155.72 L1149.30,154.91 L1147.97,154.09 L1146.65,153.28 L1145.32,152.46 L1143.98,151.65 L1142.64,150.83 L1141.30,150.02 L1139.95,149.20 L1138.59,148.39 L1137.23,147.57 L1135.87,146.76 L1134.50,145.94 L1133.13,145.13 L1131.75,144.31 L1130.37,143.50 L1128.99,142.68 L1127.60,141.87 L1126.20,141.06 L1124.81,140.24 L1123.40,139.43 L1122.00,138.61 L1120.59,137.80 L1119.17,136.98 L1117.75,136.17 L1116.33,135.35 L1114.90,134.54 L1113.47,133.72 L1112.04,132.91 L1110.60,132.09 L1109.15,131.28 L1107.71,130.46 L1106.26,129.65 L1104.80,128.83 L1103.34,128.02 L1101.88,127.20 L1100.41,126.39 L1098.94,125.57 L1097.47,124.76 L1095.99,123.95 L1094.51,123.13 L1093.03,122.32 L1091.54,121.50 L1090.05,120.69 L1088.55,119.87 L1087.05,119.06 L1085.55,118.24 L1084.04,117.43 L1082.53,116.61 L1081.02,115.80 L1079.50,114.98 L1077.98,114.17 L1076.46,113.35 L1074.93,112.54 L1073.40,111.72 L1071.87,110.91 L1070.33,110.09 L1068.79,109.28 L1067.25,108.47 L1065.70,107.65 L1064.15,106.84 L1062.60,106.02 L1061.05,105.21 L1059.49,104.39 L1057.93,103.58 L1056.36,102.76 L1054.80,101.95 L1053.23,101.13 L1051.65,100.32 L1050.08,99.50 L1048.50,98.69 L1046.92,97.87 L1045.33,97.06 L1043.75,96.24 L1042.16,95.43 L1040.56,94.61 L1038.97,93.80 L1037.37,92.98 L1035.77,92.17 L1034.17,91.36 L1032.56,90.54 L1030.96,89.73 L1029.35,88.91 L1027.73,88.10 L1026.12,87.28 L1024.50,86.47 L1022.88,85.65 L1021.26,84.84 L1019.64,84.02 L1018.01,83.21 L1016.38,82.39 L1014.75,81.58 L1013.12,80.76 L1011.48,79.95 L1009.85,79.13 L1008.21,78.32 L1006.57,77.50 L1004.92,76.69 L1003.28,75.88 L1001.63,75.06 L999.98,74.25 L998.33,73.43 L996.68,72.62 L995.03,71.80 L993.37,70.99 L991.71,70.17 L990.05,69.36 L988.39,68.54 L986.73,67.73 L985.06,66.91 L983.40,66.10 L981.73,65.28 L980.06,64.47 L978.39,63.65 L976.72,62.84 L975.05,62.02 L973.37,61.21 L971.69,60.39 L970.02,59.58 L968.34,58.77 L966.66,57.95 L964.98,57.14 L963.29,56.32 L961.61,55.51 L959.93,54.69 L958.24,53.88 L956.55,53.06 L954.86,52.25 L953.18,51.43 L951.49,50.62 L949.79,49.80 L948.10,48.99 L946.41,48.17 L944.72,47.36 L943.02,46.54 L941.33,45.73 L939.63,44.91 L937.94,44.10 L936.24,43.29 L934.54,42.47 L932.84,41.66 L931.14,40.84 L929.44,40.03 L927.74,39.21 L926.04,38.40 L924.34,37.58 L922.64,36.77 L920.94,35.95 L919.24,35.14 L917.53,34.32 L915.83,33.51 L914.13,32.69 L912.42,31.88 L910.72,31.06 L909.02,30.25 L907.31,29.43 L905.61,28.62 L903.90,27.80 L902.20,26.99 M902.20,613.61 L904.12,612.80 L906.03,611.98 L907.95,611.17 L909.87,610.35 L911.78,609.54 L913.70,608.72 L915.62,607.91 L917.53,607.09 L919.45,606.28 L921.36,605.46 L923.28,604.65 L925.19,603.83 L927.11,603.02 L929.02,602.20 L930.94,601.39 L932.85,600.57 L934.76,599.76 L936.67,598.94 L938.58,598.13 L940.49,597.32 L942.40,596.50 L944.31,595.69 L946.22,594.87 L948.13,594.06 L950.03,593.24 L951.94,592.43 L953.84,591.61 L955.74,590.80 L957.65,589.98 L959.55,589.17 L961.45,588.35 L963.35,587.54 L965.24,586.72 L967.14,585.91 L969.04,585.09 L970.93,584.28 L972.82,583.46 L974.71,582.65 L976.60,581.83 L978.49,581.02 L980.38,580.21 L982.27,579.39 L984.15,578.58 L986.03,577.76 L987.91,576.95 L989.79,576.13 L991.67,575.32 L993.55,574.50 L995.42,573.69 L997.29,572.87 L999.17,572.06 L1001.03,571.24 L1002.90,570.43 L1004.77,569.61 L1006.63,568.80 L1008.49,567.98 L1010.35,567.17 L1012.21,566.35 L1014.06,565.54 L1015.91,564.73 L1017.76,563.91 L1019.61,563.10 L1021.46,562.28 L1023.30,561.47 L1025.14,560.65 L1026.98,559.84 L1028.82,559.02 L1030.66,558.21 L1032.49,557.39 L1034.32,556.58 L1036.14,555.76 L1037.97,554.95 L1039.79,554.13 L1041.61,553.32 L1043.43,552.50 L1045.24,551.69 L1047.05,550.87 L1048.86,550.06 L1050.67,549.24 L1052.47,548.43 L1054.27,547.62 L1056.07,546.80 L1057.86,545.99 L1059.65,545.17 L1061.44,544.36 L1063.23,543.54 L1065.01,542.73 L1066.79,541.91 L1068.56,541.10 L1070.33,540.28 L1072.10,539.47 L1073.87,538.65 L1075.63,537.84 L1077.39,537.02 L1079.15,536.21 L1080.90,535.39 L1082.65,534.58 L1084.40,533.76 L1086.14,532.95 L1087.88,532.13 L1089.62,531.32 L1091.35,530.51 L1093.08,529.69 L1094.80,528.88 L1096.52,528.06 L1098.24,527.25 L1099.95,526.43 L1101.66,525.62 L1103.37,524.80 L1105.07,523.99 L1106.77,523.17 L1108.47,522.36 L1110.16,521.54 L1111.84,520.73 L1113.53,519.91 L1115.20,519.10 L1116.88,518.28 L1118.55,517.47 L1120.22,516.65 L1121.88,515.84 L1123.54,515.03 L1125.19,514.21 L1126.84,513.40 L1128.49,512.58 L1130.13,511.77 L1131.76,510.95 L1133.40,510.14 L1135.02,509.32 L1136.65,508.51 L1138.27,507.69 L1139.88,506.88 L1141.49,506.06 L1143.10,505.25 L1144.70,504.43 L1146.29,503.62 L1147.89,502.80 L1149.47,501.99 L1151.05,501.17 L1152.63,500.36 L1154.21,499.55 L1155.77,498.73 L1157.34,497.92 L1158.89,497.10 L1160.45,496.29 L1162.00,495.47 L1163.54,494.66 L1165.08,493.84 L1166.61,493.03 L1168.14,492.21 L1169.66,491.40 L1171.18,490.58 L1172.70,489.77 L1174.20,488.95 L1175.71,488.14 L1177.20,487.32 L1178.70,486.51 L1180.18,485.69 L1181.67,484.88 L1183.14,484.06 L1184.61,483.25 L1186.08,482.44 L1187.54,481.62 L1188.99,480.81 L1190.44,479.99 L1191.89,479.18 L1193.33,478.36 L1194.76,477.55 L1196.19,476.73 L1197.61,475.92 L1199.03,475.10 L1200.44,474.29 L1201.84,473.47 L1203.24,472.66 L1204.63,471.84 L1206.02,471.03 L1207.40,470.21 L1208.78,469.40 L1210.15,468.58 L1211.51,467.77 L1212.87,466.96 L1214.23,466.14 L1215.57,465.33 L1216.91,464.51 L1218.25,463.70 L1219.58,462.88 L1220.90,462.07 L1222.22,461.25 L1223.53,460.44 L1224.83,459.62 L1226.13,458.81 L1227.42,457.99 L1228.71,457.18 L1229.99,456.36 L1231.26,455.55 L1232.53,454.73 L1233.79,453.92 L1235.04,453.10 L1236.29,452.29 L1237.53,451.47 L1238.77,450.66 L1240.00,449.85 L1241.22,449.03 L1242.44,448.22 L1243.64,447.40 L1244.85,446.59 L1246.04,445.77 L1247.23,444.96 L1248.42,444.14 L1249.60,443.33 L1250.77,442.51 L1251.93,441.70 L1253.09,440.88 L1254.24,440.07 L1255.38,439.25 L1256.52,438.44 L1257.65,437.62 L1258.77,436.81 L1259.89,435.99 L1261.00,435.18 L1262.10,434.37 L1263.20,433.55 L1264.29,432.74 L1265.37,431.92 L1266.44,431.11 L1267.51,430.29 L1268.57,429.48 L1269.63,428.66 L1270.68,427.85 L1271.72,427.03 L1272.75,426.22 L1273.78,425.40 L1274.80,424.59 L1275.81,423.77 L1276.81,422.96 L1277.81,422.14 L1278.80,421.33 L1279.79,420.51 L1280.76,419.70 L1281.73,418.88 L1282.69,418.07 L1283.65,417.26 L1284.60,416.44 L1285.54,415.63 L1286.47,414.81 L1287.40,414.00 L1288.31,413.18 L1289.23,412.37 L1290.13,411.55 L1291.03,410.74 L1291.91,409.92 L1292.80,409.11 L1293.67,408.29 L1294.54,407.48 L1295.40,406.66 L1296.25,405.85 L1297.09,405.03 L1297.93,404.22 L1298.76,403.40 L1299.58,402.59 L1300.39,401.77 L1301.20,400.96 L1302.00,400.15 L1302.79,399.33 L1303.57,398.52 L1304.35,397.70 L1305.12,396.89 L1305.88,396.07 L1306.63,395.26 L1307.38,394.44 L1308.11,393.63 L1308.84,392.81 L1309.57,392.00 L1310.28,391.18 L1310.99,390.37 L1311.68,389.55 L1312.38,388.74 L1313.06,387.92 L1313.73,387.11 L1314.40,386.29 L1315.06,385.48 L1315.71,384.67 L1316.36,383.85 L1316.99,383.04 L1317.62,382.22 L1318.24,381.41 L1318.85,380.59 L1319.46,379.78 L1320.05,378.96 L1320.64,378.15 L1321.22,377.33 L1321.80,376.52 L1322.36,375.70 L1322.92,374.89 L1323.46,374.07 L1324.01,373.26 L1324.54,372.44 L1325.06,371.63 L1325.58,370.81 L1326.09,370.00 L1326.59,369.19 L1327.08,368.37 L1327.56,367.56 L1328.04,366.74 L1328.51,365.93 L1328.97,365.11 L1329.42,364.30 L1329.86,363.48 L1330.30,362.67 L1330.72,361.85 L1331.14,361.04 L1331.55,360.22 L1331.96,359.41 L1332.35,358.59 L1332.74,357.78 L1333.12,356.96 L1333.49,356.15 L1333.85,355.33 L1334.20,354.52 L1334.55,353.70 L1334.88,352.89 L1335.21,352.08 L1335.53,351.26 L1335.84,350.45 L1336.15,349.63 L1336.44,348.82 L1336.73,348.00 L1337.01,347.19 L1337.28,346.37 L1337.54,345.56 L1337.80,344.74 L1338.04,343.93 L1338.28,343.11 L1338.51,342.30 L1338.73,341.48 L1338.95,340.67 L1339.15,339.85 L1339.35,339.04 L1339.53,338.22 L1339.71,337.41 L1339.89,336.60 L1340.05,335.78 L1340.20,334.97 L1340.35,334.15 L1340.49,333.34 L1340.62,332.52 L1340.74,331.71 L1340.85,330.89 L1340.96,330.08 L1341.05,329.26 L1341.14,328.45 L1341.22,327.63 L1341.29,326.82 L1341.35,326.00 L1341.41,325.19 L1341.45,324.37 L1341.49,323.56 L1341.52,322.74 L1341.54,321.93 L1341.55,321.11 L1341.56,320.30 L1341.55,319.49 L1341.54,318.67 L1341.52,317.86 L1341.49,317.04 L1341.45,316.23 L1341.41,315.41 L1341.35,314.60 L1341.29,313.78 L1341.22,312.97 L1341.14,312.15 L1341.05,311.34 L1340.96,310.52 L1340.85,309.71 L1340.74,308.89 L1340.62,308.08 L1340.49,307.26 L1340.35,306.45 L1340.20,305.63 L1340.05,304.82 L1339.89,304.00 L1339.71,303.19 L1339.53,302.38 L1339.35,301.56 L1339.15,300.75 L1338.95,299.93 L1338.73,299.12 L1338.51,298.30 L1338.28,297.49 L1338.04,296.67 L1337.80,295.86 L1337.54,295.04 L1337.28,294.23 L1337.01,293.41 L1336.73,292.60 L1336.44,291.78 L1336.15,290.97 L1335.84,290.15 L1335.53,289.34 L1335.21,288.52 L1334.88,287.71 L1334.55,286.90 L1334.20,286.08 L1333.85,285.27 L1333.49,284.45 L1333.12,283.64 L1332.74,282.82 L1332.35,282.01 L1331.96,281.19 L1331.55,280.38 L1331.14,279.56 L1330.72,278.75 L1330.30,277.93 L1329.86,277.12 L1329.42,276.30 L1328.97,275.49 L1328.51,274.67 L1328.04,273.86 L1327.56,273.04 L1327.08,272.23 L1326.59,271.42 L1326.09,270.60 L1325.58,269.79 L1325.06,268.97 L1324.54,268.16 L1324.01,267.34 L1323.46,266.53 L1322.92,265.71 L1322.36,264.90 L1321.80,264.08 L1321.22,263.27 L1320.64,262.45 L1320.05,261.64 L1319.46,260.82 L1318.85,260.01 L1318.24,259.19 L1317.62,258.38 L1316.99,257.56 L1316.36,256.75 L1315.71,255.93 L1315.06,255.12 L1314.40,254.31 L1313.73,253.49 L1313.06,252.68 L1312.38,251.86 L1311.68,251.05 L1310.99,250.23 L1310.28,249.42 L1309.57,248.60 L1308.84,247.79 L1308.11,246.97 L1307.38,246.16 L1306.63,245.34 L1305.88,244.53 L1305.12,243.71 L1304.35,242.90 L1303.57,242.08 L1302.79,241.27 L1302.00,240.45 L1301.20,239.64 L1300.39,238.83 L1299.58,238.01 L1298.76,237.20 L1297.93,236.38 L1297.09,235.57 L1296.25,234.75 L1295.40,233.94 L1294.54,233.12 L1293.67,232.31 L1292.80,231.49 L1291.91,230.68 L1291.03,229.86 L1290.13,229.05 L1289.23,228.23 L1288.31,227.42 L1287.40,226.60 L1286.47,225.79 L1285.54,224.97 L1284.60,224.16 L1283.65,223.34 L1282.69,222.53 L1281.73,221.72 L1280.76,220.90 L1279.79,220.09 L1278.80,219.27 L1277.81,218.46 L1276.81,217.64 L1275.81,216.83 L1274.80,216.01 L1273.78,215.20 L1272.75,214.38 L1271.72,213.57 L1270.68,212.75 L1269.63,211.94 L1268.57,211.12 L1267.51,210.31 L1266.44,209.49 L1265.37,208.68 L1264.29,207.86 L1263.20,207.05 L1262.10,206.24 L1261.00,205.42 L1259.89,204.61 L1258.77,203.79 L1257.65,202.98 L1256.52,202.16 L1255.38,201.35 L1254.24,200.53 L1253.09,199.72 L1251.93,198.90 L1250.77,198.09 L1249.60,197.27 L1248.42,196.46 L1247.23,195.64 L1246.04,194.83 L1244.85,194.01 L1243.64,193.20 L1242.44,192.38 L1241.22,191.57 L1240.00,190.75 L1238.77,189.94 L1237.53,189.13 L1236.29,188.31 L1235.04,187.50 L1233.79,186.68 L1232.53,185.87 L1231.26,185.05 L1229.99,184.24 L1228.71,183.42 L1227.42,182.61 L1226.13,181.79 L1224.83,180.98 L1223.53,180.16 L1222.22,179.35 L1220.90,178.53 L1219.58,177.72 L1218.25,176.90 L1216.91,176.09 L1215.57,175.27 L1214.23,174.46 L1212.87,173.65 L1211.51,172.83 L1210.15,172.02 L1208.78,171.20 L1207.40,170.39 L1206.02,169.57 L1204.63,168.76 L1203.24,167.94 L1201.84,167.13 L1200.44,166.31 L1199.03,165.50 L1197.61,164.68 L1196.19,163.87 L1194.76,163.05 L1193.33,162.24 L1191.89,161.42 L1190.44,160.61 L1188.99,159.79 L1187.54,158.98 L1186.08,158.16 L1184.61,157.35 L1183.14,156.54 L1181.67,155.72 L1180.18,154.91 L1178.70,154.09 L1177.20,153.28 L1175.71,152.46 L1174.20,151.65 L1172.70,150.83 L1171.18,150.02 L1169.66,149.20 L1168.14,148.39 L1166.61,147.57 L1165.08,146.76 L1163.54,145.94 L1162.00,145.13 L1160.45,144.31 L1158.89,143.50 L1157.34,142.68 L1155.77,141.87 L1154.21,141.06 L1152.63,140.24 L1151.05,139.43 L1149.47,138.61 L1147.89,137.80 L1146.29,136.98 L1144.70,136.17 L1143.10,135.35 L1141.49,134.54 L1139.88,133.72 L1138.27,132.91 L1136.65,132.09 L1135.02,131.28 L1133.40,130.46 L1131.76,129.65 L1130.13,128.83 L1128.49,128.02 L1126.84,127.20 L1125.19,126.39 L1123.54,125.57 L1121.88,124.76 L1120.22,123.95 L1118.55,123.13 L1116.88,122.32 L1115.20,121.50 L1113.53,120.69 L1111.84,119.87 L1110.16,119.06 L1108.47,118.24 L1106.77,117.43 L1105.07,116.61 L1103.37,115.80 L1101.66,114.98 L1099.95,114.17 L1098.24,113.35 L1096.52,112.54 L1094.80,111.72 L1093.08,110.91 L1091.35,110.09 L1089.62,109.28 L1087.88,108.47 L1086.14,107.65 L1084.40,106.84 L1082.65,106.02 L1080.90,105.21 L1079.15,104.39 L1077.39,103.58 L1075.63,102.76 L1073.87,101.95 L1072.10,101.13 L1070.33,100.32 L1068.56,99.50 L1066.79,98.69 L1065.01,97.87 L1063.23,97.06 L1061.44,96.24 L1059.65,95.43 L1057.86,94.61 L1056.07,93.80 L1054.27,92.98 L1052.47,92.17 L1050.67,91.36 L1048.86,90.54 L1047.05,89.73 L1045.24,88.91 L1043.43,88.10 L1041.61,87.28 L1039.79,86.47 L1037.97,85.65 L1036.14,84.84 L1034.32,84.02 L1032.49,83.21 L1030.66,82.39 L1028.82,81.58 L1026.98,80.76 L1025.14,79.95 L1023.30,79.13 L1021.46,78.32 L1019.61,77.50 L1017.76,76.69 L1015.91,75.88 L1014.06,75.06 L1012.21,74.25 L1010.35,73.43 L1008.49,72.62 L1006.63,71.80 L1004.77,70.99 L1002.90,70.17 L1001.03,69.36 L999.17,68.54 L997.29,67.73 L995.42,66.91 L993.55,66.10 L991.67,65.28 L989.79,64.47 L987.91,63.65 L986.03,62.84 L984.15,62.02 L982.27,61.21 L980.38,60.39 L978.49,59.58 L976.60,58.77 L974.71,57.95 L972.82,57.14 L970.93,56.32 L969.04,55.51 L967.14,54.69 L965.24,53.88 L963.35,53.06 L961.45,52.25 L959.55,51.43 L957.65,50.62 L955.74,49.80 L953.84,48.99 L951.94,48.17 L950.03,47.36 L948.13,46.54 L946.22,45.73 L944.31,44.91 L942.40,44.10 L940.49,43.29 L938.58,42.47 L936.67,41.66 L934.76,40.84 L932.85,40.03 L930.94,39.21 L929.02,38.40 L927.11,37.58 L925.19,36.77 L923.28,35.95 L921.36,35.14 L919.45,34.32 L917.53,33.51 L915.62,32.69 L913.70,31.88 L911.78,31.06 L909.87,30.25 L907.95,29.43 L906.03,28.62 L904.12,27.80 L902.20,26.99 M902.20,613.61 L904.33,612.80 L906.46,611.98 L908.59,611.17 L910.72,610.35 L912.85,609.54 L914.98,608.72 L917.11,607.91 L919.24,607.09 L921.37,606.28 L923.49,605.46 L925.62,604.65 L927.75,603.83 L929.88,603.02 L932.00,602.20 L934.13,601.39 L936.25,600.57 L938.38,599.76 L940.50,598.94 L942.62,598.13 L944.75,597.32 L946.87,596.50 L948.99,595.69 L951.11,594.87 L953.23,594.06 L955.35,593.24 L957.46,592.43 L959.58,591.61 L961.69,590.80 L963.81,589.98 L965.92,589.17 L968.03,588.35 L970.14,587.54 L972.25,586.72 L974.36,585.91 L976.46,585.09 L978.57,584.28 L980.67,583.46 L982.77,582.65 L984.87,581.83 L986.97,581.02 L989.07,580.21 L991.16,579.39 L993.26,578.58 L995.35,577.76 L997.44,576.95 L999.53,576.13 L1001.61,575.32 L1003.70,574.50 L1005.78,573.69 L1007.86,572.87 L1009.94,572.06 L1012.02,571.24 L1014.09,570.43 L1016.16,569.61 L1018.23,568.80 L1020.30,567.98 L1022.37,567.17 L1024.43,566.35 L1026.49,565.54 L1028.55,564.73 L1030.61,563.91 L1032.66,563.10 L1034.71,562.28 L1036.76,561.47 L1038.81,560.65 L1040.85,559.84 L1042.89,559.02 L1044.93,558.21 L1046.96,557.39 L1049.00,556.58 L1051.03,555.76 L1053.05,554.95 L1055.08,554.13 L1057.10,553.32 L1059.12,552.50 L1061.13,551.69 L1063.15,550.87 L1065.16,550.06 L1067.16,549.24 L1069.17,548.43 L1071.17,547.62 L1073.16,546.80 L1075.16,545.99 L1077.15,545.17 L1079.13,544.36 L1081.12,543.54 L1083.10,542.73 L1085.07,541.91 L1087.05,541.10 L1089.02,540.28 L1090.98,539.47 L1092.95,538.65 L1094.90,537.84 L1096.86,537.02 L1098.81,536.21 L1100.76,535.39 L1102.70,534.58 L1104.64,533.76 L1106.58,532.95 L1108.51,532.13 L1110.44,531.32 L1112.36,530.51 L1114.29,529.69 L1116.20,528.88 L1118.11,528.06 L1120.02,527.25 L1121.93,526.43 L1123.83,525.62 L1125.72,524.80 L1127.61,523.99 L1129.50,523.17 L1131.38,522.36 L1133.26,521.54 L1135.14,520.73 L1137.01,519.91 L1138.87,519.10 L1140.73,518.28 L1142.59,517.47 L1144.44,516.65 L1146.29,515.84 L1148.13,515.03 L1149.97,514.21 L1151.80,513.40 L1153.63,512.58 L1155.45,511.77 L1157.27,510.95 L1159.08,510.14 L1160.89,509.32 L1162.70,508.51 L1164.50,507.69 L1166.29,506.88 L1168.08,506.06 L1169.86,505.25 L1171.64,504.43 L1173.42,503.62 L1175.18,502.80 L1176.95,501.99 L1178.71,501.17 L1180.46,500.36 L1182.21,499.55 L1183.95,498.73 L1185.68,497.92 L1187.42,497.10 L1189.14,496.29 L1190.86,495.47 L1192.58,494.66 L1194.29,493.84 L1195.99,493.03 L1197.69,492.21 L1199.38,491.40 L1201.07,490.58 L1202.75,489.77 L1204.43,488.95 L1206.10,488.14 L1207.76,487.32 L1209.42,486.51 L1211.07,485.69 L1212.72,484.88 L1214.36,484.06 L1215.99,483.25 L1217.62,482.44 L1219.24,481.62 L1220.86,480.81 L1222.47,479.99 L1224.08,479.18 L1225.67,478.36 L1227.27,477.55 L1228.85,476.73 L1230.43,475.92 L1232.01,475.10 L1233.57,474.29 L1235.13,473.47 L1236.69,472.66 L1238.24,471.84 L1239.78,471.03 L1241.31,470.21 L1242.84,469.40 L1244.37,468.58 L1245.88,467.77 L1247.39,466.96 L1248.89,466.14 L1250.39,465.33 L1251.88,464.51 L1253.36,463.70 L1254.84,462.88 L1256.31,462.07 L1257.77,461.25 L1259.23,460.44 L1260.68,459.62 L1262.12,458.81 L1263.56,457.99 L1264.98,457.18 L1266.41,456.36 L1267.82,455.55 L1269.23,454.73 L1270.63,453.92 L1272.02,453.10 L1273.41,452.29 L1274.79,451.47 L1276.16,450.66 L1277.53,449.85 L1278.89,449.03 L1280.24,448.22 L1281.58,447.40 L1282.92,446.59 L1284.25,445.77 L1285.57,444.96 L1286.89,444.14 L1288.19,443.33 L1289.50,442.51 L1290.79,441.70 L1292.07,440.88 L1293.35,440.07 L1294.62,439.25 L1295.89,438.44 L1297.14,437.62 L1298.39,436.81 L1299.63,435.99 L1300.86,435.18 L1302.09,434.37 L1303.31,433.55 L1304.52,432.74 L1305.72,431.92 L1306.92,431.11 L1308.10,430.29 L1309.28,429.48 L1310.45,428.66 L1311.62,427.85 L1312.77,427.03 L1313.92,426.22 L1315.06,425.40 L1316.20,424.59 L1317.32,423.77 L1318.44,422.96 L1319.55,422.14 L1320.65,421.33 L1321.74,420.51 L1322.83,419.70 L1323.90,418.88 L1324.97,418.07 L1326.03,417.26 L1327.09,416.44 L1328.13,415.63 L1329.17,414.81 L1330.20,414.00 L1331.22,413.18 L1332.23,412.37 L1333.23,411.55 L1334.23,410.74 L1335.22,409.92 L1336.20,409.11 L1337.17,408.29 L1338.13,407.48 L1339.08,406.66 L1340.03,405.85 L1340.97,405.03 L1341.90,404.22 L1342.82,403.40 L1343.73,402.59 L1344.64,401.77 L1345.53,400.96 L1346.42,400.15 L1347.30,399.33 L1348.17,398.52 L1349.03,397.70 L1349.89,396.89 L1350.73,396.07 L1351.57,395.26 L1352.40,394.44 L1353.21,393.63 L1354.03,392.81 L1354.83,392.00 L1355.62,391.18 L1356.41,390.37 L1357.18,389.55 L1357.95,388.74 L1358.71,387.92 L1359.46,387.11 L1360.20,386.29 L1360.93,385.48 L1361.66,384.67 L1362.37,383.85 L1363.08,383.04 L1363.78,382.22 L1364.47,381.41 L1365.15,380.59 L1365.82,379.78 L1366.48,378.96 L1367.14,378.15 L1367.78,377.33 L1368.42,376.52 L1369.04,375.70 L1369.66,374.89 L1370.27,374.07 L1370.87,373.26 L1371.46,372.44 L1372.05,371.63 L1372.62,370.81 L1373.19,370.00 L1373.74,369.19 L1374.29,368.37 L1374.83,367.56 L1375.35,366.74 L1375.87,365.93 L1376.38,365.11 L1376.89,364.30 L1377.38,363.48 L1377.86,362.67 L1378.34,361.85 L1378.80,361.04 L1379.26,360.22 L1379.71,359.41 L1380.15,358.59 L1380.57,357.78 L1380.99,356.96 L1381.41,356.15 L1381.81,355.33 L1382.20,354.52 L1382.58,353.70 L1382.96,352.89 L1383.32,352.08 L1383.68,351.26 L1384.03,350.45 L1384.36,349.63 L1384.69,348.82 L1385.01,348.00 L1385.32,347.19 L1385.62,346.37 L1385.92,345.56 L1386.20,344.74 L1386.47,343.93 L1386.74,343.11 L1386.99,342.30 L1387.24,341.48 L1387.47,340.67 L1387.70,339.85 L1387.92,339.04 L1388.13,338.22 L1388.33,337.41 L1388.52,336.60 L1388.70,335.78 L1388.87,334.97 L1389.03,334.15 L1389.19,333.34 L1389.33,332.52 L1389.46,331.71 L1389.59,330.89 L1389.71,330.08 L1389.81,329.26 L1389.91,328.45 L1390.00,327.63 L1390.08,326.82 L1390.15,326.00 L1390.21,325.19 L1390.26,324.37 L1390.30,323.56 L1390.33,322.74 L1390.36,321.93 L1390.37,321.11 L1390.38,320.30 L1390.37,319.49 L1390.36,318.67 L1390.33,317.86 L1390.30,317.04 L1390.26,316.23 L1390.21,315.41 L1390.15,314.60 L1390.08,313.78 L1390.00,312.97 L1389.91,312.15 L1389.81,311.34 L1389.71,310.52 L1389.59,309.71 L1389.46,308.89 L1389.33,308.08 L1389.19,307.26 L1389.03,306.45 L1388.87,305.63 L1388.70,304.82 L1388.52,304.00 L1388.33,303.19 L1388.13,302.38 L1387.92,301.56 L1387.70,300.75 L1387.47,299.93 L1387.24,299.12 L1386.99,298.30 L1386.74,297.49 L1386.47,296.67 L1386.20,295.86 L1385.92,295.04 L1385.62,294.23 L1385.32,293.41 L1385.01,292.60 L1384.69,291.78 L1384.36,290.97 L1384.03,290.15 L1383.68,289.34 L1383.32,288.52 L1382.96,287.71 L1382.58,286.90 L1382.20,286.08 L1381.81,285.27 L1381.41,284.45 L1380.99,283.64 L1380.57,282.82 L1380.15,282.01 L1379.71,281.19 L1379.26,280.38 L1378.80,279.56 L1378.34,278.75 L1377.86,277.93 L1377.38,277.12 L1376.89,276.30 L1376.38,275.49 L1375.87,274.67 L1375.35,273.86 L1374.83,273.04 L1374.29,272.23 L1373.74,271.42 L1373.19,270.60 L1372.62,269.79 L1372.05,268.97 L1371.46,268.16 L1370.87,267.34 L1370.27,266.53 L1369.66,265.71 L1369.04,264.90 L1368.42,264.08 L1367.78,263.27 L1367.14,262.45 L1366.48,261.64 L1365.82,260.82 L1365.15,260.01 L1364.47,259.19 L1363.78,258.38 L1363.08,257.56 L1362.37,256.75 L1361.66,255.93 L1360.93,255.12 L1360.20,254.31 L1359.46,253.49 L1358.71,252.68 L1357.95,251.86 L1357.18,251.05 L1356.41,250.23 L1355.62,249.42 L1354.83,248.60 L1354.03,247.79 L1353.21,246.97 L1352.40,246.16 L1351.57,245.34 L1350.73,244.53 L1349.89,243.71 L1349.03,242.90 L1348.17,242.08 L1347.30,241.27 L1346.42,240.45 L1345.53,239.64 L1344.64,238.83 L1343.73,238.01 L1342.82,237.20 L1341.90,236.38 L1340.97,235.57 L1340.03,234.75 L1339.08,233.94 L1338.13,233.12 L1337.17,232.31 L1336.20,231.49 L1335.22,230.68 L1334.23,229.86 L1333.23,229.05 L1332.23,228.23 L1331.22,227.42 L1330.20,226.60 L1329.17,225.79 L1328.13,224.97 L1327.09,224.16 L1326.03,223.34 L1324.97,222.53 L1323.90,221.72 L1322.83,220.90 L1321.74,220.09 L1320.65,219.27 L1319.55,218.46 L1318.44,217.64 L1317.32,216.83 L1316.20,216.01 L1315.06,215.20 L1313.92,214.38 L1312.77,213.57 L1311.62,212.75 L1310.45,211.94 L1309.28,211.12 L1308.10,210.31 L1306.92,209.49 L1305.72,208.68 L1304.52,207.86 L1303.31,207.05 L1302.09,206.24 L1300.86,205.42 L1299.63,204.61 L1298.39,203.79 L1297.14,202.98 L1295.89,202.16 L1294.62,201.35 L1293.35,200.53 L1292.07,199.72 L1290.79,198.90 L1289.50,198.09 L1288.19,197.27 L1286.89,196.46 L1285.57,195.64 L1284.25,194.83 L1282.92,194.01 L1281.58,193.20 L1280.24,192.38 L1278.89,191.57 L1277.53,190.75 L1276.16,189.94 L1274.79,189.13 L1273.41,188.31 L1272.02,187.50 L1270.63,186.68 L1269.23,185.87 L1267.82,185.05 L1266.41,184.24 L1264.98,183.42 L1263.56,182.61 L1262.12,181.79 L1260.68,180.98 L1259.23,180.16 L1257.77,179.35 L1256.31,178.53 L1254.84,177.72 L1253.36,176.90 L1251.88,176.09 L1250.39,175.27 L1248.89,174.46 L1247.39,173.65 L1245.88,172.83 L1244.37,172.02 L1242.84,171.20 L1241.31,170.39 L1239.78,169.57 L1238.24,168.76 L1236.69,167.94 L1235.13,167.13 L1233.57,166.31 L1232.01,165.50 L1230.43,164.68 L1228.85,163.87 L1227.27,163.05 L1225.67,162.24 L1224.08,161.42 L1222.47,160.61 L1220.86,159.79 L1219.24,158.98 L1217.62,158.16 L1215.99,157.35 L1214.36,156.54 L1212.72,155.72 L1211.07,154.91 L1209.42,154.09 L1207.76,153.28 L1206.10,152.46 L1204.43,151.65 L1202.75,150.83 L1201.07,150.02 L1199.38,149.20 L1197.69,148.39 L1195.99,147.57 L1194.29,146.76 L1192.58,145.94 L1190.86,145.13 L1189.14,144.31 L1187.42,143.50 L1185.68,142.68 L1183.95,141.87 L1182.21,141.06 L1180.46,140.24 L1178.71,139.43 L1176.95,138.61 L1175.18,137.80 L1173.42,136.98 L1171.64,136.17 L1169.86,135.35 L1168.08,134.54 L1166.29,133.72 L1164.50,132.91 L1162.70,132.09 L1160.89,131.28 L1159.08,130.46 L1157.27,129.65 L1155.45,128.83 L1153.63,128.02 L1151.80,127.20 L1149.97,126.39 L1148.13,125.57 L1146.29,124.76 L1144.44,123.95 L1142.59,123.13 L1140.73,122.32 L1138.87,121.50 L1137.01,120.69 L1135.14,119.87 L1133.26,119.06 L1131.38,118.24 L1129.50,117.43 L1127.61,116.61 L1125.72,115.80 L1123.83,114.98 L1121.93,114.17 L1120.02,113.35 L1118.11,112.54 L1116.20,111.72 L1114.29,110.91 L1112.36,110.09 L1110.44,109.28 L1108.51,108.47 L1106.58,107.65 L1104.64,106.84 L1102.70,106.02 L1100.76,105.21 L1098.81,104.39 L1096.86,103.58 L1094.90,102.76 L1092.95,101.95 L1090.98,101.13 L1089.02,100.32 L1087.05,99.50 L1085.07,98.69 L1083.10,97.87 L1081.12,97.06 L1079.13,96.24 L1077.15,95.43 L1075.16,94.61 L1073.16,93.80 L1071.17,92.98 L1069.17,92.17 L1067.16,91.36 L1065.16,90.54 L1063.15,89.73 L1061.13,88.91 L1059.12,88.10 L1057.10,87.28 L1055.08,86.47 L1053.05,85.65 L1051.03,84.84 L1049.00,84.02 L1046.96,83.21 L1044.93,82.39 L1042.89,81.58 L1040.85,80.76 L1038.81,79.95 L1036.76,79.13 L1034.71,78.32 L1032.66,77.50 L1030.61,76.69 L1028.55,75.88 L1026.49,75.06 L1024.43,74.25 L1022.37,73.43 L1020.30,72.62 L1018.23,71.80 L1016.16,70.99 L1014.09,70.17 L1012.02,69.36 L1009.94,68.54 L1007.86,67.73 L1005.78,66.91 L1003.70,66.10 L1001.61,65.28 L999.53,64.47 L997.44,63.65 L995.35,62.84 L993.26,62.02 L991.16,61.21 L989.07,60.39 L986.97,59.58 L984.87,58.77 L982.77,57.95 L980.67,57.14 L978.57,56.32 L976.46,55.51 L974.36,54.69 L972.25,53.88 L970.14,53.06 L968.03,52.25 L965.92,51.43 L963.81,50.62 L961.69,49.80 L959.58,48.99 L957.46,48.17 L955.35,47.36 L953.23,46.54 L951.11,45.73 L948.99,44.91 L946.87,44.10 L944.75,43.29 L942.62,42.47 L940.50,41.66 L938.38,40.84 L936.25,40.03 L934.13,39.21 L932.00,38.40 L929.88,37.58 L927.75,36.77 L925.62,35.95 L923.49,35.14 L921.37,34.32 L919.24,33.51 L917.11,32.69 L914.98,31.88 L912.85,31.06 L910.72,30.25 L908.59,29.43 L906.46,28.62 L904.33,27.80 L902.20,26.99 M902.20,613.61 L904.54,612.80 L906.89,611.98 L909.23,611.17 L911.57,610.35 L913.91,609.54 L916.26,608.72 L918.60,607.91 L920.94,607.09 L923.28,606.28 L925.62,605.46 L927.96,604.65 L930.30,603.83 L932.64,603.02 L934.98,602.20 L937.32,601.39 L939.66,600.57 L942.00,599.76 L944.33,598.94 L946.67,598.13 L949.00,597.32 L951.34,596.50 L953.67,595.69 L956.00,594.87 L958.33,594.06 L960.66,593.24 L962.99,592.43 L965.32,591.61 L967.64,590.80 L969.97,589.98 L972.29,589.17 L974.61,588.35 L976.93,587.54 L979.25,586.72 L981.57,585.91 L983.89,585.09 L986.20,584.28 L988.52,583.46 L990.83,582.65 L993.14,581.83 L995.45,581.02 L997.75,580.21 L1000.06,579.39 L1002.36,578.58 L1004.66,577.76 L1006.96,576.95 L1009.26,576.13 L1011.55,575.32 L1013.85,574.50 L1016.14,573.69 L1018.43,572.87 L1020.71,572.06 L1023.00,571.24 L1025.28,570.43 L1027.56,569.61 L1029.84,568.80 L1032.11,567.98 L1034.38,567.17 L1036.65,566.35 L1038.92,565.54 L1041.18,564.73 L1043.45,563.91 L1045.71,563.10 L1047.96,562.28 L1050.22,561.47 L1052.47,560.65 L1054.71,559.84 L1056.96,559.02 L1059.20,558.21 L1061.44,557.39 L1063.68,556.58 L1065.91,555.76 L1068.14,554.95 L1070.37,554.13 L1072.59,553.32 L1074.81,552.50 L1077.03,551.69 L1079.24,550.87 L1081.45,550.06 L1083.66,549.24 L1085.86,548.43 L1088.06,547.62 L1090.26,546.80 L1092.45,545.99 L1094.64,545.17 L1096.83,544.36 L1099.01,543.54 L1101.19,542.73 L1103.36,541.91 L1105.53,541.10 L1107.70,540.28 L1109.86,539.47 L1112.02,538.65 L1114.17,537.84 L1116.33,537.02 L1118.47,536.21 L1120.61,535.39 L1122.75,534.58 L1124.89,533.76 L1127.02,532.95 L1129.14,532.13 L1131.26,531.32 L1133.38,530.51 L1135.49,529.69 L1137.60,528.88 L1139.71,528.06 L1141.80,527.25 L1143.90,526.43 L1145.99,525.62 L1148.07,524.80 L1150.16,523.99 L1152.23,523.17 L1154.30,522.36 L1156.37,521.54 L1158.43,520.73 L1160.49,519.91 L1162.54,519.10 L1164.59,518.28 L1166.63,517.47 L1168.66,516.65 L1170.70,515.84 L1172.72,515.03 L1174.74,514.21 L1176.76,513.40 L1178.77,512.58 L1180.78,511.77 L1182.78,510.95 L1184.77,510.14 L1186.76,509.32 L1188.75,508.51 L1190.73,507.69 L1192.70,506.88 L1194.67,506.06 L1196.63,505.25 L1198.59,504.43 L1200.54,503.62 L1202.48,502.80 L1204.42,501.99 L1206.36,501.17 L1208.28,500.36 L1210.21,499.55 L1212.12,498.73 L1214.03,497.92 L1215.94,497.10 L1217.84,496.29 L1219.73,495.47 L1221.62,494.66 L1223.50,493.84 L1225.37,493.03 L1227.24,492.21 L1229.10,491.40 L1230.96,490.58 L1232.81,489.77 L1234.65,488.95 L1236.49,488.14 L1238.32,487.32 L1240.14,486.51 L1241.96,485.69 L1243.77,484.88 L1245.57,484.06 L1247.37,483.25 L1249.16,482.44 L1250.95,481.62 L1252.73,480.81 L1254.50,479.99 L1256.26,479.18 L1258.02,478.36 L1259.77,477.55 L1261.52,476.73 L1263.26,475.92 L1264.99,475.10 L1266.71,474.29 L1268.43,473.47 L1270.14,472.66 L1271.84,471.84 L1273.54,471.03 L1275.23,470.21 L1276.91,469.40 L1278.58,468.58 L1280.25,467.77 L1281.91,466.96 L1283.56,466.14 L1285.21,465.33 L1286.85,464.51 L1288.48,463.70 L1290.10,462.88 L1291.72,462.07 L1293.33,461.25 L1294.93,460.44 L1296.53,459.62 L1298.11,458.81 L1299.69,457.99 L1301.26,457.18 L1302.83,456.36 L1304.38,455.55 L1305.93,454.73 L1307.47,453.92 L1309.01,453.10 L1310.53,452.29 L1312.05,451.47 L1313.56,450.66 L1315.06,449.85 L1316.56,449.03 L1318.04,448.22 L1319.52,447.40 L1320.99,446.59 L1322.45,445.77 L1323.91,444.96 L1325.36,444.14 L1326.79,443.33 L1328.22,442.51 L1329.65,441.70 L1331.06,440.88 L1332.47,440.07 L1333.87,439.25 L1335.25,438.44 L1336.64,437.62 L1338.01,436.81 L1339.37,435.99 L1340.73,435.18 L1342.08,434.37 L1343.42,433.55 L1344.75,432.74 L1346.07,431.92 L1347.39,431.11 L1348.69,430.29 L1349.99,429.48 L1351.28,428.66 L1352.56,427.85 L1353.83,427.03 L1355.09,426.22 L1356.35,425.40 L1357.60,424.59 L1358.83,423.77 L1360.06,422.96 L1361.28,422.14 L1362.49,421.33 L1363.69,420.51 L1364.89,419.70 L1366.07,418.88 L1367.25,418.07 L1368.42,417.26 L1369.57,416.44 L1370.72,415.63 L1371.86,414.81 L1373.00,414.00 L1374.12,413.18 L1375.23,412.37 L1376.34,411.55 L1377.43,410.74 L1378.52,409.92 L1379.60,409.11 L1380.66,408.29 L1381.72,407.48 L1382.77,406.66 L1383.81,405.85 L1384.85,405.03 L1385.87,404.22 L1386.88,403.40 L1387.89,402.59 L1388.88,401.77 L1389.87,400.96 L1390.84,400.15 L1391.81,399.33 L1392.77,398.52 L1393.72,397.70 L1394.65,396.89 L1395.58,396.07 L1396.50,395.26 L1397.42,394.44 L1398.32,393.63 L1399.21,392.81 L1400.09,392.00 L1400.96,391.18 L1401.83,390.37 L1402.68,389.55 L1403.53,388.74 L1404.36,387.92 L1405.19,387.11 L1406.00,386.29 L1406.81,385.48 L1407.60,384.67 L1408.39,383.85 L1409.17,383.04 L1409.94,382.22 L1410.69,381.41 L1411.44,380.59 L1412.18,379.78 L1412.91,378.96 L1413.63,378.15 L1414.34,377.33 L1415.04,376.52 L1415.73,375.70 L1416.41,374.89 L1417.08,374.07 L1417.74,373.26 L1418.39,372.44 L1419.03,371.63 L1419.66,370.81 L1420.28,370.00 L1420.89,369.19 L1421.50,368.37 L1422.09,367.56 L1422.67,366.74 L1423.24,365.93 L1423.80,365.11 L1424.36,364.30 L1424.90,363.48 L1425.43,362.67 L1425.95,361.85 L1426.46,361.04 L1426.97,360.22 L1427.46,359.41 L1427.94,358.59 L1428.41,357.78 L1428.87,356.96 L1429.33,356.15 L1429.77,355.33 L1430.20,354.52 L1430.62,353.70 L1431.03,352.89 L1431.44,352.08 L1431.83,351.26 L1432.21,350.45 L1432.58,349.63 L1432.94,348.82 L1433.29,348.00 L1433.64,347.19 L1433.97,346.37 L1434.29,345.56 L1434.60,344.74 L1434.90,343.93 L1435.19,343.11 L1435.47,342.30 L1435.74,341.48 L1436.00,340.67 L1436.25,339.85 L1436.49,339.04 L1436.72,338.22 L1436.94,337.41 L1437.15,336.60 L1437.35,335.78 L1437.54,334.97 L1437.72,334.15 L1437.88,333.34 L1438.04,332.52 L1438.19,331.71 L1438.33,330.89 L1438.46,330.08 L1438.57,329.26 L1438.68,328.45 L1438.78,327.63 L1438.87,326.82 L1438.94,326.00 L1439.01,325.19 L1439.06,324.37 L1439.11,323.56 L1439.15,322.74 L1439.17,321.93 L1439.19,321.11 L1439.19,320.30 L1439.19,319.49 L1439.17,318.67 L1439.15,317.86 L1439.11,317.04 L1439.06,316.23 L1439.01,315.41 L1438.94,314.60 L1438.87,313.78 L1438.78,312.97 L1438.68,312.15 L1438.57,311.34 L1438.46,310.52 L1438.33,309.71 L1438.19,308.89 L1438.04,308.08 L1437.88,307.26 L1437.72,306.45 L1437.54,305.63 L1437.35,304.82 L1437.15,304.00 L1436.94,303.19 L1436.72,302.38 L1436.49,301.56 L1436.25,300.75 L1436.00,299.93 L1435.74,299.12 L1435.47,298.30 L1435.19,297.49 L1434.90,296.67 L1434.60,295.86 L1434.29,295.04 L1433.97,294.23 L1433.64,293.41 L1433.29,292.60 L1432.94,291.78 L1432.58,290.97 L1432.21,290.15 L1431.83,289.34 L1431.44,288.52 L1431.03,287.71 L1430.62,286.90 L1430.20,286.08 L1429.77,285.27 L1429.33,284.45 L1428.87,283.64 L1428.41,282.82 L1427.94,282.01 L1427.46,281.19 L1426.97,280.38 L1426.46,279.56 L1425.95,278.75 L1425.43,277.93 L1424.90,277.12 L1424.36,276.30 L1423.80,275.49 L1423.24,274.67 L1422.67,273.86 L1422.09,273.04 L1421.50,272.23 L1420.89,271.42 L1420.28,270.60 L1419.66,269.79 L1419.03,268.97 L1418.39,268.16 L1417.74,267.34 L1417.08,266.53 L1416.41,265.71 L1415.73,264.90 L1415.04,264.08 L1414.34,263.27 L1413.63,262.45 L1412.91,261.64 L1412.18,260.82 L1411.44,260.01 L1410.69,259.19 L1409.94,258.38 L1409.17,257.56 L1408.39,256.75 L1407.60,255.93 L1406.81,255.12 L1406.00,254.31 L1405.19,253.49 L1404.36,252.68 L1403.53,251.86 L1402.68,251.05 L1401.83,250.23 L1400.96,249.42 L1400.09,248.60 L1399.21,247.79 L1398.32,246.97 L1397.42,246.16 L1396.50,245.34 L1395.58,244.53 L1394.65,243.71 L1393.72,242.90 L1392.77,242.08 L1391.81,241.27 L1390.84,240.45 L1389.87,239.64 L1388.88,238.83 L1387.89,238.01 L1386.88,237.20 L1385.87,236.38 L1384.85,235.57 L1383.81,234.75 L1382.77,233.94 L1381.72,233.12 L1380.66,232.31 L1379.60,231.49 L1378.52,230.68 L1377.43,229.86 L1376.34,229.05 L1375.23,228.23 L1374.12,227.42 L1373.00,226.60 L1371.86,225.79 L1370.72,224.97 L1369.57,224.16 L1368.42,223.34 L1367.25,222.53 L1366.07,221.72 L1364.89,220.90 L1363.69,220.09 L1362.49,219.27 L1361.28,218.46 L1360.06,217.64 L1358.83,216.83 L1357.60,216.01 L1356.35,215.20 L1355.09,214.38 L1353.83,213.57 L1352.56,212.75 L1351.28,211.94 L1349.99,211.12 L1348.69,210.31 L1347.39,209.49 L1346.07,208.68 L1344.75,207.86 L1343.42,207.05 L1342.08,206.24 L1340.73,205.42 L1339.37,204.61 L1338.01,203.79 L1336.64,202.98 L1335.25,202.16 L1333.87,201.35 L1332.47,200.53 L1331.06,199.72 L1329.65,198.90 L1328.22,198.09 L1326.79,197.27 L1325.36,196.46 L1323.91,195.64 L1322.45,194.83 L1320.99,194.01 L1319.52,193.20 L1318.04,192.38 L1316.56,191.57 L1315.06,190.75 L1313.56,189.94 L1312.05,189.13 L1310.53,188.31 L1309.01,187.50 L1307.47,186.68 L1305.93,185.87 L1304.38,185.05 L1302.83,184.24 L1301.26,183.42 L1299.69,182.61 L1298.11,181.79 L1296.53,180.98 L1294.93,180.16 L1293.33,179.35 L1291.72,178.53 L1290.10,177.72 L1288.48,176.90 L1286.85,176.09 L1285.21,175.27 L1283.56,174.46 L1281.91,173.65 L1280.25,172.83 L1278.58,172.02 L1276.91,171.20 L1275.23,170.39 L1273.54,169.57 L1271.84,168.76 L1270.14,167.94 L1268.43,167.13 L1266.71,166.31 L1264.99,165.50 L1263.26,164.68 L1261.52,163.87 L1259.77,163.05 L1258.02,162.24 L1256.26,161.42 L1254.50,160.61 L1252.73,159.79 L1250.95,158.98 L1249.16,158.16 L1247.37,157.35 L1245.57,156.54 L1243.77,155.72 L1241.96,154.91 L1240.14,154.09 L1238.32,153.28 L1236.49,152.46 L1234.65,151.65 L1232.81,150.83 L1230.96,150.02 L1229.10,149.20 L1227.24,148.39 L1225.37,147.57 L1223.50,146.76 L1221.62,145.94 L1219.73,145.13 L1217.84,144.31 L1215.94,143.50 L1214.03,142.68 L1212.12,141.87 L1210.21,141.06 L1208.28,140.24 L1206.36,139.43 L1204.42,138.61 L1202.48,137.80 L1200.54,136.98 L1198.59,136.17 L1196.63,135.35 L1194.67,134.54 L1192.70,133.72 L1190.73,132.91 L1188.75,132.09 L1186.76,131.28 L1184.77,130.46 L1182.78,129.65 L1180.78,128.83 L1178.77,128.02 L1176.76,127.20 L1174.74,126.39 L1172.72,125.57 L1170.70,124.76 L1168.66,123.95 L1166.63,123.13 L1164.59,122.32 L1162.54,121.50 L1160.49,120.69 L1158.43,119.87 L1156.37,119.06 L1154.30,118.24 L1152.23,117.43 L1150.16,116.61 L1148.07,115.80 L1145.99,114.98 L1143.90,114.17 L1141.80,113.35 L1139.71,112.54 L1137.60,111.72 L1135.49,110.91 L1133.38,110.09 L1131.26,109.28 L1129.14,108.47 L1127.02,107.65 L1124.89,106.84 L1122.75,106.02 L1120.61,105.21 L1118.47,104.39 L1116.33,103.58 L1114.17,102.76 L1112.02,101.95 L1109.86,101.13 L1107.70,100.32 L1105.53,99.50 L1103.36,98.69 L1101.19,97.87 L1099.01,97.06 L1096.83,96.24 L1094.64,95.43 L1092.45,94.61 L1090.26,93.80 L1088.06,92.98 L1085.86,92.17 L1083.66,91.36 L1081.45,90.54 L1079.24,89.73 L1077.03,88.91 L1074.81,88.10 L1072.59,87.28 L1070.37,86.47 L1068.14,85.65 L1065.91,84.84 L1063.68,84.02 L1061.44,83.21 L1059.20,82.39 L1056.96,81.58 L1054.71,80.76 L1052.47,79.95 L1050.22,79.13 L1047.96,78.32 L1045.71,77.50 L1043.45,76.69 L1041.18,75.88 L1038.92,75.06 L1036.65,74.25 L1034.38,73.43 L1032.11,72.62 L1029.84,71.80 L1027.56,70.99 L1025.28,70.17 L1023.00,69.36 L1020.71,68.54 L1018.43,67.73 L1016.14,66.91 L1013.85,66.10 L1011.55,65.28 L1009.26,64.47 L1006.96,63.65 L1004.66,62.84 L1002.36,62.02 L1000.06,61.21 L997.75,60.39 L995.45,59.58 L993.14,58.77 L990.83,57.95 L988.52,57.14 L986.20,56.32 L983.89,55.51 L981.57,54.69 L979.25,53.88 L976.93,53.06 L974.61,52.25 L972.29,51.43 L969.97,50.62 L967.64,49.80 L965.32,48.99 L962.99,48.17 L960.66,47.36 L958.33,46.54 L956.00,45.73 L953.67,44.91 L951.34,44.10 L949.00,43.29 L946.67,42.47 L944.33,41.66 L942.00,40.84 L939.66,40.03 L937.32,39.21 L934.98,38.40 L932.64,37.58 L930.30,36.77 L927.96,35.95 L925.62,35.14 L923.28,34.32 L920.94,33.51 L918.60,32.69 L916.26,31.88 L913.91,31.06 L911.57,30.25 L909.23,29.43 L906.89,28.62 L904.54,27.80 L902.20,26.99 M902.20,613.61 L904.76,612.80 L907.31,611.98 L909.87,611.17 L912.42,610.35 L914.98,609.54 L917.53,608.72 L920.09,607.91 L922.64,607.09 L925.20,606.28 L927.75,605.46 L930.31,604.65 L932.86,603.83 L935.41,603.02 L937.96,602.20 L940.51,601.39 L943.06,600.57 L945.61,599.76 L948.16,598.94 L950.71,598.13 L953.26,597.32 L955.80,596.50 L958.35,595.69 L960.89,594.87 L963.43,594.06 L965.98,593.24 L968.52,592.43 L971.05,591.61 L973.59,590.80 L976.13,589.98 L978.66,589.17 L981.20,588.35 L983.73,587.54 L986.26,586.72 L988.79,585.91 L991.32,585.09 L993.84,584.28 L996.36,583.46 L998.89,582.65 L1001.41,581.83 L1003.92,581.02 L1006.44,580.21 L1008.96,579.39 L1011.47,578.58 L1013.98,577.76 L1016.49,576.95 L1018.99,576.13 L1021.50,575.32 L1024.00,574.50 L1026.50,573.69 L1028.99,572.87 L1031.49,572.06 L1033.98,571.24 L1036.47,570.43 L1038.95,569.61 L1041.44,568.80 L1043.92,567.98 L1046.40,567.17 L1048.88,566.35 L1051.35,565.54 L1053.82,564.73 L1056.29,563.91 L1058.75,563.10 L1061.21,562.28 L1063.67,561.47 L1066.13,560.65 L1068.58,559.84 L1071.03,559.02 L1073.47,558.21 L1075.92,557.39 L1078.36,556.58 L1080.79,555.76 L1083.23,554.95 L1085.65,554.13 L1088.08,553.32 L1090.50,552.50 L1092.92,551.69 L1095.34,550.87 L1097.75,550.06 L1100.15,549.24 L1102.56,548.43 L1104.96,547.62 L1107.35,546.80 L1109.75,545.99 L1112.14,545.17 L1114.52,544.36 L1116.90,543.54 L1119.28,542.73 L1121.65,541.91 L1124.02,541.10 L1126.38,540.28 L1128.74,539.47 L1131.09,538.65 L1133.44,537.84 L1135.79,537.02 L1138.13,536.21 L1140.47,535.39 L1142.80,534.58 L1145.13,533.76 L1147.46,532.95 L1149.77,532.13 L1152.09,531.32 L1154.40,530.51 L1156.70,529.69 L1159.00,528.88 L1161.30,528.06 L1163.59,527.25 L1165.87,526.43 L1168.15,525.62 L1170.43,524.80 L1172.70,523.99 L1174.96,523.17 L1177.22,522.36 L1179.48,521.54 L1181.72,520.73 L1183.97,519.91 L1186.21,519.10 L1188.44,518.28 L1190.67,517.47 L1192.89,516.65 L1195.11,515.84 L1197.32,515.03 L1199.52,514.21 L1201.72,513.40 L1203.91,512.58 L1206.10,511.77 L1208.28,510.95 L1210.46,510.14 L1212.63,509.32 L1214.80,508.51 L1216.96,507.69 L1219.11,506.88 L1221.25,506.06 L1223.40,505.25 L1225.53,504.43 L1227.66,503.62 L1229.78,502.80 L1231.90,501.99 L1234.01,501.17 L1236.11,500.36 L1238.21,499.55 L1240.30,498.73 L1242.38,497.92 L1244.46,497.10 L1246.53,496.29 L1248.60,495.47 L1250.65,494.66 L1252.70,493.84 L1254.75,493.03 L1256.79,492.21 L1258.82,491.40 L1260.84,490.58 L1262.86,489.77 L1264.87,488.95 L1266.88,488.14 L1268.87,487.32 L1270.86,486.51 L1272.85,485.69 L1274.82,484.88 L1276.79,484.06 L1278.75,483.25 L1280.71,482.44 L1282.65,481.62 L1284.59,480.81 L1286.53,479.99 L1288.45,479.18 L1290.37,478.36 L1292.28,477.55 L1294.18,476.73 L1296.08,475.92 L1297.97,475.10 L1299.85,474.29 L1301.72,473.47 L1303.59,472.66 L1305.44,471.84 L1307.30,471.03 L1309.14,470.21 L1310.97,469.40 L1312.80,468.58 L1314.62,467.77 L1316.43,466.96 L1318.23,466.14 L1320.03,465.33 L1321.82,464.51 L1323.60,463.70 L1325.37,462.88 L1327.13,462.07 L1328.89,461.25 L1330.63,460.44 L1332.37,459.62 L1334.10,458.81 L1335.83,457.99 L1337.54,457.18 L1339.25,456.36 L1340.95,455.55 L1342.64,454.73 L1344.32,453.92 L1345.99,453.10 L1347.65,452.29 L1349.31,451.47 L1350.96,450.66 L1352.60,449.85 L1354.23,449.03 L1355.85,448.22 L1357.46,447.40 L1359.06,446.59 L1360.66,445.77 L1362.25,444.96 L1363.82,444.14 L1365.39,443.33 L1366.95,442.51 L1368.51,441.70 L1370.05,440.88 L1371.58,440.07 L1373.11,439.25 L1374.62,438.44 L1376.13,437.62 L1377.63,436.81 L1379.12,435.99 L1380.60,435.18 L1382.07,434.37 L1383.53,433.55 L1384.98,432.74 L1386.42,431.92 L1387.86,431.11 L1389.28,430.29 L1390.70,429.48 L1392.10,428.66 L1393.50,427.85 L1394.89,427.03 L1396.27,426.22 L1397.64,425.40 L1399.00,424.59 L1400.34,423.77 L1401.69,422.96 L1403.02,422.14 L1404.34,421.33 L1405.65,420.51 L1406.95,419.70 L1408.24,418.88 L1409.53,418.07 L1410.80,417.26 L1412.06,416.44 L1413.32,415.63 L1414.56,414.81 L1415.80,414.00 L1417.02,413.18 L1418.23,412.37 L1419.44,411.55 L1420.63,410.74 L1421.82,409.92 L1423.00,409.11 L1424.16,408.29 L1425.32,407.48 L1426.46,406.66 L1427.60,405.85 L1428.72,405.03 L1429.84,404.22 L1430.94,403.40 L1432.04,402.59 L1433.12,401.77 L1434.20,400.96 L1435.26,400.15 L1436.32,399.33 L1437.36,398.52 L1438.40,397.70 L1439.42,396.89 L1440.44,396.07 L1441.44,395.26 L1442.43,394.44 L1443.42,393.63 L1444.39,392.81 L1445.35,392.00 L1446.31,391.18 L1447.25,390.37 L1448.18,389.55 L1449.10,388.74 L1450.01,387.92 L1450.91,387.11 L1451.80,386.29 L1452.68,385.48 L1453.55,384.67 L1454.41,383.85 L1455.26,383.04 L1456.09,382.22 L1456.92,381.41 L1457.74,380.59 L1458.54,379.78 L1459.34,378.96 L1460.12,378.15 L1460.90,377.33 L1461.66,376.52 L1462.41,375.70 L1463.15,374.89 L1463.89,374.07 L1464.61,373.26 L1465.32,372.44 L1466.02,371.63 L1466.70,370.81 L1467.38,370.00 L1468.05,369.19 L1468.71,368.37 L1469.35,367.56 L1469.99,366.74 L1470.61,365.93 L1471.22,365.11 L1471.82,364.30 L1472.42,363.48 L1473.00,362.67 L1473.57,361.85 L1474.12,361.04 L1474.67,360.22 L1475.21,359.41 L1475.73,358.59 L1476.25,357.78 L1476.75,356.96 L1477.25,356.15 L1477.73,355.33 L1478.20,354.52 L1478.66,353.70 L1479.11,352.89 L1479.55,352.08 L1479.98,351.26 L1480.39,350.45 L1480.80,349.63 L1481.19,348.82 L1481.58,348.00 L1481.95,347.19 L1482.31,346.37 L1482.66,345.56 L1483.00,344.74 L1483.33,343.93 L1483.64,343.11 L1483.95,342.30 L1484.24,341.48 L1484.53,340.67 L1484.80,339.85 L1485.06,339.04 L1485.31,338.22 L1485.55,337.41 L1485.78,336.60 L1486.00,335.78 L1486.20,334.97 L1486.40,334.15 L1486.58,333.34 L1486.76,332.52 L1486.92,331.71 L1487.07,330.89 L1487.21,330.08 L1487.34,329.26 L1487.45,328.45 L1487.56,327.63 L1487.65,326.82 L1487.74,326.00 L1487.81,325.19 L1487.87,324.37 L1487.92,323.56 L1487.96,322.74 L1487.99,321.93 L1488.00,321.11 L1488.01,320.30 L1488.00,319.49 L1487.99,318.67 L1487.96,317.86 L1487.92,317.04 L1487.87,316.23 L1487.81,315.41 L1487.74,314.60 L1487.65,313.78 L1487.56,312.97 L1487.45,312.15 L1487.34,311.34 L1487.21,310.52 L1487.07,309.71 L1486.92,308.89 L1486.76,308.08 L1486.58,307.26 L1486.40,306.45 L1486.20,305.63 L1486.00,304.82 L1485.78,304.00 L1485.55,303.19 L1485.31,302.38 L1485.06,301.56 L1484.80,300.75 L1484.53,299.93 L1484.24,299.12 L1483.95,298.30 L1483.64,297.49 L1483.33,296.67 L1483.00,295.86 L1482.66,295.04 L1482.31,294.23 L1481.95,293.41 L1481.58,292.60 L1481.19,291.78 L1480.80,290.97 L1480.39,290.15 L1479.98,289.34 L1479.55,288.52 L1479.11,287.71 L1478.66,286.90 L1478.20,286.08 L1477.73,285.27 L1477.25,284.45 L1476.75,283.64 L1476.25,282.82 L1475.73,282.01 L1475.21,281.19 L1474.67,280.38 L1474.12,279.56 L1473.57,278.75 L1473.00,277.93 L1472.42,277.12 L1471.82,276.30 L1471.22,275.49 L1470.61,274.67 L1469.99,273.86 L1469.35,273.04 L1468.71,272.23 L1468.05,271.42 L1467.38,270.60 L1466.70,269.79 L1466.02,268.97 L1465.32,268.16 L1464.61,267.34 L1463.89,266.53 L1463.15,265.71 L1462.41,264.90 L1461.66,264.08 L1460.90,263.27 L1460.12,262.45 L1459.34,261.64 L1458.54,260.82 L1457.74,260.01 L1456.92,259.19 L1456.09,258.38 L1455.26,257.56 L1454.41,256.75 L1453.55,255.93 L1452.68,255.12 L1451.80,254.31 L1450.91,253.49 L1450.01,252.68 L1449.10,251.86 L1448.18,251.05 L1447.25,250.23 L1446.31,249.42 L1445.35,248.60 L1444.39,247.79 L1443.42,246.97 L1442.43,246.16 L1441.44,245.34 L1440.44,244.53 L1439.42,243.71 L1438.40,242.90 L1437.36,242.08 L1436.32,241.27 L1435.26,240.45 L1434.20,239.64 L1433.12,238.83 L1432.04,238.01 L1430.94,237.20 L1429.84,236.38 L1428.72,235.57 L1427.60,234.75 L1426.46,233.94 L1425.32,233.12 L1424.16,232.31 L1423.00,231.49 L1421.82,230.68 L1420.63,229.86 L1419.44,229.05 L1418.23,228.23 L1417.02,227.42 L1415.80,226.60 L1414.56,225.79 L1413.32,224.97 L1412.06,224.16 L1410.80,223.34 L1409.53,222.53 L1408.24,221.72 L1406.95,220.90 L1405.65,220.09 L1404.34,219.27 L1403.02,218.46 L1401.69,217.64 L1400.34,216.83 L1399.00,216.01 L1397.64,215.20 L1396.27,214.38 L1394.89,213.57 L1393.50,212.75 L1392.10,211.94 L1390.70,211.12 L1389.28,210.31 L1387.86,209.49 L1386.42,208.68 L1384.98,207.86 L1383.53,207.05 L1382.07,206.24 L1380.60,205.42 L1379.12,204.61 L1377.63,203.79 L1376.13,202.98 L1374.62,202.16 L1373.11,201.35 L1371.58,200.53 L1370.05,199.72 L1368.51,198.90 L1366.95,198.09 L1365.39,197.27 L1363.82,196.46 L1362.25,195.64 L1360.66,194.83 L1359.06,194.01 L1357.46,193.20 L1355.85,192.38 L1354.23,191.57 L1352.60,190.75 L1350.96,189.94 L1349.31,189.13 L1347.65,188.31 L1345.99,187.50 L1344.32,186.68 L1342.64,185.87 L1340.95,185.05 L1339.25,184.24 L1337.54,183.42 L1335.83,182.61 L1334.10,181.79 L1332.37,180.98 L1330.63,180.16 L1328.89,179.35 L1327.13,178.53 L1325.37,177.72 L1323.60,176.90 L1321.82,176.09 L1320.03,175.27 L1318.23,174.46 L1316.43,173.65 L1314.62,172.83 L1312.80,172.02 L1310.97,171.20 L1309.14,170.39 L1307.30,169.57 L1305.44,168.76 L1303.59,167.94 L1301.72,167.13 L1299.85,166.31 L1297.97,165.50 L1296.08,164.68 L1294.18,163.87 L1292.28,163.05 L1290.37,162.24 L1288.45,161.42 L1286.53,160.61 L1284.59,159.79 L1282.65,158.98 L1280.71,158.16 L1278.75,157.35 L1276.79,156.54 L1274.82,155.72 L1272.85,154.91 L1270.86,154.09 L1268.87,153.28 L1266.88,152.46 L1264.87,151.65 L1262.86,150.83 L1260.84,150.02 L1258.82,149.20 L1256.79,148.39 L1254.75,147.57 L1252.70,146.76 L1250.65,145.94 L1248.60,145.13 L1246.53,144.31 L1244.46,143.50 L1242.38,142.68 L1240.30,141.87 L1238.21,141.06 L1236.11,140.24 L1234.01,139.43 L1231.90,138.61 L1229.78,137.80 L1227.66,136.98 L1225.53,136.17 L1223.40,135.35 L1221.25,134.54 L1219.11,133.72 L1216.96,132.91 L1214.80,132.09 L1212.63,131.28 L1210.46,130.46 L1208.28,129.65 L1206.10,128.83 L1203.91,128.02 L1201.72,127.20 L1199.52,126.39 L1197.32,125.57 L1195.11,124.76 L1192.89,123.95 L1190.67,123.13 L1188.44,122.32 L1186.21,121.50 L1183.97,120.69 L1181.72,119.87 L1179.48,119.06 L1177.22,118.24 L1174.96,117.43 L1172.70,116.61 L1170.43,115.80 L1168.15,114.98 L1165.87,114.17 L1163.59,113.35 L1161.30,112.54 L1159.00,111.72 L1156.70,110.91 L1154.40,110.09 L1152.09,109.28 L1149.77,108.47 L1147.46,107.65 L1145.13,106.84 L1142.80,106.02 L1140.47,105.21 L1138.13,104.39 L1135.79,103.58 L1133.44,102.76 L1131.09,101.95 L1128.74,101.13 L1126.38,100.32 L1124.02,99.50 L1121.65,98.69 L1119.28,97.87 L1116.90,97.06 L1114.52,96.24 L1112.14,95.43 L1109.75,94.61 L1107.35,93.80 L1104.96,92.98 L1102.56,92.17 L1100.15,91.36 L1097.75,90.54 L1095.34,89.73 L1092.92,88.91 L1090.50,88.10 L1088.08,87.28 L1085.65,86.47 L1083.23,85.65 L1080.79,84.84 L1078.36,84.02 L1075.92,83.21 L1073.47,82.39 L1071.03,81.58 L1068.58,80.76 L1066.13,79.95 L1063.67,79.13 L1061.21,78.32 L1058.75,77.50 L1056.29,76.69 L1053.82,75.88 L1051.35,75.06 L1048.88,74.25 L1046.40,73.43 L1043.92,72.62 L1041.44,71.80 L1038.95,70.99 L1036.47,70.17 L1033.98,69.36 L1031.49,68.54 L1028.99,67.73 L1026.50,66.91 L1024.00,66.10 L1021.50,65.28 L1018.99,64.47 L1016.49,63.65 L1013.98,62.84 L1011.47,62.02 L1008.96,61.21 L1006.44,60.39 L1003.92,59.58 L1001.41,58.77 L998.89,57.95 L996.36,57.14 L993.84,56.32 L991.32,55.51 L988.79,54.69 L986.26,53.88 L983.73,53.06 L981.20,52.25 L978.66,51.43 L976.13,50.62 L973.59,49.80 L971.05,48.99 L968.52,48.17 L965.98,47.36 L963.43,46.54 L960.89,45.73 L958.35,44.91 L955.80,44.10 L953.26,43.29 L950.71,42.47 L948.16,41.66 L945.61,40.84 L943.06,40.03 L940.51,39.21 L937.96,38.40 L935.41,37.58 L932.86,36.77 L930.31,35.95 L927.75,35.14 L925.20,34.32 L922.64,33.51 L920.09,32.69 L917.53,31.88 L914.98,31.06 L912.42,30.25 L909.87,29.43 L907.31,28.62 L904.76,27.80 L902.20,26.99" fill="none" stroke="#7c7c7c" stroke-width="2.08" stroke-dasharray="2.08 3.43"/>
<path d="M750.58,564.73 L1053.82,564.73 M609.29,515.84 L1195.11,515.84 M487.97,466.96 L1316.43,466.96 M394.87,418.07 L1409.53,418.07 M336.35,369.19 L1468.05,369.19 M316.39,320.30 L1488.01,320.30 M336.35,271.42 L1468.05,271.42 M394.87,222.53 L1409.53,222.53 M487.97,173.65 L1316.43,173.65 M609.29,124.76 L1195.11,124.76 M750.58,75.88 L1053.82,75.88" fill="none" stroke="#7c7c7c" stroke-width="2.08" stroke-dasharray="2.08 3.43"/>
<path d="M564.00,176.00 C563.83,183.83 561.50,207.33 563.00,223.00 C564.50,238.67 568.00,255.50 573.00,270.00 C578.00,284.50 581.83,295.00 593.00,310.00 C604.17,325.00 623.07,345.08 640.00,360.00 C656.93,374.92 685.50,392.92 694.60,399.50" fill="none" stroke="#727272" stroke-width="1.3" stroke-dasharray="1.3 2.4" opacity="1" stroke-linejoin="round"/>
<path d="M382.00,268.00 C382.03,274.07 381.05,291.67 382.20,304.40 C383.35,317.13 385.20,334.02 388.90,344.40 C392.60,354.78 397.00,358.55 404.40,366.70 C411.80,374.85 419.97,382.93 433.30,393.30 C446.63,403.67 475.88,422.97 484.40,428.90" fill="none" stroke="#727272" stroke-width="1.3" stroke-dasharray="1.3 2.4" opacity="1" stroke-linejoin="round"/>
<text x="301.1" y="329.8" font-family="Liberation Sans" font-size="10.2" fill="#8c8c8c" textLength="31.2" lengthAdjust="spacingAndGlyphs">+180°</text>
<text x="398.7" y="329.8" font-family="Liberation Sans" font-size="10.2" fill="#8c8c8c" textLength="31.2" lengthAdjust="spacingAndGlyphs">+150°</text>
<text x="496.4" y="329.8" font-family="Liberation Sans" font-size="10.2" fill="#8c8c8c" textLength="31.2" lengthAdjust="spacingAndGlyphs">+120°</text>
<text x="596.9" y="329.8" font-family="Liberation Sans" font-size="10.2" fill="#8c8c8c" textLength="25.3" lengthAdjust="spacingAndGlyphs">+90°</text>
<text x="694.6" y="329.8" font-family="Liberation Sans" font-size="10.2" fill="#8c8c8c" textLength="25.3" lengthAdjust="spacingAndGlyphs">+60°</text>
<text x="792.2" y="329.8" font-family="Liberation Sans" font-size="10.2" fill="#8c8c8c" textLength="25.3" lengthAdjust="spacingAndGlyphs">+30°</text>
<text x="892.8" y="329.8" font-family="Liberation Sans" font-size="10.2" fill="#8c8c8c" textLength="19.4" lengthAdjust="spacingAndGlyphs">+0°</text>
<text x="984.5" y="329.8" font-family="Liberation Sans" font-size="10.2" fill="#8c8c8c" textLength="31.2" lengthAdjust="spacingAndGlyphs">+330°</text>
<text x="1082.2" y="329.8" font-family="Liberation Sans" font-size="10.2" fill="#8c8c8c" textLength="31.2" lengthAdjust="spacingAndGlyphs">+300°</text>
<text x="1179.8" y="329.8" font-family="Liberation Sans" font-size="10.2" fill="#8c8c8c" textLength="31.2" lengthAdjust="spacingAndGlyphs">+270°</text>
<text x="1277.4" y="329.8" font-family="Liberation Sans" font-size="10.2" fill="#8c8c8c" textLength="31.2" lengthAdjust="spacingAndGlyphs">+240°</text>
<text x="1375.1" y="329.8" font-family="Liberation Sans" font-size="10.2" fill="#8c8c8c" textLength="31.2" lengthAdjust="spacingAndGlyphs">+210°</text>
<text x="1472.7" y="329.8" font-family="Liberation Sans" font-size="10.2" fill="#8c8c8c" textLength="31.2" lengthAdjust="spacingAndGlyphs">+180°</text>
<text x="889.9" y="25.0" font-family="Liberation Sans" font-size="10.2" fill="#8c8c8c" textLength="25.3" lengthAdjust="spacingAndGlyphs">+90°</text>
<text x="889.9" y="122.8" font-family="Liberation Sans" font-size="10.2" fill="#8c8c8c" textLength="25.3" lengthAdjust="spacingAndGlyphs">+60°</text>
<text x="889.9" y="220.5" font-family="Liberation Sans" font-size="10.2" fill="#8c8c8c" textLength="25.3" lengthAdjust="spacingAndGlyphs">+30°</text>
<text x="889.9" y="428.1" font-family="Liberation Sans" font-size="10.2" fill="#8c8c8c" textLength="25.3" lengthAdjust="spacingAndGlyphs">−30°</text>
<text x="889.9" y="525.8" font-family="Liberation Sans" font-size="10.2" fill="#8c8c8c" textLength="25.3" lengthAdjust="spacingAndGlyphs">−60°</text>
<text x="889.9" y="623.6" font-family="Liberation Sans" font-size="10.2" fill="#8c8c8c" textLength="25.3" lengthAdjust="spacingAndGlyphs">−90°</text>
<path d="M871.60,125.60 C870.00,121.70 865.78,109.62 862.00,102.20 C858.22,94.78 852.57,85.35 848.90,81.10 C845.23,76.85 845.18,77.25 840.00,76.70 C834.82,76.15 830.02,75.30 817.80,77.80 C805.58,80.30 782.27,87.07 766.70,91.70 C751.13,96.33 745.52,98.55 724.40,105.60 C703.28,112.65 662.23,126.10 640.00,134.00 C617.77,141.90 610.27,145.00 591.00,153.00 C571.73,161.00 539.78,175.17 524.40,182.00 C509.02,188.83 508.32,189.12 498.70,194.00 C489.08,198.88 472.03,208.42 466.70,211.30" fill="none" stroke="#52c569" stroke-width="1.4" stroke-dasharray="1.4 2.4" opacity="1" stroke-linejoin="round"/>
<path d="M724.40,84.40 C710.67,89.97 667.92,107.20 642.00,117.80 C616.08,128.40 590.35,138.47 568.90,148.00 C547.45,157.53 526.33,167.78 513.30,175.00 C500.27,182.22 499.58,185.02 490.70,191.30 C481.82,197.58 465.12,209.13 460.00,212.70" fill="none" stroke="#52c569" stroke-width="1.4" stroke-dasharray="1.4 2.4" opacity="1" stroke-linejoin="round"/>
<path d="M720.00,87.00 C707.00,92.58 667.18,109.92 642.00,120.50 C616.82,131.08 590.35,141.00 568.90,150.50 C547.45,160.00 526.33,170.42 513.30,177.50 C500.27,184.58 499.25,187.00 490.70,193.00 C482.15,199.00 466.78,210.08 462.00,213.50" fill="none" stroke="#52c569" stroke-width="1.3" stroke-dasharray="1.4 2.4" opacity="0.85" stroke-linejoin="round"/>
<path d="M871.60,125.60 L874.90,136.00" fill="none" stroke="#52c569" stroke-width="1.5" opacity="1" stroke-linejoin="round"/>
<path d="M951.00,110.00 C949.58,105.00 944.83,89.58 942.50,80.00 C940.17,70.42 936.78,57.92 937.00,52.50 C937.22,47.08 939.13,47.92 943.80,47.50 C948.47,47.08 955.63,48.12 965.00,50.00 C974.37,51.88 985.83,54.58 1000.00,58.75 C1014.17,62.92 1033.33,69.62 1050.00,75.00 C1066.67,80.38 1082.50,85.17 1100.00,91.00 C1117.50,96.83 1145.83,106.83 1155.00,110.00" fill="none" stroke="#52c569" stroke-width="1.4" stroke-dasharray="1.4 2.4" opacity="1" stroke-linejoin="round"/>
<path d="M951.00,110.00 L955.00,118.75" fill="none" stroke="#52c569" stroke-width="1.5" opacity="1" stroke-linejoin="round"/>
<path d="M973.75,95.00 C973.29,91.67 970.38,79.58 971.00,75.00 C971.62,70.42 972.67,68.83 977.50,67.50 C982.33,66.17 990.00,65.96 1000.00,67.00 C1010.00,68.04 1025.00,70.96 1037.50,73.75 C1050.00,76.54 1062.50,80.04 1075.00,83.75 C1087.50,87.46 1099.17,91.62 1112.50,96.00 C1125.83,100.38 1147.92,107.67 1155.00,110.00" fill="none" stroke="#52c569" stroke-width="1.4" stroke-dasharray="1.4 2.4" opacity="1" stroke-linejoin="round"/>
<path d="M973.75,95.00 L975.75,102.00" fill="none" stroke="#52c569" stroke-width="1.5" opacity="1" stroke-linejoin="round"/>
<path d="M961.25,105.00 L966.25,130.00" fill="none" stroke="#888" stroke-width="1.0" opacity="1" stroke-linejoin="round"/>
<path d="M1137.00,193.75 C1140.42,191.88 1147.00,185.42 1157.50,182.50 C1168.00,179.58 1188.75,177.08 1200.00,176.25 C1211.25,175.42 1212.50,176.04 1225.00,177.50 C1237.50,178.96 1256.67,180.92 1275.00,185.00 C1293.33,189.08 1319.72,198.02 1335.00,202.00 C1350.28,205.98 1354.75,205.53 1366.70,208.90 C1378.65,212.27 1400.03,219.98 1406.70,222.20" fill="none" stroke="#2a9eaa" stroke-width="1.4" stroke-dasharray="1.4 2.4" opacity="1" stroke-linejoin="round"/>
<path d="M1343.75,203.75 C1347.58,204.24 1358.44,205.29 1366.70,206.70 C1374.96,208.11 1388.87,211.28 1393.30,212.20" fill="none" stroke="#52c569" stroke-width="1.4" stroke-dasharray="1.4 2.4" opacity="1" stroke-linejoin="round"/>
<path d="M1335.00,202.50 L1343.75,203.75" fill="none" stroke="#52c569" stroke-width="1.5" opacity="1" stroke-linejoin="round"/>
<path d="M393.75,223.75 C393.96,228.12 393.96,241.88 395.00,250.00 C396.04,258.12 397.08,265.00 400.00,272.50 C402.92,280.00 407.50,287.92 412.50,295.00 C417.50,302.08 423.96,308.75 430.00,315.00 C436.04,321.25 445.62,329.58 448.75,332.50" fill="none" stroke="#2a9eaa" stroke-width="1.4" stroke-dasharray="1.4 2.4" opacity="1" stroke-linejoin="round"/>
<path d="M409.50,212.50 L427.50,232.50" fill="none" stroke="#52c569" stroke-width="1.4" stroke-dasharray="1.4 2.4" opacity="1" stroke-linejoin="round"/>
<rect x="873.9" y="135" width="2" height="2" fill="#f05a28"/>
<rect x="954" y="117.75" width="2" height="2" fill="#f05a28"/>
<rect x="974.75" y="101" width="2" height="2" fill="#f05a28"/>
<rect x="1136" y="192.75" width="2" height="2" fill="#f05a28"/>
<rect x="1334" y="201.5" width="2" height="2" fill="#f05a28"/>
<ellipse cx="455" cy="219.2" rx="46.7" ry="14.9" transform="rotate(-25.2 455 219.2)" fill="none" stroke="#52c569" stroke-width="2.2"/>
<path d="M465.51,295.55 C470.11,295.20 474.17,296.84 477.16,298.79 C480.15,300.75 482.04,304.11 483.46,307.29 C484.88,310.48 485.66,314.01 485.66,317.89 C485.66,321.78 484.88,326.89 483.46,330.59 C482.04,334.30 480.15,338.03 477.16,340.14 C474.17,342.26 469.41,343.18 465.51,343.30 C461.61,343.41 457.48,342.58 453.76,340.81 C450.04,339.05 445.80,335.99 443.16,332.70 C440.52,329.40 438.43,324.93 437.91,321.04 C437.38,317.16 438.07,312.75 440.01,309.39 C441.95,306.04 445.31,303.20 449.56,300.89 C453.81,298.59 460.91,295.90 465.51,295.55Z" fill="none" stroke="#2a98a2" stroke-width="2.2"/>
<circle cx="451.5" cy="218.6" r="2.3" fill="#f00"/>
<path d="M424.8,233.3 H431.8 M428.3,229.8 V236.8" stroke="#f00" stroke-width="1.3"/>
<path d="M445.8,333.3 H452.8 M449.3,329.8 V336.8" stroke="#f00" stroke-width="1.3"/>
<text x="452" y="222" font-family="Liberation Sans" font-size="11" fill="#fff" text-anchor="middle">COM</text>
<text x="461" y="323" font-family="Liberation Sans" font-size="11" fill="#fff" text-anchor="middle">HYD</text>
<text x="315.2" y="29.60" font-family="Liberation Mono" font-size="13.9" fill="#fff" xml:space="preserve">UK0030</text>
<text x="315.2" y="42.67" font-family="Liberation Mono" font-size="13.9" fill="#fff" xml:space="preserve">Beg: 20251219 00:40:34 (sol = 266.99°)</text>
<text x="315.2" y="55.74" font-family="Liberation Mono" font-size="13.9" fill="#fff" xml:space="preserve">End: 20251219 06:27:41 (sol = 267.24°)</text>
<text x="315.2" y="68.81" font-family="Liberation Mono" font-size="13.9" fill="#fff" xml:space="preserve">--------------------------------------</text>
<text x="315.2" y="81.88" font-family="Liberation Mono" font-size="13.9" fill="#fff" xml:space="preserve">COM: 4</text>
<text x="315.2" y="94.95" font-family="Liberation Mono" font-size="13.9" fill="#fff" xml:space="preserve">...: 2</text>
<text x="315.2" y="108.02" font-family="Liberation Mono" font-size="13.9" fill="#fff" xml:space="preserve">HYD: 1</text>
<defs><clipPath id="ax"><rect x="19.6" y="641.5" width="1765.7" height="200.8"/></clipPath></defs>
<g clip-path="url(#ax)">
<text transform="translate(148.90,696.90) rotate(-90) scale(0.9446,1.1000)" font-family="Liberation Sans" font-size="28" fill="#505050">APR</text>
<text transform="translate(294.40,701.04) rotate(-90) scale(0.9714,1.1105)" font-family="Liberation Sans" font-size="28" fill="#505050">MAY</text>
<text transform="translate(436.00,690.90) rotate(-90) scale(0.9057,1.1053)" font-family="Liberation Sans" font-size="28" fill="#505050">JUN</text>
<text transform="translate(575.60,681.60) rotate(-90) scale(0.8367,1.0526)" font-family="Liberation Sans" font-size="28" fill="#505050">JUL</text>
<text transform="translate(724.00,699.30) rotate(-90) scale(1.0000,1.1474)" font-family="Liberation Sans" font-size="28" fill="#505050">AUG</text>
<text transform="translate(872.70,694.21) rotate(-90) scale(0.9056,1.1579)" font-family="Liberation Sans" font-size="28" fill="#505050">SEP</text>
<text transform="translate(1016.70,699.85) rotate(-90) scale(0.9500,1.1737)" font-family="Liberation Sans" font-size="28" fill="#505050">OCT</text>
<text transform="translate(1169.60,704.14) rotate(-90) scale(0.9678,1.1158)" font-family="Liberation Sans" font-size="28" fill="#505050">NOV</text>
<text transform="translate(1318.90,700.29) rotate(-90) scale(0.9429,1.1526)" font-family="Liberation Sans" font-size="28" fill="#505050">DEC</text>
<text transform="translate(1469.30,688.10) rotate(-90) scale(0.9235,1.1211)" font-family="Liberation Sans" font-size="28" fill="#505050">JAN</text>
<text transform="translate(1628.80,695.83) rotate(-90) scale(0.9157,1.1632)" font-family="Liberation Sans" font-size="28" fill="#505050">FEB</text>
<text transform="translate(1766.70,705.24) rotate(-90) scale(0.9712,1.1684)" font-family="Liberation Sans" font-size="28" fill="#505050">MAR</text>
</g>
<line x1="1330" y1="641.5" x2="1330" y2="842.3" stroke="#f00" stroke-width="2.4" stroke-dasharray="5.1 2.2"/>
<rect x="106.0" y="832.0" width="23.0" height="4" fill="#c2df23"/>
<rect x="165.0" y="832.0" width="180.0" height="4" fill="#c2df23"/>
<rect x="366.0" y="832.0" width="259.0" height="4" fill="#c2df23"/>
<rect x="635.0" y="832.0" width="150.8" height="4" fill="#c2df23"/>
<rect x="807.0" y="832.0" width="91.8" height="4" fill="#c2df23"/>
<rect x="920.0" y="832.0" width="53.0" height="4" fill="#c2df23"/>
<rect x="984.0" y="832.0" width="81.8" height="4" fill="#c2df23"/>
<rect x="1082.0" y="832.0" width="120.9" height="4" fill="#c2df23"/>
<rect x="1244.0" y="832.0" width="82.0" height="4" fill="#c2df23"/>
<rect x="1336.8" y="832.0" width="18.1" height="4" fill="#c2df23"/>
<rect x="1380.9" y="832.0" width="63.0" height="4" fill="#c2df23"/>
<rect x="1459.0" y="832.0" width="52.8" height="4" fill="#c2df23"/>
<rect x="1523.0" y="832.0" width="23.9" height="4" fill="#c2df23"/>
<rect x="1724.0" y="832.0" width="23.8" height="4" fill="#c2df23"/>
<rect x="1758.0" y="832.0" width="24.0" height="4" fill="#c2df23"/>
<rect x="165.0" y="816.0" width="23.0" height="4" fill="#86d549"/>
<rect x="223.0" y="816.0" width="63.0" height="4" fill="#86d549"/>
<rect x="312.0" y="816.0" width="28.0" height="4" fill="#86d549"/>
<rect x="366.0" y="816.0" width="126.0" height="4" fill="#86d549"/>
<rect x="508.0" y="816.0" width="145.9" height="4" fill="#86d549"/>
<rect x="704.0" y="816.0" width="32.9" height="4" fill="#86d549"/>
<rect x="773.0" y="816.0" width="72.0" height="4" fill="#86d549"/>
<rect x="871.0" y="816.0" width="117.0" height="4" fill="#86d549"/>
<rect x="1003.0" y="816.0" width="13.9" height="4" fill="#86d549"/>
<rect x="1062.0" y="816.0" width="150.8" height="4" fill="#86d549"/>
<rect x="1244.0" y="816.0" width="22.9" height="4" fill="#86d549"/>
<rect x="1293.0" y="816.0" width="22.9" height="4" fill="#86d549"/>
<rect x="1342.0" y="816.0" width="22.8" height="4" fill="#86d549"/>
<rect x="1386.0" y="816.0" width="42.8" height="4" fill="#86d549"/>
<rect x="1459.0" y="816.0" width="23.9" height="4" fill="#86d549"/>
<rect x="1548.0" y="816.0" width="23.0" height="4" fill="#86d549"/>
<rect x="165.0" y="800.0" width="23.0" height="4" fill="#52c569"/>
<rect x="258.0" y="800.0" width="228.8" height="4" fill="#52c569"/>
<rect x="508.0" y="800.0" width="106.8" height="4" fill="#52c569"/>
<rect x="626.0" y="800.0" width="91.9" height="4" fill="#52c569"/>
<rect x="729.0" y="800.0" width="97.0" height="4" fill="#52c569"/>
<rect x="948.9" y="800.0" width="200.0" height="4" fill="#52c569"/>
<rect x="1160.0" y="800.0" width="87.9" height="4" fill="#52c569"/>
<rect x="1258.0" y="800.0" width="185.9" height="4" fill="#52c569"/>
<rect x="1459.0" y="800.0" width="23.9" height="4" fill="#52c569"/>
<rect x="1552.0" y="800.0" width="23.8" height="4" fill="#52c569"/>
<rect x="194.0" y="783.0" width="24.0" height="4" fill="#2ab07f"/>
<rect x="321.0" y="783.0" width="186.0" height="4" fill="#2ab07f"/>
<rect x="518.0" y="783.0" width="23.0" height="4" fill="#2ab07f"/>
<rect x="557.0" y="783.0" width="125.8" height="4" fill="#2ab07f"/>
<rect x="807.0" y="783.0" width="23.8" height="4" fill="#2ab07f"/>
<rect x="954.0" y="783.0" width="19.0" height="4" fill="#2ab07f"/>
<rect x="988.0" y="783.0" width="137.0" height="4" fill="#2ab07f"/>
<rect x="1155.0" y="783.0" width="62.9" height="4" fill="#2ab07f"/>
<rect x="1244.0" y="783.0" width="22.9" height="4" fill="#2ab07f"/>
<rect x="1317.0" y="783.0" width="24.0" height="4" fill="#2ab07f"/>
<rect x="1395.9" y="783.0" width="23.0" height="4" fill="#2ab07f"/>
<rect x="1463.9" y="783.0" width="186.0" height="4" fill="#2ab07f"/>
<rect x="341.0" y="767.0" width="29.0" height="4" fill="#1e9b8a"/>
<rect x="410.0" y="767.0" width="38.0" height="4" fill="#1e9b8a"/>
<rect x="469.0" y="767.0" width="23.0" height="4" fill="#1e9b8a"/>
<rect x="527.0" y="767.0" width="19.0" height="4" fill="#1e9b8a"/>
<rect x="562.0" y="767.0" width="28.0" height="4" fill="#1e9b8a"/>
<rect x="616.0" y="767.0" width="33.0" height="4" fill="#1e9b8a"/>
<rect x="959.0" y="767.0" width="28.9" height="4" fill="#1e9b8a"/>
<rect x="1062.0" y="767.0" width="23.9" height="4" fill="#1e9b8a"/>
<rect x="1100.9" y="767.0" width="24.1" height="4" fill="#1e9b8a"/>
<rect x="1160.0" y="767.0" width="33.8" height="4" fill="#1e9b8a"/>
<rect x="1248.0" y="767.0" width="24.0" height="4" fill="#1e9b8a"/>
<rect x="1425.0" y="767.0" width="86.8" height="4" fill="#1e9b8a"/>
<rect x="420.0" y="750.0" width="23.0" height="4" fill="#25858e"/>
<rect x="532.0" y="750.0" width="24.0" height="4" fill="#25858e"/>
<rect x="567.0" y="750.0" width="23.0" height="4" fill="#25858e"/>
<rect x="621.0" y="750.0" width="121.0" height="4" fill="#25858e"/>
<rect x="968.9" y="750.0" width="166.0" height="4" fill="#25858e"/>
<rect x="1185.0" y="750.0" width="160.8" height="4" fill="#25858e"/>
<rect x="1469.0" y="750.0" width="23.8" height="4" fill="#25858e"/>
<rect x="429.0" y="734.0" width="24.0" height="4" fill="#2d708e"/>
<rect x="576.0" y="734.0" width="156.8" height="4" fill="#2d708e"/>
<rect x="992.8" y="734.0" width="112.1" height="4" fill="#2d708e"/>
<rect x="1115.9" y="734.0" width="107.1" height="4" fill="#2d708e"/>
<rect x="1262.9" y="734.0" width="29.1" height="4" fill="#2d708e"/>
<rect x="1489.0" y="734.0" width="22.8" height="4" fill="#2d708e"/>
<rect x="591.0" y="718.0" width="24.0" height="4" fill="#38588c"/>
<rect x="655.0" y="718.0" width="116.9" height="4" fill="#38588c"/>
<rect x="1071.7" y="718.0" width="171.3" height="4" fill="#38588c"/>
<rect x="1262.9" y="718.0" width="24.1" height="4" fill="#38588c"/>
<rect x="596.0" y="701.0" width="136.8" height="4" fill="#433e85"/>
<rect x="1090.7" y="701.0" width="29.2" height="4" fill="#433e85"/>
<rect x="1198.9" y="701.0" width="24.1" height="4" fill="#433e85"/>
<rect x="1273.0" y="701.0" width="53.0" height="4" fill="#433e85"/>
<rect x="1110.8" y="685.0" width="24.1" height="4" fill="#482173"/>
<path d="M74,641.5 V842.3 M218,641.5 V842.3 M365,641.5 V842.3 M505,641.5 V842.3 M650,641.5 V842.3 M797,641.5 V842.3 M940,641.5 V842.3 M1091,641.5 V842.3 M1239,641.5 V842.3 M1394,641.5 V842.3 M1548,641.5 V842.3 M1687,641.5 V842.3" stroke="#6c6c6c" stroke-width="1.8" stroke-dasharray="1.8 3.72" opacity="0.9"/>
<path d="M112.9,834.0 H120.9 M116.9,830.0 V838.0 M241.1,834.0 H249.1 M245.1,830.0 V838.0 M510.7,834.0 H518.7 M514.7,830.0 V838.0 M706.9,834.0 H714.9 M710.9,830.0 V838.0 M832.7,834.0 H840.7 M836.7,830.0 V838.0 M961.8,834.0 H969.8 M965.8,830.0 V838.0 M985.6,834.0 H993.6 M989.6,830.0 V838.0 M1115.7,834.0 H1123.7 M1119.7,830.0 V838.0 M1294.8,834.0 H1302.8 M1298.8,830.0 V838.0 M1341.8,834.0 H1349.8 M1345.8,830.0 V838.0 M1412.7,834.0 H1420.7 M1416.7,830.0 V838.0 M1481.9,834.0 H1489.9 M1485.9,830.0 V838.0 M1530.6,834.0 H1538.6 M1534.6,830.0 V838.0 M1732.1,834.0 H1740.1 M1736.1,830.0 V838.0 M1766.0,834.0 H1774.0 M1770.0,830.0 V838.0 M171.6,818.0 H179.6 M175.6,814.0 V822.0 M255.7,818.0 H263.7 M259.7,814.0 V822.0 M322.8,818.0 H330.8 M326.8,814.0 V822.0 M436.8,818.0 H444.8 M440.8,814.0 V822.0 M598.8,818.0 H606.8 M602.8,814.0 V822.0 M716.8,818.0 H724.8 M720.8,814.0 V822.0 M792.6,818.0 H800.6 M796.6,814.0 V822.0 M938.5,818.0 H946.5 M942.5,814.0 V822.0 M1005.7,818.0 H1013.7 M1009.7,814.0 V822.0 M1152.9,818.0 H1160.9 M1156.9,814.0 V822.0 M1250.8,818.0 H1258.8 M1254.8,814.0 V822.0 M1299.8,818.0 H1307.8 M1303.8,814.0 V822.0 M1348.8,818.0 H1356.8 M1352.8,814.0 V822.0 M1402.8,818.0 H1410.8 M1406.8,814.0 V822.0 M1466.9,818.0 H1474.9 M1470.9,814.0 V822.0 M1554.7,818.0 H1562.7 M1558.7,814.0 V822.0 M173.6,802.0 H181.6 M177.6,798.0 V806.0 M377.9,802.0 H385.9 M381.9,798.0 V806.0 M544.7,802.0 H552.7 M548.7,798.0 V806.0 M681.8,802.0 H689.8 M685.8,798.0 V806.0 M740.7,802.0 H748.7 M744.7,798.0 V806.0 M1074.7,802.0 H1082.7 M1078.7,798.0 V806.0 M1216.9,802.0 H1224.9 M1220.9,798.0 V806.0 M1304.9,802.0 H1312.9 M1308.9,798.0 V806.0 M1466.9,802.0 H1474.9 M1470.9,798.0 V806.0 M1559.8,802.0 H1567.8 M1563.8,798.0 V806.0 M201.8,785.0 H209.8 M205.8,781.0 V789.0 M399.4,785.0 H407.4 M403.4,781.0 V789.0 M524.6,785.0 H532.6 M528.6,781.0 V789.0 M638.7,785.0 H646.7 M642.7,781.0 V789.0 M814.8,785.0 H822.8 M818.8,781.0 V789.0 M958.8,785.0 H966.8 M962.8,781.0 V789.0 M1039.7,785.0 H1047.7 M1043.7,781.0 V789.0 M1187.7,785.0 H1195.7 M1191.7,781.0 V789.0 M1250.8,785.0 H1258.8 M1254.8,781.0 V789.0 M1324.7,785.0 H1332.7 M1328.7,781.0 V789.0 M1402.8,785.0 H1410.8 M1406.8,781.0 V789.0 M1545.6,785.0 H1553.6 M1549.6,781.0 V789.0 M355.7,769.0 H363.7 M359.7,765.0 V773.0 M425.6,769.0 H433.6 M429.6,765.0 V773.0 M475.6,769.0 H483.6 M479.6,765.0 V773.0 M534.5,769.0 H542.5 M538.5,765.0 V773.0 M570.9,769.0 H578.9 M574.9,765.0 V773.0 M630.7,769.0 H638.7 M634.7,765.0 V773.0 M973.8,769.0 H981.8 M977.8,765.0 V773.0 M1069.6,769.0 H1077.6 M1073.6,765.0 V773.0 M1108.7,769.0 H1116.7 M1112.7,765.0 V773.0 M1177.8,769.0 H1185.8 M1181.8,765.0 V773.0 M1255.7,769.0 H1263.7 M1259.7,765.0 V773.0 M1466.9,769.0 H1474.9 M1470.9,765.0 V773.0 M426.9,752.0 H434.9 M430.9,748.0 V756.0 M539.8,752.0 H547.8 M543.8,748.0 V756.0 M573.8,752.0 H581.8 M577.8,748.0 V756.0 M703.7,752.0 H711.7 M707.7,748.0 V756.0 M1093.7,752.0 H1101.7 M1097.7,748.0 V756.0 M1270.7,752.0 H1278.7 M1274.7,748.0 V756.0 M1476.8,752.0 H1484.8 M1480.8,748.0 V756.0 M436.8,736.0 H444.8 M440.8,732.0 V740.0 M630.7,736.0 H638.7 M634.7,732.0 V740.0 M1038.8,736.0 H1046.8 M1042.8,732.0 V740.0 M1167.9,736.0 H1175.9 M1171.9,732.0 V740.0 M1274.9,736.0 H1282.9 M1278.9,732.0 V740.0 M1496.9,736.0 H1504.9 M1500.9,732.0 V740.0 M598.8,720.0 H606.8 M602.8,716.0 V724.0 M726.7,720.0 H734.7 M730.7,716.0 V724.0 M1187.7,720.0 H1195.7 M1191.7,716.0 V724.0 M1270.7,720.0 H1278.7 M1274.7,716.0 V724.0 M686.8,703.0 H694.8 M690.8,699.0 V707.0 M1101.9,703.0 H1109.9 M1105.9,699.0 V707.0 M1206.9,703.0 H1214.9 M1210.9,699.0 V707.0 M1299.8,703.0 H1307.8 M1303.8,699.0 V707.0 M1118.8,687.0 H1126.8 M1122.8,683.0 V691.0" stroke="#fff" stroke-width="2.2" fill="none"/>
<g font-family="Liberation Sans" font-size="10.4" fill="#fff" text-anchor="middle"><text x="117.0" y="831.8">KSE</text><text x="254.7" y="831.8">ETA</text><text x="494.5" y="831.8">NZC</text><text x="710.8" y="831.8">NDA</text><text x="853.0" y="831.8">SPE</text><text x="945.4" y="831.8">ARD</text><text x="1024.9" y="831.8">EGE</text><text x="1142.4" y="831.8">NTA</text><text x="1284.0" y="831.8">MON</text><text x="1343.4" y="831.8">URS</text><text x="1411.9" y="831.8">AHY</text><text x="1485.8" y="831.8">GUM</text><text x="1535.4" y="831.8">OHY</text><text x="1736.2" y="831.8">XHE</text><text x="1770.8" y="831.8">EVI</text><text x="175.5" y="815.8">AVB</text><text x="255.0" y="815.8">ELY</text><text x="324.1" y="815.8">CAM</text><text x="432.0" y="815.8">SSG</text><text x="578.6" y="815.8">PCA</text><text x="720.6" y="815.8">AUD</text><text x="808.2" y="815.8">AUR</text><text x="931.0" y="815.8">DSX</text><text x="1009.7" y="815.8">OCU</text><text x="1137.3" y="815.8">OER</text><text x="1254.7" y="815.8">DKD</text><text x="1304.2" y="815.8">DSV</text><text x="1353.3" y="815.8">ALY</text><text x="1407.6" y="815.8">JLE</text><text x="1471.9" y="815.8">SCC</text><text x="1559.0" y="815.8">FEV</text><text x="176.1" y="799.8">LYR</text><text x="372.8" y="799.8">JMC</text><text x="558.8" y="799.8">JPE</text><text x="671.3" y="799.8">PAU</text><text x="774.2" y="799.8">NIA</text><text x="1050.0" y="799.8">STA</text><text x="1205.4" y="799.8">NOO</text><text x="1353.5" y="799.8">COM</text><text x="1470.7" y="799.8">NCC</text><text x="1563.4" y="799.8">FED</text><text x="205.0" y="782.8">HVI</text><text x="412.1" y="782.8">ARI</text><text x="529.8" y="782.8">SZC</text><text x="617.7" y="782.8">CAP</text><text x="818.3" y="782.8">NUE</text><text x="961.2" y="782.8">OCT</text><text x="1059.2" y="782.8">ORI</text><text x="1186.5" y="782.8">AMO</text><text x="1255.3" y="782.8">DPC</text><text x="1329.1" y="782.8">XVI</text><text x="1407.8" y="782.8">QUA</text><text x="1559.6" y="782.8">AAN</text><text x="353.3" y="766.8">TAH</text><text x="431.4" y="766.8">JEA</text><text x="480.5" y="766.8">JIP</text><text x="538.9" y="766.8">PPS</text><text x="578.9" y="766.8">ZCS</text><text x="632.9" y="766.8">GDR</text><text x="970.0" y="766.8">DRA</text><text x="1073.5" y="766.8">LUM</text><text x="1112.7" y="766.8">RPU</text><text x="1176.4" y="766.8">THA</text><text x="1259.4" y="766.8">PSU</text><text x="1470.6" y="766.8">XCB</text><text x="431.4" y="749.8">JRC</text><text x="544.4" y="749.8">CAN</text><text x="578.0" y="749.8">FAN</text><text x="681.0" y="749.8">PER</text><text x="1048.9" y="749.8">CTA</text><text x="1264.3" y="749.8">HYD</text><text x="1481.2" y="749.8">XUM</text><text x="441.4" y="733.8">COR</text><text x="657.1" y="733.8">SDA</text><text x="1049.2" y="733.8">LMI</text><text x="1166.6" y="733.8">LEO</text><text x="1274.8" y="733.8">EHY</text><text x="1500.0" y="733.8">ECV</text><text x="602.8" y="717.8">JXA</text><text x="714.9" y="717.8">KCG</text><text x="1156.7" y="717.8">AND</text><text x="1274.8" y="717.8">DAD</text><text x="666.5" y="700.8">ERI</text><text x="1108.6" y="700.8">SLD</text><text x="1211.5" y="700.8">ORS</text><text x="1299.0" y="700.8">GEM</text><text x="1122.8" y="684.8">KUM</text></g>
<rect x="19.6" y="641.5" width="1765.7" height="200.8" fill="none" stroke="#fff" stroke-width="1.2"/>
<path d="M19.6,842.3 V846.8 M264.7,842.3 V846.8 M509.9,842.3 V846.8 M755.0,842.3 V846.8 M1000.1,842.3 V846.8 M1245.2,842.3 V846.8 M1490.3,842.3 V846.8 M1735.5,842.3 V846.8" stroke="#fff" stroke-width="1.1"/>
<g font-family="Liberation Sans" font-size="14" fill="#fff" text-anchor="middle"><text x="19.6" y="862.3">0</text><text x="264.7" y="862.3">50</text><text x="509.9" y="862.3">100</text><text x="755.0" y="862.3">150</text><text x="1000.1" y="862.3">200</text><text x="1245.2" y="862.3">250</text><text x="1490.3" y="862.3">300</text><text x="1735.5" y="862.3">350</text></g>
<text x="829.3" y="882.5" font-family="Liberation Sans" font-size="14" fill="#fff" textLength="146.5" lengthAdjust="spacingAndGlyphs">Solar longitude (deg)</text>
</svg></body></html>
